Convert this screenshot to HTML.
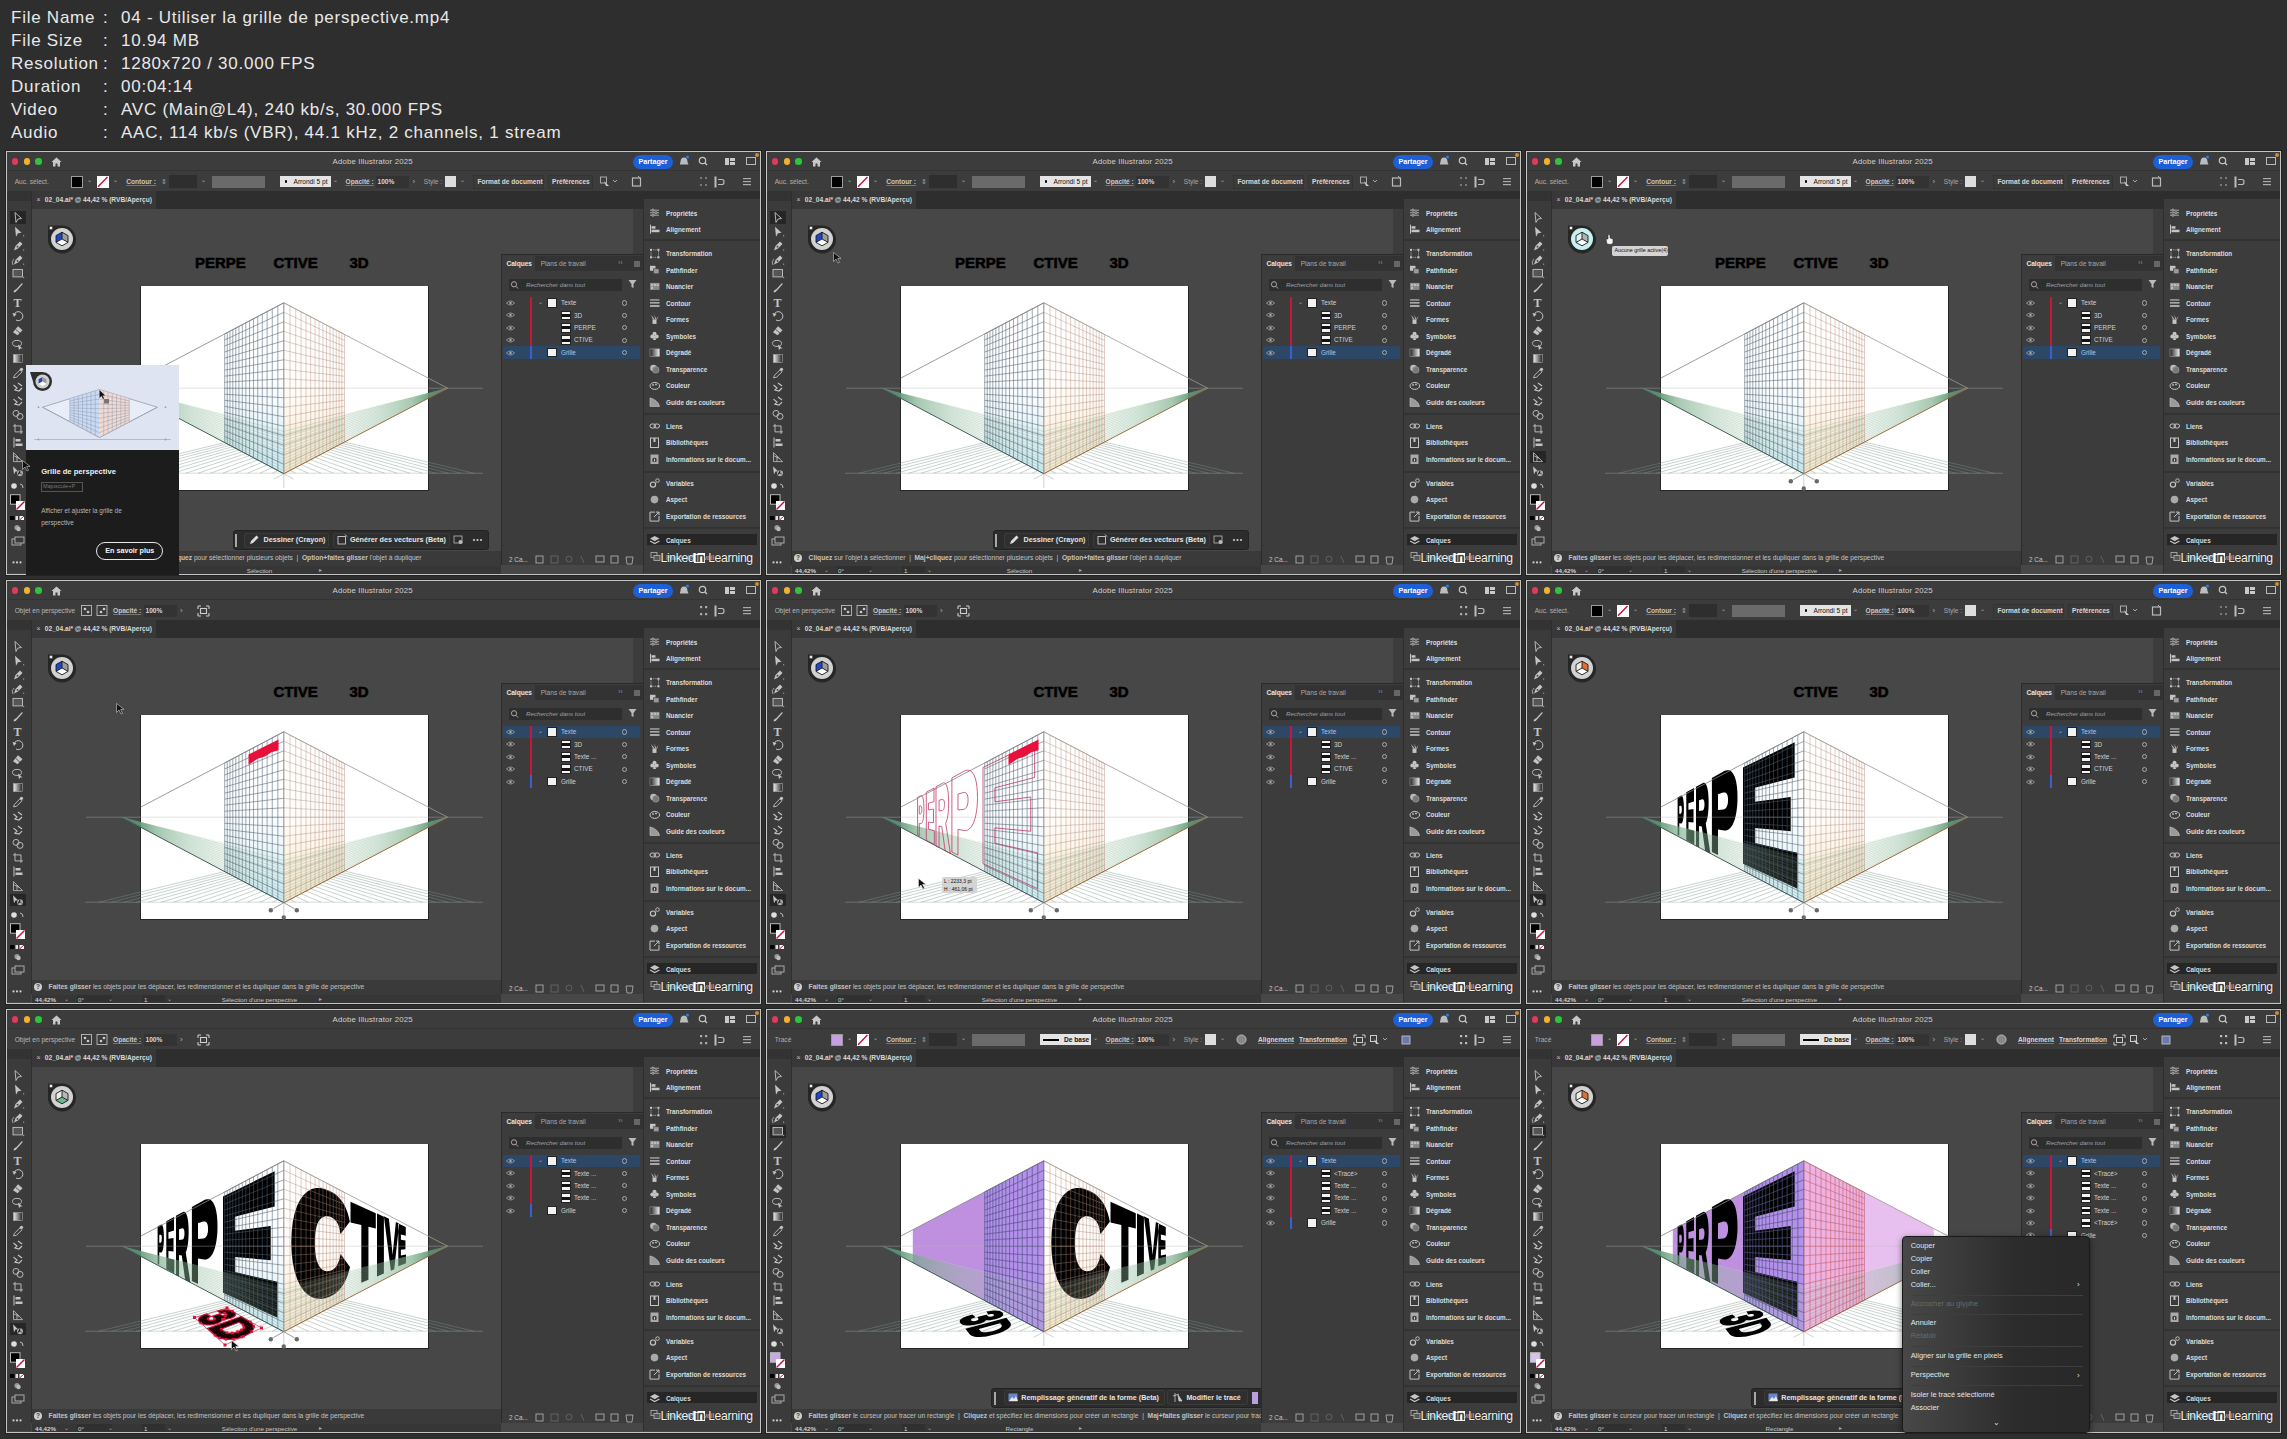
<!DOCTYPE html><html><head><meta charset="utf-8"><style>*{margin:0;padding:0}body{width:2287px;height:1439px;background:#2e2e2e;position:relative;overflow:hidden;font-family:"Liberation Sans", sans-serif}div,svg{position:absolute}.tile{width:755px;height:424px;background:#c4c4c4;overflow:hidden;box-shadow:0 0 0 1px #222}.tile div,.tile svg{position:absolute}.t{white-space:nowrap}.hd{color:#e8e8e8;font-size:17px;line-height:20px;white-space:nowrap;letter-spacing:0.75px}</style></head><body><div class="hd" style="left:11px;top:7.5px">File Name</div><div class="hd" style="left:103px;top:7.5px">:</div><div class="hd" style="left:121px;top:7.5px">04 - Utiliser la grille de perspective.mp4</div><div class="hd" style="left:11px;top:30.5px">File Size</div><div class="hd" style="left:103px;top:30.5px">:</div><div class="hd" style="left:121px;top:30.5px">10.94 MB</div><div class="hd" style="left:11px;top:53.5px">Resolution</div><div class="hd" style="left:103px;top:53.5px">:</div><div class="hd" style="left:121px;top:53.5px">1280x720 / 30.000 FPS</div><div class="hd" style="left:11px;top:76.5px">Duration</div><div class="hd" style="left:103px;top:76.5px">:</div><div class="hd" style="left:121px;top:76.5px">00:04:14</div><div class="hd" style="left:11px;top:99.5px">Video</div><div class="hd" style="left:103px;top:99.5px">:</div><div class="hd" style="left:121px;top:99.5px">AVC (Main@L4), 240 kb/s, 30.000 FPS</div><div class="hd" style="left:11px;top:122.5px">Audio</div><div class="hd" style="left:103px;top:122.5px">:</div><div class="hd" style="left:121px;top:122.5px">AAC, 114 kb/s (VBR), 44.1 kHz, 2 channels, 1 stream</div><div class="tile" style="left:6px;top:151px"><div style="left:1px;top:1px;width:753px;height:422px;background:#474747;"></div><div style="left:1px;top:1px;width:753px;height:19px;background:#3c3c3c;"></div><div style="left:1px;top:19px;width:753px;height:1px;background:#333;"></div><div style="left:5.7px;top:7.4px;width:6.6px;height:6.6px;border-radius:50%;background:#e0395a"></div><div style="left:17.5px;top:7.4px;width:6.6px;height:6.6px;border-radius:50%;background:#f0b030"></div><div style="left:29.3px;top:7.4px;width:6.6px;height:6.6px;border-radius:50%;background:#2ec43c"></div><svg style="left:45px;top:6px" width="11" height="10" viewBox="0 0 11 10"><path d="M5.5 0.5 L10.5 5 L9 5 L9 9.5 L6.5 9.5 L6.5 6.5 L4.5 6.5 L4.5 9.5 L2 9.5 L2 5 L0.5 5 Z" fill="#c8c8c8"/></svg><div class="t" style="left:326.5px;top:6.32px;font-size:7.8px;line-height:9.36px;color:#d0d0d0;font-weight:normal;letter-spacing:0.18px">Adobe Illustrator 2025</div><div class="t" style="left:627px;top:3.9px;width:40px;height:13.9px;border-radius:7px;background:#1d5fd6;color:#fff;font-size:7.2px;line-height:13.9px;text-align:center;font-weight:bold">Partager</div><svg style="left:674px;top:4px" width="40" height="13" viewBox="0 0 40 13"><path d="M4 2.5 Q7.5 2.5 7.5 7 L8.5 9.5 L-0.5 9.5 L0.5 7 Q0.5 2.5 4 2.5Z" fill="#bcbcbc"/><circle cx="7.5" cy="2" r="1.6" fill="#2a7de0"/><circle cx="22.5" cy="5.5" r="3.2" fill="none" stroke="#c8c8c8" stroke-width="1.2"/><path d="M24.8 7.8 L27 10" stroke="#c8c8c8" stroke-width="1.3"/></svg><div style="left:718.5px;top:6.5px;width:10px;height:7px;background:#c8c8c8;"></div><div style="left:723px;top:6.5px;width:1px;height:7px;background:#3c3c3c;"></div><div style="left:723px;top:9.5px;width:6px;height:1px;background:#3c3c3c;"></div><div style="left:739.5px;top:6px;width:10px;height:8px;background:transparent;border:1px solid #b8b8b8;box-sizing:border-box"></div><div style="left:749px;top:1.5px;width:4px;height:4px;border-radius:50%;background:#d08a30"></div><div style="left:1px;top:20px;width:753px;height:20px;background:#3c3c3c;"></div><div class="t" style="left:8.7px;top:26.54px;font-size:6.6px;line-height:7.92px;color:#b0b0b0;font-weight:normal;">Auc. sélect.</div><div style="left:65.3px;top:24.9px;width:11.8px;height:11.7px;background:#000;border:1px solid #9a9a9a;box-sizing:border-box"></div><div class="t" style="left:81px;top:26.4px;font-size:6px;line-height:7.2px;color:#b0b0b0;font-weight:normal;">⌄</div><div style="left:91.3px;top:24.9px;width:11.5px;height:11.7px;background:#fff;"></div><svg style="left:91.3px;top:24.9px" width="11.5" height="11.7"><path d="M1 10.7 L10.5 1" stroke="#c0103a" stroke-width="1.4"/></svg><div class="t" style="left:107px;top:26.4px;font-size:6px;line-height:7.2px;color:#b0b0b0;font-weight:normal;">⌄</div><div class="t" style="left:120.2px;top:27.04px;font-size:6.6px;line-height:7.92px;color:#c8c8c8;font-weight:bold;text-decoration:underline;text-decoration-color:#777">Contour :</div><div class="t" style="left:155px;top:26.8px;font-size:7px;line-height:8.4px;color:#a0a0a0;font-weight:normal;">⇕</div><div style="left:162.9px;top:24px;width:28.5px;height:12.5px;background:#2e2e2e;"></div><div class="t" style="left:195px;top:26.4px;font-size:6px;line-height:7.2px;color:#b0b0b0;font-weight:normal;">⌄</div><div style="left:206px;top:24.5px;width:53.3px;height:12px;background:#6a6a6a;"></div><div style="left:273.8px;top:24.9px;width:51.1px;height:11.1px;background:#e4e4e4;"></div><div style="left:278.5px;top:29.3px;width:2.4px;height:2.4px;border-radius:50%;background:#000"></div><div class="t" style="left:287.5px;top:26.54px;font-size:6.6px;line-height:7.92px;color:#111;font-weight:normal;">Arrondi 5 pt</div><div class="t" style="left:327px;top:26.4px;font-size:6px;line-height:7.2px;color:#b0b0b0;font-weight:normal;">⌄</div><div class="t" style="left:339.6px;top:26.54px;font-size:6.6px;line-height:7.92px;color:#c8c8c8;font-weight:bold;text-decoration:underline;text-decoration-color:#777">Opacité :</div><div style="left:370px;top:24.5px;width:32.5px;height:12px;background:#333;"></div><div class="t" style="left:371.5px;top:26.54px;font-size:6.6px;line-height:7.92px;color:#d8d8d8;font-weight:bold;">100%</div><div class="t" style="left:406.5px;top:25.7px;font-size:8px;line-height:9.6px;color:#b0b0b0;font-weight:normal;">›</div><div class="t" style="left:417.8px;top:27.04px;font-size:6.6px;line-height:7.92px;color:#a8a8a8;font-weight:normal;">Style :</div><div style="left:438.9px;top:24.9px;width:11.1px;height:11.1px;background:#dedede;"></div><div class="t" style="left:454px;top:26.4px;font-size:6px;line-height:7.2px;color:#b0b0b0;font-weight:normal;">⌄</div><div style="left:467px;top:23.5px;width:71px;height:14px;background:#3a3a3a;border:1px solid #333;box-sizing:border-box"></div><div class="t" style="left:471.5px;top:26.54px;font-size:6.6px;line-height:7.92px;color:#d8d8d8;font-weight:bold;">Format de document</div><div style="left:541.5px;top:23.5px;width:45px;height:14px;background:#3a3a3a;border:1px solid #333;box-sizing:border-box"></div><div class="t" style="left:546px;top:26.54px;font-size:6.6px;line-height:7.92px;color:#d8d8d8;font-weight:bold;">Préférences</div><svg style="left:592px;top:24px" width="160" height="14" viewBox="0 0 160 14"><rect x="2.5" y="2" width="6" height="6" fill="none" stroke="#aaa" stroke-width="1"/><path d="M6 6 L11 11 L8 11Z" fill="#ccc"/><path d="M15 5 L17 7 L19 5" stroke="#aaa" fill="none"/><rect x="34.5" y="3" width="8" height="8" fill="none" stroke="#bbb" stroke-width="1.2"/><path d="M40 1 L42 3" stroke="#bbb"/><g fill="#777"><rect x="102" y="2" width="2" height="2"/><rect x="107" y="2" width="2" height="2"/><rect x="102" y="9" width="2" height="2"/><rect x="107" y="9" width="2" height="2"/></g><rect x="116.5" y="1.5" width="2" height="11" fill="#bbb"/><path d="M120 4.5 L124 4.5 Q126 4.5 126 7 Q126 9.5 124 9.5 L120 9.5" stroke="#bbb" fill="none" stroke-width="1.2"/><g fill="#aaa"><rect x="145" y="3" width="8" height="1.2"/><rect x="145" y="6" width="8" height="1.2"/><rect x="145" y="9" width="8" height="1.2"/></g></svg><div style="left:1px;top:40px;width:753px;height:18px;background:#2e2e2e;"></div><div style="left:25.7px;top:40px;width:124.3px;height:18px;background:#383838;"></div><div class="t" style="left:30.5px;top:44.8px;font-size:7px;line-height:8.4px;color:#c0c0c0;font-weight:normal;">×</div><div class="t" style="left:38.8px;top:45.04px;font-size:6.6px;line-height:7.92px;color:#d8d8d8;font-weight:bold;">02_04.ai* @ 44,42 % (RVB/Aperçu)</div><div style="left:627px;top:58px;width:10px;height:45px;background:#3c3c3c;"></div><div style="left:627px;top:103px;width:1px;height:0px;background:#333;"></div><div style="left:134.3px;top:134.5px;width:288.3px;height:205.2px;background:#262626"></div><div style="left:134.8px;top:135px;width:286.8px;height:203.7px;background:#fff"></div><svg style="left:0;top:0" width="755" height="424"><defs><linearGradient id="wl" x1="115.6" y1="0" x2="278" y2="0" gradientUnits="userSpaceOnUse"><stop offset="0" stop-color="#1f7a48" stop-opacity="1"/><stop offset="0.12" stop-color="#5aac72" stop-opacity="0.75"/><stop offset="0.22" stop-color="#86c690" stop-opacity="0.5"/><stop offset="0.45" stop-color="#aedcb4" stop-opacity="0.3"/><stop offset="0.65" stop-color="#c4e6c8" stop-opacity="0.2"/><stop offset="1" stop-color="#c8e8d0" stop-opacity="0.1"/></linearGradient><linearGradient id="wr" x1="441.6" y1="0" x2="278" y2="0" gradientUnits="userSpaceOnUse"><stop offset="0" stop-color="#1f7a48" stop-opacity="1"/><stop offset="0.12" stop-color="#5aac72" stop-opacity="0.75"/><stop offset="0.22" stop-color="#86c690" stop-opacity="0.5"/><stop offset="0.45" stop-color="#aedcb4" stop-opacity="0.3"/><stop offset="0.65" stop-color="#c4e6c8" stop-opacity="0.2"/><stop offset="1" stop-color="#c8e8d0" stop-opacity="0.1"/></linearGradient><linearGradient id="pl" x1="0" y1="150" x2="0" y2="323" gradientUnits="userSpaceOnUse"><stop offset="0" stop-color="#ffffff" stop-opacity="0"/><stop offset="0.5" stop-color="#eef6fb" stop-opacity="0.3"/><stop offset="0.75" stop-color="#d8eef6" stop-opacity="0.7"/><stop offset="1" stop-color="#c4e8f2" stop-opacity="0.9"/></linearGradient><linearGradient id="pr" x1="0" y1="150" x2="0" y2="323" gradientUnits="userSpaceOnUse"><stop offset="0" stop-color="#ffffff" stop-opacity="0"/><stop offset="0.5" stop-color="#fdf4ea" stop-opacity="0.3"/><stop offset="0.75" stop-color="#f8ecd4" stop-opacity="0.7"/><stop offset="1" stop-color="#f4e2c4" stop-opacity="0.9"/></linearGradient><clipPath id="cv"><rect x="25" y="58" width="602" height="341"/></clipPath></defs><g clip-path="url(#cv)"><path d="M277.8 151.8 L218.7 182.92 L218.7 291.55 L277.8 322.7Z" fill="url(#pl)"/><path d="M277.8 151.8 L338.5 183.45 L338.5 291.02 L277.8 322.7Z" fill="url(#pr)"/><path d="M271.83 319.55L266.37 322.2M266.28 316.63L253.99 322.2M261.12 313.91L241.6 322.2M256.29 311.36L229.22 322.2M251.78 308.98L216.83 322.2M247.55 306.75L204.45 322.2M243.57 304.66L192.06 322.2M239.82 302.68L179.68 322.2M236.29 300.82L167.29 322.2M232.95 299.06L154.9 322.2M229.8 297.4L142.52 322.2M226.8 295.82L130.13 322.2M223.96 294.32L117.75 322.2M221.27 292.9L105.36 322.2M218.7 291.55L92.98 322.2M283.99 319.47L289.57 322.2M289.72 316.48L302.29 322.2M295.06 313.69L315.01 322.2M300.03 311.1L327.73 322.2M304.67 308.67L340.45 322.2M309.02 306.4L353.18 322.2M313.1 304.27L365.9 322.2M316.94 302.27L378.62 322.2M320.56 300.38L391.34 322.2M323.97 298.6L404.06 322.2M327.19 296.92L416.78 322.2M330.25 295.32L429.5 322.2M333.14 293.81L442.22 322.2M335.89 292.38L454.94 322.2M338.5 291.02L467.66 322.2" stroke="#7a9488" stroke-opacity="0.7" stroke-width="0.6" fill="none"/><path d="M115.6 237.2 L277.8 322.7 L277.8 277.5 Z" fill="url(#wl)"/><path d="M441.6 237.2 L277.8 322.7 L277.8 277.5 Z" fill="url(#wr)"/><path d="M115.6 237.2L277.8 280.51M441.6 237.2L277.8 280.51M115.6 237.2L277.8 283.53M441.6 237.2L277.8 283.53M115.6 237.2L277.8 286.54M441.6 237.2L277.8 286.54M115.6 237.2L277.8 289.55M441.6 237.2L277.8 289.55M115.6 237.2L277.8 292.57M441.6 237.2L277.8 292.57M115.6 237.2L277.8 295.58M441.6 237.2L277.8 295.58M115.6 237.2L277.8 298.59M441.6 237.2L277.8 298.59M115.6 237.2L277.8 301.61M441.6 237.2L277.8 301.61M115.6 237.2L277.8 304.62M441.6 237.2L277.8 304.62M115.6 237.2L277.8 307.63M441.6 237.2L277.8 307.63M115.6 237.2L277.8 310.65M441.6 237.2L277.8 310.65M115.6 237.2L277.8 313.66M441.6 237.2L277.8 313.66M115.6 237.2L277.8 316.67M441.6 237.2L277.8 316.67M115.6 237.2L277.8 319.69M441.6 237.2L277.8 319.69" stroke="#6a9080" stroke-opacity="0.45" stroke-width="0.5" fill="none"/><path d="M80 237.2 L477 237.2" stroke="#b8b8b8" stroke-opacity="0.55" stroke-width="0.7"/><path d="M79 322.2 L477 322.2" stroke="#a0aea6" stroke-opacity="0.6" stroke-width="0.7"/><path d="M277.8 151.8L218.7 182.92M277.8 161.29L218.7 188.95M277.8 170.79L218.7 194.99M277.8 180.28L218.7 201.02M277.8 189.78L218.7 207.06M277.8 199.27L218.7 213.09M277.8 208.77L218.7 219.13M277.8 218.26L218.7 225.16M277.8 227.76L218.7 231.2M277.8 237.25L218.7 237.23M277.8 246.74L218.7 243.27M277.8 256.24L218.7 249.3M277.8 265.73L218.7 255.34M277.8 275.23L218.7 261.37M277.8 284.72L218.7 267.41M277.8 294.22L218.7 273.44M277.8 303.71L218.7 279.48M277.8 313.21L218.7 285.51M277.8 322.7L218.7 291.55M277.8 151.8L277.8 322.7M271.83 154.94L271.83 319.55M266.28 157.86L266.28 316.63M261.12 160.58L261.12 313.91M256.29 163.12L256.29 311.36M251.78 165.5L251.78 308.98M247.55 167.73L247.55 306.75M243.57 169.82L243.57 304.66M239.82 171.8L239.82 302.68M236.29 173.66L236.29 300.82M232.95 175.41L232.95 299.06M229.8 177.07L229.8 297.4M226.8 178.65L226.8 295.82M223.96 180.14L223.96 294.32M221.27 181.57L221.27 292.9M218.7 182.92L218.7 291.55" stroke="#4c5e70" stroke-opacity="0.9" stroke-width="0.6" fill="none"/><path d="M277.8 151.8L338.5 183.45M277.8 161.29L338.5 189.42M277.8 170.79L338.5 195.4M277.8 180.28L338.5 201.38M277.8 189.78L338.5 207.35M277.8 199.27L338.5 213.33M277.8 208.77L338.5 219.3M277.8 218.26L338.5 225.28M277.8 227.76L338.5 231.26M277.8 237.25L338.5 237.23M277.8 246.74L338.5 243.21M277.8 256.24L338.5 249.18M277.8 265.73L338.5 255.16M277.8 275.23L338.5 261.14M277.8 284.72L338.5 267.11M277.8 294.22L338.5 273.09M277.8 303.71L338.5 279.06M277.8 313.21L338.5 285.04M277.8 322.7L338.5 291.02M277.8 151.8L277.8 322.7M283.99 155.03L283.99 319.47M289.72 158.02L289.72 316.48M295.06 160.8L295.06 313.69M300.03 163.39L300.03 311.1M304.67 165.81L304.67 308.67M309.02 168.08L309.02 306.4M313.1 170.21L313.1 304.27M316.94 172.21L316.94 302.27M320.56 174.09L320.56 300.38M323.97 175.87L323.97 298.6M327.19 177.55L327.19 296.92M330.25 179.14L330.25 295.32M333.14 180.65L333.14 293.81M335.89 182.09L335.89 292.38M338.5 183.45L338.5 291.02" stroke="#b08472" stroke-opacity="0.75" stroke-width="0.55" fill="none"/><path d="M277.8 151.8 L134.8 227.09" stroke="#808080" stroke-width="0.8"/><path d="M277.8 151.8 L441.6 237.2" stroke="#a09890" stroke-width="0.8"/><path d="M115.6 237.2 L277.8 322.7" stroke="#3f5a5a" stroke-width="1"/><path d="M441.6 237.2 L277.8 322.7" stroke="#9a6a40" stroke-width="1"/><path d="M277.8 322.7 L277.8 337 M267.8 328.2 L277.8 322.7 L287.8 328.2" stroke="#b0b0b0" stroke-width="0.6" fill="none"/></g></svg><div style="left:1px;top:40px;width:23.5px;height:382px;background:#3b3b3b;"></div><div style="left:24.5px;top:58px;width:1px;height:356px;background:#2f2f2f;"></div><div style="left:1px;top:40px;width:23.5px;height:10px;background:#333;"></div><div style="left:4.4px;top:60.1px;width:15.3px;height:12.7px;background:#262626;"></div><svg style="left:1px;top:0" width="24" height="424" viewBox="1 0 24 424"><defs><linearGradient id="tg"><stop offset="0" stop-color="#eee"/><stop offset="1" stop-color="#222"/></linearGradient></defs><path d="M9 61.5 L15.5 67.5 L12 68 L10 71.5 Z" fill="none" stroke="#c4c4c4" stroke-width="0.9"/><path d="M9 75.7 L15.5 81.7 L12 82.2 L10 85.7 Z" fill="#c4c4c4"/><rect x="17" y="84.2" width="1.2" height="1.2" fill="#999"/><path d="M8 99.4 L9.5 94.9 L14 90.4 L16.5 92.9 L12 97.4 Z" fill="#c4c4c4"/><circle cx="11.5" cy="95.7" r="0.9" fill="#3b3b3b"/><rect x="17" y="98.4" width="1.2" height="1.2" fill="#999"/><path d="M8 113.6 L9.5 109.1 L14 104.6 L16.5 107.1 L12 111.6 Z" fill="#c4c4c4"/><circle cx="11.5" cy="109.9" r="0.9" fill="#3b3b3b"/><rect x="17" y="112.6" width="1.2" height="1.2" fill="#999"/><path d="M7 114.1 Q5 110.1 8 108.1" stroke="#c4c4c4" fill="none" stroke-width="0.8"/><rect x="7" y="118.4" width="9.5" height="7.5" fill="#555" stroke="#c4c4c4" stroke-width="0.9"/><rect x="17" y="125.9" width="1.2" height="1.2" fill="#999"/><path d="M7.5 141.6 Q8 138.6 10 138.6 L16 132.1 L16.8 132.9 L11 139.6 Q10 141.6 7.5 141.6Z" fill="#c4c4c4"/><text x="7.5" y="155.6" font-family="Liberation Serif" font-weight="bold" font-size="12" fill="#c4c4c4">T</text><path d="M8 164 A4.5 4.5 0 1 1 10 169" stroke="#c4c4c4" fill="none" stroke-width="1"/><path d="M6.5 162 L8 166 L10.5 163Z" fill="#c4c4c4"/><path d="M7 181.2 L12 175.2 L16.5 179.2 L11.5 184.2 Z" fill="#c4c4c4"/><path d="M9.5 178.2 L14 182.2" stroke="#3b3b3b" stroke-width="0.8"/><ellipse cx="11" cy="192.4" rx="4.5" ry="3" fill="none" stroke="#c4c4c4" stroke-width="0.9"/><path d="M12 193.4 L16.5 197.4 L14 197.6 L13 199.4Z" fill="#c4c4c4"/><rect x="7.5" y="203.6" width="9" height="8" fill="url(#tg)" stroke="#aaa" stroke-width="0.6"/><path d="M7.5 226.8 L8.5 224.3 L14 218.8 L16 220.8 L10.5 226.3Z" fill="none" stroke="#c4c4c4" stroke-width="0.9"/><circle cx="15.5" cy="218.3" r="1.6" fill="#c4c4c4"/><path d="M7.5 234 L11 237 L9 239 L13 240 L16 237" stroke="#c4c4c4" fill="none" stroke-width="1.2"/><path d="M12 232 L16 235" stroke="#c4c4c4" stroke-width="1.2"/><path d="M7.5 248.1 L11 251.1 L9 253.1 L13 254.1 L16 251.1" stroke="#c4c4c4" fill="none" stroke-width="1.2"/><path d="M12 246.1 L16 249.1" stroke="#c4c4c4" stroke-width="1.2"/><circle cx="10" cy="262.4" r="3" fill="none" stroke="#c4c4c4" stroke-width="0.9"/><circle cx="14" cy="265.4" r="3" fill="none" stroke="#c4c4c4" stroke-width="0.9"/><path d="M9 272.9 L9 280.9 L17 280.9 M7 274.9 L15 274.9 L15 282.9" stroke="#c4c4c4" fill="none" stroke-width="0.9"/><rect x="7.5" y="286.5" width="1" height="10" fill="#c4c4c4"/><rect x="9.5" y="288" width="5" height="2.5" fill="#c4c4c4"/><rect x="9.5" y="292.5" width="7" height="2.5" fill="#c4c4c4"/><path d="M7.5 301.6 L7.5 310.6 L16.5 310.6 Z M7.5 304.6 L13.5 307.6 M11 305.1 L11 310.6" stroke="#c4c4c4" fill="none" stroke-width="0.8"/><path d="M7 315.2 L12 320.2 L9.5 320.5 L8 323.2Z" fill="#c4c4c4"/><circle cx="14" cy="322.2" r="3" fill="#aaa"/><path d="M14 319.2 L14 322.2 L11.5 323.7 M14 322.2 L16.5 323.7" stroke="#3b3b3b" stroke-width="0.6"/><circle cx="8" cy="335" r="2.8" fill="#ddd"/><path d="M14 333 Q17 333 17 337" stroke="#bbb" fill="none"/><rect x="4.5" y="343.7" width="9.5" height="9.5" fill="#000" stroke="#bbb" stroke-width="1"/><rect x="10" y="350" width="9" height="9" fill="#fff"/><path d="M10.5 358.5 L18.5 350.5" stroke="#c0103a" stroke-width="1.4"/><rect x="4" y="365" width="4.5" height="4" fill="#000"/><rect x="9.5" y="365" width="2.5" height="4" fill="#ddd"/><rect x="13.5" y="365" width="4.5" height="4" fill="#fff"/><path d="M13.5 369 L18 365" stroke="#c0103a"/><circle cx="11" cy="376.5" r="2.6" fill="#999"/><circle cx="12.5" cy="378" r="2.2" fill="#bbb"/><rect x="6" y="388" width="9" height="6" fill="none" stroke="#aaa"/><rect x="9" y="386" width="9" height="6" fill="#3b3b3b" stroke="#aaa"/><g fill="#ccc"><circle cx="7.5" cy="411.4" r="1.1"/><circle cx="11" cy="411.4" r="1.1"/><circle cx="14.5" cy="411.4" r="1.1"/></g></svg><svg style="left:40.6px;top:73.3px" width="30" height="30" viewBox="-15 -15 30 30"><path d="M-14 -13.5 L0 -13.5 A14 14 0 1 1 -14 0 Z" fill="#262626"/><circle r="11" fill="#d2d2d2"/><path d="M0 -6.8 L0 0 L-6 3.4 L-6 -3.4Z" fill="#1f45c8"/><path d="M0 -6.8 L6 -3.4 L6 3.4 L0 0Z" fill="#9a9a9a"/><path d="M0 0 L6 3.4 L0 6.8 L-6 3.4Z" fill="#ffffff"/><path d="M0 -6.8 L6 -3.4 L6 3.4 L0 6.8 L-6 3.4 L-6 -3.4Z M0 0 L0 -6.8 M0 0 L-6 3.4 M0 0 L6 3.4" fill="none" stroke="#1a1a1a" stroke-width="0.9"/><rect x="-12.3" y="-12.3" width="2.6" height="2.6" fill="#eee"/></svg><div class="t" style="left:189px;top:102.5px;font-size:15px;line-height:18px;color:#000;font-weight:bold;-webkit-text-stroke:0.55px #000">PERPE</div><div class="t" style="left:267.5px;top:102.5px;font-size:15px;line-height:18px;color:#000;font-weight:bold;-webkit-text-stroke:0.55px #000">CTIVE</div><div class="t" style="left:343.5px;top:102.5px;font-size:15px;line-height:18px;color:#000;font-weight:bold;-webkit-text-stroke:0.55px #000">3D</div><div style="left:25.5px;top:399.5px;width:469px;height:15px;background:#3a3a3a;"></div><div style="left:25.5px;top:414.5px;width:469px;height:8px;background:#363636;"></div><div class="t" style="left:28px;top:403.2px;width:8px;height:8px;border-radius:50%;background:#cfcfcf;color:#3a3a3a;font-size:6.5px;line-height:8px;text-align:center;font-weight:bold">?</div><div class="t" style="left:42.6px;top:403.31px;font-size:6.65px;line-height:7.98px;color:#c4c4c4;font-weight:normal;"><b>Cliquez</b> sur l'objet à sélectionner&nbsp; |&nbsp; <b>Maj+cliquez</b> pour sélectionner plusieurs objets&nbsp; |&nbsp; <b>Option+faites glisser</b> l'objet à dupliquer</div><div class="t" style="left:29px;top:416.08px;font-size:6.2px;line-height:7.44px;color:#d0d0d0;font-weight:bold;">44,42%</div><div class="t" style="left:58px;top:416px;font-size:5.5px;line-height:6.6px;color:#aaa;font-weight:normal;">⌄</div><div style="left:71px;top:415px;width:35px;height:7px;background:#303030;"></div><div class="t" style="left:72px;top:416.08px;font-size:6.2px;line-height:7.44px;color:#d0d0d0;font-weight:normal;">0°</div><div class="t" style="left:102px;top:416px;font-size:5.5px;line-height:6.6px;color:#aaa;font-weight:normal;">⌄</div><div style="left:136px;top:415px;width:23px;height:7px;background:#303030;"></div><div class="t" style="left:138px;top:416.08px;font-size:6.2px;line-height:7.44px;color:#d0d0d0;font-weight:normal;">1</div><div class="t" style="left:161px;top:416px;font-size:5.5px;line-height:6.6px;color:#aaa;font-weight:normal;">⌄</div><div class="t" style="left:183.5px;top:416.08px;font-size:6.2px;line-height:7.44px;color:#c8c8c8;font-weight:normal;width:140px;text-align:center">Sélection</div><div class="t" style="left:313px;top:416.2px;font-size:6px;line-height:7.2px;color:#aaa;font-weight:normal;">▸</div><div style="left:226.5px;top:379px;width:256.2px;height:19.8px;background:#2c2c2c;border:1px solid #222;border-radius:3px;box-sizing:border-box"></div><div style="left:229px;top:382.5px;width:1.6px;height:13px;background:#a8a8a8;"></div><div style="left:238.4px;top:381.5px;width:84.5px;height:15px;background:#2f2f2f;border:1px solid #3a3a3a;box-sizing:border-box;border-radius:2px"></div><svg style="left:243px;top:384px" width="10" height="10"><path d="M1 9 L2 6 L7.5 0.5 L9.5 2.5 L4 8 Z" fill="#ddd"/></svg><div class="t" style="left:257.5px;top:384.68px;font-size:7.2px;line-height:8.64px;color:#e4e4e4;font-weight:bold;">Dessiner (Crayon)</div><div style="left:326.8px;top:381.5px;width:117.2px;height:15px;background:#2f2f2f;border:1px solid #3a3a3a;box-sizing:border-box;border-radius:2px"></div><svg style="left:331px;top:383px" width="11" height="11"><rect x="1" y="2.5" width="7.5" height="7.5" fill="none" stroke="#ccc" stroke-width="0.9"/><path d="M8 0.5 L10 2.5" stroke="#ccc"/></svg><div class="t" style="left:344px;top:384.68px;font-size:7.2px;line-height:8.64px;color:#e4e4e4;font-weight:bold;">Générer des vecteurs (Beta)</div><svg style="left:447px;top:384px" width="34" height="10"><rect x="1" y="1" width="8" height="7" fill="none" stroke="#bbb" stroke-width="0.8"/><circle cx="7.5" cy="7" r="2" fill="#bbb"/><g fill="#ccc"><circle cx="21" cy="5" r="1.1"/><circle cx="24.5" cy="5" r="1.1"/><circle cx="28" cy="5" r="1.1"/></g></svg><div style="left:494.5px;top:103px;width:142px;height:311px;background:#3c3c3c;border-left:1px solid #2a2a2a;border-top:1px solid #2a2a2a;box-sizing:border-box"></div><div style="left:495.5px;top:105px;width:141px;height:15.3px;background:#333;"></div><div style="left:495.5px;top:105px;width:33.5px;height:15.3px;background:#3c3c3c;"></div><div class="t" style="left:500.4px;top:108.54px;font-size:6.6px;line-height:7.92px;color:#e6e6e6;font-weight:bold;">Calques</div><div class="t" style="left:534.7px;top:108.54px;font-size:6.6px;line-height:7.92px;color:#a8a8a8;font-weight:normal;">Plans de travail</div><div class="t" style="left:612px;top:108.3px;font-size:7px;line-height:8.4px;color:#888;font-weight:normal;">››</div><div style="left:628px;top:109.5px;width:6px;height:6px;background:#666;"></div><div style="left:503px;top:128px;width:113px;height:11.8px;background:#2e2e2e;"></div><svg style="left:504px;top:129px" width="10" height="10"><circle cx="4" cy="4.3" r="2.6" fill="none" stroke="#aaa" stroke-width="1"/><path d="M6 6.3 L8 8.5" stroke="#aaa"/></svg><div class="t" style="left:520px;top:130.28px;font-size:6.2px;line-height:7.44px;color:#a0a0a0;font-weight:normal;"><i>Rechercher dans tout</i></div><svg style="left:622px;top:128px" width="10" height="10"><path d="M0.5 1 L8.5 1 L5.5 5 L5.5 9 L3.5 8 L3.5 5 Z" fill="#bbb"/></svg><svg style="left:500px;top:149px" width="9" height="6"><path d="M0.5 3 Q4.5 -1 8.5 3 Q4.5 7 0.5 3Z" fill="none" stroke="#aaa" stroke-width="0.8"/><circle cx="4.5" cy="3" r="1.2" fill="#aaa"/></svg><div style="left:523.5px;top:145.8px;width:2.5px;height:12.4px;background:#c8153c;"></div><div class="t" style="left:531.5px;top:148.4px;font-size:6px;line-height:7.2px;color:#aaa;font-weight:normal;">⌄</div><div style="left:541px;top:147.2px;width:10.4px;height:9.6px;background:#f2f2f2;border:0.6px solid #222;box-sizing:border-box"></div><div class="t" style="left:555px;top:148.16px;font-size:6.4px;line-height:7.68px;color:#d0d0d0;font-weight:normal;">Texte</div><div style="left:616px;top:149.4px;width:5.2px;height:5.2px;border-radius:50%;border:0.8px solid #aaa;box-sizing:border-box"></div><svg style="left:500px;top:161.4px" width="9" height="6"><path d="M0.5 3 Q4.5 -1 8.5 3 Q4.5 7 0.5 3Z" fill="none" stroke="#aaa" stroke-width="0.8"/><circle cx="4.5" cy="3" r="1.2" fill="#aaa"/></svg><div style="left:523.5px;top:158.2px;width:2.5px;height:12.4px;background:#c8153c;"></div><div style="left:555px;top:159.6px;width:10px;height:9.6px;background:#f2f2f2;border:0.6px solid #222;box-sizing:border-box"></div><div style="left:556px;top:162.9px;width:8px;height:3px;background:#111;"></div><div class="t" style="left:568px;top:160.56px;font-size:6.4px;line-height:7.68px;color:#d0d0d0;font-weight:normal;">3D</div><div style="left:616px;top:161.8px;width:5.2px;height:5.2px;border-radius:50%;border:0.8px solid #aaa;box-sizing:border-box"></div><svg style="left:500px;top:173.8px" width="9" height="6"><path d="M0.5 3 Q4.5 -1 8.5 3 Q4.5 7 0.5 3Z" fill="none" stroke="#aaa" stroke-width="0.8"/><circle cx="4.5" cy="3" r="1.2" fill="#aaa"/></svg><div style="left:523.5px;top:170.6px;width:2.5px;height:12.4px;background:#c8153c;"></div><div style="left:555px;top:172px;width:10px;height:9.6px;background:#f2f2f2;border:0.6px solid #222;box-sizing:border-box"></div><div style="left:556px;top:175.3px;width:8px;height:3px;background:#111;"></div><div class="t" style="left:568px;top:172.96px;font-size:6.4px;line-height:7.68px;color:#d0d0d0;font-weight:normal;">PERPE</div><div style="left:616px;top:174.2px;width:5.2px;height:5.2px;border-radius:50%;border:0.8px solid #aaa;box-sizing:border-box"></div><svg style="left:500px;top:186.2px" width="9" height="6"><path d="M0.5 3 Q4.5 -1 8.5 3 Q4.5 7 0.5 3Z" fill="none" stroke="#aaa" stroke-width="0.8"/><circle cx="4.5" cy="3" r="1.2" fill="#aaa"/></svg><div style="left:523.5px;top:183px;width:2.5px;height:12.4px;background:#c8153c;"></div><div style="left:555px;top:184.4px;width:10px;height:9.6px;background:#f2f2f2;border:0.6px solid #222;box-sizing:border-box"></div><div style="left:556px;top:187.7px;width:8px;height:3px;background:#111;"></div><div class="t" style="left:568px;top:185.36px;font-size:6.4px;line-height:7.68px;color:#d0d0d0;font-weight:normal;">CTIVE</div><div style="left:616px;top:186.6px;width:5.2px;height:5.2px;border-radius:50%;border:0.8px solid #aaa;box-sizing:border-box"></div><div style="left:496.5px;top:195.4px;width:137px;height:12.4px;background:#2d4766;"></div><svg style="left:500px;top:198.6px" width="9" height="6"><path d="M0.5 3 Q4.5 -1 8.5 3 Q4.5 7 0.5 3Z" fill="none" stroke="#aaa" stroke-width="0.8"/><circle cx="4.5" cy="3" r="1.2" fill="#aaa"/></svg><div style="left:523.5px;top:195.4px;width:2.5px;height:12.4px;background:#3a5fd0;"></div><div style="left:541px;top:196.8px;width:10.4px;height:9.6px;background:#f2f2f2;border:0.6px solid #222;box-sizing:border-box"></div><div class="t" style="left:555px;top:197.76px;font-size:6.4px;line-height:7.68px;color:#a8c8f0;font-weight:normal;">Grille</div><div style="left:616px;top:199px;width:5.2px;height:5.2px;border-radius:50%;border:0.8px solid #aaa;box-sizing:border-box"></div><div style="left:495.5px;top:401px;width:141px;height:13px;background:#3c3c3c;"></div><div class="t" style="left:503px;top:404.96px;font-size:6.4px;line-height:7.68px;color:#c8c8c8;font-weight:normal;">2 Ca...</div><svg style="left:520px;top:403px" width="115" height="11"><g fill="none" stroke="#aaa" stroke-width="0.9"><rect x="10" y="2" width="7" height="7"/><rect x="70" y="2" width="8" height="6"/><rect x="85" y="2" width="7" height="7"/><path d="M100 3 L107 3 L106 10 L101 10Z"/></g><g fill="none" stroke="#666" stroke-width="0.9"><rect x="25" y="2" width="7" height="7"/><circle cx="43" cy="5" r="3"/><path d="M55 2 L58 9"/></g></svg><div style="left:637px;top:40px;width:117px;height:382px;background:#2e2e2e;"></div><div style="left:638px;top:48px;width:116px;height:374px;background:#3c3c3c;"></div><div style="left:638px;top:88px;width:116px;height:2px;background:#333;"></div><div style="left:638px;top:262px;width:116px;height:2px;background:#333;"></div><div style="left:638px;top:320px;width:116px;height:2px;background:#333;"></div><div style="left:638px;top:376px;width:116px;height:2px;background:#333;"></div><div style="left:641px;top:382.7px;width:110px;height:11.7px;background:#262626;"></div><div class="t" style="left:660px;top:58.59px;font-size:6.35px;line-height:7.62px;color:#dcdcdc;font-weight:bold;">Propriétés</div><div class="t" style="left:660px;top:75.09px;font-size:6.35px;line-height:7.62px;color:#dcdcdc;font-weight:bold;">Alignement</div><div class="t" style="left:660px;top:99.19px;font-size:6.35px;line-height:7.62px;color:#dcdcdc;font-weight:bold;">Transformation</div><div class="t" style="left:660px;top:115.69px;font-size:6.35px;line-height:7.62px;color:#dcdcdc;font-weight:bold;">Pathfinder</div><div class="t" style="left:660px;top:132.29px;font-size:6.35px;line-height:7.62px;color:#dcdcdc;font-weight:bold;">Nuancier</div><div class="t" style="left:660px;top:148.79px;font-size:6.35px;line-height:7.62px;color:#dcdcdc;font-weight:bold;">Contour</div><div class="t" style="left:660px;top:165.29px;font-size:6.35px;line-height:7.62px;color:#dcdcdc;font-weight:bold;">Formes</div><div class="t" style="left:660px;top:181.79px;font-size:6.35px;line-height:7.62px;color:#dcdcdc;font-weight:bold;">Symboles</div><div class="t" style="left:660px;top:198.29px;font-size:6.35px;line-height:7.62px;color:#dcdcdc;font-weight:bold;">Dégradé</div><div class="t" style="left:660px;top:214.79px;font-size:6.35px;line-height:7.62px;color:#dcdcdc;font-weight:bold;">Transparence</div><div class="t" style="left:660px;top:231.29px;font-size:6.35px;line-height:7.62px;color:#dcdcdc;font-weight:bold;">Couleur</div><div class="t" style="left:660px;top:247.79px;font-size:6.35px;line-height:7.62px;color:#dcdcdc;font-weight:bold;">Guide des couleurs</div><div class="t" style="left:660px;top:271.89px;font-size:6.35px;line-height:7.62px;color:#dcdcdc;font-weight:bold;">Liens</div><div class="t" style="left:660px;top:288.39px;font-size:6.35px;line-height:7.62px;color:#dcdcdc;font-weight:bold;">Bibliothèques</div><div class="t" style="left:660px;top:304.89px;font-size:6.35px;line-height:7.62px;color:#dcdcdc;font-weight:bold;">Informations sur le docum...</div><div class="t" style="left:660px;top:328.99px;font-size:6.35px;line-height:7.62px;color:#dcdcdc;font-weight:bold;">Variables</div><div class="t" style="left:660px;top:345.49px;font-size:6.35px;line-height:7.62px;color:#dcdcdc;font-weight:bold;">Aspect</div><div class="t" style="left:660px;top:361.99px;font-size:6.35px;line-height:7.62px;color:#dcdcdc;font-weight:bold;">Exportation de ressources</div><div class="t" style="left:660px;top:385.79px;font-size:6.35px;line-height:7.62px;color:#dcdcdc;font-weight:bold;">Calques</div><div class="t" style="left:660px;top:402.54px;font-size:6.6px;line-height:7.92px;color:#9a9a9a;font-weight:bold;">Plans de travail</div><svg style="left:0;top:0" width="755" height="424"><g stroke="#c4c4c4" stroke-width="0.8" fill="none"><path d="M644 59.2h9M644 61.7h9M644 64.2h9"/><circle cx="647" cy="59.2" r="1.1" fill="#3c3c3c"/><circle cx="650" cy="61.7" r="1.1" fill="#3c3c3c"/><circle cx="647" cy="64.2" r="1.1" fill="#3c3c3c"/></g><g fill="#c4c4c4"><rect x="644" y="73.7" width="1" height="9"/><rect x="645.5" y="75.2" width="4" height="2.5"/><rect x="645.5" y="78.7" width="8" height="2.5"/></g><g fill="none" stroke="#c4c4c4" stroke-width="0.8" stroke-dasharray="1.2 1"><rect x="645" y="98.8" width="7.5" height="7.5"/></g><g fill="#c4c4c4"><rect x="644" y="97.8" width="2" height="2"/><rect x="651.5" y="97.8" width="2" height="2"/><rect x="644" y="105.3" width="2" height="2"/><rect x="651.5" y="105.3" width="2" height="2"/></g><rect x="644" y="114.8" width="5.5" height="5" fill="#c4c4c4"/><rect x="647.5" y="117.8" width="5.5" height="5" fill="#999" stroke="#3c3c3c" stroke-width="0.6"/><rect x="644" y="131.9" width="9.5" height="7" fill="#888"/><g fill="#bbb"><rect x="645" y="132.70000000000002" width="2.2" height="2.4"/><rect x="647.8" y="132.70000000000002" width="2.2" height="2.4"/><rect x="650.6" y="132.70000000000002" width="2.2" height="2.4"/><rect x="645" y="135.9" width="2.2" height="2.4"/></g><g fill="#c4c4c4"><rect x="644" y="148.4" width="9.5" height="1.1"/><rect x="644" y="151.20000000000002" width="9.5" height="1.3"/><rect x="644" y="154.20000000000002" width="9.5" height="1.6"/></g><g fill="#c4c4c4"><rect x="646.5" y="168.4" width="4" height="4.5"/><path d="M647 168.4 L645 163.9 L648 167.4Z M649 168.4 L648.5 163.4 L650 167.9Z M650 168.4 L652.5 164.9 L651 168.4Z"/></g><g fill="#c4c4c4"><circle cx="648.5" cy="182.70000000000002" r="2"/><circle cx="646.3" cy="185.4" r="2"/><circle cx="650.7" cy="185.4" r="2"/><path d="M648 184.9 L647 188.9 L650 188.9 L649 184.9Z"/></g><defs><linearGradient id="gd"><stop offset="0" stop-color="#222"/><stop offset="1" stop-color="#eee"/></linearGradient></defs><rect x="644" y="197.9" width="9.5" height="7.5" fill="url(#gd)" stroke="#aaa" stroke-width="0.5"/><circle cx="647.5" cy="217.1" r="3.3" fill="#bbb"/><circle cx="649.8" cy="218.9" r="3.3" fill="#777" stroke="#aaa" stroke-width="0.5"/><ellipse cx="648.8" cy="234.9" rx="4.8" ry="3.5" fill="none" stroke="#c4c4c4" stroke-width="1"/><g fill="#c4c4c4"><circle cx="647" cy="233.9" r="0.9"/><circle cx="650" cy="233.4" r="0.9"/></g><path d="M644 255.4 L644 246.9 Q652 248.9 653.5 255.4Z" fill="#999" stroke="#ccc" stroke-width="0.6"/><g fill="none" stroke="#c4c4c4" stroke-width="1"><rect x="644" y="273" width="5.5" height="4" rx="2"/><rect x="648" y="273" width="5.5" height="4" rx="2"/></g><rect x="644.5" y="287.0" width="8" height="9.5" fill="none" stroke="#c4c4c4" stroke-width="1"/><rect x="647.5" y="287.0" width="2" height="4" fill="#c4c4c4"/><rect x="644.5" y="303.5" width="8" height="9.5" fill="#aaa"/><circle cx="648.5" cy="309" r="2.3" fill="#3c3c3c"/><rect x="648" y="308" width="1" height="2.5" fill="#ccc"/><circle cx="647" cy="333.6" r="2.6" fill="none" stroke="#c4c4c4" stroke-width="1.2"/><circle cx="651.5" cy="329.6" r="1.8" fill="none" stroke="#c4c4c4" stroke-width="0.9"/><circle cx="648.5" cy="348.6" r="3.8" fill="#aaa"/><path d="M649 361.1 L644 361.1 L644 370.1 L653 370.1 L653 365.1" fill="none" stroke="#c4c4c4" stroke-width="1"/><path d="M648 366.1 L653 361.1 M650 361.1 L653 361.1 L653 364.1" stroke="#c4c4c4" stroke-width="1" fill="none"/><path d="M648.7 384.9 L653.5 387.59999999999997 L648.7 390.29999999999995 L644 387.59999999999997Z" fill="#c4c4c4"/><path d="M644 389.9 L648.7 392.59999999999997 L653.5 389.9" fill="none" stroke="#c4c4c4" stroke-width="1.2"/><rect x="645" y="401.5" width="6" height="5" fill="none" stroke="#aaa" stroke-width="0.9"/><rect x="648" y="404.5" width="6" height="5" fill="#555" stroke="#aaa" stroke-width="0.9"/></svg><div class="t" style="left:654.5px;top:399.68px;font-size:12.2px;line-height:14.64px;color:#f4f4f4;font-weight:normal;letter-spacing:-0.35px;text-shadow:0 0 1px #000">Linked<span style="display:inline-block;background:#fff;color:#3c3c3c;padding:0 1px;line-height:10px">in</span> Learning</div><div style="left:20.3px;top:213.9px;width:152.5px;height:210px;background:#1c1c1c;"></div><div style="left:20.3px;top:213.9px;width:152.5px;height:85.2px;background:#dfe4f2;"></div><svg style="left:20.3px;top:213.9px" width="152.5" height="85.2"><path d="M16.5 42.2 L73.5 24.5 L131.4 42.2 L73.5 72.5 Z" fill="#e8eef8" stroke="#8a90a0" stroke-width="0.7"/><path d="M73.5 24.5 L43.8 33.72 L43.8 56.71 L73.5 72.5Z" fill="#c0d4f0" fill-opacity="0.8"/><path d="M73.5 24.5 L103.3 33.61 L103.3 56.91 L73.5 72.5Z" fill="#f4d4c8" fill-opacity="0.8"/><path d="M69.26 25.82L69.26 70.24M77.76 25.8L77.76 70.27M65.01 27.14L65.01 67.99M82.01 27.1L82.01 68.04M60.77 28.45L60.77 65.73M86.27 28.4L86.27 65.82M56.53 29.77L56.53 63.48M90.53 29.71L90.53 63.59M52.29 31.09L52.29 61.22M94.79 31.01L94.79 61.36M48.04 32.41L48.04 58.97M99.04 32.31L99.04 59.13M43.8 33.72L43.8 56.71M103.3 33.61L103.3 56.91M73.5 29.3L43.8 36.02M73.5 29.3L103.3 35.94M73.5 34.1L43.8 38.32M73.5 34.1L103.3 38.27M73.5 38.9L43.8 40.62M73.5 38.9L103.3 40.6M73.5 43.7L43.8 42.92M73.5 43.7L103.3 42.93M73.5 48.5L43.8 45.22M73.5 48.5L103.3 45.26M73.5 53.3L43.8 47.52M73.5 53.3L103.3 47.59M73.5 58.1L43.8 49.82M73.5 58.1L103.3 49.92M73.5 62.9L43.8 52.11M73.5 62.9L103.3 52.25M73.5 67.7L43.8 54.41M73.5 67.7L103.3 54.58" stroke="#8a96ac" stroke-width="0.45" fill="none"/><path d="M16.5 42.2 L73.5 72.5 L131.4 42.2 M8 74.5 L145 74.5" stroke="#9aa0b0" stroke-width="0.6" fill="none"/><g fill="#9aa0b0"><circle cx="12.5" cy="42.2" r="0.9"/><circle cx="139.5" cy="42.2" r="0.9"/><circle cx="12.5" cy="74.5" r="0.9"/><circle cx="139.5" cy="74.5" r="0.9"/></g><path d="M4 7 L16.5 7 A9.5 9.5 0 1 1 7 16.5 Z" fill="#2e2e2e"/><circle cx="16.5" cy="16.5" r="7" fill="#d0d0d0"/><path d="M16.5 12 L16.5 16.5 L12.6 18.7 L12.6 14.2Z" fill="#1f45c8"/><path d="M16.5 12 L20.4 14.2 L20.4 18.7 L16.5 16.5Z" fill="#999"/><path d="M16.5 16.5 L20.4 18.7 L16.5 21 L12.6 18.7Z" fill="#fff"/><path d="M73.5 25 L73.5 33 L75.5 31 L77 34 L78 33.5 L76.5 30.5 L79 30.5Z" fill="#111"/><rect x="78" y="34" width="5" height="4.5" fill="#777"/></svg><div class="t" style="left:35.2px;top:315.94px;font-size:7.6px;line-height:9.12px;color:#f0f0f0;font-weight:bold;">Grille de perspective</div><div style="left:35px;top:330.5px;width:41.6px;height:10px;background:transparent;border:0.8px solid #555;box-sizing:border-box"></div><div class="t" style="left:37px;top:332.34px;font-size:5.6px;line-height:6.72px;color:#777;font-weight:normal;">Majuscule+P</div><div class="t" style="left:35.2px;top:355.66px;font-size:6.4px;line-height:7.68px;color:#b8b8b8;font-weight:normal;">Afficher et ajuster la grille de</div><div class="t" style="left:35.2px;top:368.16px;font-size:6.4px;line-height:7.68px;color:#b8b8b8;font-weight:normal;">perspective</div><div class="t" style="left:90.4px;top:391.4px;width:66.8px;height:18px;border:1.2px solid #e8e8e8;border-radius:9px;box-sizing:border-box;color:#f4f4f4;font-size:7.2px;line-height:15.6px;text-align:center;font-weight:bold">En savoir plus</div><svg style="left:16px;top:309px" width="10" height="12"><path d="M0.5 0.5 L0.5 9.5 L3 7 L5 11 L6.5 10.3 L4.6 6.4 L8 6.4 Z" fill="#111" stroke="#eee" stroke-width="0.5"/></svg></div><div class="tile" style="left:766px;top:151px"><div style="left:1px;top:1px;width:753px;height:422px;background:#474747;"></div><div style="left:1px;top:1px;width:753px;height:19px;background:#3c3c3c;"></div><div style="left:1px;top:19px;width:753px;height:1px;background:#333;"></div><div style="left:5.7px;top:7.4px;width:6.6px;height:6.6px;border-radius:50%;background:#e0395a"></div><div style="left:17.5px;top:7.4px;width:6.6px;height:6.6px;border-radius:50%;background:#f0b030"></div><div style="left:29.3px;top:7.4px;width:6.6px;height:6.6px;border-radius:50%;background:#2ec43c"></div><svg style="left:45px;top:6px" width="11" height="10" viewBox="0 0 11 10"><path d="M5.5 0.5 L10.5 5 L9 5 L9 9.5 L6.5 9.5 L6.5 6.5 L4.5 6.5 L4.5 9.5 L2 9.5 L2 5 L0.5 5 Z" fill="#c8c8c8"/></svg><div class="t" style="left:326.5px;top:6.32px;font-size:7.8px;line-height:9.36px;color:#d0d0d0;font-weight:normal;letter-spacing:0.18px">Adobe Illustrator 2025</div><div class="t" style="left:627px;top:3.9px;width:40px;height:13.9px;border-radius:7px;background:#1d5fd6;color:#fff;font-size:7.2px;line-height:13.9px;text-align:center;font-weight:bold">Partager</div><svg style="left:674px;top:4px" width="40" height="13" viewBox="0 0 40 13"><path d="M4 2.5 Q7.5 2.5 7.5 7 L8.5 9.5 L-0.5 9.5 L0.5 7 Q0.5 2.5 4 2.5Z" fill="#bcbcbc"/><circle cx="7.5" cy="2" r="1.6" fill="#2a7de0"/><circle cx="22.5" cy="5.5" r="3.2" fill="none" stroke="#c8c8c8" stroke-width="1.2"/><path d="M24.8 7.8 L27 10" stroke="#c8c8c8" stroke-width="1.3"/></svg><div style="left:718.5px;top:6.5px;width:10px;height:7px;background:#c8c8c8;"></div><div style="left:723px;top:6.5px;width:1px;height:7px;background:#3c3c3c;"></div><div style="left:723px;top:9.5px;width:6px;height:1px;background:#3c3c3c;"></div><div style="left:739.5px;top:6px;width:10px;height:8px;background:transparent;border:1px solid #b8b8b8;box-sizing:border-box"></div><div style="left:749px;top:1.5px;width:4px;height:4px;border-radius:50%;background:#d08a30"></div><div style="left:1px;top:20px;width:753px;height:20px;background:#3c3c3c;"></div><div class="t" style="left:8.7px;top:26.54px;font-size:6.6px;line-height:7.92px;color:#b0b0b0;font-weight:normal;">Auc. sélect.</div><div style="left:65.3px;top:24.9px;width:11.8px;height:11.7px;background:#000;border:1px solid #9a9a9a;box-sizing:border-box"></div><div class="t" style="left:81px;top:26.4px;font-size:6px;line-height:7.2px;color:#b0b0b0;font-weight:normal;">⌄</div><div style="left:91.3px;top:24.9px;width:11.5px;height:11.7px;background:#fff;"></div><svg style="left:91.3px;top:24.9px" width="11.5" height="11.7"><path d="M1 10.7 L10.5 1" stroke="#c0103a" stroke-width="1.4"/></svg><div class="t" style="left:107px;top:26.4px;font-size:6px;line-height:7.2px;color:#b0b0b0;font-weight:normal;">⌄</div><div class="t" style="left:120.2px;top:27.04px;font-size:6.6px;line-height:7.92px;color:#c8c8c8;font-weight:bold;text-decoration:underline;text-decoration-color:#777">Contour :</div><div class="t" style="left:155px;top:26.8px;font-size:7px;line-height:8.4px;color:#a0a0a0;font-weight:normal;">⇕</div><div style="left:162.9px;top:24px;width:28.5px;height:12.5px;background:#2e2e2e;"></div><div class="t" style="left:195px;top:26.4px;font-size:6px;line-height:7.2px;color:#b0b0b0;font-weight:normal;">⌄</div><div style="left:206px;top:24.5px;width:53.3px;height:12px;background:#6a6a6a;"></div><div style="left:273.8px;top:24.9px;width:51.1px;height:11.1px;background:#e4e4e4;"></div><div style="left:278.5px;top:29.3px;width:2.4px;height:2.4px;border-radius:50%;background:#000"></div><div class="t" style="left:287.5px;top:26.54px;font-size:6.6px;line-height:7.92px;color:#111;font-weight:normal;">Arrondi 5 pt</div><div class="t" style="left:327px;top:26.4px;font-size:6px;line-height:7.2px;color:#b0b0b0;font-weight:normal;">⌄</div><div class="t" style="left:339.6px;top:26.54px;font-size:6.6px;line-height:7.92px;color:#c8c8c8;font-weight:bold;text-decoration:underline;text-decoration-color:#777">Opacité :</div><div style="left:370px;top:24.5px;width:32.5px;height:12px;background:#333;"></div><div class="t" style="left:371.5px;top:26.54px;font-size:6.6px;line-height:7.92px;color:#d8d8d8;font-weight:bold;">100%</div><div class="t" style="left:406.5px;top:25.7px;font-size:8px;line-height:9.6px;color:#b0b0b0;font-weight:normal;">›</div><div class="t" style="left:417.8px;top:27.04px;font-size:6.6px;line-height:7.92px;color:#a8a8a8;font-weight:normal;">Style :</div><div style="left:438.9px;top:24.9px;width:11.1px;height:11.1px;background:#dedede;"></div><div class="t" style="left:454px;top:26.4px;font-size:6px;line-height:7.2px;color:#b0b0b0;font-weight:normal;">⌄</div><div style="left:467px;top:23.5px;width:71px;height:14px;background:#3a3a3a;border:1px solid #333;box-sizing:border-box"></div><div class="t" style="left:471.5px;top:26.54px;font-size:6.6px;line-height:7.92px;color:#d8d8d8;font-weight:bold;">Format de document</div><div style="left:541.5px;top:23.5px;width:45px;height:14px;background:#3a3a3a;border:1px solid #333;box-sizing:border-box"></div><div class="t" style="left:546px;top:26.54px;font-size:6.6px;line-height:7.92px;color:#d8d8d8;font-weight:bold;">Préférences</div><svg style="left:592px;top:24px" width="160" height="14" viewBox="0 0 160 14"><rect x="2.5" y="2" width="6" height="6" fill="none" stroke="#aaa" stroke-width="1"/><path d="M6 6 L11 11 L8 11Z" fill="#ccc"/><path d="M15 5 L17 7 L19 5" stroke="#aaa" fill="none"/><rect x="34.5" y="3" width="8" height="8" fill="none" stroke="#bbb" stroke-width="1.2"/><path d="M40 1 L42 3" stroke="#bbb"/><g fill="#777"><rect x="102" y="2" width="2" height="2"/><rect x="107" y="2" width="2" height="2"/><rect x="102" y="9" width="2" height="2"/><rect x="107" y="9" width="2" height="2"/></g><rect x="116.5" y="1.5" width="2" height="11" fill="#bbb"/><path d="M120 4.5 L124 4.5 Q126 4.5 126 7 Q126 9.5 124 9.5 L120 9.5" stroke="#bbb" fill="none" stroke-width="1.2"/><g fill="#aaa"><rect x="145" y="3" width="8" height="1.2"/><rect x="145" y="6" width="8" height="1.2"/><rect x="145" y="9" width="8" height="1.2"/></g></svg><div style="left:1px;top:40px;width:753px;height:18px;background:#2e2e2e;"></div><div style="left:25.7px;top:40px;width:124.3px;height:18px;background:#383838;"></div><div class="t" style="left:30.5px;top:44.8px;font-size:7px;line-height:8.4px;color:#c0c0c0;font-weight:normal;">×</div><div class="t" style="left:38.8px;top:45.04px;font-size:6.6px;line-height:7.92px;color:#d8d8d8;font-weight:bold;">02_04.ai* @ 44,42 % (RVB/Aperçu)</div><div style="left:627px;top:58px;width:10px;height:45px;background:#3c3c3c;"></div><div style="left:627px;top:103px;width:1px;height:0px;background:#333;"></div><div style="left:134.3px;top:134.5px;width:288.3px;height:205.2px;background:#262626"></div><div style="left:134.8px;top:135px;width:286.8px;height:203.7px;background:#fff"></div><svg style="left:0;top:0" width="755" height="424"><defs><linearGradient id="wl" x1="115.6" y1="0" x2="278" y2="0" gradientUnits="userSpaceOnUse"><stop offset="0" stop-color="#1f7a48" stop-opacity="1"/><stop offset="0.12" stop-color="#5aac72" stop-opacity="0.75"/><stop offset="0.22" stop-color="#86c690" stop-opacity="0.5"/><stop offset="0.45" stop-color="#aedcb4" stop-opacity="0.3"/><stop offset="0.65" stop-color="#c4e6c8" stop-opacity="0.2"/><stop offset="1" stop-color="#c8e8d0" stop-opacity="0.1"/></linearGradient><linearGradient id="wr" x1="441.6" y1="0" x2="278" y2="0" gradientUnits="userSpaceOnUse"><stop offset="0" stop-color="#1f7a48" stop-opacity="1"/><stop offset="0.12" stop-color="#5aac72" stop-opacity="0.75"/><stop offset="0.22" stop-color="#86c690" stop-opacity="0.5"/><stop offset="0.45" stop-color="#aedcb4" stop-opacity="0.3"/><stop offset="0.65" stop-color="#c4e6c8" stop-opacity="0.2"/><stop offset="1" stop-color="#c8e8d0" stop-opacity="0.1"/></linearGradient><linearGradient id="pl" x1="0" y1="150" x2="0" y2="323" gradientUnits="userSpaceOnUse"><stop offset="0" stop-color="#ffffff" stop-opacity="0"/><stop offset="0.5" stop-color="#eef6fb" stop-opacity="0.3"/><stop offset="0.75" stop-color="#d8eef6" stop-opacity="0.7"/><stop offset="1" stop-color="#c4e8f2" stop-opacity="0.9"/></linearGradient><linearGradient id="pr" x1="0" y1="150" x2="0" y2="323" gradientUnits="userSpaceOnUse"><stop offset="0" stop-color="#ffffff" stop-opacity="0"/><stop offset="0.5" stop-color="#fdf4ea" stop-opacity="0.3"/><stop offset="0.75" stop-color="#f8ecd4" stop-opacity="0.7"/><stop offset="1" stop-color="#f4e2c4" stop-opacity="0.9"/></linearGradient><clipPath id="cv"><rect x="25" y="58" width="602" height="341"/></clipPath></defs><g clip-path="url(#cv)"><path d="M277.8 151.8 L218.7 182.92 L218.7 291.55 L277.8 322.7Z" fill="url(#pl)"/><path d="M277.8 151.8 L338.5 183.45 L338.5 291.02 L277.8 322.7Z" fill="url(#pr)"/><path d="M271.83 319.55L266.37 322.2M266.28 316.63L253.99 322.2M261.12 313.91L241.6 322.2M256.29 311.36L229.22 322.2M251.78 308.98L216.83 322.2M247.55 306.75L204.45 322.2M243.57 304.66L192.06 322.2M239.82 302.68L179.68 322.2M236.29 300.82L167.29 322.2M232.95 299.06L154.9 322.2M229.8 297.4L142.52 322.2M226.8 295.82L130.13 322.2M223.96 294.32L117.75 322.2M221.27 292.9L105.36 322.2M218.7 291.55L92.98 322.2M283.99 319.47L289.57 322.2M289.72 316.48L302.29 322.2M295.06 313.69L315.01 322.2M300.03 311.1L327.73 322.2M304.67 308.67L340.45 322.2M309.02 306.4L353.18 322.2M313.1 304.27L365.9 322.2M316.94 302.27L378.62 322.2M320.56 300.38L391.34 322.2M323.97 298.6L404.06 322.2M327.19 296.92L416.78 322.2M330.25 295.32L429.5 322.2M333.14 293.81L442.22 322.2M335.89 292.38L454.94 322.2M338.5 291.02L467.66 322.2" stroke="#7a9488" stroke-opacity="0.7" stroke-width="0.6" fill="none"/><path d="M115.6 237.2 L277.8 322.7 L277.8 277.5 Z" fill="url(#wl)"/><path d="M441.6 237.2 L277.8 322.7 L277.8 277.5 Z" fill="url(#wr)"/><path d="M115.6 237.2L277.8 280.51M441.6 237.2L277.8 280.51M115.6 237.2L277.8 283.53M441.6 237.2L277.8 283.53M115.6 237.2L277.8 286.54M441.6 237.2L277.8 286.54M115.6 237.2L277.8 289.55M441.6 237.2L277.8 289.55M115.6 237.2L277.8 292.57M441.6 237.2L277.8 292.57M115.6 237.2L277.8 295.58M441.6 237.2L277.8 295.58M115.6 237.2L277.8 298.59M441.6 237.2L277.8 298.59M115.6 237.2L277.8 301.61M441.6 237.2L277.8 301.61M115.6 237.2L277.8 304.62M441.6 237.2L277.8 304.62M115.6 237.2L277.8 307.63M441.6 237.2L277.8 307.63M115.6 237.2L277.8 310.65M441.6 237.2L277.8 310.65M115.6 237.2L277.8 313.66M441.6 237.2L277.8 313.66M115.6 237.2L277.8 316.67M441.6 237.2L277.8 316.67M115.6 237.2L277.8 319.69M441.6 237.2L277.8 319.69" stroke="#6a9080" stroke-opacity="0.45" stroke-width="0.5" fill="none"/><path d="M80 237.2 L477 237.2" stroke="#b8b8b8" stroke-opacity="0.55" stroke-width="0.7"/><path d="M79 322.2 L477 322.2" stroke="#a0aea6" stroke-opacity="0.6" stroke-width="0.7"/><path d="M277.8 151.8L218.7 182.92M277.8 161.29L218.7 188.95M277.8 170.79L218.7 194.99M277.8 180.28L218.7 201.02M277.8 189.78L218.7 207.06M277.8 199.27L218.7 213.09M277.8 208.77L218.7 219.13M277.8 218.26L218.7 225.16M277.8 227.76L218.7 231.2M277.8 237.25L218.7 237.23M277.8 246.74L218.7 243.27M277.8 256.24L218.7 249.3M277.8 265.73L218.7 255.34M277.8 275.23L218.7 261.37M277.8 284.72L218.7 267.41M277.8 294.22L218.7 273.44M277.8 303.71L218.7 279.48M277.8 313.21L218.7 285.51M277.8 322.7L218.7 291.55M277.8 151.8L277.8 322.7M271.83 154.94L271.83 319.55M266.28 157.86L266.28 316.63M261.12 160.58L261.12 313.91M256.29 163.12L256.29 311.36M251.78 165.5L251.78 308.98M247.55 167.73L247.55 306.75M243.57 169.82L243.57 304.66M239.82 171.8L239.82 302.68M236.29 173.66L236.29 300.82M232.95 175.41L232.95 299.06M229.8 177.07L229.8 297.4M226.8 178.65L226.8 295.82M223.96 180.14L223.96 294.32M221.27 181.57L221.27 292.9M218.7 182.92L218.7 291.55" stroke="#4c5e70" stroke-opacity="0.9" stroke-width="0.6" fill="none"/><path d="M277.8 151.8L338.5 183.45M277.8 161.29L338.5 189.42M277.8 170.79L338.5 195.4M277.8 180.28L338.5 201.38M277.8 189.78L338.5 207.35M277.8 199.27L338.5 213.33M277.8 208.77L338.5 219.3M277.8 218.26L338.5 225.28M277.8 227.76L338.5 231.26M277.8 237.25L338.5 237.23M277.8 246.74L338.5 243.21M277.8 256.24L338.5 249.18M277.8 265.73L338.5 255.16M277.8 275.23L338.5 261.14M277.8 284.72L338.5 267.11M277.8 294.22L338.5 273.09M277.8 303.71L338.5 279.06M277.8 313.21L338.5 285.04M277.8 322.7L338.5 291.02M277.8 151.8L277.8 322.7M283.99 155.03L283.99 319.47M289.72 158.02L289.72 316.48M295.06 160.8L295.06 313.69M300.03 163.39L300.03 311.1M304.67 165.81L304.67 308.67M309.02 168.08L309.02 306.4M313.1 170.21L313.1 304.27M316.94 172.21L316.94 302.27M320.56 174.09L320.56 300.38M323.97 175.87L323.97 298.6M327.19 177.55L327.19 296.92M330.25 179.14L330.25 295.32M333.14 180.65L333.14 293.81M335.89 182.09L335.89 292.38M338.5 183.45L338.5 291.02" stroke="#b08472" stroke-opacity="0.75" stroke-width="0.55" fill="none"/><path d="M277.8 151.8 L134.8 227.09" stroke="#808080" stroke-width="0.8"/><path d="M277.8 151.8 L441.6 237.2" stroke="#a09890" stroke-width="0.8"/><path d="M115.6 237.2 L277.8 322.7" stroke="#3f5a5a" stroke-width="1"/><path d="M441.6 237.2 L277.8 322.7" stroke="#9a6a40" stroke-width="1"/><path d="M277.8 322.7 L277.8 337 M267.8 328.2 L277.8 322.7 L287.8 328.2" stroke="#b0b0b0" stroke-width="0.6" fill="none"/></g></svg><div style="left:1px;top:40px;width:23.5px;height:382px;background:#3b3b3b;"></div><div style="left:24.5px;top:58px;width:1px;height:356px;background:#2f2f2f;"></div><div style="left:1px;top:40px;width:23.5px;height:10px;background:#333;"></div><div style="left:4.4px;top:60.1px;width:15.3px;height:12.7px;background:#262626;"></div><svg style="left:1px;top:0" width="24" height="424" viewBox="1 0 24 424"><defs><linearGradient id="tg"><stop offset="0" stop-color="#eee"/><stop offset="1" stop-color="#222"/></linearGradient></defs><path d="M9 61.5 L15.5 67.5 L12 68 L10 71.5 Z" fill="none" stroke="#c4c4c4" stroke-width="0.9"/><path d="M9 75.7 L15.5 81.7 L12 82.2 L10 85.7 Z" fill="#c4c4c4"/><rect x="17" y="84.2" width="1.2" height="1.2" fill="#999"/><path d="M8 99.4 L9.5 94.9 L14 90.4 L16.5 92.9 L12 97.4 Z" fill="#c4c4c4"/><circle cx="11.5" cy="95.7" r="0.9" fill="#3b3b3b"/><rect x="17" y="98.4" width="1.2" height="1.2" fill="#999"/><path d="M8 113.6 L9.5 109.1 L14 104.6 L16.5 107.1 L12 111.6 Z" fill="#c4c4c4"/><circle cx="11.5" cy="109.9" r="0.9" fill="#3b3b3b"/><rect x="17" y="112.6" width="1.2" height="1.2" fill="#999"/><path d="M7 114.1 Q5 110.1 8 108.1" stroke="#c4c4c4" fill="none" stroke-width="0.8"/><rect x="7" y="118.4" width="9.5" height="7.5" fill="#555" stroke="#c4c4c4" stroke-width="0.9"/><rect x="17" y="125.9" width="1.2" height="1.2" fill="#999"/><path d="M7.5 141.6 Q8 138.6 10 138.6 L16 132.1 L16.8 132.9 L11 139.6 Q10 141.6 7.5 141.6Z" fill="#c4c4c4"/><text x="7.5" y="155.6" font-family="Liberation Serif" font-weight="bold" font-size="12" fill="#c4c4c4">T</text><path d="M8 164 A4.5 4.5 0 1 1 10 169" stroke="#c4c4c4" fill="none" stroke-width="1"/><path d="M6.5 162 L8 166 L10.5 163Z" fill="#c4c4c4"/><path d="M7 181.2 L12 175.2 L16.5 179.2 L11.5 184.2 Z" fill="#c4c4c4"/><path d="M9.5 178.2 L14 182.2" stroke="#3b3b3b" stroke-width="0.8"/><ellipse cx="11" cy="192.4" rx="4.5" ry="3" fill="none" stroke="#c4c4c4" stroke-width="0.9"/><path d="M12 193.4 L16.5 197.4 L14 197.6 L13 199.4Z" fill="#c4c4c4"/><rect x="7.5" y="203.6" width="9" height="8" fill="url(#tg)" stroke="#aaa" stroke-width="0.6"/><path d="M7.5 226.8 L8.5 224.3 L14 218.8 L16 220.8 L10.5 226.3Z" fill="none" stroke="#c4c4c4" stroke-width="0.9"/><circle cx="15.5" cy="218.3" r="1.6" fill="#c4c4c4"/><path d="M7.5 234 L11 237 L9 239 L13 240 L16 237" stroke="#c4c4c4" fill="none" stroke-width="1.2"/><path d="M12 232 L16 235" stroke="#c4c4c4" stroke-width="1.2"/><path d="M7.5 248.1 L11 251.1 L9 253.1 L13 254.1 L16 251.1" stroke="#c4c4c4" fill="none" stroke-width="1.2"/><path d="M12 246.1 L16 249.1" stroke="#c4c4c4" stroke-width="1.2"/><circle cx="10" cy="262.4" r="3" fill="none" stroke="#c4c4c4" stroke-width="0.9"/><circle cx="14" cy="265.4" r="3" fill="none" stroke="#c4c4c4" stroke-width="0.9"/><path d="M9 272.9 L9 280.9 L17 280.9 M7 274.9 L15 274.9 L15 282.9" stroke="#c4c4c4" fill="none" stroke-width="0.9"/><rect x="7.5" y="286.5" width="1" height="10" fill="#c4c4c4"/><rect x="9.5" y="288" width="5" height="2.5" fill="#c4c4c4"/><rect x="9.5" y="292.5" width="7" height="2.5" fill="#c4c4c4"/><path d="M7.5 301.6 L7.5 310.6 L16.5 310.6 Z M7.5 304.6 L13.5 307.6 M11 305.1 L11 310.6" stroke="#c4c4c4" fill="none" stroke-width="0.8"/><path d="M7 315.2 L12 320.2 L9.5 320.5 L8 323.2Z" fill="#c4c4c4"/><circle cx="14" cy="322.2" r="3" fill="#aaa"/><path d="M14 319.2 L14 322.2 L11.5 323.7 M14 322.2 L16.5 323.7" stroke="#3b3b3b" stroke-width="0.6"/><circle cx="8" cy="335" r="2.8" fill="#ddd"/><path d="M14 333 Q17 333 17 337" stroke="#bbb" fill="none"/><rect x="4.5" y="343.7" width="9.5" height="9.5" fill="#000" stroke="#bbb" stroke-width="1"/><rect x="10" y="350" width="9" height="9" fill="#fff"/><path d="M10.5 358.5 L18.5 350.5" stroke="#c0103a" stroke-width="1.4"/><rect x="4" y="365" width="4.5" height="4" fill="#000"/><rect x="9.5" y="365" width="2.5" height="4" fill="#ddd"/><rect x="13.5" y="365" width="4.5" height="4" fill="#fff"/><path d="M13.5 369 L18 365" stroke="#c0103a"/><circle cx="11" cy="376.5" r="2.6" fill="#999"/><circle cx="12.5" cy="378" r="2.2" fill="#bbb"/><rect x="6" y="388" width="9" height="6" fill="none" stroke="#aaa"/><rect x="9" y="386" width="9" height="6" fill="#3b3b3b" stroke="#aaa"/><g fill="#ccc"><circle cx="7.5" cy="411.4" r="1.1"/><circle cx="11" cy="411.4" r="1.1"/><circle cx="14.5" cy="411.4" r="1.1"/></g></svg><svg style="left:40.6px;top:73.3px" width="30" height="30" viewBox="-15 -15 30 30"><path d="M-14 -13.5 L0 -13.5 A14 14 0 1 1 -14 0 Z" fill="#262626"/><circle r="11" fill="#d2d2d2"/><path d="M0 -6.8 L0 0 L-6 3.4 L-6 -3.4Z" fill="#1f45c8"/><path d="M0 -6.8 L6 -3.4 L6 3.4 L0 0Z" fill="#9a9a9a"/><path d="M0 0 L6 3.4 L0 6.8 L-6 3.4Z" fill="#ffffff"/><path d="M0 -6.8 L6 -3.4 L6 3.4 L0 6.8 L-6 3.4 L-6 -3.4Z M0 0 L0 -6.8 M0 0 L-6 3.4 M0 0 L6 3.4" fill="none" stroke="#1a1a1a" stroke-width="0.9"/><rect x="-12.3" y="-12.3" width="2.6" height="2.6" fill="#eee"/></svg><div class="t" style="left:189px;top:102.5px;font-size:15px;line-height:18px;color:#000;font-weight:bold;-webkit-text-stroke:0.55px #000">PERPE</div><div class="t" style="left:267.5px;top:102.5px;font-size:15px;line-height:18px;color:#000;font-weight:bold;-webkit-text-stroke:0.55px #000">CTIVE</div><div class="t" style="left:343.5px;top:102.5px;font-size:15px;line-height:18px;color:#000;font-weight:bold;-webkit-text-stroke:0.55px #000">3D</div><div style="left:25.5px;top:399.5px;width:469px;height:15px;background:#3a3a3a;"></div><div style="left:25.5px;top:414.5px;width:469px;height:8px;background:#363636;"></div><div class="t" style="left:28px;top:403.2px;width:8px;height:8px;border-radius:50%;background:#cfcfcf;color:#3a3a3a;font-size:6.5px;line-height:8px;text-align:center;font-weight:bold">?</div><div class="t" style="left:42.6px;top:403.31px;font-size:6.65px;line-height:7.98px;color:#c4c4c4;font-weight:normal;"><b>Cliquez</b> sur l'objet à sélectionner&nbsp; |&nbsp; <b>Maj+cliquez</b> pour sélectionner plusieurs objets&nbsp; |&nbsp; <b>Option+faites glisser</b> l'objet à dupliquer</div><div class="t" style="left:29px;top:416.08px;font-size:6.2px;line-height:7.44px;color:#d0d0d0;font-weight:bold;">44,42%</div><div class="t" style="left:58px;top:416px;font-size:5.5px;line-height:6.6px;color:#aaa;font-weight:normal;">⌄</div><div style="left:71px;top:415px;width:35px;height:7px;background:#303030;"></div><div class="t" style="left:72px;top:416.08px;font-size:6.2px;line-height:7.44px;color:#d0d0d0;font-weight:normal;">0°</div><div class="t" style="left:102px;top:416px;font-size:5.5px;line-height:6.6px;color:#aaa;font-weight:normal;">⌄</div><div style="left:136px;top:415px;width:23px;height:7px;background:#303030;"></div><div class="t" style="left:138px;top:416.08px;font-size:6.2px;line-height:7.44px;color:#d0d0d0;font-weight:normal;">1</div><div class="t" style="left:161px;top:416px;font-size:5.5px;line-height:6.6px;color:#aaa;font-weight:normal;">⌄</div><div class="t" style="left:183.5px;top:416.08px;font-size:6.2px;line-height:7.44px;color:#c8c8c8;font-weight:normal;width:140px;text-align:center">Sélection</div><div class="t" style="left:313px;top:416.2px;font-size:6px;line-height:7.2px;color:#aaa;font-weight:normal;">▸</div><div style="left:226.5px;top:379px;width:256.2px;height:19.8px;background:#2c2c2c;border:1px solid #222;border-radius:3px;box-sizing:border-box"></div><div style="left:229px;top:382.5px;width:1.6px;height:13px;background:#a8a8a8;"></div><div style="left:238.4px;top:381.5px;width:84.5px;height:15px;background:#2f2f2f;border:1px solid #3a3a3a;box-sizing:border-box;border-radius:2px"></div><svg style="left:243px;top:384px" width="10" height="10"><path d="M1 9 L2 6 L7.5 0.5 L9.5 2.5 L4 8 Z" fill="#ddd"/></svg><div class="t" style="left:257.5px;top:384.68px;font-size:7.2px;line-height:8.64px;color:#e4e4e4;font-weight:bold;">Dessiner (Crayon)</div><div style="left:326.8px;top:381.5px;width:117.2px;height:15px;background:#2f2f2f;border:1px solid #3a3a3a;box-sizing:border-box;border-radius:2px"></div><svg style="left:331px;top:383px" width="11" height="11"><rect x="1" y="2.5" width="7.5" height="7.5" fill="none" stroke="#ccc" stroke-width="0.9"/><path d="M8 0.5 L10 2.5" stroke="#ccc"/></svg><div class="t" style="left:344px;top:384.68px;font-size:7.2px;line-height:8.64px;color:#e4e4e4;font-weight:bold;">Générer des vecteurs (Beta)</div><svg style="left:447px;top:384px" width="34" height="10"><rect x="1" y="1" width="8" height="7" fill="none" stroke="#bbb" stroke-width="0.8"/><circle cx="7.5" cy="7" r="2" fill="#bbb"/><g fill="#ccc"><circle cx="21" cy="5" r="1.1"/><circle cx="24.5" cy="5" r="1.1"/><circle cx="28" cy="5" r="1.1"/></g></svg><div style="left:494.5px;top:103px;width:142px;height:311px;background:#3c3c3c;border-left:1px solid #2a2a2a;border-top:1px solid #2a2a2a;box-sizing:border-box"></div><div style="left:495.5px;top:105px;width:141px;height:15.3px;background:#333;"></div><div style="left:495.5px;top:105px;width:33.5px;height:15.3px;background:#3c3c3c;"></div><div class="t" style="left:500.4px;top:108.54px;font-size:6.6px;line-height:7.92px;color:#e6e6e6;font-weight:bold;">Calques</div><div class="t" style="left:534.7px;top:108.54px;font-size:6.6px;line-height:7.92px;color:#a8a8a8;font-weight:normal;">Plans de travail</div><div class="t" style="left:612px;top:108.3px;font-size:7px;line-height:8.4px;color:#888;font-weight:normal;">››</div><div style="left:628px;top:109.5px;width:6px;height:6px;background:#666;"></div><div style="left:503px;top:128px;width:113px;height:11.8px;background:#2e2e2e;"></div><svg style="left:504px;top:129px" width="10" height="10"><circle cx="4" cy="4.3" r="2.6" fill="none" stroke="#aaa" stroke-width="1"/><path d="M6 6.3 L8 8.5" stroke="#aaa"/></svg><div class="t" style="left:520px;top:130.28px;font-size:6.2px;line-height:7.44px;color:#a0a0a0;font-weight:normal;"><i>Rechercher dans tout</i></div><svg style="left:622px;top:128px" width="10" height="10"><path d="M0.5 1 L8.5 1 L5.5 5 L5.5 9 L3.5 8 L3.5 5 Z" fill="#bbb"/></svg><svg style="left:500px;top:149px" width="9" height="6"><path d="M0.5 3 Q4.5 -1 8.5 3 Q4.5 7 0.5 3Z" fill="none" stroke="#aaa" stroke-width="0.8"/><circle cx="4.5" cy="3" r="1.2" fill="#aaa"/></svg><div style="left:523.5px;top:145.8px;width:2.5px;height:12.4px;background:#c8153c;"></div><div class="t" style="left:531.5px;top:148.4px;font-size:6px;line-height:7.2px;color:#aaa;font-weight:normal;">⌄</div><div style="left:541px;top:147.2px;width:10.4px;height:9.6px;background:#f2f2f2;border:0.6px solid #222;box-sizing:border-box"></div><div class="t" style="left:555px;top:148.16px;font-size:6.4px;line-height:7.68px;color:#d0d0d0;font-weight:normal;">Texte</div><div style="left:616px;top:149.4px;width:5.2px;height:5.2px;border-radius:50%;border:0.8px solid #aaa;box-sizing:border-box"></div><svg style="left:500px;top:161.4px" width="9" height="6"><path d="M0.5 3 Q4.5 -1 8.5 3 Q4.5 7 0.5 3Z" fill="none" stroke="#aaa" stroke-width="0.8"/><circle cx="4.5" cy="3" r="1.2" fill="#aaa"/></svg><div style="left:523.5px;top:158.2px;width:2.5px;height:12.4px;background:#c8153c;"></div><div style="left:555px;top:159.6px;width:10px;height:9.6px;background:#f2f2f2;border:0.6px solid #222;box-sizing:border-box"></div><div style="left:556px;top:162.9px;width:8px;height:3px;background:#111;"></div><div class="t" style="left:568px;top:160.56px;font-size:6.4px;line-height:7.68px;color:#d0d0d0;font-weight:normal;">3D</div><div style="left:616px;top:161.8px;width:5.2px;height:5.2px;border-radius:50%;border:0.8px solid #aaa;box-sizing:border-box"></div><svg style="left:500px;top:173.8px" width="9" height="6"><path d="M0.5 3 Q4.5 -1 8.5 3 Q4.5 7 0.5 3Z" fill="none" stroke="#aaa" stroke-width="0.8"/><circle cx="4.5" cy="3" r="1.2" fill="#aaa"/></svg><div style="left:523.5px;top:170.6px;width:2.5px;height:12.4px;background:#c8153c;"></div><div style="left:555px;top:172px;width:10px;height:9.6px;background:#f2f2f2;border:0.6px solid #222;box-sizing:border-box"></div><div style="left:556px;top:175.3px;width:8px;height:3px;background:#111;"></div><div class="t" style="left:568px;top:172.96px;font-size:6.4px;line-height:7.68px;color:#d0d0d0;font-weight:normal;">PERPE</div><div style="left:616px;top:174.2px;width:5.2px;height:5.2px;border-radius:50%;border:0.8px solid #aaa;box-sizing:border-box"></div><svg style="left:500px;top:186.2px" width="9" height="6"><path d="M0.5 3 Q4.5 -1 8.5 3 Q4.5 7 0.5 3Z" fill="none" stroke="#aaa" stroke-width="0.8"/><circle cx="4.5" cy="3" r="1.2" fill="#aaa"/></svg><div style="left:523.5px;top:183px;width:2.5px;height:12.4px;background:#c8153c;"></div><div style="left:555px;top:184.4px;width:10px;height:9.6px;background:#f2f2f2;border:0.6px solid #222;box-sizing:border-box"></div><div style="left:556px;top:187.7px;width:8px;height:3px;background:#111;"></div><div class="t" style="left:568px;top:185.36px;font-size:6.4px;line-height:7.68px;color:#d0d0d0;font-weight:normal;">CTIVE</div><div style="left:616px;top:186.6px;width:5.2px;height:5.2px;border-radius:50%;border:0.8px solid #aaa;box-sizing:border-box"></div><div style="left:496.5px;top:195.4px;width:137px;height:12.4px;background:#2d4766;"></div><svg style="left:500px;top:198.6px" width="9" height="6"><path d="M0.5 3 Q4.5 -1 8.5 3 Q4.5 7 0.5 3Z" fill="none" stroke="#aaa" stroke-width="0.8"/><circle cx="4.5" cy="3" r="1.2" fill="#aaa"/></svg><div style="left:523.5px;top:195.4px;width:2.5px;height:12.4px;background:#3a5fd0;"></div><div style="left:541px;top:196.8px;width:10.4px;height:9.6px;background:#f2f2f2;border:0.6px solid #222;box-sizing:border-box"></div><div class="t" style="left:555px;top:197.76px;font-size:6.4px;line-height:7.68px;color:#a8c8f0;font-weight:normal;">Grille</div><div style="left:616px;top:199px;width:5.2px;height:5.2px;border-radius:50%;border:0.8px solid #aaa;box-sizing:border-box"></div><div style="left:495.5px;top:401px;width:141px;height:13px;background:#3c3c3c;"></div><div class="t" style="left:503px;top:404.96px;font-size:6.4px;line-height:7.68px;color:#c8c8c8;font-weight:normal;">2 Ca...</div><svg style="left:520px;top:403px" width="115" height="11"><g fill="none" stroke="#aaa" stroke-width="0.9"><rect x="10" y="2" width="7" height="7"/><rect x="70" y="2" width="8" height="6"/><rect x="85" y="2" width="7" height="7"/><path d="M100 3 L107 3 L106 10 L101 10Z"/></g><g fill="none" stroke="#666" stroke-width="0.9"><rect x="25" y="2" width="7" height="7"/><circle cx="43" cy="5" r="3"/><path d="M55 2 L58 9"/></g></svg><div style="left:637px;top:40px;width:117px;height:382px;background:#2e2e2e;"></div><div style="left:638px;top:48px;width:116px;height:374px;background:#3c3c3c;"></div><div style="left:638px;top:88px;width:116px;height:2px;background:#333;"></div><div style="left:638px;top:262px;width:116px;height:2px;background:#333;"></div><div style="left:638px;top:320px;width:116px;height:2px;background:#333;"></div><div style="left:638px;top:376px;width:116px;height:2px;background:#333;"></div><div style="left:641px;top:382.7px;width:110px;height:11.7px;background:#262626;"></div><div class="t" style="left:660px;top:58.59px;font-size:6.35px;line-height:7.62px;color:#dcdcdc;font-weight:bold;">Propriétés</div><div class="t" style="left:660px;top:75.09px;font-size:6.35px;line-height:7.62px;color:#dcdcdc;font-weight:bold;">Alignement</div><div class="t" style="left:660px;top:99.19px;font-size:6.35px;line-height:7.62px;color:#dcdcdc;font-weight:bold;">Transformation</div><div class="t" style="left:660px;top:115.69px;font-size:6.35px;line-height:7.62px;color:#dcdcdc;font-weight:bold;">Pathfinder</div><div class="t" style="left:660px;top:132.29px;font-size:6.35px;line-height:7.62px;color:#dcdcdc;font-weight:bold;">Nuancier</div><div class="t" style="left:660px;top:148.79px;font-size:6.35px;line-height:7.62px;color:#dcdcdc;font-weight:bold;">Contour</div><div class="t" style="left:660px;top:165.29px;font-size:6.35px;line-height:7.62px;color:#dcdcdc;font-weight:bold;">Formes</div><div class="t" style="left:660px;top:181.79px;font-size:6.35px;line-height:7.62px;color:#dcdcdc;font-weight:bold;">Symboles</div><div class="t" style="left:660px;top:198.29px;font-size:6.35px;line-height:7.62px;color:#dcdcdc;font-weight:bold;">Dégradé</div><div class="t" style="left:660px;top:214.79px;font-size:6.35px;line-height:7.62px;color:#dcdcdc;font-weight:bold;">Transparence</div><div class="t" style="left:660px;top:231.29px;font-size:6.35px;line-height:7.62px;color:#dcdcdc;font-weight:bold;">Couleur</div><div class="t" style="left:660px;top:247.79px;font-size:6.35px;line-height:7.62px;color:#dcdcdc;font-weight:bold;">Guide des couleurs</div><div class="t" style="left:660px;top:271.89px;font-size:6.35px;line-height:7.62px;color:#dcdcdc;font-weight:bold;">Liens</div><div class="t" style="left:660px;top:288.39px;font-size:6.35px;line-height:7.62px;color:#dcdcdc;font-weight:bold;">Bibliothèques</div><div class="t" style="left:660px;top:304.89px;font-size:6.35px;line-height:7.62px;color:#dcdcdc;font-weight:bold;">Informations sur le docum...</div><div class="t" style="left:660px;top:328.99px;font-size:6.35px;line-height:7.62px;color:#dcdcdc;font-weight:bold;">Variables</div><div class="t" style="left:660px;top:345.49px;font-size:6.35px;line-height:7.62px;color:#dcdcdc;font-weight:bold;">Aspect</div><div class="t" style="left:660px;top:361.99px;font-size:6.35px;line-height:7.62px;color:#dcdcdc;font-weight:bold;">Exportation de ressources</div><div class="t" style="left:660px;top:385.79px;font-size:6.35px;line-height:7.62px;color:#dcdcdc;font-weight:bold;">Calques</div><div class="t" style="left:660px;top:402.54px;font-size:6.6px;line-height:7.92px;color:#9a9a9a;font-weight:bold;">Plans de travail</div><svg style="left:0;top:0" width="755" height="424"><g stroke="#c4c4c4" stroke-width="0.8" fill="none"><path d="M644 59.2h9M644 61.7h9M644 64.2h9"/><circle cx="647" cy="59.2" r="1.1" fill="#3c3c3c"/><circle cx="650" cy="61.7" r="1.1" fill="#3c3c3c"/><circle cx="647" cy="64.2" r="1.1" fill="#3c3c3c"/></g><g fill="#c4c4c4"><rect x="644" y="73.7" width="1" height="9"/><rect x="645.5" y="75.2" width="4" height="2.5"/><rect x="645.5" y="78.7" width="8" height="2.5"/></g><g fill="none" stroke="#c4c4c4" stroke-width="0.8" stroke-dasharray="1.2 1"><rect x="645" y="98.8" width="7.5" height="7.5"/></g><g fill="#c4c4c4"><rect x="644" y="97.8" width="2" height="2"/><rect x="651.5" y="97.8" width="2" height="2"/><rect x="644" y="105.3" width="2" height="2"/><rect x="651.5" y="105.3" width="2" height="2"/></g><rect x="644" y="114.8" width="5.5" height="5" fill="#c4c4c4"/><rect x="647.5" y="117.8" width="5.5" height="5" fill="#999" stroke="#3c3c3c" stroke-width="0.6"/><rect x="644" y="131.9" width="9.5" height="7" fill="#888"/><g fill="#bbb"><rect x="645" y="132.70000000000002" width="2.2" height="2.4"/><rect x="647.8" y="132.70000000000002" width="2.2" height="2.4"/><rect x="650.6" y="132.70000000000002" width="2.2" height="2.4"/><rect x="645" y="135.9" width="2.2" height="2.4"/></g><g fill="#c4c4c4"><rect x="644" y="148.4" width="9.5" height="1.1"/><rect x="644" y="151.20000000000002" width="9.5" height="1.3"/><rect x="644" y="154.20000000000002" width="9.5" height="1.6"/></g><g fill="#c4c4c4"><rect x="646.5" y="168.4" width="4" height="4.5"/><path d="M647 168.4 L645 163.9 L648 167.4Z M649 168.4 L648.5 163.4 L650 167.9Z M650 168.4 L652.5 164.9 L651 168.4Z"/></g><g fill="#c4c4c4"><circle cx="648.5" cy="182.70000000000002" r="2"/><circle cx="646.3" cy="185.4" r="2"/><circle cx="650.7" cy="185.4" r="2"/><path d="M648 184.9 L647 188.9 L650 188.9 L649 184.9Z"/></g><defs><linearGradient id="gd"><stop offset="0" stop-color="#222"/><stop offset="1" stop-color="#eee"/></linearGradient></defs><rect x="644" y="197.9" width="9.5" height="7.5" fill="url(#gd)" stroke="#aaa" stroke-width="0.5"/><circle cx="647.5" cy="217.1" r="3.3" fill="#bbb"/><circle cx="649.8" cy="218.9" r="3.3" fill="#777" stroke="#aaa" stroke-width="0.5"/><ellipse cx="648.8" cy="234.9" rx="4.8" ry="3.5" fill="none" stroke="#c4c4c4" stroke-width="1"/><g fill="#c4c4c4"><circle cx="647" cy="233.9" r="0.9"/><circle cx="650" cy="233.4" r="0.9"/></g><path d="M644 255.4 L644 246.9 Q652 248.9 653.5 255.4Z" fill="#999" stroke="#ccc" stroke-width="0.6"/><g fill="none" stroke="#c4c4c4" stroke-width="1"><rect x="644" y="273" width="5.5" height="4" rx="2"/><rect x="648" y="273" width="5.5" height="4" rx="2"/></g><rect x="644.5" y="287.0" width="8" height="9.5" fill="none" stroke="#c4c4c4" stroke-width="1"/><rect x="647.5" y="287.0" width="2" height="4" fill="#c4c4c4"/><rect x="644.5" y="303.5" width="8" height="9.5" fill="#aaa"/><circle cx="648.5" cy="309" r="2.3" fill="#3c3c3c"/><rect x="648" y="308" width="1" height="2.5" fill="#ccc"/><circle cx="647" cy="333.6" r="2.6" fill="none" stroke="#c4c4c4" stroke-width="1.2"/><circle cx="651.5" cy="329.6" r="1.8" fill="none" stroke="#c4c4c4" stroke-width="0.9"/><circle cx="648.5" cy="348.6" r="3.8" fill="#aaa"/><path d="M649 361.1 L644 361.1 L644 370.1 L653 370.1 L653 365.1" fill="none" stroke="#c4c4c4" stroke-width="1"/><path d="M648 366.1 L653 361.1 M650 361.1 L653 361.1 L653 364.1" stroke="#c4c4c4" stroke-width="1" fill="none"/><path d="M648.7 384.9 L653.5 387.59999999999997 L648.7 390.29999999999995 L644 387.59999999999997Z" fill="#c4c4c4"/><path d="M644 389.9 L648.7 392.59999999999997 L653.5 389.9" fill="none" stroke="#c4c4c4" stroke-width="1.2"/><rect x="645" y="401.5" width="6" height="5" fill="none" stroke="#aaa" stroke-width="0.9"/><rect x="648" y="404.5" width="6" height="5" fill="#555" stroke="#aaa" stroke-width="0.9"/></svg><div class="t" style="left:654.5px;top:399.68px;font-size:12.2px;line-height:14.64px;color:#f4f4f4;font-weight:normal;letter-spacing:-0.35px;text-shadow:0 0 1px #000">Linked<span style="display:inline-block;background:#fff;color:#3c3c3c;padding:0 1px;line-height:10px">in</span> Learning</div><svg style="left:67px;top:101px" width="10" height="12"><path d="M0.5 0.5 L0.5 9.5 L3 7 L5 11 L6.5 10.3 L4.6 6.4 L8 6.4 Z" fill="#111" stroke="#eee" stroke-width="0.5"/></svg></div><div class="tile" style="left:1526px;top:151px"><div style="left:1px;top:1px;width:753px;height:422px;background:#474747;"></div><div style="left:1px;top:1px;width:753px;height:19px;background:#3c3c3c;"></div><div style="left:1px;top:19px;width:753px;height:1px;background:#333;"></div><div style="left:5.7px;top:7.4px;width:6.6px;height:6.6px;border-radius:50%;background:#e0395a"></div><div style="left:17.5px;top:7.4px;width:6.6px;height:6.6px;border-radius:50%;background:#f0b030"></div><div style="left:29.3px;top:7.4px;width:6.6px;height:6.6px;border-radius:50%;background:#2ec43c"></div><svg style="left:45px;top:6px" width="11" height="10" viewBox="0 0 11 10"><path d="M5.5 0.5 L10.5 5 L9 5 L9 9.5 L6.5 9.5 L6.5 6.5 L4.5 6.5 L4.5 9.5 L2 9.5 L2 5 L0.5 5 Z" fill="#c8c8c8"/></svg><div class="t" style="left:326.5px;top:6.32px;font-size:7.8px;line-height:9.36px;color:#d0d0d0;font-weight:normal;letter-spacing:0.18px">Adobe Illustrator 2025</div><div class="t" style="left:627px;top:3.9px;width:40px;height:13.9px;border-radius:7px;background:#1d5fd6;color:#fff;font-size:7.2px;line-height:13.9px;text-align:center;font-weight:bold">Partager</div><svg style="left:674px;top:4px" width="40" height="13" viewBox="0 0 40 13"><path d="M4 2.5 Q7.5 2.5 7.5 7 L8.5 9.5 L-0.5 9.5 L0.5 7 Q0.5 2.5 4 2.5Z" fill="#bcbcbc"/><circle cx="7.5" cy="2" r="1.6" fill="#2a7de0"/><circle cx="22.5" cy="5.5" r="3.2" fill="none" stroke="#c8c8c8" stroke-width="1.2"/><path d="M24.8 7.8 L27 10" stroke="#c8c8c8" stroke-width="1.3"/></svg><div style="left:718.5px;top:6.5px;width:10px;height:7px;background:#c8c8c8;"></div><div style="left:723px;top:6.5px;width:1px;height:7px;background:#3c3c3c;"></div><div style="left:723px;top:9.5px;width:6px;height:1px;background:#3c3c3c;"></div><div style="left:739.5px;top:6px;width:10px;height:8px;background:transparent;border:1px solid #b8b8b8;box-sizing:border-box"></div><div style="left:749px;top:1.5px;width:4px;height:4px;border-radius:50%;background:#d08a30"></div><div style="left:1px;top:20px;width:753px;height:20px;background:#3c3c3c;"></div><div class="t" style="left:8.7px;top:26.54px;font-size:6.6px;line-height:7.92px;color:#b0b0b0;font-weight:normal;">Auc. sélect.</div><div style="left:65.3px;top:24.9px;width:11.8px;height:11.7px;background:#000;border:1px solid #9a9a9a;box-sizing:border-box"></div><div class="t" style="left:81px;top:26.4px;font-size:6px;line-height:7.2px;color:#b0b0b0;font-weight:normal;">⌄</div><div style="left:91.3px;top:24.9px;width:11.5px;height:11.7px;background:#fff;"></div><svg style="left:91.3px;top:24.9px" width="11.5" height="11.7"><path d="M1 10.7 L10.5 1" stroke="#c0103a" stroke-width="1.4"/></svg><div class="t" style="left:107px;top:26.4px;font-size:6px;line-height:7.2px;color:#b0b0b0;font-weight:normal;">⌄</div><div class="t" style="left:120.2px;top:27.04px;font-size:6.6px;line-height:7.92px;color:#c8c8c8;font-weight:bold;text-decoration:underline;text-decoration-color:#777">Contour :</div><div class="t" style="left:155px;top:26.8px;font-size:7px;line-height:8.4px;color:#a0a0a0;font-weight:normal;">⇕</div><div style="left:162.9px;top:24px;width:28.5px;height:12.5px;background:#2e2e2e;"></div><div class="t" style="left:195px;top:26.4px;font-size:6px;line-height:7.2px;color:#b0b0b0;font-weight:normal;">⌄</div><div style="left:206px;top:24.5px;width:53.3px;height:12px;background:#6a6a6a;"></div><div style="left:273.8px;top:24.9px;width:51.1px;height:11.1px;background:#e4e4e4;"></div><div style="left:278.5px;top:29.3px;width:2.4px;height:2.4px;border-radius:50%;background:#000"></div><div class="t" style="left:287.5px;top:26.54px;font-size:6.6px;line-height:7.92px;color:#111;font-weight:normal;">Arrondi 5 pt</div><div class="t" style="left:327px;top:26.4px;font-size:6px;line-height:7.2px;color:#b0b0b0;font-weight:normal;">⌄</div><div class="t" style="left:339.6px;top:26.54px;font-size:6.6px;line-height:7.92px;color:#c8c8c8;font-weight:bold;text-decoration:underline;text-decoration-color:#777">Opacité :</div><div style="left:370px;top:24.5px;width:32.5px;height:12px;background:#333;"></div><div class="t" style="left:371.5px;top:26.54px;font-size:6.6px;line-height:7.92px;color:#d8d8d8;font-weight:bold;">100%</div><div class="t" style="left:406.5px;top:25.7px;font-size:8px;line-height:9.6px;color:#b0b0b0;font-weight:normal;">›</div><div class="t" style="left:417.8px;top:27.04px;font-size:6.6px;line-height:7.92px;color:#a8a8a8;font-weight:normal;">Style :</div><div style="left:438.9px;top:24.9px;width:11.1px;height:11.1px;background:#dedede;"></div><div class="t" style="left:454px;top:26.4px;font-size:6px;line-height:7.2px;color:#b0b0b0;font-weight:normal;">⌄</div><div style="left:467px;top:23.5px;width:71px;height:14px;background:#3a3a3a;border:1px solid #333;box-sizing:border-box"></div><div class="t" style="left:471.5px;top:26.54px;font-size:6.6px;line-height:7.92px;color:#d8d8d8;font-weight:bold;">Format de document</div><div style="left:541.5px;top:23.5px;width:45px;height:14px;background:#3a3a3a;border:1px solid #333;box-sizing:border-box"></div><div class="t" style="left:546px;top:26.54px;font-size:6.6px;line-height:7.92px;color:#d8d8d8;font-weight:bold;">Préférences</div><svg style="left:592px;top:24px" width="160" height="14" viewBox="0 0 160 14"><rect x="2.5" y="2" width="6" height="6" fill="none" stroke="#aaa" stroke-width="1"/><path d="M6 6 L11 11 L8 11Z" fill="#ccc"/><path d="M15 5 L17 7 L19 5" stroke="#aaa" fill="none"/><rect x="34.5" y="3" width="8" height="8" fill="none" stroke="#bbb" stroke-width="1.2"/><path d="M40 1 L42 3" stroke="#bbb"/><g fill="#777"><rect x="102" y="2" width="2" height="2"/><rect x="107" y="2" width="2" height="2"/><rect x="102" y="9" width="2" height="2"/><rect x="107" y="9" width="2" height="2"/></g><rect x="116.5" y="1.5" width="2" height="11" fill="#bbb"/><path d="M120 4.5 L124 4.5 Q126 4.5 126 7 Q126 9.5 124 9.5 L120 9.5" stroke="#bbb" fill="none" stroke-width="1.2"/><g fill="#aaa"><rect x="145" y="3" width="8" height="1.2"/><rect x="145" y="6" width="8" height="1.2"/><rect x="145" y="9" width="8" height="1.2"/></g></svg><div style="left:1px;top:40px;width:753px;height:18px;background:#2e2e2e;"></div><div style="left:25.7px;top:40px;width:124.3px;height:18px;background:#383838;"></div><div class="t" style="left:30.5px;top:44.8px;font-size:7px;line-height:8.4px;color:#c0c0c0;font-weight:normal;">×</div><div class="t" style="left:38.8px;top:45.04px;font-size:6.6px;line-height:7.92px;color:#d8d8d8;font-weight:bold;">02_04.ai* @ 44,42 % (RVB/Aperçu)</div><div style="left:627px;top:58px;width:10px;height:45px;background:#3c3c3c;"></div><div style="left:627px;top:103px;width:1px;height:0px;background:#333;"></div><div style="left:134.3px;top:134.5px;width:288.3px;height:205.2px;background:#262626"></div><div style="left:134.8px;top:135px;width:286.8px;height:203.7px;background:#fff"></div><svg style="left:0;top:0" width="755" height="424"><defs><linearGradient id="wl" x1="115.6" y1="0" x2="278" y2="0" gradientUnits="userSpaceOnUse"><stop offset="0" stop-color="#1f7a48" stop-opacity="1"/><stop offset="0.12" stop-color="#5aac72" stop-opacity="0.75"/><stop offset="0.22" stop-color="#86c690" stop-opacity="0.5"/><stop offset="0.45" stop-color="#aedcb4" stop-opacity="0.3"/><stop offset="0.65" stop-color="#c4e6c8" stop-opacity="0.2"/><stop offset="1" stop-color="#c8e8d0" stop-opacity="0.1"/></linearGradient><linearGradient id="wr" x1="441.6" y1="0" x2="278" y2="0" gradientUnits="userSpaceOnUse"><stop offset="0" stop-color="#1f7a48" stop-opacity="1"/><stop offset="0.12" stop-color="#5aac72" stop-opacity="0.75"/><stop offset="0.22" stop-color="#86c690" stop-opacity="0.5"/><stop offset="0.45" stop-color="#aedcb4" stop-opacity="0.3"/><stop offset="0.65" stop-color="#c4e6c8" stop-opacity="0.2"/><stop offset="1" stop-color="#c8e8d0" stop-opacity="0.1"/></linearGradient><linearGradient id="pl" x1="0" y1="150" x2="0" y2="323" gradientUnits="userSpaceOnUse"><stop offset="0" stop-color="#ffffff" stop-opacity="0"/><stop offset="0.5" stop-color="#eef6fb" stop-opacity="0.3"/><stop offset="0.75" stop-color="#d8eef6" stop-opacity="0.7"/><stop offset="1" stop-color="#c4e8f2" stop-opacity="0.9"/></linearGradient><linearGradient id="pr" x1="0" y1="150" x2="0" y2="323" gradientUnits="userSpaceOnUse"><stop offset="0" stop-color="#ffffff" stop-opacity="0"/><stop offset="0.5" stop-color="#fdf4ea" stop-opacity="0.3"/><stop offset="0.75" stop-color="#f8ecd4" stop-opacity="0.7"/><stop offset="1" stop-color="#f4e2c4" stop-opacity="0.9"/></linearGradient><clipPath id="cv"><rect x="25" y="58" width="602" height="341"/></clipPath></defs><g clip-path="url(#cv)"><path d="M277.8 151.8 L218.7 182.92 L218.7 291.55 L277.8 322.7Z" fill="url(#pl)"/><path d="M277.8 151.8 L338.5 183.45 L338.5 291.02 L277.8 322.7Z" fill="url(#pr)"/><path d="M271.83 319.55L266.37 322.2M266.28 316.63L253.99 322.2M261.12 313.91L241.6 322.2M256.29 311.36L229.22 322.2M251.78 308.98L216.83 322.2M247.55 306.75L204.45 322.2M243.57 304.66L192.06 322.2M239.82 302.68L179.68 322.2M236.29 300.82L167.29 322.2M232.95 299.06L154.9 322.2M229.8 297.4L142.52 322.2M226.8 295.82L130.13 322.2M223.96 294.32L117.75 322.2M221.27 292.9L105.36 322.2M218.7 291.55L92.98 322.2M283.99 319.47L289.57 322.2M289.72 316.48L302.29 322.2M295.06 313.69L315.01 322.2M300.03 311.1L327.73 322.2M304.67 308.67L340.45 322.2M309.02 306.4L353.18 322.2M313.1 304.27L365.9 322.2M316.94 302.27L378.62 322.2M320.56 300.38L391.34 322.2M323.97 298.6L404.06 322.2M327.19 296.92L416.78 322.2M330.25 295.32L429.5 322.2M333.14 293.81L442.22 322.2M335.89 292.38L454.94 322.2M338.5 291.02L467.66 322.2" stroke="#7a9488" stroke-opacity="0.7" stroke-width="0.6" fill="none"/><path d="M115.6 237.2 L277.8 322.7 L277.8 277.5 Z" fill="url(#wl)"/><path d="M441.6 237.2 L277.8 322.7 L277.8 277.5 Z" fill="url(#wr)"/><path d="M115.6 237.2L277.8 280.51M441.6 237.2L277.8 280.51M115.6 237.2L277.8 283.53M441.6 237.2L277.8 283.53M115.6 237.2L277.8 286.54M441.6 237.2L277.8 286.54M115.6 237.2L277.8 289.55M441.6 237.2L277.8 289.55M115.6 237.2L277.8 292.57M441.6 237.2L277.8 292.57M115.6 237.2L277.8 295.58M441.6 237.2L277.8 295.58M115.6 237.2L277.8 298.59M441.6 237.2L277.8 298.59M115.6 237.2L277.8 301.61M441.6 237.2L277.8 301.61M115.6 237.2L277.8 304.62M441.6 237.2L277.8 304.62M115.6 237.2L277.8 307.63M441.6 237.2L277.8 307.63M115.6 237.2L277.8 310.65M441.6 237.2L277.8 310.65M115.6 237.2L277.8 313.66M441.6 237.2L277.8 313.66M115.6 237.2L277.8 316.67M441.6 237.2L277.8 316.67M115.6 237.2L277.8 319.69M441.6 237.2L277.8 319.69" stroke="#6a9080" stroke-opacity="0.45" stroke-width="0.5" fill="none"/><path d="M80 237.2 L477 237.2" stroke="#b8b8b8" stroke-opacity="0.55" stroke-width="0.7"/><path d="M79 322.2 L477 322.2" stroke="#a0aea6" stroke-opacity="0.6" stroke-width="0.7"/><path d="M277.8 151.8L218.7 182.92M277.8 161.29L218.7 188.95M277.8 170.79L218.7 194.99M277.8 180.28L218.7 201.02M277.8 189.78L218.7 207.06M277.8 199.27L218.7 213.09M277.8 208.77L218.7 219.13M277.8 218.26L218.7 225.16M277.8 227.76L218.7 231.2M277.8 237.25L218.7 237.23M277.8 246.74L218.7 243.27M277.8 256.24L218.7 249.3M277.8 265.73L218.7 255.34M277.8 275.23L218.7 261.37M277.8 284.72L218.7 267.41M277.8 294.22L218.7 273.44M277.8 303.71L218.7 279.48M277.8 313.21L218.7 285.51M277.8 322.7L218.7 291.55M277.8 151.8L277.8 322.7M271.83 154.94L271.83 319.55M266.28 157.86L266.28 316.63M261.12 160.58L261.12 313.91M256.29 163.12L256.29 311.36M251.78 165.5L251.78 308.98M247.55 167.73L247.55 306.75M243.57 169.82L243.57 304.66M239.82 171.8L239.82 302.68M236.29 173.66L236.29 300.82M232.95 175.41L232.95 299.06M229.8 177.07L229.8 297.4M226.8 178.65L226.8 295.82M223.96 180.14L223.96 294.32M221.27 181.57L221.27 292.9M218.7 182.92L218.7 291.55" stroke="#4c5e70" stroke-opacity="0.9" stroke-width="0.6" fill="none"/><path d="M277.8 151.8L338.5 183.45M277.8 161.29L338.5 189.42M277.8 170.79L338.5 195.4M277.8 180.28L338.5 201.38M277.8 189.78L338.5 207.35M277.8 199.27L338.5 213.33M277.8 208.77L338.5 219.3M277.8 218.26L338.5 225.28M277.8 227.76L338.5 231.26M277.8 237.25L338.5 237.23M277.8 246.74L338.5 243.21M277.8 256.24L338.5 249.18M277.8 265.73L338.5 255.16M277.8 275.23L338.5 261.14M277.8 284.72L338.5 267.11M277.8 294.22L338.5 273.09M277.8 303.71L338.5 279.06M277.8 313.21L338.5 285.04M277.8 322.7L338.5 291.02M277.8 151.8L277.8 322.7M283.99 155.03L283.99 319.47M289.72 158.02L289.72 316.48M295.06 160.8L295.06 313.69M300.03 163.39L300.03 311.1M304.67 165.81L304.67 308.67M309.02 168.08L309.02 306.4M313.1 170.21L313.1 304.27M316.94 172.21L316.94 302.27M320.56 174.09L320.56 300.38M323.97 175.87L323.97 298.6M327.19 177.55L327.19 296.92M330.25 179.14L330.25 295.32M333.14 180.65L333.14 293.81M335.89 182.09L335.89 292.38M338.5 183.45L338.5 291.02" stroke="#b08472" stroke-opacity="0.75" stroke-width="0.55" fill="none"/><path d="M277.8 151.8 L134.8 227.09" stroke="#808080" stroke-width="0.8"/><path d="M277.8 151.8 L441.6 237.2" stroke="#a09890" stroke-width="0.8"/><path d="M115.6 237.2 L277.8 322.7" stroke="#3f5a5a" stroke-width="1"/><path d="M441.6 237.2 L277.8 322.7" stroke="#9a6a40" stroke-width="1"/><path d="M277.8 322.7 L277.8 337 M267.8 328.2 L277.8 322.7 L287.8 328.2" stroke="#b0b0b0" stroke-width="0.6" fill="none"/><path d="M264.8 330.2 L277.8 322.7 L290.8 330.2" stroke="#888" stroke-width="0.6" fill="none"/><circle cx="264.8" cy="330.2" r="2.2" fill="#6a6a6a"/><circle cx="290.8" cy="330.2" r="2.2" fill="#6a6a6a"/><circle cx="277.8" cy="337.5" r="2.2" fill="#6a6a6a"/></g></svg><div style="left:1px;top:40px;width:23.5px;height:382px;background:#3b3b3b;"></div><div style="left:24.5px;top:58px;width:1px;height:356px;background:#2f2f2f;"></div><div style="left:1px;top:40px;width:23.5px;height:10px;background:#333;"></div><div style="left:4.4px;top:299.7px;width:15.3px;height:12.7px;background:#262626;"></div><svg style="left:1px;top:0" width="24" height="424" viewBox="1 0 24 424"><defs><linearGradient id="tg"><stop offset="0" stop-color="#eee"/><stop offset="1" stop-color="#222"/></linearGradient></defs><path d="M9 61.5 L15.5 67.5 L12 68 L10 71.5 Z" fill="none" stroke="#c4c4c4" stroke-width="0.9"/><path d="M9 75.7 L15.5 81.7 L12 82.2 L10 85.7 Z" fill="#c4c4c4"/><rect x="17" y="84.2" width="1.2" height="1.2" fill="#999"/><path d="M8 99.4 L9.5 94.9 L14 90.4 L16.5 92.9 L12 97.4 Z" fill="#c4c4c4"/><circle cx="11.5" cy="95.7" r="0.9" fill="#3b3b3b"/><rect x="17" y="98.4" width="1.2" height="1.2" fill="#999"/><path d="M8 113.6 L9.5 109.1 L14 104.6 L16.5 107.1 L12 111.6 Z" fill="#c4c4c4"/><circle cx="11.5" cy="109.9" r="0.9" fill="#3b3b3b"/><rect x="17" y="112.6" width="1.2" height="1.2" fill="#999"/><path d="M7 114.1 Q5 110.1 8 108.1" stroke="#c4c4c4" fill="none" stroke-width="0.8"/><rect x="7" y="118.4" width="9.5" height="7.5" fill="#555" stroke="#c4c4c4" stroke-width="0.9"/><rect x="17" y="125.9" width="1.2" height="1.2" fill="#999"/><path d="M7.5 141.6 Q8 138.6 10 138.6 L16 132.1 L16.8 132.9 L11 139.6 Q10 141.6 7.5 141.6Z" fill="#c4c4c4"/><text x="7.5" y="155.6" font-family="Liberation Serif" font-weight="bold" font-size="12" fill="#c4c4c4">T</text><path d="M8 164 A4.5 4.5 0 1 1 10 169" stroke="#c4c4c4" fill="none" stroke-width="1"/><path d="M6.5 162 L8 166 L10.5 163Z" fill="#c4c4c4"/><path d="M7 181.2 L12 175.2 L16.5 179.2 L11.5 184.2 Z" fill="#c4c4c4"/><path d="M9.5 178.2 L14 182.2" stroke="#3b3b3b" stroke-width="0.8"/><ellipse cx="11" cy="192.4" rx="4.5" ry="3" fill="none" stroke="#c4c4c4" stroke-width="0.9"/><path d="M12 193.4 L16.5 197.4 L14 197.6 L13 199.4Z" fill="#c4c4c4"/><rect x="7.5" y="203.6" width="9" height="8" fill="url(#tg)" stroke="#aaa" stroke-width="0.6"/><path d="M7.5 226.8 L8.5 224.3 L14 218.8 L16 220.8 L10.5 226.3Z" fill="none" stroke="#c4c4c4" stroke-width="0.9"/><circle cx="15.5" cy="218.3" r="1.6" fill="#c4c4c4"/><path d="M7.5 234 L11 237 L9 239 L13 240 L16 237" stroke="#c4c4c4" fill="none" stroke-width="1.2"/><path d="M12 232 L16 235" stroke="#c4c4c4" stroke-width="1.2"/><path d="M7.5 248.1 L11 251.1 L9 253.1 L13 254.1 L16 251.1" stroke="#c4c4c4" fill="none" stroke-width="1.2"/><path d="M12 246.1 L16 249.1" stroke="#c4c4c4" stroke-width="1.2"/><circle cx="10" cy="262.4" r="3" fill="none" stroke="#c4c4c4" stroke-width="0.9"/><circle cx="14" cy="265.4" r="3" fill="none" stroke="#c4c4c4" stroke-width="0.9"/><path d="M9 272.9 L9 280.9 L17 280.9 M7 274.9 L15 274.9 L15 282.9" stroke="#c4c4c4" fill="none" stroke-width="0.9"/><rect x="7.5" y="286.5" width="1" height="10" fill="#c4c4c4"/><rect x="9.5" y="288" width="5" height="2.5" fill="#c4c4c4"/><rect x="9.5" y="292.5" width="7" height="2.5" fill="#c4c4c4"/><path d="M7.5 301.6 L7.5 310.6 L16.5 310.6 Z M7.5 304.6 L13.5 307.6 M11 305.1 L11 310.6" stroke="#c4c4c4" fill="none" stroke-width="0.8"/><path d="M7 315.2 L12 320.2 L9.5 320.5 L8 323.2Z" fill="#c4c4c4"/><circle cx="14" cy="322.2" r="3" fill="#aaa"/><path d="M14 319.2 L14 322.2 L11.5 323.7 M14 322.2 L16.5 323.7" stroke="#3b3b3b" stroke-width="0.6"/><circle cx="8" cy="335" r="2.8" fill="#ddd"/><path d="M14 333 Q17 333 17 337" stroke="#bbb" fill="none"/><rect x="4.5" y="343.7" width="9.5" height="9.5" fill="#000" stroke="#bbb" stroke-width="1"/><rect x="10" y="350" width="9" height="9" fill="#fff"/><path d="M10.5 358.5 L18.5 350.5" stroke="#c0103a" stroke-width="1.4"/><rect x="4" y="365" width="4.5" height="4" fill="#000"/><rect x="9.5" y="365" width="2.5" height="4" fill="#ddd"/><rect x="13.5" y="365" width="4.5" height="4" fill="#fff"/><path d="M13.5 369 L18 365" stroke="#c0103a"/><circle cx="11" cy="376.5" r="2.6" fill="#999"/><circle cx="12.5" cy="378" r="2.2" fill="#bbb"/><rect x="6" y="388" width="9" height="6" fill="none" stroke="#aaa"/><rect x="9" y="386" width="9" height="6" fill="#3b3b3b" stroke="#aaa"/><g fill="#ccc"><circle cx="7.5" cy="411.4" r="1.1"/><circle cx="11" cy="411.4" r="1.1"/><circle cx="14.5" cy="411.4" r="1.1"/></g></svg><svg style="left:40.6px;top:73.3px" width="30" height="30" viewBox="-15 -15 30 30"><path d="M-14 -13.5 L0 -13.5 A14 14 0 1 1 -14 0 Z" fill="#262626"/><circle r="11" fill="#c8f0ee"/><path d="M0 -6.8 L0 0 L-6 3.4 L-6 -3.4Z" fill="#e6f2f2"/><path d="M0 -6.8 L6 -3.4 L6 3.4 L0 0Z" fill="#a8b4b4"/><path d="M0 0 L6 3.4 L0 6.8 L-6 3.4Z" fill="#ffffff"/><path d="M0 -6.8 L6 -3.4 L6 3.4 L0 6.8 L-6 3.4 L-6 -3.4Z M0 0 L0 -6.8 M0 0 L-6 3.4 M0 0 L6 3.4" fill="none" stroke="#1a1a1a" stroke-width="0.9"/><rect x="-12.3" y="-12.3" width="2.6" height="2.6" fill="#eee"/></svg><div class="t" style="left:189px;top:102.5px;font-size:15px;line-height:18px;color:#000;font-weight:bold;-webkit-text-stroke:0.55px #000">PERPE</div><div class="t" style="left:267.5px;top:102.5px;font-size:15px;line-height:18px;color:#000;font-weight:bold;-webkit-text-stroke:0.55px #000">CTIVE</div><div class="t" style="left:343.5px;top:102.5px;font-size:15px;line-height:18px;color:#000;font-weight:bold;-webkit-text-stroke:0.55px #000">3D</div><div style="left:25.5px;top:399.5px;width:469px;height:15px;background:#3a3a3a;"></div><div style="left:25.5px;top:414.5px;width:469px;height:8px;background:#363636;"></div><div class="t" style="left:28px;top:403.2px;width:8px;height:8px;border-radius:50%;background:#cfcfcf;color:#3a3a3a;font-size:6.5px;line-height:8px;text-align:center;font-weight:bold">?</div><div class="t" style="left:42.6px;top:403.31px;font-size:6.65px;line-height:7.98px;color:#c4c4c4;font-weight:normal;"><b>Faites glisser</b> les objets pour les déplacer, les redimensionner et les dupliquer dans la grille de perspective</div><div class="t" style="left:29px;top:416.08px;font-size:6.2px;line-height:7.44px;color:#d0d0d0;font-weight:bold;">44,42%</div><div class="t" style="left:58px;top:416px;font-size:5.5px;line-height:6.6px;color:#aaa;font-weight:normal;">⌄</div><div style="left:71px;top:415px;width:35px;height:7px;background:#303030;"></div><div class="t" style="left:72px;top:416.08px;font-size:6.2px;line-height:7.44px;color:#d0d0d0;font-weight:normal;">0°</div><div class="t" style="left:102px;top:416px;font-size:5.5px;line-height:6.6px;color:#aaa;font-weight:normal;">⌄</div><div style="left:136px;top:415px;width:23px;height:7px;background:#303030;"></div><div class="t" style="left:138px;top:416.08px;font-size:6.2px;line-height:7.44px;color:#d0d0d0;font-weight:normal;">1</div><div class="t" style="left:161px;top:416px;font-size:5.5px;line-height:6.6px;color:#aaa;font-weight:normal;">⌄</div><div class="t" style="left:183.5px;top:416.08px;font-size:6.2px;line-height:7.44px;color:#c8c8c8;font-weight:normal;width:140px;text-align:center">Sélection d'une perspective</div><div class="t" style="left:313px;top:416.2px;font-size:6px;line-height:7.2px;color:#aaa;font-weight:normal;">▸</div><div style="left:494.5px;top:103px;width:142px;height:311px;background:#3c3c3c;border-left:1px solid #2a2a2a;border-top:1px solid #2a2a2a;box-sizing:border-box"></div><div style="left:495.5px;top:105px;width:141px;height:15.3px;background:#333;"></div><div style="left:495.5px;top:105px;width:33.5px;height:15.3px;background:#3c3c3c;"></div><div class="t" style="left:500.4px;top:108.54px;font-size:6.6px;line-height:7.92px;color:#e6e6e6;font-weight:bold;">Calques</div><div class="t" style="left:534.7px;top:108.54px;font-size:6.6px;line-height:7.92px;color:#a8a8a8;font-weight:normal;">Plans de travail</div><div class="t" style="left:612px;top:108.3px;font-size:7px;line-height:8.4px;color:#888;font-weight:normal;">››</div><div style="left:628px;top:109.5px;width:6px;height:6px;background:#666;"></div><div style="left:503px;top:128px;width:113px;height:11.8px;background:#2e2e2e;"></div><svg style="left:504px;top:129px" width="10" height="10"><circle cx="4" cy="4.3" r="2.6" fill="none" stroke="#aaa" stroke-width="1"/><path d="M6 6.3 L8 8.5" stroke="#aaa"/></svg><div class="t" style="left:520px;top:130.28px;font-size:6.2px;line-height:7.44px;color:#a0a0a0;font-weight:normal;"><i>Rechercher dans tout</i></div><svg style="left:622px;top:128px" width="10" height="10"><path d="M0.5 1 L8.5 1 L5.5 5 L5.5 9 L3.5 8 L3.5 5 Z" fill="#bbb"/></svg><svg style="left:500px;top:149px" width="9" height="6"><path d="M0.5 3 Q4.5 -1 8.5 3 Q4.5 7 0.5 3Z" fill="none" stroke="#aaa" stroke-width="0.8"/><circle cx="4.5" cy="3" r="1.2" fill="#aaa"/></svg><div style="left:523.5px;top:145.8px;width:2.5px;height:12.4px;background:#c8153c;"></div><div class="t" style="left:531.5px;top:148.4px;font-size:6px;line-height:7.2px;color:#aaa;font-weight:normal;">⌄</div><div style="left:541px;top:147.2px;width:10.4px;height:9.6px;background:#f2f2f2;border:0.6px solid #222;box-sizing:border-box"></div><div class="t" style="left:555px;top:148.16px;font-size:6.4px;line-height:7.68px;color:#d0d0d0;font-weight:normal;">Texte</div><div style="left:616px;top:149.4px;width:5.2px;height:5.2px;border-radius:50%;border:0.8px solid #aaa;box-sizing:border-box"></div><svg style="left:500px;top:161.4px" width="9" height="6"><path d="M0.5 3 Q4.5 -1 8.5 3 Q4.5 7 0.5 3Z" fill="none" stroke="#aaa" stroke-width="0.8"/><circle cx="4.5" cy="3" r="1.2" fill="#aaa"/></svg><div style="left:523.5px;top:158.2px;width:2.5px;height:12.4px;background:#c8153c;"></div><div style="left:555px;top:159.6px;width:10px;height:9.6px;background:#f2f2f2;border:0.6px solid #222;box-sizing:border-box"></div><div style="left:556px;top:162.9px;width:8px;height:3px;background:#111;"></div><div class="t" style="left:568px;top:160.56px;font-size:6.4px;line-height:7.68px;color:#d0d0d0;font-weight:normal;">3D</div><div style="left:616px;top:161.8px;width:5.2px;height:5.2px;border-radius:50%;border:0.8px solid #aaa;box-sizing:border-box"></div><svg style="left:500px;top:173.8px" width="9" height="6"><path d="M0.5 3 Q4.5 -1 8.5 3 Q4.5 7 0.5 3Z" fill="none" stroke="#aaa" stroke-width="0.8"/><circle cx="4.5" cy="3" r="1.2" fill="#aaa"/></svg><div style="left:523.5px;top:170.6px;width:2.5px;height:12.4px;background:#c8153c;"></div><div style="left:555px;top:172px;width:10px;height:9.6px;background:#f2f2f2;border:0.6px solid #222;box-sizing:border-box"></div><div style="left:556px;top:175.3px;width:8px;height:3px;background:#111;"></div><div class="t" style="left:568px;top:172.96px;font-size:6.4px;line-height:7.68px;color:#d0d0d0;font-weight:normal;">PERPE</div><div style="left:616px;top:174.2px;width:5.2px;height:5.2px;border-radius:50%;border:0.8px solid #aaa;box-sizing:border-box"></div><svg style="left:500px;top:186.2px" width="9" height="6"><path d="M0.5 3 Q4.5 -1 8.5 3 Q4.5 7 0.5 3Z" fill="none" stroke="#aaa" stroke-width="0.8"/><circle cx="4.5" cy="3" r="1.2" fill="#aaa"/></svg><div style="left:523.5px;top:183px;width:2.5px;height:12.4px;background:#c8153c;"></div><div style="left:555px;top:184.4px;width:10px;height:9.6px;background:#f2f2f2;border:0.6px solid #222;box-sizing:border-box"></div><div style="left:556px;top:187.7px;width:8px;height:3px;background:#111;"></div><div class="t" style="left:568px;top:185.36px;font-size:6.4px;line-height:7.68px;color:#d0d0d0;font-weight:normal;">CTIVE</div><div style="left:616px;top:186.6px;width:5.2px;height:5.2px;border-radius:50%;border:0.8px solid #aaa;box-sizing:border-box"></div><div style="left:496.5px;top:195.4px;width:137px;height:12.4px;background:#2d4766;"></div><svg style="left:500px;top:198.6px" width="9" height="6"><path d="M0.5 3 Q4.5 -1 8.5 3 Q4.5 7 0.5 3Z" fill="none" stroke="#aaa" stroke-width="0.8"/><circle cx="4.5" cy="3" r="1.2" fill="#aaa"/></svg><div style="left:523.5px;top:195.4px;width:2.5px;height:12.4px;background:#3a5fd0;"></div><div style="left:541px;top:196.8px;width:10.4px;height:9.6px;background:#f2f2f2;border:0.6px solid #222;box-sizing:border-box"></div><div class="t" style="left:555px;top:197.76px;font-size:6.4px;line-height:7.68px;color:#a8c8f0;font-weight:normal;">Grille</div><div style="left:616px;top:199px;width:5.2px;height:5.2px;border-radius:50%;border:0.8px solid #aaa;box-sizing:border-box"></div><div style="left:495.5px;top:401px;width:141px;height:13px;background:#3c3c3c;"></div><div class="t" style="left:503px;top:404.96px;font-size:6.4px;line-height:7.68px;color:#c8c8c8;font-weight:normal;">2 Ca...</div><svg style="left:520px;top:403px" width="115" height="11"><g fill="none" stroke="#aaa" stroke-width="0.9"><rect x="10" y="2" width="7" height="7"/><rect x="70" y="2" width="8" height="6"/><rect x="85" y="2" width="7" height="7"/><path d="M100 3 L107 3 L106 10 L101 10Z"/></g><g fill="none" stroke="#666" stroke-width="0.9"><rect x="25" y="2" width="7" height="7"/><circle cx="43" cy="5" r="3"/><path d="M55 2 L58 9"/></g></svg><div style="left:637px;top:40px;width:117px;height:382px;background:#2e2e2e;"></div><div style="left:638px;top:48px;width:116px;height:374px;background:#3c3c3c;"></div><div style="left:638px;top:88px;width:116px;height:2px;background:#333;"></div><div style="left:638px;top:262px;width:116px;height:2px;background:#333;"></div><div style="left:638px;top:320px;width:116px;height:2px;background:#333;"></div><div style="left:638px;top:376px;width:116px;height:2px;background:#333;"></div><div style="left:641px;top:382.7px;width:110px;height:11.7px;background:#262626;"></div><div class="t" style="left:660px;top:58.59px;font-size:6.35px;line-height:7.62px;color:#dcdcdc;font-weight:bold;">Propriétés</div><div class="t" style="left:660px;top:75.09px;font-size:6.35px;line-height:7.62px;color:#dcdcdc;font-weight:bold;">Alignement</div><div class="t" style="left:660px;top:99.19px;font-size:6.35px;line-height:7.62px;color:#dcdcdc;font-weight:bold;">Transformation</div><div class="t" style="left:660px;top:115.69px;font-size:6.35px;line-height:7.62px;color:#dcdcdc;font-weight:bold;">Pathfinder</div><div class="t" style="left:660px;top:132.29px;font-size:6.35px;line-height:7.62px;color:#dcdcdc;font-weight:bold;">Nuancier</div><div class="t" style="left:660px;top:148.79px;font-size:6.35px;line-height:7.62px;color:#dcdcdc;font-weight:bold;">Contour</div><div class="t" style="left:660px;top:165.29px;font-size:6.35px;line-height:7.62px;color:#dcdcdc;font-weight:bold;">Formes</div><div class="t" style="left:660px;top:181.79px;font-size:6.35px;line-height:7.62px;color:#dcdcdc;font-weight:bold;">Symboles</div><div class="t" style="left:660px;top:198.29px;font-size:6.35px;line-height:7.62px;color:#dcdcdc;font-weight:bold;">Dégradé</div><div class="t" style="left:660px;top:214.79px;font-size:6.35px;line-height:7.62px;color:#dcdcdc;font-weight:bold;">Transparence</div><div class="t" style="left:660px;top:231.29px;font-size:6.35px;line-height:7.62px;color:#dcdcdc;font-weight:bold;">Couleur</div><div class="t" style="left:660px;top:247.79px;font-size:6.35px;line-height:7.62px;color:#dcdcdc;font-weight:bold;">Guide des couleurs</div><div class="t" style="left:660px;top:271.89px;font-size:6.35px;line-height:7.62px;color:#dcdcdc;font-weight:bold;">Liens</div><div class="t" style="left:660px;top:288.39px;font-size:6.35px;line-height:7.62px;color:#dcdcdc;font-weight:bold;">Bibliothèques</div><div class="t" style="left:660px;top:304.89px;font-size:6.35px;line-height:7.62px;color:#dcdcdc;font-weight:bold;">Informations sur le docum...</div><div class="t" style="left:660px;top:328.99px;font-size:6.35px;line-height:7.62px;color:#dcdcdc;font-weight:bold;">Variables</div><div class="t" style="left:660px;top:345.49px;font-size:6.35px;line-height:7.62px;color:#dcdcdc;font-weight:bold;">Aspect</div><div class="t" style="left:660px;top:361.99px;font-size:6.35px;line-height:7.62px;color:#dcdcdc;font-weight:bold;">Exportation de ressources</div><div class="t" style="left:660px;top:385.79px;font-size:6.35px;line-height:7.62px;color:#dcdcdc;font-weight:bold;">Calques</div><div class="t" style="left:660px;top:402.54px;font-size:6.6px;line-height:7.92px;color:#9a9a9a;font-weight:bold;">Plans de travail</div><svg style="left:0;top:0" width="755" height="424"><g stroke="#c4c4c4" stroke-width="0.8" fill="none"><path d="M644 59.2h9M644 61.7h9M644 64.2h9"/><circle cx="647" cy="59.2" r="1.1" fill="#3c3c3c"/><circle cx="650" cy="61.7" r="1.1" fill="#3c3c3c"/><circle cx="647" cy="64.2" r="1.1" fill="#3c3c3c"/></g><g fill="#c4c4c4"><rect x="644" y="73.7" width="1" height="9"/><rect x="645.5" y="75.2" width="4" height="2.5"/><rect x="645.5" y="78.7" width="8" height="2.5"/></g><g fill="none" stroke="#c4c4c4" stroke-width="0.8" stroke-dasharray="1.2 1"><rect x="645" y="98.8" width="7.5" height="7.5"/></g><g fill="#c4c4c4"><rect x="644" y="97.8" width="2" height="2"/><rect x="651.5" y="97.8" width="2" height="2"/><rect x="644" y="105.3" width="2" height="2"/><rect x="651.5" y="105.3" width="2" height="2"/></g><rect x="644" y="114.8" width="5.5" height="5" fill="#c4c4c4"/><rect x="647.5" y="117.8" width="5.5" height="5" fill="#999" stroke="#3c3c3c" stroke-width="0.6"/><rect x="644" y="131.9" width="9.5" height="7" fill="#888"/><g fill="#bbb"><rect x="645" y="132.70000000000002" width="2.2" height="2.4"/><rect x="647.8" y="132.70000000000002" width="2.2" height="2.4"/><rect x="650.6" y="132.70000000000002" width="2.2" height="2.4"/><rect x="645" y="135.9" width="2.2" height="2.4"/></g><g fill="#c4c4c4"><rect x="644" y="148.4" width="9.5" height="1.1"/><rect x="644" y="151.20000000000002" width="9.5" height="1.3"/><rect x="644" y="154.20000000000002" width="9.5" height="1.6"/></g><g fill="#c4c4c4"><rect x="646.5" y="168.4" width="4" height="4.5"/><path d="M647 168.4 L645 163.9 L648 167.4Z M649 168.4 L648.5 163.4 L650 167.9Z M650 168.4 L652.5 164.9 L651 168.4Z"/></g><g fill="#c4c4c4"><circle cx="648.5" cy="182.70000000000002" r="2"/><circle cx="646.3" cy="185.4" r="2"/><circle cx="650.7" cy="185.4" r="2"/><path d="M648 184.9 L647 188.9 L650 188.9 L649 184.9Z"/></g><defs><linearGradient id="gd"><stop offset="0" stop-color="#222"/><stop offset="1" stop-color="#eee"/></linearGradient></defs><rect x="644" y="197.9" width="9.5" height="7.5" fill="url(#gd)" stroke="#aaa" stroke-width="0.5"/><circle cx="647.5" cy="217.1" r="3.3" fill="#bbb"/><circle cx="649.8" cy="218.9" r="3.3" fill="#777" stroke="#aaa" stroke-width="0.5"/><ellipse cx="648.8" cy="234.9" rx="4.8" ry="3.5" fill="none" stroke="#c4c4c4" stroke-width="1"/><g fill="#c4c4c4"><circle cx="647" cy="233.9" r="0.9"/><circle cx="650" cy="233.4" r="0.9"/></g><path d="M644 255.4 L644 246.9 Q652 248.9 653.5 255.4Z" fill="#999" stroke="#ccc" stroke-width="0.6"/><g fill="none" stroke="#c4c4c4" stroke-width="1"><rect x="644" y="273" width="5.5" height="4" rx="2"/><rect x="648" y="273" width="5.5" height="4" rx="2"/></g><rect x="644.5" y="287.0" width="8" height="9.5" fill="none" stroke="#c4c4c4" stroke-width="1"/><rect x="647.5" y="287.0" width="2" height="4" fill="#c4c4c4"/><rect x="644.5" y="303.5" width="8" height="9.5" fill="#aaa"/><circle cx="648.5" cy="309" r="2.3" fill="#3c3c3c"/><rect x="648" y="308" width="1" height="2.5" fill="#ccc"/><circle cx="647" cy="333.6" r="2.6" fill="none" stroke="#c4c4c4" stroke-width="1.2"/><circle cx="651.5" cy="329.6" r="1.8" fill="none" stroke="#c4c4c4" stroke-width="0.9"/><circle cx="648.5" cy="348.6" r="3.8" fill="#aaa"/><path d="M649 361.1 L644 361.1 L644 370.1 L653 370.1 L653 365.1" fill="none" stroke="#c4c4c4" stroke-width="1"/><path d="M648 366.1 L653 361.1 M650 361.1 L653 361.1 L653 364.1" stroke="#c4c4c4" stroke-width="1" fill="none"/><path d="M648.7 384.9 L653.5 387.59999999999997 L648.7 390.29999999999995 L644 387.59999999999997Z" fill="#c4c4c4"/><path d="M644 389.9 L648.7 392.59999999999997 L653.5 389.9" fill="none" stroke="#c4c4c4" stroke-width="1.2"/><rect x="645" y="401.5" width="6" height="5" fill="none" stroke="#aaa" stroke-width="0.9"/><rect x="648" y="404.5" width="6" height="5" fill="#555" stroke="#aaa" stroke-width="0.9"/></svg><div class="t" style="left:654.5px;top:399.68px;font-size:12.2px;line-height:14.64px;color:#f4f4f4;font-weight:normal;letter-spacing:-0.35px;text-shadow:0 0 1px #000">Linked<span style="display:inline-block;background:#fff;color:#3c3c3c;padding:0 1px;line-height:10px">in</span> Learning</div><div style="left:86px;top:94.5px;width:56px;height:10px;background:#d4d4d4;border-radius:2px"></div><div class="t" style="left:88.5px;top:96.26px;font-size:5.4px;line-height:6.48px;color:#111;font-weight:normal;">Aucune grille active(4)</div><svg style="left:79px;top:83px" width="9" height="11"><path d="M2 10 L1 5 L3 5 L3 1 Q4 0 5 1 L5 4 L8 5 L8 9 L6 10.5Z" fill="#f4f4f4" stroke="#222" stroke-width="0.5"/></svg></div><div class="tile" style="left:6px;top:580px"><div style="left:1px;top:1px;width:753px;height:422px;background:#474747;"></div><div style="left:1px;top:1px;width:753px;height:19px;background:#3c3c3c;"></div><div style="left:1px;top:19px;width:753px;height:1px;background:#333;"></div><div style="left:5.7px;top:7.4px;width:6.6px;height:6.6px;border-radius:50%;background:#e0395a"></div><div style="left:17.5px;top:7.4px;width:6.6px;height:6.6px;border-radius:50%;background:#f0b030"></div><div style="left:29.3px;top:7.4px;width:6.6px;height:6.6px;border-radius:50%;background:#2ec43c"></div><svg style="left:45px;top:6px" width="11" height="10" viewBox="0 0 11 10"><path d="M5.5 0.5 L10.5 5 L9 5 L9 9.5 L6.5 9.5 L6.5 6.5 L4.5 6.5 L4.5 9.5 L2 9.5 L2 5 L0.5 5 Z" fill="#c8c8c8"/></svg><div class="t" style="left:326.5px;top:6.32px;font-size:7.8px;line-height:9.36px;color:#d0d0d0;font-weight:normal;letter-spacing:0.18px">Adobe Illustrator 2025</div><div class="t" style="left:627px;top:3.9px;width:40px;height:13.9px;border-radius:7px;background:#1d5fd6;color:#fff;font-size:7.2px;line-height:13.9px;text-align:center;font-weight:bold">Partager</div><svg style="left:674px;top:4px" width="40" height="13" viewBox="0 0 40 13"><path d="M4 2.5 Q7.5 2.5 7.5 7 L8.5 9.5 L-0.5 9.5 L0.5 7 Q0.5 2.5 4 2.5Z" fill="#bcbcbc"/><circle cx="7.5" cy="2" r="1.6" fill="#2a7de0"/><circle cx="22.5" cy="5.5" r="3.2" fill="none" stroke="#c8c8c8" stroke-width="1.2"/><path d="M24.8 7.8 L27 10" stroke="#c8c8c8" stroke-width="1.3"/></svg><div style="left:718.5px;top:6.5px;width:10px;height:7px;background:#c8c8c8;"></div><div style="left:723px;top:6.5px;width:1px;height:7px;background:#3c3c3c;"></div><div style="left:723px;top:9.5px;width:6px;height:1px;background:#3c3c3c;"></div><div style="left:739.5px;top:6px;width:10px;height:8px;background:transparent;border:1px solid #b8b8b8;box-sizing:border-box"></div><div style="left:749px;top:1.5px;width:4px;height:4px;border-radius:50%;background:#d08a30"></div><div style="left:1px;top:20px;width:753px;height:20px;background:#3c3c3c;"></div><div class="t" style="left:8.7px;top:26.54px;font-size:6.6px;line-height:7.92px;color:#b8b8b8;font-weight:normal;">Objet en perspective</div><svg style="left:74px;top:24px" width="130" height="14"><g fill="none" stroke="#bbb" stroke-width="0.9"><rect x="1.5" y="1.5" width="10" height="10"/><rect x="17" y="1.5" width="10" height="10"/></g><g fill="#ccc"><circle cx="5" cy="5" r="1.3"/><circle cx="8" cy="8" r="1.3"/><circle cx="21" cy="8" r="1.3"/><circle cx="24" cy="5" r="1.3"/></g><g stroke="#ccc" stroke-width="1.1" fill="none"><path d="M118 2 L118 5 M118 2 L121 2 M129 2 L126 2 M129 2 L129 5 M118 12 L118 9 M118 12 L121 12 M129 12 L126 12 M129 12 L129 9"/><rect x="120.5" y="4.5" width="6" height="5"/></g></svg><div class="t" style="left:107px;top:26.54px;font-size:6.6px;line-height:7.92px;color:#c8c8c8;font-weight:bold;text-decoration:underline;text-decoration-color:#777">Opacité :</div><div style="left:138px;top:24.5px;width:32.5px;height:12px;background:#333;"></div><div class="t" style="left:139.5px;top:26.54px;font-size:6.6px;line-height:7.92px;color:#d8d8d8;font-weight:bold;">100%</div><div class="t" style="left:174px;top:25.7px;font-size:8px;line-height:9.6px;color:#b0b0b0;font-weight:normal;">›</div><svg style="left:592px;top:24px" width="160" height="14" viewBox="0 0 160 14"><g fill="#aaa"><rect x="102" y="2" width="2.2" height="2.2"/><rect x="107" y="2" width="2.2" height="2.2"/><rect x="102" y="9" width="2.2" height="2.2"/><rect x="107" y="9" width="2.2" height="2.2"/></g><rect x="116.5" y="1.5" width="2" height="11" fill="#bbb"/><path d="M120 4.5 L124 4.5 Q126 4.5 126 7 Q126 9.5 124 9.5 L120 9.5" stroke="#bbb" fill="none" stroke-width="1.2"/><g fill="#aaa"><rect x="145" y="3" width="8" height="1.2"/><rect x="145" y="6" width="8" height="1.2"/><rect x="145" y="9" width="8" height="1.2"/></g></svg><div style="left:1px;top:40px;width:753px;height:18px;background:#2e2e2e;"></div><div style="left:25.7px;top:40px;width:124.3px;height:18px;background:#383838;"></div><div class="t" style="left:30.5px;top:44.8px;font-size:7px;line-height:8.4px;color:#c0c0c0;font-weight:normal;">×</div><div class="t" style="left:38.8px;top:45.04px;font-size:6.6px;line-height:7.92px;color:#d8d8d8;font-weight:bold;">02_04.ai* @ 44,42 % (RVB/Aperçu)</div><div style="left:627px;top:58px;width:10px;height:45px;background:#3c3c3c;"></div><div style="left:627px;top:103px;width:1px;height:0px;background:#333;"></div><div style="left:134.3px;top:134.5px;width:288.3px;height:205.2px;background:#262626"></div><div style="left:134.8px;top:135px;width:286.8px;height:203.7px;background:#fff"></div><svg style="left:0;top:0" width="755" height="424"><defs><linearGradient id="wl" x1="115.6" y1="0" x2="278" y2="0" gradientUnits="userSpaceOnUse"><stop offset="0" stop-color="#1f7a48" stop-opacity="1"/><stop offset="0.12" stop-color="#5aac72" stop-opacity="0.75"/><stop offset="0.22" stop-color="#86c690" stop-opacity="0.5"/><stop offset="0.45" stop-color="#aedcb4" stop-opacity="0.3"/><stop offset="0.65" stop-color="#c4e6c8" stop-opacity="0.2"/><stop offset="1" stop-color="#c8e8d0" stop-opacity="0.1"/></linearGradient><linearGradient id="wr" x1="441.6" y1="0" x2="278" y2="0" gradientUnits="userSpaceOnUse"><stop offset="0" stop-color="#1f7a48" stop-opacity="1"/><stop offset="0.12" stop-color="#5aac72" stop-opacity="0.75"/><stop offset="0.22" stop-color="#86c690" stop-opacity="0.5"/><stop offset="0.45" stop-color="#aedcb4" stop-opacity="0.3"/><stop offset="0.65" stop-color="#c4e6c8" stop-opacity="0.2"/><stop offset="1" stop-color="#c8e8d0" stop-opacity="0.1"/></linearGradient><linearGradient id="pl" x1="0" y1="150" x2="0" y2="323" gradientUnits="userSpaceOnUse"><stop offset="0" stop-color="#ffffff" stop-opacity="0"/><stop offset="0.5" stop-color="#eef6fb" stop-opacity="0.3"/><stop offset="0.75" stop-color="#d8eef6" stop-opacity="0.7"/><stop offset="1" stop-color="#c4e8f2" stop-opacity="0.9"/></linearGradient><linearGradient id="pr" x1="0" y1="150" x2="0" y2="323" gradientUnits="userSpaceOnUse"><stop offset="0" stop-color="#ffffff" stop-opacity="0"/><stop offset="0.5" stop-color="#fdf4ea" stop-opacity="0.3"/><stop offset="0.75" stop-color="#f8ecd4" stop-opacity="0.7"/><stop offset="1" stop-color="#f4e2c4" stop-opacity="0.9"/></linearGradient><clipPath id="cv"><rect x="25" y="58" width="602" height="341"/></clipPath></defs><g clip-path="url(#cv)"><path d="M277.8 151.8 L218.7 182.92 L218.7 291.55 L277.8 322.7Z" fill="url(#pl)"/><path d="M277.8 151.8 L338.5 183.45 L338.5 291.02 L277.8 322.7Z" fill="url(#pr)"/><path d="M271.83 319.55L266.37 322.2M266.28 316.63L253.99 322.2M261.12 313.91L241.6 322.2M256.29 311.36L229.22 322.2M251.78 308.98L216.83 322.2M247.55 306.75L204.45 322.2M243.57 304.66L192.06 322.2M239.82 302.68L179.68 322.2M236.29 300.82L167.29 322.2M232.95 299.06L154.9 322.2M229.8 297.4L142.52 322.2M226.8 295.82L130.13 322.2M223.96 294.32L117.75 322.2M221.27 292.9L105.36 322.2M218.7 291.55L92.98 322.2M283.99 319.47L289.57 322.2M289.72 316.48L302.29 322.2M295.06 313.69L315.01 322.2M300.03 311.1L327.73 322.2M304.67 308.67L340.45 322.2M309.02 306.4L353.18 322.2M313.1 304.27L365.9 322.2M316.94 302.27L378.62 322.2M320.56 300.38L391.34 322.2M323.97 298.6L404.06 322.2M327.19 296.92L416.78 322.2M330.25 295.32L429.5 322.2M333.14 293.81L442.22 322.2M335.89 292.38L454.94 322.2M338.5 291.02L467.66 322.2" stroke="#7a9488" stroke-opacity="0.7" stroke-width="0.6" fill="none"/><path d="M115.6 237.2 L277.8 322.7 L277.8 277.5 Z" fill="url(#wl)"/><path d="M441.6 237.2 L277.8 322.7 L277.8 277.5 Z" fill="url(#wr)"/><path d="M115.6 237.2L277.8 280.51M441.6 237.2L277.8 280.51M115.6 237.2L277.8 283.53M441.6 237.2L277.8 283.53M115.6 237.2L277.8 286.54M441.6 237.2L277.8 286.54M115.6 237.2L277.8 289.55M441.6 237.2L277.8 289.55M115.6 237.2L277.8 292.57M441.6 237.2L277.8 292.57M115.6 237.2L277.8 295.58M441.6 237.2L277.8 295.58M115.6 237.2L277.8 298.59M441.6 237.2L277.8 298.59M115.6 237.2L277.8 301.61M441.6 237.2L277.8 301.61M115.6 237.2L277.8 304.62M441.6 237.2L277.8 304.62M115.6 237.2L277.8 307.63M441.6 237.2L277.8 307.63M115.6 237.2L277.8 310.65M441.6 237.2L277.8 310.65M115.6 237.2L277.8 313.66M441.6 237.2L277.8 313.66M115.6 237.2L277.8 316.67M441.6 237.2L277.8 316.67M115.6 237.2L277.8 319.69M441.6 237.2L277.8 319.69" stroke="#6a9080" stroke-opacity="0.45" stroke-width="0.5" fill="none"/><path d="M80 237.2 L477 237.2" stroke="#b8b8b8" stroke-opacity="0.55" stroke-width="0.7"/><path d="M79 322.2 L477 322.2" stroke="#a0aea6" stroke-opacity="0.6" stroke-width="0.7"/><path d="M277.8 151.8L218.7 182.92M277.8 161.29L218.7 188.95M277.8 170.79L218.7 194.99M277.8 180.28L218.7 201.02M277.8 189.78L218.7 207.06M277.8 199.27L218.7 213.09M277.8 208.77L218.7 219.13M277.8 218.26L218.7 225.16M277.8 227.76L218.7 231.2M277.8 237.25L218.7 237.23M277.8 246.74L218.7 243.27M277.8 256.24L218.7 249.3M277.8 265.73L218.7 255.34M277.8 275.23L218.7 261.37M277.8 284.72L218.7 267.41M277.8 294.22L218.7 273.44M277.8 303.71L218.7 279.48M277.8 313.21L218.7 285.51M277.8 322.7L218.7 291.55M277.8 151.8L277.8 322.7M271.83 154.94L271.83 319.55M266.28 157.86L266.28 316.63M261.12 160.58L261.12 313.91M256.29 163.12L256.29 311.36M251.78 165.5L251.78 308.98M247.55 167.73L247.55 306.75M243.57 169.82L243.57 304.66M239.82 171.8L239.82 302.68M236.29 173.66L236.29 300.82M232.95 175.41L232.95 299.06M229.8 177.07L229.8 297.4M226.8 178.65L226.8 295.82M223.96 180.14L223.96 294.32M221.27 181.57L221.27 292.9M218.7 182.92L218.7 291.55" stroke="#4c5e70" stroke-opacity="0.9" stroke-width="0.6" fill="none"/><path d="M277.8 151.8L338.5 183.45M277.8 161.29L338.5 189.42M277.8 170.79L338.5 195.4M277.8 180.28L338.5 201.38M277.8 189.78L338.5 207.35M277.8 199.27L338.5 213.33M277.8 208.77L338.5 219.3M277.8 218.26L338.5 225.28M277.8 227.76L338.5 231.26M277.8 237.25L338.5 237.23M277.8 246.74L338.5 243.21M277.8 256.24L338.5 249.18M277.8 265.73L338.5 255.16M277.8 275.23L338.5 261.14M277.8 284.72L338.5 267.11M277.8 294.22L338.5 273.09M277.8 303.71L338.5 279.06M277.8 313.21L338.5 285.04M277.8 322.7L338.5 291.02M277.8 151.8L277.8 322.7M283.99 155.03L283.99 319.47M289.72 158.02L289.72 316.48M295.06 160.8L295.06 313.69M300.03 163.39L300.03 311.1M304.67 165.81L304.67 308.67M309.02 168.08L309.02 306.4M313.1 170.21L313.1 304.27M316.94 172.21L316.94 302.27M320.56 174.09L320.56 300.38M323.97 175.87L323.97 298.6M327.19 177.55L327.19 296.92M330.25 179.14L330.25 295.32M333.14 180.65L333.14 293.81M335.89 182.09L335.89 292.38M338.5 183.45L338.5 291.02" stroke="#b08472" stroke-opacity="0.75" stroke-width="0.55" fill="none"/><path d="M277.8 151.8 L134.8 227.09" stroke="#808080" stroke-width="0.8"/><path d="M277.8 151.8 L441.6 237.2" stroke="#a09890" stroke-width="0.8"/><path d="M115.6 237.2 L277.8 322.7" stroke="#3f5a5a" stroke-width="1"/><path d="M441.6 237.2 L277.8 322.7" stroke="#9a6a40" stroke-width="1"/><path d="M277.8 322.7 L277.8 337 M267.8 328.2 L277.8 322.7 L287.8 328.2" stroke="#b0b0b0" stroke-width="0.6" fill="none"/><path d="M242.50 174.40L272.50 159.55L272.50 170.30L265.42 172.29L258.94 176.57L251.60 178.74L242.50 184.83Z" fill="#e8103a"/><path d="M264.8 330.2 L277.8 322.7 L290.8 330.2" stroke="#888" stroke-width="0.6" fill="none"/><circle cx="264.8" cy="330.2" r="2.2" fill="#6a6a6a"/><circle cx="290.8" cy="330.2" r="2.2" fill="#6a6a6a"/><circle cx="277.8" cy="337.5" r="2.2" fill="#6a6a6a"/></g></svg><div style="left:1px;top:40px;width:23.5px;height:382px;background:#3b3b3b;"></div><div style="left:24.5px;top:58px;width:1px;height:356px;background:#2f2f2f;"></div><div style="left:1px;top:40px;width:23.5px;height:10px;background:#333;"></div><div style="left:4.4px;top:313.8px;width:15.3px;height:12.7px;background:#262626;"></div><svg style="left:1px;top:0" width="24" height="424" viewBox="1 0 24 424"><defs><linearGradient id="tg"><stop offset="0" stop-color="#eee"/><stop offset="1" stop-color="#222"/></linearGradient></defs><path d="M9 61.5 L15.5 67.5 L12 68 L10 71.5 Z" fill="none" stroke="#c4c4c4" stroke-width="0.9"/><path d="M9 75.7 L15.5 81.7 L12 82.2 L10 85.7 Z" fill="#c4c4c4"/><rect x="17" y="84.2" width="1.2" height="1.2" fill="#999"/><path d="M8 99.4 L9.5 94.9 L14 90.4 L16.5 92.9 L12 97.4 Z" fill="#c4c4c4"/><circle cx="11.5" cy="95.7" r="0.9" fill="#3b3b3b"/><rect x="17" y="98.4" width="1.2" height="1.2" fill="#999"/><path d="M8 113.6 L9.5 109.1 L14 104.6 L16.5 107.1 L12 111.6 Z" fill="#c4c4c4"/><circle cx="11.5" cy="109.9" r="0.9" fill="#3b3b3b"/><rect x="17" y="112.6" width="1.2" height="1.2" fill="#999"/><path d="M7 114.1 Q5 110.1 8 108.1" stroke="#c4c4c4" fill="none" stroke-width="0.8"/><rect x="7" y="118.4" width="9.5" height="7.5" fill="#555" stroke="#c4c4c4" stroke-width="0.9"/><rect x="17" y="125.9" width="1.2" height="1.2" fill="#999"/><path d="M7.5 141.6 Q8 138.6 10 138.6 L16 132.1 L16.8 132.9 L11 139.6 Q10 141.6 7.5 141.6Z" fill="#c4c4c4"/><text x="7.5" y="155.6" font-family="Liberation Serif" font-weight="bold" font-size="12" fill="#c4c4c4">T</text><path d="M8 164 A4.5 4.5 0 1 1 10 169" stroke="#c4c4c4" fill="none" stroke-width="1"/><path d="M6.5 162 L8 166 L10.5 163Z" fill="#c4c4c4"/><path d="M7 181.2 L12 175.2 L16.5 179.2 L11.5 184.2 Z" fill="#c4c4c4"/><path d="M9.5 178.2 L14 182.2" stroke="#3b3b3b" stroke-width="0.8"/><ellipse cx="11" cy="192.4" rx="4.5" ry="3" fill="none" stroke="#c4c4c4" stroke-width="0.9"/><path d="M12 193.4 L16.5 197.4 L14 197.6 L13 199.4Z" fill="#c4c4c4"/><rect x="7.5" y="203.6" width="9" height="8" fill="url(#tg)" stroke="#aaa" stroke-width="0.6"/><path d="M7.5 226.8 L8.5 224.3 L14 218.8 L16 220.8 L10.5 226.3Z" fill="none" stroke="#c4c4c4" stroke-width="0.9"/><circle cx="15.5" cy="218.3" r="1.6" fill="#c4c4c4"/><path d="M7.5 234 L11 237 L9 239 L13 240 L16 237" stroke="#c4c4c4" fill="none" stroke-width="1.2"/><path d="M12 232 L16 235" stroke="#c4c4c4" stroke-width="1.2"/><path d="M7.5 248.1 L11 251.1 L9 253.1 L13 254.1 L16 251.1" stroke="#c4c4c4" fill="none" stroke-width="1.2"/><path d="M12 246.1 L16 249.1" stroke="#c4c4c4" stroke-width="1.2"/><circle cx="10" cy="262.4" r="3" fill="none" stroke="#c4c4c4" stroke-width="0.9"/><circle cx="14" cy="265.4" r="3" fill="none" stroke="#c4c4c4" stroke-width="0.9"/><path d="M9 272.9 L9 280.9 L17 280.9 M7 274.9 L15 274.9 L15 282.9" stroke="#c4c4c4" fill="none" stroke-width="0.9"/><rect x="7.5" y="286.5" width="1" height="10" fill="#c4c4c4"/><rect x="9.5" y="288" width="5" height="2.5" fill="#c4c4c4"/><rect x="9.5" y="292.5" width="7" height="2.5" fill="#c4c4c4"/><path d="M7.5 301.6 L7.5 310.6 L16.5 310.6 Z M7.5 304.6 L13.5 307.6 M11 305.1 L11 310.6" stroke="#c4c4c4" fill="none" stroke-width="0.8"/><path d="M7 315.2 L12 320.2 L9.5 320.5 L8 323.2Z" fill="#c4c4c4"/><circle cx="14" cy="322.2" r="3" fill="#aaa"/><path d="M14 319.2 L14 322.2 L11.5 323.7 M14 322.2 L16.5 323.7" stroke="#3b3b3b" stroke-width="0.6"/><circle cx="8" cy="335" r="2.8" fill="#ddd"/><path d="M14 333 Q17 333 17 337" stroke="#bbb" fill="none"/><rect x="4.5" y="343.7" width="9.5" height="9.5" fill="#000" stroke="#bbb" stroke-width="1"/><rect x="10" y="350" width="9" height="9" fill="#fff"/><path d="M10.5 358.5 L18.5 350.5" stroke="#c0103a" stroke-width="1.4"/><rect x="4" y="365" width="4.5" height="4" fill="#000"/><rect x="9.5" y="365" width="2.5" height="4" fill="#ddd"/><rect x="13.5" y="365" width="4.5" height="4" fill="#fff"/><path d="M13.5 369 L18 365" stroke="#c0103a"/><circle cx="11" cy="376.5" r="2.6" fill="#999"/><circle cx="12.5" cy="378" r="2.2" fill="#bbb"/><rect x="6" y="388" width="9" height="6" fill="none" stroke="#aaa"/><rect x="9" y="386" width="9" height="6" fill="#3b3b3b" stroke="#aaa"/><g fill="#ccc"><circle cx="7.5" cy="411.4" r="1.1"/><circle cx="11" cy="411.4" r="1.1"/><circle cx="14.5" cy="411.4" r="1.1"/></g></svg><svg style="left:40.6px;top:73.3px" width="30" height="30" viewBox="-15 -15 30 30"><path d="M-14 -13.5 L0 -13.5 A14 14 0 1 1 -14 0 Z" fill="#262626"/><circle r="11" fill="#d2d2d2"/><path d="M0 -6.8 L0 0 L-6 3.4 L-6 -3.4Z" fill="#1f45c8"/><path d="M0 -6.8 L6 -3.4 L6 3.4 L0 0Z" fill="#9a9a9a"/><path d="M0 0 L6 3.4 L0 6.8 L-6 3.4Z" fill="#ffffff"/><path d="M0 -6.8 L6 -3.4 L6 3.4 L0 6.8 L-6 3.4 L-6 -3.4Z M0 0 L0 -6.8 M0 0 L-6 3.4 M0 0 L6 3.4" fill="none" stroke="#1a1a1a" stroke-width="0.9"/><rect x="-12.3" y="-12.3" width="2.6" height="2.6" fill="#eee"/></svg><div class="t" style="left:267.5px;top:102.5px;font-size:15px;line-height:18px;color:#000;font-weight:bold;-webkit-text-stroke:0.55px #000">CTIVE</div><div class="t" style="left:343.5px;top:102.5px;font-size:15px;line-height:18px;color:#000;font-weight:bold;-webkit-text-stroke:0.55px #000">3D</div><div style="left:25.5px;top:399.5px;width:469px;height:15px;background:#3a3a3a;"></div><div style="left:25.5px;top:414.5px;width:469px;height:8px;background:#363636;"></div><div class="t" style="left:28px;top:403.2px;width:8px;height:8px;border-radius:50%;background:#cfcfcf;color:#3a3a3a;font-size:6.5px;line-height:8px;text-align:center;font-weight:bold">?</div><div class="t" style="left:42.6px;top:403.31px;font-size:6.65px;line-height:7.98px;color:#c4c4c4;font-weight:normal;"><b>Faites glisser</b> les objets pour les déplacer, les redimensionner et les dupliquer dans la grille de perspective</div><div class="t" style="left:29px;top:416.08px;font-size:6.2px;line-height:7.44px;color:#d0d0d0;font-weight:bold;">44,42%</div><div class="t" style="left:58px;top:416px;font-size:5.5px;line-height:6.6px;color:#aaa;font-weight:normal;">⌄</div><div style="left:71px;top:415px;width:35px;height:7px;background:#303030;"></div><div class="t" style="left:72px;top:416.08px;font-size:6.2px;line-height:7.44px;color:#d0d0d0;font-weight:normal;">0°</div><div class="t" style="left:102px;top:416px;font-size:5.5px;line-height:6.6px;color:#aaa;font-weight:normal;">⌄</div><div style="left:136px;top:415px;width:23px;height:7px;background:#303030;"></div><div class="t" style="left:138px;top:416.08px;font-size:6.2px;line-height:7.44px;color:#d0d0d0;font-weight:normal;">1</div><div class="t" style="left:161px;top:416px;font-size:5.5px;line-height:6.6px;color:#aaa;font-weight:normal;">⌄</div><div class="t" style="left:183.5px;top:416.08px;font-size:6.2px;line-height:7.44px;color:#c8c8c8;font-weight:normal;width:140px;text-align:center">Sélection d'une perspective</div><div class="t" style="left:313px;top:416.2px;font-size:6px;line-height:7.2px;color:#aaa;font-weight:normal;">▸</div><div style="left:494.5px;top:103px;width:142px;height:311px;background:#3c3c3c;border-left:1px solid #2a2a2a;border-top:1px solid #2a2a2a;box-sizing:border-box"></div><div style="left:495.5px;top:105px;width:141px;height:15.3px;background:#333;"></div><div style="left:495.5px;top:105px;width:33.5px;height:15.3px;background:#3c3c3c;"></div><div class="t" style="left:500.4px;top:108.54px;font-size:6.6px;line-height:7.92px;color:#e6e6e6;font-weight:bold;">Calques</div><div class="t" style="left:534.7px;top:108.54px;font-size:6.6px;line-height:7.92px;color:#a8a8a8;font-weight:normal;">Plans de travail</div><div class="t" style="left:612px;top:108.3px;font-size:7px;line-height:8.4px;color:#888;font-weight:normal;">››</div><div style="left:628px;top:109.5px;width:6px;height:6px;background:#666;"></div><div style="left:503px;top:128px;width:113px;height:11.8px;background:#2e2e2e;"></div><svg style="left:504px;top:129px" width="10" height="10"><circle cx="4" cy="4.3" r="2.6" fill="none" stroke="#aaa" stroke-width="1"/><path d="M6 6.3 L8 8.5" stroke="#aaa"/></svg><div class="t" style="left:520px;top:130.28px;font-size:6.2px;line-height:7.44px;color:#a0a0a0;font-weight:normal;"><i>Rechercher dans tout</i></div><svg style="left:622px;top:128px" width="10" height="10"><path d="M0.5 1 L8.5 1 L5.5 5 L5.5 9 L3.5 8 L3.5 5 Z" fill="#bbb"/></svg><div style="left:496.5px;top:145.8px;width:137px;height:12.4px;background:#2d4766;"></div><svg style="left:500px;top:149px" width="9" height="6"><path d="M0.5 3 Q4.5 -1 8.5 3 Q4.5 7 0.5 3Z" fill="none" stroke="#aaa" stroke-width="0.8"/><circle cx="4.5" cy="3" r="1.2" fill="#aaa"/></svg><div style="left:523.5px;top:145.8px;width:2.5px;height:12.4px;background:#c8153c;"></div><div class="t" style="left:531.5px;top:148.4px;font-size:6px;line-height:7.2px;color:#aaa;font-weight:normal;">⌄</div><div style="left:541px;top:147.2px;width:10.4px;height:9.6px;background:#f2f2f2;border:0.6px solid #222;box-sizing:border-box"></div><div class="t" style="left:555px;top:148.16px;font-size:6.4px;line-height:7.68px;color:#a8c8f0;font-weight:normal;">Texte</div><div style="left:616px;top:149.4px;width:5.2px;height:5.2px;border-radius:50%;border:0.8px solid #aaa;box-sizing:border-box"></div><svg style="left:500px;top:161.4px" width="9" height="6"><path d="M0.5 3 Q4.5 -1 8.5 3 Q4.5 7 0.5 3Z" fill="none" stroke="#aaa" stroke-width="0.8"/><circle cx="4.5" cy="3" r="1.2" fill="#aaa"/></svg><div style="left:523.5px;top:158.2px;width:2.5px;height:12.4px;background:#c8153c;"></div><div style="left:555px;top:159.6px;width:10px;height:9.6px;background:#f2f2f2;border:0.6px solid #222;box-sizing:border-box"></div><div style="left:556px;top:162.9px;width:8px;height:3px;background:#111;"></div><div class="t" style="left:568px;top:160.56px;font-size:6.4px;line-height:7.68px;color:#d0d0d0;font-weight:normal;">3D</div><div style="left:616px;top:161.8px;width:5.2px;height:5.2px;border-radius:50%;border:0.8px solid #aaa;box-sizing:border-box"></div><svg style="left:500px;top:173.8px" width="9" height="6"><path d="M0.5 3 Q4.5 -1 8.5 3 Q4.5 7 0.5 3Z" fill="none" stroke="#aaa" stroke-width="0.8"/><circle cx="4.5" cy="3" r="1.2" fill="#aaa"/></svg><div style="left:523.5px;top:170.6px;width:2.5px;height:12.4px;background:#c8153c;"></div><div style="left:555px;top:172px;width:10px;height:9.6px;background:#f2f2f2;border:0.6px solid #222;box-sizing:border-box"></div><div style="left:556px;top:175.3px;width:8px;height:3px;background:#111;"></div><div class="t" style="left:568px;top:172.96px;font-size:6.4px;line-height:7.68px;color:#d0d0d0;font-weight:normal;">Texte ...</div><div style="left:616px;top:174.2px;width:5.2px;height:5.2px;border-radius:50%;border:0.8px solid #aaa;box-sizing:border-box"></div><svg style="left:500px;top:186.2px" width="9" height="6"><path d="M0.5 3 Q4.5 -1 8.5 3 Q4.5 7 0.5 3Z" fill="none" stroke="#aaa" stroke-width="0.8"/><circle cx="4.5" cy="3" r="1.2" fill="#aaa"/></svg><div style="left:523.5px;top:183px;width:2.5px;height:12.4px;background:#c8153c;"></div><div style="left:555px;top:184.4px;width:10px;height:9.6px;background:#f2f2f2;border:0.6px solid #222;box-sizing:border-box"></div><div style="left:556px;top:187.7px;width:8px;height:3px;background:#111;"></div><div class="t" style="left:568px;top:185.36px;font-size:6.4px;line-height:7.68px;color:#d0d0d0;font-weight:normal;">CTIVE</div><div style="left:616px;top:186.6px;width:5.2px;height:5.2px;border-radius:50%;border:0.8px solid #aaa;box-sizing:border-box"></div><svg style="left:500px;top:198.6px" width="9" height="6"><path d="M0.5 3 Q4.5 -1 8.5 3 Q4.5 7 0.5 3Z" fill="none" stroke="#aaa" stroke-width="0.8"/><circle cx="4.5" cy="3" r="1.2" fill="#aaa"/></svg><div style="left:523.5px;top:195.4px;width:2.5px;height:12.4px;background:#3a5fd0;"></div><div style="left:541px;top:196.8px;width:10.4px;height:9.6px;background:#f2f2f2;border:0.6px solid #222;box-sizing:border-box"></div><div class="t" style="left:555px;top:197.76px;font-size:6.4px;line-height:7.68px;color:#d0d0d0;font-weight:normal;">Grille</div><div style="left:616px;top:199px;width:5.2px;height:5.2px;border-radius:50%;border:0.8px solid #aaa;box-sizing:border-box"></div><div style="left:495.5px;top:401px;width:141px;height:13px;background:#3c3c3c;"></div><div class="t" style="left:503px;top:404.96px;font-size:6.4px;line-height:7.68px;color:#c8c8c8;font-weight:normal;">2 Ca...</div><svg style="left:520px;top:403px" width="115" height="11"><g fill="none" stroke="#aaa" stroke-width="0.9"><rect x="10" y="2" width="7" height="7"/><rect x="70" y="2" width="8" height="6"/><rect x="85" y="2" width="7" height="7"/><path d="M100 3 L107 3 L106 10 L101 10Z"/></g><g fill="none" stroke="#666" stroke-width="0.9"><rect x="25" y="2" width="7" height="7"/><circle cx="43" cy="5" r="3"/><path d="M55 2 L58 9"/></g></svg><div style="left:637px;top:40px;width:117px;height:382px;background:#2e2e2e;"></div><div style="left:638px;top:48px;width:116px;height:374px;background:#3c3c3c;"></div><div style="left:638px;top:88px;width:116px;height:2px;background:#333;"></div><div style="left:638px;top:262px;width:116px;height:2px;background:#333;"></div><div style="left:638px;top:320px;width:116px;height:2px;background:#333;"></div><div style="left:638px;top:376px;width:116px;height:2px;background:#333;"></div><div style="left:641px;top:382.7px;width:110px;height:11.7px;background:#262626;"></div><div class="t" style="left:660px;top:58.59px;font-size:6.35px;line-height:7.62px;color:#dcdcdc;font-weight:bold;">Propriétés</div><div class="t" style="left:660px;top:75.09px;font-size:6.35px;line-height:7.62px;color:#dcdcdc;font-weight:bold;">Alignement</div><div class="t" style="left:660px;top:99.19px;font-size:6.35px;line-height:7.62px;color:#dcdcdc;font-weight:bold;">Transformation</div><div class="t" style="left:660px;top:115.69px;font-size:6.35px;line-height:7.62px;color:#dcdcdc;font-weight:bold;">Pathfinder</div><div class="t" style="left:660px;top:132.29px;font-size:6.35px;line-height:7.62px;color:#dcdcdc;font-weight:bold;">Nuancier</div><div class="t" style="left:660px;top:148.79px;font-size:6.35px;line-height:7.62px;color:#dcdcdc;font-weight:bold;">Contour</div><div class="t" style="left:660px;top:165.29px;font-size:6.35px;line-height:7.62px;color:#dcdcdc;font-weight:bold;">Formes</div><div class="t" style="left:660px;top:181.79px;font-size:6.35px;line-height:7.62px;color:#dcdcdc;font-weight:bold;">Symboles</div><div class="t" style="left:660px;top:198.29px;font-size:6.35px;line-height:7.62px;color:#dcdcdc;font-weight:bold;">Dégradé</div><div class="t" style="left:660px;top:214.79px;font-size:6.35px;line-height:7.62px;color:#dcdcdc;font-weight:bold;">Transparence</div><div class="t" style="left:660px;top:231.29px;font-size:6.35px;line-height:7.62px;color:#dcdcdc;font-weight:bold;">Couleur</div><div class="t" style="left:660px;top:247.79px;font-size:6.35px;line-height:7.62px;color:#dcdcdc;font-weight:bold;">Guide des couleurs</div><div class="t" style="left:660px;top:271.89px;font-size:6.35px;line-height:7.62px;color:#dcdcdc;font-weight:bold;">Liens</div><div class="t" style="left:660px;top:288.39px;font-size:6.35px;line-height:7.62px;color:#dcdcdc;font-weight:bold;">Bibliothèques</div><div class="t" style="left:660px;top:304.89px;font-size:6.35px;line-height:7.62px;color:#dcdcdc;font-weight:bold;">Informations sur le docum...</div><div class="t" style="left:660px;top:328.99px;font-size:6.35px;line-height:7.62px;color:#dcdcdc;font-weight:bold;">Variables</div><div class="t" style="left:660px;top:345.49px;font-size:6.35px;line-height:7.62px;color:#dcdcdc;font-weight:bold;">Aspect</div><div class="t" style="left:660px;top:361.99px;font-size:6.35px;line-height:7.62px;color:#dcdcdc;font-weight:bold;">Exportation de ressources</div><div class="t" style="left:660px;top:385.79px;font-size:6.35px;line-height:7.62px;color:#dcdcdc;font-weight:bold;">Calques</div><div class="t" style="left:660px;top:402.54px;font-size:6.6px;line-height:7.92px;color:#9a9a9a;font-weight:bold;">Plans de travail</div><svg style="left:0;top:0" width="755" height="424"><g stroke="#c4c4c4" stroke-width="0.8" fill="none"><path d="M644 59.2h9M644 61.7h9M644 64.2h9"/><circle cx="647" cy="59.2" r="1.1" fill="#3c3c3c"/><circle cx="650" cy="61.7" r="1.1" fill="#3c3c3c"/><circle cx="647" cy="64.2" r="1.1" fill="#3c3c3c"/></g><g fill="#c4c4c4"><rect x="644" y="73.7" width="1" height="9"/><rect x="645.5" y="75.2" width="4" height="2.5"/><rect x="645.5" y="78.7" width="8" height="2.5"/></g><g fill="none" stroke="#c4c4c4" stroke-width="0.8" stroke-dasharray="1.2 1"><rect x="645" y="98.8" width="7.5" height="7.5"/></g><g fill="#c4c4c4"><rect x="644" y="97.8" width="2" height="2"/><rect x="651.5" y="97.8" width="2" height="2"/><rect x="644" y="105.3" width="2" height="2"/><rect x="651.5" y="105.3" width="2" height="2"/></g><rect x="644" y="114.8" width="5.5" height="5" fill="#c4c4c4"/><rect x="647.5" y="117.8" width="5.5" height="5" fill="#999" stroke="#3c3c3c" stroke-width="0.6"/><rect x="644" y="131.9" width="9.5" height="7" fill="#888"/><g fill="#bbb"><rect x="645" y="132.70000000000002" width="2.2" height="2.4"/><rect x="647.8" y="132.70000000000002" width="2.2" height="2.4"/><rect x="650.6" y="132.70000000000002" width="2.2" height="2.4"/><rect x="645" y="135.9" width="2.2" height="2.4"/></g><g fill="#c4c4c4"><rect x="644" y="148.4" width="9.5" height="1.1"/><rect x="644" y="151.20000000000002" width="9.5" height="1.3"/><rect x="644" y="154.20000000000002" width="9.5" height="1.6"/></g><g fill="#c4c4c4"><rect x="646.5" y="168.4" width="4" height="4.5"/><path d="M647 168.4 L645 163.9 L648 167.4Z M649 168.4 L648.5 163.4 L650 167.9Z M650 168.4 L652.5 164.9 L651 168.4Z"/></g><g fill="#c4c4c4"><circle cx="648.5" cy="182.70000000000002" r="2"/><circle cx="646.3" cy="185.4" r="2"/><circle cx="650.7" cy="185.4" r="2"/><path d="M648 184.9 L647 188.9 L650 188.9 L649 184.9Z"/></g><defs><linearGradient id="gd"><stop offset="0" stop-color="#222"/><stop offset="1" stop-color="#eee"/></linearGradient></defs><rect x="644" y="197.9" width="9.5" height="7.5" fill="url(#gd)" stroke="#aaa" stroke-width="0.5"/><circle cx="647.5" cy="217.1" r="3.3" fill="#bbb"/><circle cx="649.8" cy="218.9" r="3.3" fill="#777" stroke="#aaa" stroke-width="0.5"/><ellipse cx="648.8" cy="234.9" rx="4.8" ry="3.5" fill="none" stroke="#c4c4c4" stroke-width="1"/><g fill="#c4c4c4"><circle cx="647" cy="233.9" r="0.9"/><circle cx="650" cy="233.4" r="0.9"/></g><path d="M644 255.4 L644 246.9 Q652 248.9 653.5 255.4Z" fill="#999" stroke="#ccc" stroke-width="0.6"/><g fill="none" stroke="#c4c4c4" stroke-width="1"><rect x="644" y="273" width="5.5" height="4" rx="2"/><rect x="648" y="273" width="5.5" height="4" rx="2"/></g><rect x="644.5" y="287.0" width="8" height="9.5" fill="none" stroke="#c4c4c4" stroke-width="1"/><rect x="647.5" y="287.0" width="2" height="4" fill="#c4c4c4"/><rect x="644.5" y="303.5" width="8" height="9.5" fill="#aaa"/><circle cx="648.5" cy="309" r="2.3" fill="#3c3c3c"/><rect x="648" y="308" width="1" height="2.5" fill="#ccc"/><circle cx="647" cy="333.6" r="2.6" fill="none" stroke="#c4c4c4" stroke-width="1.2"/><circle cx="651.5" cy="329.6" r="1.8" fill="none" stroke="#c4c4c4" stroke-width="0.9"/><circle cx="648.5" cy="348.6" r="3.8" fill="#aaa"/><path d="M649 361.1 L644 361.1 L644 370.1 L653 370.1 L653 365.1" fill="none" stroke="#c4c4c4" stroke-width="1"/><path d="M648 366.1 L653 361.1 M650 361.1 L653 361.1 L653 364.1" stroke="#c4c4c4" stroke-width="1" fill="none"/><path d="M648.7 384.9 L653.5 387.59999999999997 L648.7 390.29999999999995 L644 387.59999999999997Z" fill="#c4c4c4"/><path d="M644 389.9 L648.7 392.59999999999997 L653.5 389.9" fill="none" stroke="#c4c4c4" stroke-width="1.2"/><rect x="645" y="401.5" width="6" height="5" fill="none" stroke="#aaa" stroke-width="0.9"/><rect x="648" y="404.5" width="6" height="5" fill="#555" stroke="#aaa" stroke-width="0.9"/></svg><div class="t" style="left:654.5px;top:399.68px;font-size:12.2px;line-height:14.64px;color:#f4f4f4;font-weight:normal;letter-spacing:-0.35px;text-shadow:0 0 1px #000">Linked<span style="display:inline-block;background:#fff;color:#3c3c3c;padding:0 1px;line-height:10px">in</span> Learning</div><svg style="left:110px;top:123px" width="10" height="12"><path d="M0.5 0.5 L0.5 9.5 L3 7 L5 11 L6.5 10.3 L4.6 6.4 L8 6.4 Z" fill="#111" stroke="#eee" stroke-width="0.5"/></svg></div><div class="tile" style="left:766px;top:580px"><div style="left:1px;top:1px;width:753px;height:422px;background:#474747;"></div><div style="left:1px;top:1px;width:753px;height:19px;background:#3c3c3c;"></div><div style="left:1px;top:19px;width:753px;height:1px;background:#333;"></div><div style="left:5.7px;top:7.4px;width:6.6px;height:6.6px;border-radius:50%;background:#e0395a"></div><div style="left:17.5px;top:7.4px;width:6.6px;height:6.6px;border-radius:50%;background:#f0b030"></div><div style="left:29.3px;top:7.4px;width:6.6px;height:6.6px;border-radius:50%;background:#2ec43c"></div><svg style="left:45px;top:6px" width="11" height="10" viewBox="0 0 11 10"><path d="M5.5 0.5 L10.5 5 L9 5 L9 9.5 L6.5 9.5 L6.5 6.5 L4.5 6.5 L4.5 9.5 L2 9.5 L2 5 L0.5 5 Z" fill="#c8c8c8"/></svg><div class="t" style="left:326.5px;top:6.32px;font-size:7.8px;line-height:9.36px;color:#d0d0d0;font-weight:normal;letter-spacing:0.18px">Adobe Illustrator 2025</div><div class="t" style="left:627px;top:3.9px;width:40px;height:13.9px;border-radius:7px;background:#1d5fd6;color:#fff;font-size:7.2px;line-height:13.9px;text-align:center;font-weight:bold">Partager</div><svg style="left:674px;top:4px" width="40" height="13" viewBox="0 0 40 13"><path d="M4 2.5 Q7.5 2.5 7.5 7 L8.5 9.5 L-0.5 9.5 L0.5 7 Q0.5 2.5 4 2.5Z" fill="#bcbcbc"/><circle cx="7.5" cy="2" r="1.6" fill="#2a7de0"/><circle cx="22.5" cy="5.5" r="3.2" fill="none" stroke="#c8c8c8" stroke-width="1.2"/><path d="M24.8 7.8 L27 10" stroke="#c8c8c8" stroke-width="1.3"/></svg><div style="left:718.5px;top:6.5px;width:10px;height:7px;background:#c8c8c8;"></div><div style="left:723px;top:6.5px;width:1px;height:7px;background:#3c3c3c;"></div><div style="left:723px;top:9.5px;width:6px;height:1px;background:#3c3c3c;"></div><div style="left:739.5px;top:6px;width:10px;height:8px;background:transparent;border:1px solid #b8b8b8;box-sizing:border-box"></div><div style="left:749px;top:1.5px;width:4px;height:4px;border-radius:50%;background:#d08a30"></div><div style="left:1px;top:20px;width:753px;height:20px;background:#3c3c3c;"></div><div class="t" style="left:8.7px;top:26.54px;font-size:6.6px;line-height:7.92px;color:#b8b8b8;font-weight:normal;">Objet en perspective</div><svg style="left:74px;top:24px" width="130" height="14"><g fill="none" stroke="#bbb" stroke-width="0.9"><rect x="1.5" y="1.5" width="10" height="10"/><rect x="17" y="1.5" width="10" height="10"/></g><g fill="#ccc"><circle cx="5" cy="5" r="1.3"/><circle cx="8" cy="8" r="1.3"/><circle cx="21" cy="8" r="1.3"/><circle cx="24" cy="5" r="1.3"/></g><g stroke="#ccc" stroke-width="1.1" fill="none"><path d="M118 2 L118 5 M118 2 L121 2 M129 2 L126 2 M129 2 L129 5 M118 12 L118 9 M118 12 L121 12 M129 12 L126 12 M129 12 L129 9"/><rect x="120.5" y="4.5" width="6" height="5"/></g></svg><div class="t" style="left:107px;top:26.54px;font-size:6.6px;line-height:7.92px;color:#c8c8c8;font-weight:bold;text-decoration:underline;text-decoration-color:#777">Opacité :</div><div style="left:138px;top:24.5px;width:32.5px;height:12px;background:#333;"></div><div class="t" style="left:139.5px;top:26.54px;font-size:6.6px;line-height:7.92px;color:#d8d8d8;font-weight:bold;">100%</div><div class="t" style="left:174px;top:25.7px;font-size:8px;line-height:9.6px;color:#b0b0b0;font-weight:normal;">›</div><svg style="left:592px;top:24px" width="160" height="14" viewBox="0 0 160 14"><g fill="#aaa"><rect x="102" y="2" width="2.2" height="2.2"/><rect x="107" y="2" width="2.2" height="2.2"/><rect x="102" y="9" width="2.2" height="2.2"/><rect x="107" y="9" width="2.2" height="2.2"/></g><rect x="116.5" y="1.5" width="2" height="11" fill="#bbb"/><path d="M120 4.5 L124 4.5 Q126 4.5 126 7 Q126 9.5 124 9.5 L120 9.5" stroke="#bbb" fill="none" stroke-width="1.2"/><g fill="#aaa"><rect x="145" y="3" width="8" height="1.2"/><rect x="145" y="6" width="8" height="1.2"/><rect x="145" y="9" width="8" height="1.2"/></g></svg><div style="left:1px;top:40px;width:753px;height:18px;background:#2e2e2e;"></div><div style="left:25.7px;top:40px;width:124.3px;height:18px;background:#383838;"></div><div class="t" style="left:30.5px;top:44.8px;font-size:7px;line-height:8.4px;color:#c0c0c0;font-weight:normal;">×</div><div class="t" style="left:38.8px;top:45.04px;font-size:6.6px;line-height:7.92px;color:#d8d8d8;font-weight:bold;">02_04.ai* @ 44,42 % (RVB/Aperçu)</div><div style="left:627px;top:58px;width:10px;height:45px;background:#3c3c3c;"></div><div style="left:627px;top:103px;width:1px;height:0px;background:#333;"></div><div style="left:134.3px;top:134.5px;width:288.3px;height:205.2px;background:#262626"></div><div style="left:134.8px;top:135px;width:286.8px;height:203.7px;background:#fff"></div><svg style="left:0;top:0" width="755" height="424"><defs><linearGradient id="wl" x1="115.6" y1="0" x2="278" y2="0" gradientUnits="userSpaceOnUse"><stop offset="0" stop-color="#1f7a48" stop-opacity="1"/><stop offset="0.12" stop-color="#5aac72" stop-opacity="0.75"/><stop offset="0.22" stop-color="#86c690" stop-opacity="0.5"/><stop offset="0.45" stop-color="#aedcb4" stop-opacity="0.3"/><stop offset="0.65" stop-color="#c4e6c8" stop-opacity="0.2"/><stop offset="1" stop-color="#c8e8d0" stop-opacity="0.1"/></linearGradient><linearGradient id="wr" x1="441.6" y1="0" x2="278" y2="0" gradientUnits="userSpaceOnUse"><stop offset="0" stop-color="#1f7a48" stop-opacity="1"/><stop offset="0.12" stop-color="#5aac72" stop-opacity="0.75"/><stop offset="0.22" stop-color="#86c690" stop-opacity="0.5"/><stop offset="0.45" stop-color="#aedcb4" stop-opacity="0.3"/><stop offset="0.65" stop-color="#c4e6c8" stop-opacity="0.2"/><stop offset="1" stop-color="#c8e8d0" stop-opacity="0.1"/></linearGradient><linearGradient id="pl" x1="0" y1="150" x2="0" y2="323" gradientUnits="userSpaceOnUse"><stop offset="0" stop-color="#ffffff" stop-opacity="0"/><stop offset="0.5" stop-color="#eef6fb" stop-opacity="0.3"/><stop offset="0.75" stop-color="#d8eef6" stop-opacity="0.7"/><stop offset="1" stop-color="#c4e8f2" stop-opacity="0.9"/></linearGradient><linearGradient id="pr" x1="0" y1="150" x2="0" y2="323" gradientUnits="userSpaceOnUse"><stop offset="0" stop-color="#ffffff" stop-opacity="0"/><stop offset="0.5" stop-color="#fdf4ea" stop-opacity="0.3"/><stop offset="0.75" stop-color="#f8ecd4" stop-opacity="0.7"/><stop offset="1" stop-color="#f4e2c4" stop-opacity="0.9"/></linearGradient><clipPath id="cv"><rect x="25" y="58" width="602" height="341"/></clipPath></defs><g clip-path="url(#cv)"><path d="M277.8 151.8 L218.7 182.92 L218.7 291.55 L277.8 322.7Z" fill="url(#pl)"/><path d="M277.8 151.8 L338.5 183.45 L338.5 291.02 L277.8 322.7Z" fill="url(#pr)"/><path d="M271.83 319.55L266.37 322.2M266.28 316.63L253.99 322.2M261.12 313.91L241.6 322.2M256.29 311.36L229.22 322.2M251.78 308.98L216.83 322.2M247.55 306.75L204.45 322.2M243.57 304.66L192.06 322.2M239.82 302.68L179.68 322.2M236.29 300.82L167.29 322.2M232.95 299.06L154.9 322.2M229.8 297.4L142.52 322.2M226.8 295.82L130.13 322.2M223.96 294.32L117.75 322.2M221.27 292.9L105.36 322.2M218.7 291.55L92.98 322.2M283.99 319.47L289.57 322.2M289.72 316.48L302.29 322.2M295.06 313.69L315.01 322.2M300.03 311.1L327.73 322.2M304.67 308.67L340.45 322.2M309.02 306.4L353.18 322.2M313.1 304.27L365.9 322.2M316.94 302.27L378.62 322.2M320.56 300.38L391.34 322.2M323.97 298.6L404.06 322.2M327.19 296.92L416.78 322.2M330.25 295.32L429.5 322.2M333.14 293.81L442.22 322.2M335.89 292.38L454.94 322.2M338.5 291.02L467.66 322.2" stroke="#7a9488" stroke-opacity="0.7" stroke-width="0.6" fill="none"/><path d="M115.6 237.2 L277.8 322.7 L277.8 277.5 Z" fill="url(#wl)"/><path d="M441.6 237.2 L277.8 322.7 L277.8 277.5 Z" fill="url(#wr)"/><path d="M115.6 237.2L277.8 280.51M441.6 237.2L277.8 280.51M115.6 237.2L277.8 283.53M441.6 237.2L277.8 283.53M115.6 237.2L277.8 286.54M441.6 237.2L277.8 286.54M115.6 237.2L277.8 289.55M441.6 237.2L277.8 289.55M115.6 237.2L277.8 292.57M441.6 237.2L277.8 292.57M115.6 237.2L277.8 295.58M441.6 237.2L277.8 295.58M115.6 237.2L277.8 298.59M441.6 237.2L277.8 298.59M115.6 237.2L277.8 301.61M441.6 237.2L277.8 301.61M115.6 237.2L277.8 304.62M441.6 237.2L277.8 304.62M115.6 237.2L277.8 307.63M441.6 237.2L277.8 307.63M115.6 237.2L277.8 310.65M441.6 237.2L277.8 310.65M115.6 237.2L277.8 313.66M441.6 237.2L277.8 313.66M115.6 237.2L277.8 316.67M441.6 237.2L277.8 316.67M115.6 237.2L277.8 319.69M441.6 237.2L277.8 319.69" stroke="#6a9080" stroke-opacity="0.45" stroke-width="0.5" fill="none"/><path d="M80 237.2 L477 237.2" stroke="#b8b8b8" stroke-opacity="0.55" stroke-width="0.7"/><path d="M79 322.2 L477 322.2" stroke="#a0aea6" stroke-opacity="0.6" stroke-width="0.7"/><path d="M277.8 151.8L218.7 182.92M277.8 161.29L218.7 188.95M277.8 170.79L218.7 194.99M277.8 180.28L218.7 201.02M277.8 189.78L218.7 207.06M277.8 199.27L218.7 213.09M277.8 208.77L218.7 219.13M277.8 218.26L218.7 225.16M277.8 227.76L218.7 231.2M277.8 237.25L218.7 237.23M277.8 246.74L218.7 243.27M277.8 256.24L218.7 249.3M277.8 265.73L218.7 255.34M277.8 275.23L218.7 261.37M277.8 284.72L218.7 267.41M277.8 294.22L218.7 273.44M277.8 303.71L218.7 279.48M277.8 313.21L218.7 285.51M277.8 322.7L218.7 291.55M277.8 151.8L277.8 322.7M271.83 154.94L271.83 319.55M266.28 157.86L266.28 316.63M261.12 160.58L261.12 313.91M256.29 163.12L256.29 311.36M251.78 165.5L251.78 308.98M247.55 167.73L247.55 306.75M243.57 169.82L243.57 304.66M239.82 171.8L239.82 302.68M236.29 173.66L236.29 300.82M232.95 175.41L232.95 299.06M229.8 177.07L229.8 297.4M226.8 178.65L226.8 295.82M223.96 180.14L223.96 294.32M221.27 181.57L221.27 292.9M218.7 182.92L218.7 291.55" stroke="#4c5e70" stroke-opacity="0.9" stroke-width="0.6" fill="none"/><path d="M277.8 151.8L338.5 183.45M277.8 161.29L338.5 189.42M277.8 170.79L338.5 195.4M277.8 180.28L338.5 201.38M277.8 189.78L338.5 207.35M277.8 199.27L338.5 213.33M277.8 208.77L338.5 219.3M277.8 218.26L338.5 225.28M277.8 227.76L338.5 231.26M277.8 237.25L338.5 237.23M277.8 246.74L338.5 243.21M277.8 256.24L338.5 249.18M277.8 265.73L338.5 255.16M277.8 275.23L338.5 261.14M277.8 284.72L338.5 267.11M277.8 294.22L338.5 273.09M277.8 303.71L338.5 279.06M277.8 313.21L338.5 285.04M277.8 322.7L338.5 291.02M277.8 151.8L277.8 322.7M283.99 155.03L283.99 319.47M289.72 158.02L289.72 316.48M295.06 160.8L295.06 313.69M300.03 163.39L300.03 311.1M304.67 165.81L304.67 308.67M309.02 168.08L309.02 306.4M313.1 170.21L313.1 304.27M316.94 172.21L316.94 302.27M320.56 174.09L320.56 300.38M323.97 175.87L323.97 298.6M327.19 177.55L327.19 296.92M330.25 179.14L330.25 295.32M333.14 180.65L333.14 293.81M335.89 182.09L335.89 292.38M338.5 183.45L338.5 291.02" stroke="#b08472" stroke-opacity="0.75" stroke-width="0.55" fill="none"/><path d="M277.8 151.8 L134.8 227.09" stroke="#808080" stroke-width="0.8"/><path d="M277.8 151.8 L441.6 237.2" stroke="#a09890" stroke-width="0.8"/><path d="M115.6 237.2 L277.8 322.7" stroke="#3f5a5a" stroke-width="1"/><path d="M441.6 237.2 L277.8 322.7" stroke="#9a6a40" stroke-width="1"/><path d="M277.8 322.7 L277.8 337 M267.8 328.2 L277.8 322.7 L287.8 328.2" stroke="#b0b0b0" stroke-width="0.6" fill="none"/><path d="M157.89 230.39L157.85 231.95L157.78 233.43L157.69 234.82L157.58 236.11L157.45 237.29L157.31 238.38L157.14 239.35L156.97 240.21L156.78 240.98L156.57 241.64L156.35 242.22L156.12 242.69L155.88 243.07L155.63 243.35L155.37 243.53L155.11 243.62L154.83 243.62L153.27 243.37L153.27 255.87L151.60 255.04L151.60 217.49L154.77 215.75L155.20 215.60L155.61 215.65L155.99 215.89L156.34 216.35L156.67 217.02L156.97 217.93L157.23 219.07L157.46 220.47L157.64 222.14L157.79 224.11L157.87 226.35L157.90 228.75L157.89 230.39ZM155.77 228.43L155.70 227.61L155.56 226.79L155.32 226.14L155.00 225.77L154.60 225.73L153.27 226.12L153.27 233.86L154.64 233.74L154.83 233.68L155.01 233.54L155.17 233.32L155.32 233.02L155.44 232.65L155.55 232.21L155.64 231.74L155.70 231.26L155.74 230.80L155.77 230.35L155.78 229.88L155.79 229.46L155.77 228.43ZM160.30 260.29L160.30 212.25L167.99 207.96L167.99 221.61L162.44 223.26L162.44 229.85L167.52 229.05L167.52 242.58L162.44 242.06L162.44 249.19L168.30 250.69L168.30 264.42L160.30 260.29ZM175.78 246.51L173.05 246.09L173.05 267.48L170.00 265.88L170.00 206.84L176.52 203.20L177.34 202.87L178.12 202.84L178.86 203.12L179.54 203.72L180.18 204.67L180.76 205.98L181.28 207.67L181.73 209.77L182.11 212.35L182.39 215.44L182.57 219.00L182.62 222.85L182.59 225.86L182.48 228.69L182.30 231.33L182.06 233.71L181.77 235.85L181.44 237.78L181.06 239.48L180.66 240.93L180.22 242.14L179.76 243.12L179.68 243.25L184.30 273.02L184.28 273.40L179.11 270.68L175.78 246.51ZM178.44 223.16L178.32 222.03L178.05 220.82L177.59 219.88L176.97 219.37L176.21 219.36L173.05 220.29L173.05 230.93L176.29 230.58L176.67 230.47L177.02 230.24L177.33 229.89L177.61 229.43L177.85 228.86L178.05 228.20L178.21 227.49L178.33 226.78L178.41 226.11L178.45 225.52L178.48 224.95L178.48 224.50L178.44 223.16ZM211.44 221.13L211.25 224.71L210.94 228.12L210.53 231.31L210.01 234.25L209.41 236.95L208.74 239.39L208.00 241.57L207.20 243.49L206.34 245.16L205.43 246.59L204.48 247.81L203.48 248.80L202.45 249.55L201.39 250.08L200.31 250.40L199.20 250.51L198.08 250.42L191.98 249.44L191.98 275.05L185.90 272.03L185.90 197.96L197.83 191.30L199.59 190.51L201.28 190.15L202.90 190.24L204.43 190.83L205.87 191.95L207.19 193.64L208.39 195.92L209.44 198.84L210.30 202.46L210.96 206.84L211.37 211.90L211.50 217.36L211.44 221.13ZM201.95 217.71L201.68 215.98L201.07 214.28L200.08 213.02L198.75 212.43L197.13 212.58L191.98 214.14L191.98 229.98L197.30 229.48L198.09 229.31L198.81 228.98L199.47 228.47L200.07 227.79L200.59 226.96L201.04 226.00L201.40 224.96L201.67 223.90L201.85 222.88L201.97 221.90L202.03 220.87L202.05 219.94L201.95 217.71ZM217.00 283.71L217.00 187.55L268.64 162.27L268.64 197.45L228.89 207.78L228.89 221.83L264.72 216.98L264.72 251.26L228.89 247.88L228.89 263.11L271.40 272.83L271.40 308.66L217.00 283.71Z" fill="none" stroke="#c03868" stroke-width="0.8" fill-rule="evenodd"/><path d="M242.50 174.40L272.50 159.55L272.50 170.30L265.42 172.29L258.94 176.57L251.60 178.74L242.50 184.83Z" fill="#e8103a"/><path d="M264.8 330.2 L277.8 322.7 L290.8 330.2" stroke="#888" stroke-width="0.6" fill="none"/><circle cx="264.8" cy="330.2" r="2.2" fill="#6a6a6a"/><circle cx="290.8" cy="330.2" r="2.2" fill="#6a6a6a"/><circle cx="277.8" cy="337.5" r="2.2" fill="#6a6a6a"/></g></svg><div style="left:1px;top:40px;width:23.5px;height:382px;background:#3b3b3b;"></div><div style="left:24.5px;top:58px;width:1px;height:356px;background:#2f2f2f;"></div><div style="left:1px;top:40px;width:23.5px;height:10px;background:#333;"></div><div style="left:4.4px;top:313.8px;width:15.3px;height:12.7px;background:#262626;"></div><svg style="left:1px;top:0" width="24" height="424" viewBox="1 0 24 424"><defs><linearGradient id="tg"><stop offset="0" stop-color="#eee"/><stop offset="1" stop-color="#222"/></linearGradient></defs><path d="M9 61.5 L15.5 67.5 L12 68 L10 71.5 Z" fill="none" stroke="#c4c4c4" stroke-width="0.9"/><path d="M9 75.7 L15.5 81.7 L12 82.2 L10 85.7 Z" fill="#c4c4c4"/><rect x="17" y="84.2" width="1.2" height="1.2" fill="#999"/><path d="M8 99.4 L9.5 94.9 L14 90.4 L16.5 92.9 L12 97.4 Z" fill="#c4c4c4"/><circle cx="11.5" cy="95.7" r="0.9" fill="#3b3b3b"/><rect x="17" y="98.4" width="1.2" height="1.2" fill="#999"/><path d="M8 113.6 L9.5 109.1 L14 104.6 L16.5 107.1 L12 111.6 Z" fill="#c4c4c4"/><circle cx="11.5" cy="109.9" r="0.9" fill="#3b3b3b"/><rect x="17" y="112.6" width="1.2" height="1.2" fill="#999"/><path d="M7 114.1 Q5 110.1 8 108.1" stroke="#c4c4c4" fill="none" stroke-width="0.8"/><rect x="7" y="118.4" width="9.5" height="7.5" fill="#555" stroke="#c4c4c4" stroke-width="0.9"/><rect x="17" y="125.9" width="1.2" height="1.2" fill="#999"/><path d="M7.5 141.6 Q8 138.6 10 138.6 L16 132.1 L16.8 132.9 L11 139.6 Q10 141.6 7.5 141.6Z" fill="#c4c4c4"/><text x="7.5" y="155.6" font-family="Liberation Serif" font-weight="bold" font-size="12" fill="#c4c4c4">T</text><path d="M8 164 A4.5 4.5 0 1 1 10 169" stroke="#c4c4c4" fill="none" stroke-width="1"/><path d="M6.5 162 L8 166 L10.5 163Z" fill="#c4c4c4"/><path d="M7 181.2 L12 175.2 L16.5 179.2 L11.5 184.2 Z" fill="#c4c4c4"/><path d="M9.5 178.2 L14 182.2" stroke="#3b3b3b" stroke-width="0.8"/><ellipse cx="11" cy="192.4" rx="4.5" ry="3" fill="none" stroke="#c4c4c4" stroke-width="0.9"/><path d="M12 193.4 L16.5 197.4 L14 197.6 L13 199.4Z" fill="#c4c4c4"/><rect x="7.5" y="203.6" width="9" height="8" fill="url(#tg)" stroke="#aaa" stroke-width="0.6"/><path d="M7.5 226.8 L8.5 224.3 L14 218.8 L16 220.8 L10.5 226.3Z" fill="none" stroke="#c4c4c4" stroke-width="0.9"/><circle cx="15.5" cy="218.3" r="1.6" fill="#c4c4c4"/><path d="M7.5 234 L11 237 L9 239 L13 240 L16 237" stroke="#c4c4c4" fill="none" stroke-width="1.2"/><path d="M12 232 L16 235" stroke="#c4c4c4" stroke-width="1.2"/><path d="M7.5 248.1 L11 251.1 L9 253.1 L13 254.1 L16 251.1" stroke="#c4c4c4" fill="none" stroke-width="1.2"/><path d="M12 246.1 L16 249.1" stroke="#c4c4c4" stroke-width="1.2"/><circle cx="10" cy="262.4" r="3" fill="none" stroke="#c4c4c4" stroke-width="0.9"/><circle cx="14" cy="265.4" r="3" fill="none" stroke="#c4c4c4" stroke-width="0.9"/><path d="M9 272.9 L9 280.9 L17 280.9 M7 274.9 L15 274.9 L15 282.9" stroke="#c4c4c4" fill="none" stroke-width="0.9"/><rect x="7.5" y="286.5" width="1" height="10" fill="#c4c4c4"/><rect x="9.5" y="288" width="5" height="2.5" fill="#c4c4c4"/><rect x="9.5" y="292.5" width="7" height="2.5" fill="#c4c4c4"/><path d="M7.5 301.6 L7.5 310.6 L16.5 310.6 Z M7.5 304.6 L13.5 307.6 M11 305.1 L11 310.6" stroke="#c4c4c4" fill="none" stroke-width="0.8"/><path d="M7 315.2 L12 320.2 L9.5 320.5 L8 323.2Z" fill="#c4c4c4"/><circle cx="14" cy="322.2" r="3" fill="#aaa"/><path d="M14 319.2 L14 322.2 L11.5 323.7 M14 322.2 L16.5 323.7" stroke="#3b3b3b" stroke-width="0.6"/><circle cx="8" cy="335" r="2.8" fill="#ddd"/><path d="M14 333 Q17 333 17 337" stroke="#bbb" fill="none"/><rect x="4.5" y="343.7" width="9.5" height="9.5" fill="#000" stroke="#bbb" stroke-width="1"/><rect x="10" y="350" width="9" height="9" fill="#fff"/><path d="M10.5 358.5 L18.5 350.5" stroke="#c0103a" stroke-width="1.4"/><rect x="4" y="365" width="4.5" height="4" fill="#000"/><rect x="9.5" y="365" width="2.5" height="4" fill="#ddd"/><rect x="13.5" y="365" width="4.5" height="4" fill="#fff"/><path d="M13.5 369 L18 365" stroke="#c0103a"/><circle cx="11" cy="376.5" r="2.6" fill="#999"/><circle cx="12.5" cy="378" r="2.2" fill="#bbb"/><rect x="6" y="388" width="9" height="6" fill="none" stroke="#aaa"/><rect x="9" y="386" width="9" height="6" fill="#3b3b3b" stroke="#aaa"/><g fill="#ccc"><circle cx="7.5" cy="411.4" r="1.1"/><circle cx="11" cy="411.4" r="1.1"/><circle cx="14.5" cy="411.4" r="1.1"/></g></svg><svg style="left:40.6px;top:73.3px" width="30" height="30" viewBox="-15 -15 30 30"><path d="M-14 -13.5 L0 -13.5 A14 14 0 1 1 -14 0 Z" fill="#262626"/><circle r="11" fill="#d2d2d2"/><path d="M0 -6.8 L0 0 L-6 3.4 L-6 -3.4Z" fill="#1f45c8"/><path d="M0 -6.8 L6 -3.4 L6 3.4 L0 0Z" fill="#9a9a9a"/><path d="M0 0 L6 3.4 L0 6.8 L-6 3.4Z" fill="#ffffff"/><path d="M0 -6.8 L6 -3.4 L6 3.4 L0 6.8 L-6 3.4 L-6 -3.4Z M0 0 L0 -6.8 M0 0 L-6 3.4 M0 0 L6 3.4" fill="none" stroke="#1a1a1a" stroke-width="0.9"/><rect x="-12.3" y="-12.3" width="2.6" height="2.6" fill="#eee"/></svg><div class="t" style="left:267.5px;top:102.5px;font-size:15px;line-height:18px;color:#000;font-weight:bold;-webkit-text-stroke:0.55px #000">CTIVE</div><div class="t" style="left:343.5px;top:102.5px;font-size:15px;line-height:18px;color:#000;font-weight:bold;-webkit-text-stroke:0.55px #000">3D</div><div style="left:25.5px;top:399.5px;width:469px;height:15px;background:#3a3a3a;"></div><div style="left:25.5px;top:414.5px;width:469px;height:8px;background:#363636;"></div><div class="t" style="left:28px;top:403.2px;width:8px;height:8px;border-radius:50%;background:#cfcfcf;color:#3a3a3a;font-size:6.5px;line-height:8px;text-align:center;font-weight:bold">?</div><div class="t" style="left:42.6px;top:403.31px;font-size:6.65px;line-height:7.98px;color:#c4c4c4;font-weight:normal;"><b>Faites glisser</b> les objets pour les déplacer, les redimensionner et les dupliquer dans la grille de perspective</div><div class="t" style="left:29px;top:416.08px;font-size:6.2px;line-height:7.44px;color:#d0d0d0;font-weight:bold;">44,42%</div><div class="t" style="left:58px;top:416px;font-size:5.5px;line-height:6.6px;color:#aaa;font-weight:normal;">⌄</div><div style="left:71px;top:415px;width:35px;height:7px;background:#303030;"></div><div class="t" style="left:72px;top:416.08px;font-size:6.2px;line-height:7.44px;color:#d0d0d0;font-weight:normal;">0°</div><div class="t" style="left:102px;top:416px;font-size:5.5px;line-height:6.6px;color:#aaa;font-weight:normal;">⌄</div><div style="left:136px;top:415px;width:23px;height:7px;background:#303030;"></div><div class="t" style="left:138px;top:416.08px;font-size:6.2px;line-height:7.44px;color:#d0d0d0;font-weight:normal;">1</div><div class="t" style="left:161px;top:416px;font-size:5.5px;line-height:6.6px;color:#aaa;font-weight:normal;">⌄</div><div class="t" style="left:183.5px;top:416.08px;font-size:6.2px;line-height:7.44px;color:#c8c8c8;font-weight:normal;width:140px;text-align:center">Sélection d'une perspective</div><div class="t" style="left:313px;top:416.2px;font-size:6px;line-height:7.2px;color:#aaa;font-weight:normal;">▸</div><div style="left:494.5px;top:103px;width:142px;height:311px;background:#3c3c3c;border-left:1px solid #2a2a2a;border-top:1px solid #2a2a2a;box-sizing:border-box"></div><div style="left:495.5px;top:105px;width:141px;height:15.3px;background:#333;"></div><div style="left:495.5px;top:105px;width:33.5px;height:15.3px;background:#3c3c3c;"></div><div class="t" style="left:500.4px;top:108.54px;font-size:6.6px;line-height:7.92px;color:#e6e6e6;font-weight:bold;">Calques</div><div class="t" style="left:534.7px;top:108.54px;font-size:6.6px;line-height:7.92px;color:#a8a8a8;font-weight:normal;">Plans de travail</div><div class="t" style="left:612px;top:108.3px;font-size:7px;line-height:8.4px;color:#888;font-weight:normal;">››</div><div style="left:628px;top:109.5px;width:6px;height:6px;background:#666;"></div><div style="left:503px;top:128px;width:113px;height:11.8px;background:#2e2e2e;"></div><svg style="left:504px;top:129px" width="10" height="10"><circle cx="4" cy="4.3" r="2.6" fill="none" stroke="#aaa" stroke-width="1"/><path d="M6 6.3 L8 8.5" stroke="#aaa"/></svg><div class="t" style="left:520px;top:130.28px;font-size:6.2px;line-height:7.44px;color:#a0a0a0;font-weight:normal;"><i>Rechercher dans tout</i></div><svg style="left:622px;top:128px" width="10" height="10"><path d="M0.5 1 L8.5 1 L5.5 5 L5.5 9 L3.5 8 L3.5 5 Z" fill="#bbb"/></svg><div style="left:496.5px;top:145.8px;width:137px;height:12.4px;background:#2d4766;"></div><svg style="left:500px;top:149px" width="9" height="6"><path d="M0.5 3 Q4.5 -1 8.5 3 Q4.5 7 0.5 3Z" fill="none" stroke="#aaa" stroke-width="0.8"/><circle cx="4.5" cy="3" r="1.2" fill="#aaa"/></svg><div style="left:523.5px;top:145.8px;width:2.5px;height:12.4px;background:#c8153c;"></div><div class="t" style="left:531.5px;top:148.4px;font-size:6px;line-height:7.2px;color:#aaa;font-weight:normal;">⌄</div><div style="left:541px;top:147.2px;width:10.4px;height:9.6px;background:#f2f2f2;border:0.6px solid #222;box-sizing:border-box"></div><div class="t" style="left:555px;top:148.16px;font-size:6.4px;line-height:7.68px;color:#a8c8f0;font-weight:normal;">Texte</div><div style="left:616px;top:149.4px;width:5.2px;height:5.2px;border-radius:50%;border:0.8px solid #aaa;box-sizing:border-box"></div><svg style="left:500px;top:161.4px" width="9" height="6"><path d="M0.5 3 Q4.5 -1 8.5 3 Q4.5 7 0.5 3Z" fill="none" stroke="#aaa" stroke-width="0.8"/><circle cx="4.5" cy="3" r="1.2" fill="#aaa"/></svg><div style="left:523.5px;top:158.2px;width:2.5px;height:12.4px;background:#c8153c;"></div><div style="left:555px;top:159.6px;width:10px;height:9.6px;background:#f2f2f2;border:0.6px solid #222;box-sizing:border-box"></div><div style="left:556px;top:162.9px;width:8px;height:3px;background:#111;"></div><div class="t" style="left:568px;top:160.56px;font-size:6.4px;line-height:7.68px;color:#d0d0d0;font-weight:normal;">3D</div><div style="left:616px;top:161.8px;width:5.2px;height:5.2px;border-radius:50%;border:0.8px solid #aaa;box-sizing:border-box"></div><svg style="left:500px;top:173.8px" width="9" height="6"><path d="M0.5 3 Q4.5 -1 8.5 3 Q4.5 7 0.5 3Z" fill="none" stroke="#aaa" stroke-width="0.8"/><circle cx="4.5" cy="3" r="1.2" fill="#aaa"/></svg><div style="left:523.5px;top:170.6px;width:2.5px;height:12.4px;background:#c8153c;"></div><div style="left:555px;top:172px;width:10px;height:9.6px;background:#f2f2f2;border:0.6px solid #222;box-sizing:border-box"></div><div style="left:556px;top:175.3px;width:8px;height:3px;background:#111;"></div><div class="t" style="left:568px;top:172.96px;font-size:6.4px;line-height:7.68px;color:#d0d0d0;font-weight:normal;">Texte ...</div><div style="left:616px;top:174.2px;width:5.2px;height:5.2px;border-radius:50%;border:0.8px solid #aaa;box-sizing:border-box"></div><svg style="left:500px;top:186.2px" width="9" height="6"><path d="M0.5 3 Q4.5 -1 8.5 3 Q4.5 7 0.5 3Z" fill="none" stroke="#aaa" stroke-width="0.8"/><circle cx="4.5" cy="3" r="1.2" fill="#aaa"/></svg><div style="left:523.5px;top:183px;width:2.5px;height:12.4px;background:#c8153c;"></div><div style="left:555px;top:184.4px;width:10px;height:9.6px;background:#f2f2f2;border:0.6px solid #222;box-sizing:border-box"></div><div style="left:556px;top:187.7px;width:8px;height:3px;background:#111;"></div><div class="t" style="left:568px;top:185.36px;font-size:6.4px;line-height:7.68px;color:#d0d0d0;font-weight:normal;">CTIVE</div><div style="left:616px;top:186.6px;width:5.2px;height:5.2px;border-radius:50%;border:0.8px solid #aaa;box-sizing:border-box"></div><svg style="left:500px;top:198.6px" width="9" height="6"><path d="M0.5 3 Q4.5 -1 8.5 3 Q4.5 7 0.5 3Z" fill="none" stroke="#aaa" stroke-width="0.8"/><circle cx="4.5" cy="3" r="1.2" fill="#aaa"/></svg><div style="left:523.5px;top:195.4px;width:2.5px;height:12.4px;background:#3a5fd0;"></div><div style="left:541px;top:196.8px;width:10.4px;height:9.6px;background:#f2f2f2;border:0.6px solid #222;box-sizing:border-box"></div><div class="t" style="left:555px;top:197.76px;font-size:6.4px;line-height:7.68px;color:#d0d0d0;font-weight:normal;">Grille</div><div style="left:616px;top:199px;width:5.2px;height:5.2px;border-radius:50%;border:0.8px solid #aaa;box-sizing:border-box"></div><div style="left:495.5px;top:401px;width:141px;height:13px;background:#3c3c3c;"></div><div class="t" style="left:503px;top:404.96px;font-size:6.4px;line-height:7.68px;color:#c8c8c8;font-weight:normal;">2 Ca...</div><svg style="left:520px;top:403px" width="115" height="11"><g fill="none" stroke="#aaa" stroke-width="0.9"><rect x="10" y="2" width="7" height="7"/><rect x="70" y="2" width="8" height="6"/><rect x="85" y="2" width="7" height="7"/><path d="M100 3 L107 3 L106 10 L101 10Z"/></g><g fill="none" stroke="#666" stroke-width="0.9"><rect x="25" y="2" width="7" height="7"/><circle cx="43" cy="5" r="3"/><path d="M55 2 L58 9"/></g></svg><div style="left:637px;top:40px;width:117px;height:382px;background:#2e2e2e;"></div><div style="left:638px;top:48px;width:116px;height:374px;background:#3c3c3c;"></div><div style="left:638px;top:88px;width:116px;height:2px;background:#333;"></div><div style="left:638px;top:262px;width:116px;height:2px;background:#333;"></div><div style="left:638px;top:320px;width:116px;height:2px;background:#333;"></div><div style="left:638px;top:376px;width:116px;height:2px;background:#333;"></div><div style="left:641px;top:382.7px;width:110px;height:11.7px;background:#262626;"></div><div class="t" style="left:660px;top:58.59px;font-size:6.35px;line-height:7.62px;color:#dcdcdc;font-weight:bold;">Propriétés</div><div class="t" style="left:660px;top:75.09px;font-size:6.35px;line-height:7.62px;color:#dcdcdc;font-weight:bold;">Alignement</div><div class="t" style="left:660px;top:99.19px;font-size:6.35px;line-height:7.62px;color:#dcdcdc;font-weight:bold;">Transformation</div><div class="t" style="left:660px;top:115.69px;font-size:6.35px;line-height:7.62px;color:#dcdcdc;font-weight:bold;">Pathfinder</div><div class="t" style="left:660px;top:132.29px;font-size:6.35px;line-height:7.62px;color:#dcdcdc;font-weight:bold;">Nuancier</div><div class="t" style="left:660px;top:148.79px;font-size:6.35px;line-height:7.62px;color:#dcdcdc;font-weight:bold;">Contour</div><div class="t" style="left:660px;top:165.29px;font-size:6.35px;line-height:7.62px;color:#dcdcdc;font-weight:bold;">Formes</div><div class="t" style="left:660px;top:181.79px;font-size:6.35px;line-height:7.62px;color:#dcdcdc;font-weight:bold;">Symboles</div><div class="t" style="left:660px;top:198.29px;font-size:6.35px;line-height:7.62px;color:#dcdcdc;font-weight:bold;">Dégradé</div><div class="t" style="left:660px;top:214.79px;font-size:6.35px;line-height:7.62px;color:#dcdcdc;font-weight:bold;">Transparence</div><div class="t" style="left:660px;top:231.29px;font-size:6.35px;line-height:7.62px;color:#dcdcdc;font-weight:bold;">Couleur</div><div class="t" style="left:660px;top:247.79px;font-size:6.35px;line-height:7.62px;color:#dcdcdc;font-weight:bold;">Guide des couleurs</div><div class="t" style="left:660px;top:271.89px;font-size:6.35px;line-height:7.62px;color:#dcdcdc;font-weight:bold;">Liens</div><div class="t" style="left:660px;top:288.39px;font-size:6.35px;line-height:7.62px;color:#dcdcdc;font-weight:bold;">Bibliothèques</div><div class="t" style="left:660px;top:304.89px;font-size:6.35px;line-height:7.62px;color:#dcdcdc;font-weight:bold;">Informations sur le docum...</div><div class="t" style="left:660px;top:328.99px;font-size:6.35px;line-height:7.62px;color:#dcdcdc;font-weight:bold;">Variables</div><div class="t" style="left:660px;top:345.49px;font-size:6.35px;line-height:7.62px;color:#dcdcdc;font-weight:bold;">Aspect</div><div class="t" style="left:660px;top:361.99px;font-size:6.35px;line-height:7.62px;color:#dcdcdc;font-weight:bold;">Exportation de ressources</div><div class="t" style="left:660px;top:385.79px;font-size:6.35px;line-height:7.62px;color:#dcdcdc;font-weight:bold;">Calques</div><div class="t" style="left:660px;top:402.54px;font-size:6.6px;line-height:7.92px;color:#9a9a9a;font-weight:bold;">Plans de travail</div><svg style="left:0;top:0" width="755" height="424"><g stroke="#c4c4c4" stroke-width="0.8" fill="none"><path d="M644 59.2h9M644 61.7h9M644 64.2h9"/><circle cx="647" cy="59.2" r="1.1" fill="#3c3c3c"/><circle cx="650" cy="61.7" r="1.1" fill="#3c3c3c"/><circle cx="647" cy="64.2" r="1.1" fill="#3c3c3c"/></g><g fill="#c4c4c4"><rect x="644" y="73.7" width="1" height="9"/><rect x="645.5" y="75.2" width="4" height="2.5"/><rect x="645.5" y="78.7" width="8" height="2.5"/></g><g fill="none" stroke="#c4c4c4" stroke-width="0.8" stroke-dasharray="1.2 1"><rect x="645" y="98.8" width="7.5" height="7.5"/></g><g fill="#c4c4c4"><rect x="644" y="97.8" width="2" height="2"/><rect x="651.5" y="97.8" width="2" height="2"/><rect x="644" y="105.3" width="2" height="2"/><rect x="651.5" y="105.3" width="2" height="2"/></g><rect x="644" y="114.8" width="5.5" height="5" fill="#c4c4c4"/><rect x="647.5" y="117.8" width="5.5" height="5" fill="#999" stroke="#3c3c3c" stroke-width="0.6"/><rect x="644" y="131.9" width="9.5" height="7" fill="#888"/><g fill="#bbb"><rect x="645" y="132.70000000000002" width="2.2" height="2.4"/><rect x="647.8" y="132.70000000000002" width="2.2" height="2.4"/><rect x="650.6" y="132.70000000000002" width="2.2" height="2.4"/><rect x="645" y="135.9" width="2.2" height="2.4"/></g><g fill="#c4c4c4"><rect x="644" y="148.4" width="9.5" height="1.1"/><rect x="644" y="151.20000000000002" width="9.5" height="1.3"/><rect x="644" y="154.20000000000002" width="9.5" height="1.6"/></g><g fill="#c4c4c4"><rect x="646.5" y="168.4" width="4" height="4.5"/><path d="M647 168.4 L645 163.9 L648 167.4Z M649 168.4 L648.5 163.4 L650 167.9Z M650 168.4 L652.5 164.9 L651 168.4Z"/></g><g fill="#c4c4c4"><circle cx="648.5" cy="182.70000000000002" r="2"/><circle cx="646.3" cy="185.4" r="2"/><circle cx="650.7" cy="185.4" r="2"/><path d="M648 184.9 L647 188.9 L650 188.9 L649 184.9Z"/></g><defs><linearGradient id="gd"><stop offset="0" stop-color="#222"/><stop offset="1" stop-color="#eee"/></linearGradient></defs><rect x="644" y="197.9" width="9.5" height="7.5" fill="url(#gd)" stroke="#aaa" stroke-width="0.5"/><circle cx="647.5" cy="217.1" r="3.3" fill="#bbb"/><circle cx="649.8" cy="218.9" r="3.3" fill="#777" stroke="#aaa" stroke-width="0.5"/><ellipse cx="648.8" cy="234.9" rx="4.8" ry="3.5" fill="none" stroke="#c4c4c4" stroke-width="1"/><g fill="#c4c4c4"><circle cx="647" cy="233.9" r="0.9"/><circle cx="650" cy="233.4" r="0.9"/></g><path d="M644 255.4 L644 246.9 Q652 248.9 653.5 255.4Z" fill="#999" stroke="#ccc" stroke-width="0.6"/><g fill="none" stroke="#c4c4c4" stroke-width="1"><rect x="644" y="273" width="5.5" height="4" rx="2"/><rect x="648" y="273" width="5.5" height="4" rx="2"/></g><rect x="644.5" y="287.0" width="8" height="9.5" fill="none" stroke="#c4c4c4" stroke-width="1"/><rect x="647.5" y="287.0" width="2" height="4" fill="#c4c4c4"/><rect x="644.5" y="303.5" width="8" height="9.5" fill="#aaa"/><circle cx="648.5" cy="309" r="2.3" fill="#3c3c3c"/><rect x="648" y="308" width="1" height="2.5" fill="#ccc"/><circle cx="647" cy="333.6" r="2.6" fill="none" stroke="#c4c4c4" stroke-width="1.2"/><circle cx="651.5" cy="329.6" r="1.8" fill="none" stroke="#c4c4c4" stroke-width="0.9"/><circle cx="648.5" cy="348.6" r="3.8" fill="#aaa"/><path d="M649 361.1 L644 361.1 L644 370.1 L653 370.1 L653 365.1" fill="none" stroke="#c4c4c4" stroke-width="1"/><path d="M648 366.1 L653 361.1 M650 361.1 L653 361.1 L653 364.1" stroke="#c4c4c4" stroke-width="1" fill="none"/><path d="M648.7 384.9 L653.5 387.59999999999997 L648.7 390.29999999999995 L644 387.59999999999997Z" fill="#c4c4c4"/><path d="M644 389.9 L648.7 392.59999999999997 L653.5 389.9" fill="none" stroke="#c4c4c4" stroke-width="1.2"/><rect x="645" y="401.5" width="6" height="5" fill="none" stroke="#aaa" stroke-width="0.9"/><rect x="648" y="404.5" width="6" height="5" fill="#555" stroke="#aaa" stroke-width="0.9"/></svg><div class="t" style="left:654.5px;top:399.68px;font-size:12.2px;line-height:14.64px;color:#f4f4f4;font-weight:normal;letter-spacing:-0.35px;text-shadow:0 0 1px #000">Linked<span style="display:inline-block;background:#fff;color:#3c3c3c;padding:0 1px;line-height:10px">in</span> Learning</div><svg style="left:152px;top:298px" width="10" height="12"><path d="M0.5 0.5 L0.5 9.5 L3 7 L5 11 L6.5 10.3 L4.6 6.4 L8 6.4 Z" fill="#111" stroke="#eee" stroke-width="0.5"/></svg><div style="left:175.5px;top:297.4px;width:35.2px;height:16px;background:#d4d4d4;border-radius:2px"></div><div class="t" style="left:178px;top:298.4px;font-size:5px;line-height:6px;color:#111;font-weight:normal;">L : 2233,3 pt</div><div class="t" style="left:178px;top:306.4px;font-size:5px;line-height:6px;color:#111;font-weight:normal;">H : 461,06 pt</div></div><div class="tile" style="left:1526px;top:580px"><div style="left:1px;top:1px;width:753px;height:422px;background:#474747;"></div><div style="left:1px;top:1px;width:753px;height:19px;background:#3c3c3c;"></div><div style="left:1px;top:19px;width:753px;height:1px;background:#333;"></div><div style="left:5.7px;top:7.4px;width:6.6px;height:6.6px;border-radius:50%;background:#e0395a"></div><div style="left:17.5px;top:7.4px;width:6.6px;height:6.6px;border-radius:50%;background:#f0b030"></div><div style="left:29.3px;top:7.4px;width:6.6px;height:6.6px;border-radius:50%;background:#2ec43c"></div><svg style="left:45px;top:6px" width="11" height="10" viewBox="0 0 11 10"><path d="M5.5 0.5 L10.5 5 L9 5 L9 9.5 L6.5 9.5 L6.5 6.5 L4.5 6.5 L4.5 9.5 L2 9.5 L2 5 L0.5 5 Z" fill="#c8c8c8"/></svg><div class="t" style="left:326.5px;top:6.32px;font-size:7.8px;line-height:9.36px;color:#d0d0d0;font-weight:normal;letter-spacing:0.18px">Adobe Illustrator 2025</div><div class="t" style="left:627px;top:3.9px;width:40px;height:13.9px;border-radius:7px;background:#1d5fd6;color:#fff;font-size:7.2px;line-height:13.9px;text-align:center;font-weight:bold">Partager</div><svg style="left:674px;top:4px" width="40" height="13" viewBox="0 0 40 13"><path d="M4 2.5 Q7.5 2.5 7.5 7 L8.5 9.5 L-0.5 9.5 L0.5 7 Q0.5 2.5 4 2.5Z" fill="#bcbcbc"/><circle cx="7.5" cy="2" r="1.6" fill="#2a7de0"/><circle cx="22.5" cy="5.5" r="3.2" fill="none" stroke="#c8c8c8" stroke-width="1.2"/><path d="M24.8 7.8 L27 10" stroke="#c8c8c8" stroke-width="1.3"/></svg><div style="left:718.5px;top:6.5px;width:10px;height:7px;background:#c8c8c8;"></div><div style="left:723px;top:6.5px;width:1px;height:7px;background:#3c3c3c;"></div><div style="left:723px;top:9.5px;width:6px;height:1px;background:#3c3c3c;"></div><div style="left:739.5px;top:6px;width:10px;height:8px;background:transparent;border:1px solid #b8b8b8;box-sizing:border-box"></div><div style="left:749px;top:1.5px;width:4px;height:4px;border-radius:50%;background:#d08a30"></div><div style="left:1px;top:20px;width:753px;height:20px;background:#3c3c3c;"></div><div class="t" style="left:8.7px;top:26.54px;font-size:6.6px;line-height:7.92px;color:#b0b0b0;font-weight:normal;">Auc. sélect.</div><div style="left:65.3px;top:24.9px;width:11.8px;height:11.7px;background:#000;border:1px solid #9a9a9a;box-sizing:border-box"></div><div class="t" style="left:81px;top:26.4px;font-size:6px;line-height:7.2px;color:#b0b0b0;font-weight:normal;">⌄</div><div style="left:91.3px;top:24.9px;width:11.5px;height:11.7px;background:#fff;"></div><svg style="left:91.3px;top:24.9px" width="11.5" height="11.7"><path d="M1 10.7 L10.5 1" stroke="#c0103a" stroke-width="1.4"/></svg><div class="t" style="left:107px;top:26.4px;font-size:6px;line-height:7.2px;color:#b0b0b0;font-weight:normal;">⌄</div><div class="t" style="left:120.2px;top:27.04px;font-size:6.6px;line-height:7.92px;color:#c8c8c8;font-weight:bold;text-decoration:underline;text-decoration-color:#777">Contour :</div><div class="t" style="left:155px;top:26.8px;font-size:7px;line-height:8.4px;color:#a0a0a0;font-weight:normal;">⇕</div><div style="left:162.9px;top:24px;width:28.5px;height:12.5px;background:#2e2e2e;"></div><div class="t" style="left:195px;top:26.4px;font-size:6px;line-height:7.2px;color:#b0b0b0;font-weight:normal;">⌄</div><div style="left:206px;top:24.5px;width:53.3px;height:12px;background:#6a6a6a;"></div><div style="left:273.8px;top:24.9px;width:51.1px;height:11.1px;background:#e4e4e4;"></div><div style="left:278.5px;top:29.3px;width:2.4px;height:2.4px;border-radius:50%;background:#000"></div><div class="t" style="left:287.5px;top:26.54px;font-size:6.6px;line-height:7.92px;color:#111;font-weight:normal;">Arrondi 5 pt</div><div class="t" style="left:327px;top:26.4px;font-size:6px;line-height:7.2px;color:#b0b0b0;font-weight:normal;">⌄</div><div class="t" style="left:339.6px;top:26.54px;font-size:6.6px;line-height:7.92px;color:#c8c8c8;font-weight:bold;text-decoration:underline;text-decoration-color:#777">Opacité :</div><div style="left:370px;top:24.5px;width:32.5px;height:12px;background:#333;"></div><div class="t" style="left:371.5px;top:26.54px;font-size:6.6px;line-height:7.92px;color:#d8d8d8;font-weight:bold;">100%</div><div class="t" style="left:406.5px;top:25.7px;font-size:8px;line-height:9.6px;color:#b0b0b0;font-weight:normal;">›</div><div class="t" style="left:417.8px;top:27.04px;font-size:6.6px;line-height:7.92px;color:#a8a8a8;font-weight:normal;">Style :</div><div style="left:438.9px;top:24.9px;width:11.1px;height:11.1px;background:#dedede;"></div><div class="t" style="left:454px;top:26.4px;font-size:6px;line-height:7.2px;color:#b0b0b0;font-weight:normal;">⌄</div><div style="left:467px;top:23.5px;width:71px;height:14px;background:#3a3a3a;border:1px solid #333;box-sizing:border-box"></div><div class="t" style="left:471.5px;top:26.54px;font-size:6.6px;line-height:7.92px;color:#d8d8d8;font-weight:bold;">Format de document</div><div style="left:541.5px;top:23.5px;width:45px;height:14px;background:#3a3a3a;border:1px solid #333;box-sizing:border-box"></div><div class="t" style="left:546px;top:26.54px;font-size:6.6px;line-height:7.92px;color:#d8d8d8;font-weight:bold;">Préférences</div><svg style="left:592px;top:24px" width="160" height="14" viewBox="0 0 160 14"><rect x="2.5" y="2" width="6" height="6" fill="none" stroke="#aaa" stroke-width="1"/><path d="M6 6 L11 11 L8 11Z" fill="#ccc"/><path d="M15 5 L17 7 L19 5" stroke="#aaa" fill="none"/><rect x="34.5" y="3" width="8" height="8" fill="none" stroke="#bbb" stroke-width="1.2"/><path d="M40 1 L42 3" stroke="#bbb"/><g fill="#777"><rect x="102" y="2" width="2" height="2"/><rect x="107" y="2" width="2" height="2"/><rect x="102" y="9" width="2" height="2"/><rect x="107" y="9" width="2" height="2"/></g><rect x="116.5" y="1.5" width="2" height="11" fill="#bbb"/><path d="M120 4.5 L124 4.5 Q126 4.5 126 7 Q126 9.5 124 9.5 L120 9.5" stroke="#bbb" fill="none" stroke-width="1.2"/><g fill="#aaa"><rect x="145" y="3" width="8" height="1.2"/><rect x="145" y="6" width="8" height="1.2"/><rect x="145" y="9" width="8" height="1.2"/></g></svg><div style="left:1px;top:40px;width:753px;height:18px;background:#2e2e2e;"></div><div style="left:25.7px;top:40px;width:124.3px;height:18px;background:#383838;"></div><div class="t" style="left:30.5px;top:44.8px;font-size:7px;line-height:8.4px;color:#c0c0c0;font-weight:normal;">×</div><div class="t" style="left:38.8px;top:45.04px;font-size:6.6px;line-height:7.92px;color:#d8d8d8;font-weight:bold;">02_04.ai* @ 44,42 % (RVB/Aperçu)</div><div style="left:627px;top:58px;width:10px;height:45px;background:#3c3c3c;"></div><div style="left:627px;top:103px;width:1px;height:0px;background:#333;"></div><div style="left:134.3px;top:134.5px;width:288.3px;height:205.2px;background:#262626"></div><div style="left:134.8px;top:135px;width:286.8px;height:203.7px;background:#fff"></div><svg style="left:0;top:0" width="755" height="424"><defs><linearGradient id="wl" x1="115.6" y1="0" x2="278" y2="0" gradientUnits="userSpaceOnUse"><stop offset="0" stop-color="#1f7a48" stop-opacity="1"/><stop offset="0.12" stop-color="#5aac72" stop-opacity="0.75"/><stop offset="0.22" stop-color="#86c690" stop-opacity="0.5"/><stop offset="0.45" stop-color="#aedcb4" stop-opacity="0.3"/><stop offset="0.65" stop-color="#c4e6c8" stop-opacity="0.2"/><stop offset="1" stop-color="#c8e8d0" stop-opacity="0.1"/></linearGradient><linearGradient id="wr" x1="441.6" y1="0" x2="278" y2="0" gradientUnits="userSpaceOnUse"><stop offset="0" stop-color="#1f7a48" stop-opacity="1"/><stop offset="0.12" stop-color="#5aac72" stop-opacity="0.75"/><stop offset="0.22" stop-color="#86c690" stop-opacity="0.5"/><stop offset="0.45" stop-color="#aedcb4" stop-opacity="0.3"/><stop offset="0.65" stop-color="#c4e6c8" stop-opacity="0.2"/><stop offset="1" stop-color="#c8e8d0" stop-opacity="0.1"/></linearGradient><linearGradient id="pl" x1="0" y1="150" x2="0" y2="323" gradientUnits="userSpaceOnUse"><stop offset="0" stop-color="#ffffff" stop-opacity="0"/><stop offset="0.5" stop-color="#eef6fb" stop-opacity="0.3"/><stop offset="0.75" stop-color="#d8eef6" stop-opacity="0.7"/><stop offset="1" stop-color="#c4e8f2" stop-opacity="0.9"/></linearGradient><linearGradient id="pr" x1="0" y1="150" x2="0" y2="323" gradientUnits="userSpaceOnUse"><stop offset="0" stop-color="#ffffff" stop-opacity="0"/><stop offset="0.5" stop-color="#fdf4ea" stop-opacity="0.3"/><stop offset="0.75" stop-color="#f8ecd4" stop-opacity="0.7"/><stop offset="1" stop-color="#f4e2c4" stop-opacity="0.9"/></linearGradient><clipPath id="cv"><rect x="25" y="58" width="602" height="341"/></clipPath></defs><g clip-path="url(#cv)"><path d="M277.8 151.8 L218.7 182.92 L218.7 291.55 L277.8 322.7Z" fill="url(#pl)"/><path d="M277.8 151.8 L338.5 183.45 L338.5 291.02 L277.8 322.7Z" fill="url(#pr)"/><path d="M157.89 230.39L157.85 231.95L157.78 233.43L157.69 234.82L157.58 236.11L157.45 237.29L157.31 238.38L157.14 239.35L156.97 240.21L156.78 240.98L156.57 241.64L156.35 242.22L156.12 242.69L155.88 243.07L155.63 243.35L155.37 243.53L155.11 243.62L154.83 243.62L153.27 243.37L153.27 255.87L151.60 255.04L151.60 217.49L154.77 215.75L155.20 215.60L155.61 215.65L155.99 215.89L156.34 216.35L156.67 217.02L156.97 217.93L157.23 219.07L157.46 220.47L157.64 222.14L157.79 224.11L157.87 226.35L157.90 228.75L157.89 230.39ZM155.77 228.43L155.70 227.61L155.56 226.79L155.32 226.14L155.00 225.77L154.60 225.73L153.27 226.12L153.27 233.86L154.64 233.74L154.83 233.68L155.01 233.54L155.17 233.32L155.32 233.02L155.44 232.65L155.55 232.21L155.64 231.74L155.70 231.26L155.74 230.80L155.77 230.35L155.78 229.88L155.79 229.46L155.77 228.43ZM160.30 260.29L160.30 212.25L167.99 207.96L167.99 221.61L162.44 223.26L162.44 229.85L167.52 229.05L167.52 242.58L162.44 242.06L162.44 249.19L168.30 250.69L168.30 264.42L160.30 260.29ZM175.78 246.51L173.05 246.09L173.05 267.48L170.00 265.88L170.00 206.84L176.52 203.20L177.34 202.87L178.12 202.84L178.86 203.12L179.54 203.72L180.18 204.67L180.76 205.98L181.28 207.67L181.73 209.77L182.11 212.35L182.39 215.44L182.57 219.00L182.62 222.85L182.59 225.86L182.48 228.69L182.30 231.33L182.06 233.71L181.77 235.85L181.44 237.78L181.06 239.48L180.66 240.93L180.22 242.14L179.76 243.12L179.68 243.25L184.30 273.02L184.28 273.40L179.11 270.68L175.78 246.51ZM178.44 223.16L178.32 222.03L178.05 220.82L177.59 219.88L176.97 219.37L176.21 219.36L173.05 220.29L173.05 230.93L176.29 230.58L176.67 230.47L177.02 230.24L177.33 229.89L177.61 229.43L177.85 228.86L178.05 228.20L178.21 227.49L178.33 226.78L178.41 226.11L178.45 225.52L178.48 224.95L178.48 224.50L178.44 223.16ZM211.44 221.13L211.25 224.71L210.94 228.12L210.53 231.31L210.01 234.25L209.41 236.95L208.74 239.39L208.00 241.57L207.20 243.49L206.34 245.16L205.43 246.59L204.48 247.81L203.48 248.80L202.45 249.55L201.39 250.08L200.31 250.40L199.20 250.51L198.08 250.42L191.98 249.44L191.98 275.05L185.90 272.03L185.90 197.96L197.83 191.30L199.59 190.51L201.28 190.15L202.90 190.24L204.43 190.83L205.87 191.95L207.19 193.64L208.39 195.92L209.44 198.84L210.30 202.46L210.96 206.84L211.37 211.90L211.50 217.36L211.44 221.13ZM201.95 217.71L201.68 215.98L201.07 214.28L200.08 213.02L198.75 212.43L197.13 212.58L191.98 214.14L191.98 229.98L197.30 229.48L198.09 229.31L198.81 228.98L199.47 228.47L200.07 227.79L200.59 226.96L201.04 226.00L201.40 224.96L201.67 223.90L201.85 222.88L201.97 221.90L202.03 220.87L202.05 219.94L201.95 217.71ZM217.00 283.71L217.00 187.55L268.64 162.27L268.64 197.45L228.89 207.78L228.89 221.83L264.72 216.98L264.72 251.26L228.89 247.88L228.89 263.11L271.40 272.83L271.40 308.66L217.00 283.71Z" fill="#000" stroke="none" stroke-width="0" fill-rule="evenodd"/><path d="M271.83 319.55L266.37 322.2M266.28 316.63L253.99 322.2M261.12 313.91L241.6 322.2M256.29 311.36L229.22 322.2M251.78 308.98L216.83 322.2M247.55 306.75L204.45 322.2M243.57 304.66L192.06 322.2M239.82 302.68L179.68 322.2M236.29 300.82L167.29 322.2M232.95 299.06L154.9 322.2M229.8 297.4L142.52 322.2M226.8 295.82L130.13 322.2M223.96 294.32L117.75 322.2M221.27 292.9L105.36 322.2M218.7 291.55L92.98 322.2M283.99 319.47L289.57 322.2M289.72 316.48L302.29 322.2M295.06 313.69L315.01 322.2M300.03 311.1L327.73 322.2M304.67 308.67L340.45 322.2M309.02 306.4L353.18 322.2M313.1 304.27L365.9 322.2M316.94 302.27L378.62 322.2M320.56 300.38L391.34 322.2M323.97 298.6L404.06 322.2M327.19 296.92L416.78 322.2M330.25 295.32L429.5 322.2M333.14 293.81L442.22 322.2M335.89 292.38L454.94 322.2M338.5 291.02L467.66 322.2" stroke="#7a9488" stroke-opacity="0.7" stroke-width="0.6" fill="none"/><path d="M115.6 237.2 L277.8 322.7 L277.8 277.5 Z" fill="url(#wl)"/><path d="M441.6 237.2 L277.8 322.7 L277.8 277.5 Z" fill="url(#wr)"/><path d="M115.6 237.2L277.8 280.51M441.6 237.2L277.8 280.51M115.6 237.2L277.8 283.53M441.6 237.2L277.8 283.53M115.6 237.2L277.8 286.54M441.6 237.2L277.8 286.54M115.6 237.2L277.8 289.55M441.6 237.2L277.8 289.55M115.6 237.2L277.8 292.57M441.6 237.2L277.8 292.57M115.6 237.2L277.8 295.58M441.6 237.2L277.8 295.58M115.6 237.2L277.8 298.59M441.6 237.2L277.8 298.59M115.6 237.2L277.8 301.61M441.6 237.2L277.8 301.61M115.6 237.2L277.8 304.62M441.6 237.2L277.8 304.62M115.6 237.2L277.8 307.63M441.6 237.2L277.8 307.63M115.6 237.2L277.8 310.65M441.6 237.2L277.8 310.65M115.6 237.2L277.8 313.66M441.6 237.2L277.8 313.66M115.6 237.2L277.8 316.67M441.6 237.2L277.8 316.67M115.6 237.2L277.8 319.69M441.6 237.2L277.8 319.69" stroke="#6a9080" stroke-opacity="0.45" stroke-width="0.5" fill="none"/><path d="M80 237.2 L477 237.2" stroke="#b8b8b8" stroke-opacity="0.55" stroke-width="0.7"/><path d="M79 322.2 L477 322.2" stroke="#a0aea6" stroke-opacity="0.6" stroke-width="0.7"/><path d="M277.8 151.8L218.7 182.92M277.8 161.29L218.7 188.95M277.8 170.79L218.7 194.99M277.8 180.28L218.7 201.02M277.8 189.78L218.7 207.06M277.8 199.27L218.7 213.09M277.8 208.77L218.7 219.13M277.8 218.26L218.7 225.16M277.8 227.76L218.7 231.2M277.8 237.25L218.7 237.23M277.8 246.74L218.7 243.27M277.8 256.24L218.7 249.3M277.8 265.73L218.7 255.34M277.8 275.23L218.7 261.37M277.8 284.72L218.7 267.41M277.8 294.22L218.7 273.44M277.8 303.71L218.7 279.48M277.8 313.21L218.7 285.51M277.8 322.7L218.7 291.55M277.8 151.8L277.8 322.7M271.83 154.94L271.83 319.55M266.28 157.86L266.28 316.63M261.12 160.58L261.12 313.91M256.29 163.12L256.29 311.36M251.78 165.5L251.78 308.98M247.55 167.73L247.55 306.75M243.57 169.82L243.57 304.66M239.82 171.8L239.82 302.68M236.29 173.66L236.29 300.82M232.95 175.41L232.95 299.06M229.8 177.07L229.8 297.4M226.8 178.65L226.8 295.82M223.96 180.14L223.96 294.32M221.27 181.57L221.27 292.9M218.7 182.92L218.7 291.55" stroke="#4c5e70" stroke-opacity="0.9" stroke-width="0.6" fill="none"/><path d="M277.8 151.8L338.5 183.45M277.8 161.29L338.5 189.42M277.8 170.79L338.5 195.4M277.8 180.28L338.5 201.38M277.8 189.78L338.5 207.35M277.8 199.27L338.5 213.33M277.8 208.77L338.5 219.3M277.8 218.26L338.5 225.28M277.8 227.76L338.5 231.26M277.8 237.25L338.5 237.23M277.8 246.74L338.5 243.21M277.8 256.24L338.5 249.18M277.8 265.73L338.5 255.16M277.8 275.23L338.5 261.14M277.8 284.72L338.5 267.11M277.8 294.22L338.5 273.09M277.8 303.71L338.5 279.06M277.8 313.21L338.5 285.04M277.8 322.7L338.5 291.02M277.8 151.8L277.8 322.7M283.99 155.03L283.99 319.47M289.72 158.02L289.72 316.48M295.06 160.8L295.06 313.69M300.03 163.39L300.03 311.1M304.67 165.81L304.67 308.67M309.02 168.08L309.02 306.4M313.1 170.21L313.1 304.27M316.94 172.21L316.94 302.27M320.56 174.09L320.56 300.38M323.97 175.87L323.97 298.6M327.19 177.55L327.19 296.92M330.25 179.14L330.25 295.32M333.14 180.65L333.14 293.81M335.89 182.09L335.89 292.38M338.5 183.45L338.5 291.02" stroke="#b08472" stroke-opacity="0.75" stroke-width="0.55" fill="none"/><path d="M277.8 151.8 L134.8 227.09" stroke="#808080" stroke-width="0.8"/><path d="M277.8 151.8 L441.6 237.2" stroke="#a09890" stroke-width="0.8"/><path d="M115.6 237.2 L277.8 322.7" stroke="#3f5a5a" stroke-width="1"/><path d="M441.6 237.2 L277.8 322.7" stroke="#9a6a40" stroke-width="1"/><path d="M277.8 322.7 L277.8 337 M267.8 328.2 L277.8 322.7 L287.8 328.2" stroke="#b0b0b0" stroke-width="0.6" fill="none"/><path d="M264.8 330.2 L277.8 322.7 L290.8 330.2" stroke="#888" stroke-width="0.6" fill="none"/><circle cx="264.8" cy="330.2" r="2.2" fill="#6a6a6a"/><circle cx="290.8" cy="330.2" r="2.2" fill="#6a6a6a"/><circle cx="277.8" cy="337.5" r="2.2" fill="#6a6a6a"/></g></svg><div style="left:1px;top:40px;width:23.5px;height:382px;background:#3b3b3b;"></div><div style="left:24.5px;top:58px;width:1px;height:356px;background:#2f2f2f;"></div><div style="left:1px;top:40px;width:23.5px;height:10px;background:#333;"></div><div style="left:4.4px;top:313.8px;width:15.3px;height:12.7px;background:#262626;"></div><svg style="left:1px;top:0" width="24" height="424" viewBox="1 0 24 424"><defs><linearGradient id="tg"><stop offset="0" stop-color="#eee"/><stop offset="1" stop-color="#222"/></linearGradient></defs><path d="M9 61.5 L15.5 67.5 L12 68 L10 71.5 Z" fill="none" stroke="#c4c4c4" stroke-width="0.9"/><path d="M9 75.7 L15.5 81.7 L12 82.2 L10 85.7 Z" fill="#c4c4c4"/><rect x="17" y="84.2" width="1.2" height="1.2" fill="#999"/><path d="M8 99.4 L9.5 94.9 L14 90.4 L16.5 92.9 L12 97.4 Z" fill="#c4c4c4"/><circle cx="11.5" cy="95.7" r="0.9" fill="#3b3b3b"/><rect x="17" y="98.4" width="1.2" height="1.2" fill="#999"/><path d="M8 113.6 L9.5 109.1 L14 104.6 L16.5 107.1 L12 111.6 Z" fill="#c4c4c4"/><circle cx="11.5" cy="109.9" r="0.9" fill="#3b3b3b"/><rect x="17" y="112.6" width="1.2" height="1.2" fill="#999"/><path d="M7 114.1 Q5 110.1 8 108.1" stroke="#c4c4c4" fill="none" stroke-width="0.8"/><rect x="7" y="118.4" width="9.5" height="7.5" fill="#555" stroke="#c4c4c4" stroke-width="0.9"/><rect x="17" y="125.9" width="1.2" height="1.2" fill="#999"/><path d="M7.5 141.6 Q8 138.6 10 138.6 L16 132.1 L16.8 132.9 L11 139.6 Q10 141.6 7.5 141.6Z" fill="#c4c4c4"/><text x="7.5" y="155.6" font-family="Liberation Serif" font-weight="bold" font-size="12" fill="#c4c4c4">T</text><path d="M8 164 A4.5 4.5 0 1 1 10 169" stroke="#c4c4c4" fill="none" stroke-width="1"/><path d="M6.5 162 L8 166 L10.5 163Z" fill="#c4c4c4"/><path d="M7 181.2 L12 175.2 L16.5 179.2 L11.5 184.2 Z" fill="#c4c4c4"/><path d="M9.5 178.2 L14 182.2" stroke="#3b3b3b" stroke-width="0.8"/><ellipse cx="11" cy="192.4" rx="4.5" ry="3" fill="none" stroke="#c4c4c4" stroke-width="0.9"/><path d="M12 193.4 L16.5 197.4 L14 197.6 L13 199.4Z" fill="#c4c4c4"/><rect x="7.5" y="203.6" width="9" height="8" fill="url(#tg)" stroke="#aaa" stroke-width="0.6"/><path d="M7.5 226.8 L8.5 224.3 L14 218.8 L16 220.8 L10.5 226.3Z" fill="none" stroke="#c4c4c4" stroke-width="0.9"/><circle cx="15.5" cy="218.3" r="1.6" fill="#c4c4c4"/><path d="M7.5 234 L11 237 L9 239 L13 240 L16 237" stroke="#c4c4c4" fill="none" stroke-width="1.2"/><path d="M12 232 L16 235" stroke="#c4c4c4" stroke-width="1.2"/><path d="M7.5 248.1 L11 251.1 L9 253.1 L13 254.1 L16 251.1" stroke="#c4c4c4" fill="none" stroke-width="1.2"/><path d="M12 246.1 L16 249.1" stroke="#c4c4c4" stroke-width="1.2"/><circle cx="10" cy="262.4" r="3" fill="none" stroke="#c4c4c4" stroke-width="0.9"/><circle cx="14" cy="265.4" r="3" fill="none" stroke="#c4c4c4" stroke-width="0.9"/><path d="M9 272.9 L9 280.9 L17 280.9 M7 274.9 L15 274.9 L15 282.9" stroke="#c4c4c4" fill="none" stroke-width="0.9"/><rect x="7.5" y="286.5" width="1" height="10" fill="#c4c4c4"/><rect x="9.5" y="288" width="5" height="2.5" fill="#c4c4c4"/><rect x="9.5" y="292.5" width="7" height="2.5" fill="#c4c4c4"/><path d="M7.5 301.6 L7.5 310.6 L16.5 310.6 Z M7.5 304.6 L13.5 307.6 M11 305.1 L11 310.6" stroke="#c4c4c4" fill="none" stroke-width="0.8"/><path d="M7 315.2 L12 320.2 L9.5 320.5 L8 323.2Z" fill="#c4c4c4"/><circle cx="14" cy="322.2" r="3" fill="#aaa"/><path d="M14 319.2 L14 322.2 L11.5 323.7 M14 322.2 L16.5 323.7" stroke="#3b3b3b" stroke-width="0.6"/><circle cx="8" cy="335" r="2.8" fill="#ddd"/><path d="M14 333 Q17 333 17 337" stroke="#bbb" fill="none"/><rect x="4.5" y="343.7" width="9.5" height="9.5" fill="#000" stroke="#bbb" stroke-width="1"/><rect x="10" y="350" width="9" height="9" fill="#fff"/><path d="M10.5 358.5 L18.5 350.5" stroke="#c0103a" stroke-width="1.4"/><rect x="4" y="365" width="4.5" height="4" fill="#000"/><rect x="9.5" y="365" width="2.5" height="4" fill="#ddd"/><rect x="13.5" y="365" width="4.5" height="4" fill="#fff"/><path d="M13.5 369 L18 365" stroke="#c0103a"/><circle cx="11" cy="376.5" r="2.6" fill="#999"/><circle cx="12.5" cy="378" r="2.2" fill="#bbb"/><rect x="6" y="388" width="9" height="6" fill="none" stroke="#aaa"/><rect x="9" y="386" width="9" height="6" fill="#3b3b3b" stroke="#aaa"/><g fill="#ccc"><circle cx="7.5" cy="411.4" r="1.1"/><circle cx="11" cy="411.4" r="1.1"/><circle cx="14.5" cy="411.4" r="1.1"/></g></svg><svg style="left:40.6px;top:73.3px" width="30" height="30" viewBox="-15 -15 30 30"><path d="M-14 -13.5 L0 -13.5 A14 14 0 1 1 -14 0 Z" fill="#262626"/><circle r="11" fill="#d2d2d2"/><path d="M0 -6.8 L0 0 L-6 3.4 L-6 -3.4Z" fill="#f2ece6"/><path d="M0 -6.8 L6 -3.4 L6 3.4 L0 0Z" fill="#e07030"/><path d="M0 0 L6 3.4 L0 6.8 L-6 3.4Z" fill="#ffffff"/><path d="M0 -6.8 L6 -3.4 L6 3.4 L0 6.8 L-6 3.4 L-6 -3.4Z M0 0 L0 -6.8 M0 0 L-6 3.4 M0 0 L6 3.4" fill="none" stroke="#1a1a1a" stroke-width="0.9"/><rect x="-12.3" y="-12.3" width="2.6" height="2.6" fill="#eee"/></svg><div class="t" style="left:267.5px;top:102.5px;font-size:15px;line-height:18px;color:#000;font-weight:bold;-webkit-text-stroke:0.55px #000">CTIVE</div><div class="t" style="left:343.5px;top:102.5px;font-size:15px;line-height:18px;color:#000;font-weight:bold;-webkit-text-stroke:0.55px #000">3D</div><div style="left:25.5px;top:399.5px;width:469px;height:15px;background:#3a3a3a;"></div><div style="left:25.5px;top:414.5px;width:469px;height:8px;background:#363636;"></div><div class="t" style="left:28px;top:403.2px;width:8px;height:8px;border-radius:50%;background:#cfcfcf;color:#3a3a3a;font-size:6.5px;line-height:8px;text-align:center;font-weight:bold">?</div><div class="t" style="left:42.6px;top:403.31px;font-size:6.65px;line-height:7.98px;color:#c4c4c4;font-weight:normal;"><b>Faites glisser</b> les objets pour les déplacer, les redimensionner et les dupliquer dans la grille de perspective</div><div class="t" style="left:29px;top:416.08px;font-size:6.2px;line-height:7.44px;color:#d0d0d0;font-weight:bold;">44,42%</div><div class="t" style="left:58px;top:416px;font-size:5.5px;line-height:6.6px;color:#aaa;font-weight:normal;">⌄</div><div style="left:71px;top:415px;width:35px;height:7px;background:#303030;"></div><div class="t" style="left:72px;top:416.08px;font-size:6.2px;line-height:7.44px;color:#d0d0d0;font-weight:normal;">0°</div><div class="t" style="left:102px;top:416px;font-size:5.5px;line-height:6.6px;color:#aaa;font-weight:normal;">⌄</div><div style="left:136px;top:415px;width:23px;height:7px;background:#303030;"></div><div class="t" style="left:138px;top:416.08px;font-size:6.2px;line-height:7.44px;color:#d0d0d0;font-weight:normal;">1</div><div class="t" style="left:161px;top:416px;font-size:5.5px;line-height:6.6px;color:#aaa;font-weight:normal;">⌄</div><div class="t" style="left:183.5px;top:416.08px;font-size:6.2px;line-height:7.44px;color:#c8c8c8;font-weight:normal;width:140px;text-align:center">Sélection d'une perspective</div><div class="t" style="left:313px;top:416.2px;font-size:6px;line-height:7.2px;color:#aaa;font-weight:normal;">▸</div><div style="left:494.5px;top:103px;width:142px;height:311px;background:#3c3c3c;border-left:1px solid #2a2a2a;border-top:1px solid #2a2a2a;box-sizing:border-box"></div><div style="left:495.5px;top:105px;width:141px;height:15.3px;background:#333;"></div><div style="left:495.5px;top:105px;width:33.5px;height:15.3px;background:#3c3c3c;"></div><div class="t" style="left:500.4px;top:108.54px;font-size:6.6px;line-height:7.92px;color:#e6e6e6;font-weight:bold;">Calques</div><div class="t" style="left:534.7px;top:108.54px;font-size:6.6px;line-height:7.92px;color:#a8a8a8;font-weight:normal;">Plans de travail</div><div class="t" style="left:612px;top:108.3px;font-size:7px;line-height:8.4px;color:#888;font-weight:normal;">››</div><div style="left:628px;top:109.5px;width:6px;height:6px;background:#666;"></div><div style="left:503px;top:128px;width:113px;height:11.8px;background:#2e2e2e;"></div><svg style="left:504px;top:129px" width="10" height="10"><circle cx="4" cy="4.3" r="2.6" fill="none" stroke="#aaa" stroke-width="1"/><path d="M6 6.3 L8 8.5" stroke="#aaa"/></svg><div class="t" style="left:520px;top:130.28px;font-size:6.2px;line-height:7.44px;color:#a0a0a0;font-weight:normal;"><i>Rechercher dans tout</i></div><svg style="left:622px;top:128px" width="10" height="10"><path d="M0.5 1 L8.5 1 L5.5 5 L5.5 9 L3.5 8 L3.5 5 Z" fill="#bbb"/></svg><div style="left:496.5px;top:145.8px;width:137px;height:12.4px;background:#2d4766;"></div><svg style="left:500px;top:149px" width="9" height="6"><path d="M0.5 3 Q4.5 -1 8.5 3 Q4.5 7 0.5 3Z" fill="none" stroke="#aaa" stroke-width="0.8"/><circle cx="4.5" cy="3" r="1.2" fill="#aaa"/></svg><div style="left:523.5px;top:145.8px;width:2.5px;height:12.4px;background:#c8153c;"></div><div class="t" style="left:531.5px;top:148.4px;font-size:6px;line-height:7.2px;color:#aaa;font-weight:normal;">⌄</div><div style="left:541px;top:147.2px;width:10.4px;height:9.6px;background:#f2f2f2;border:0.6px solid #222;box-sizing:border-box"></div><div class="t" style="left:555px;top:148.16px;font-size:6.4px;line-height:7.68px;color:#a8c8f0;font-weight:normal;">Texte</div><div style="left:616px;top:149.4px;width:5.2px;height:5.2px;border-radius:50%;border:0.8px solid #aaa;box-sizing:border-box"></div><svg style="left:500px;top:161.4px" width="9" height="6"><path d="M0.5 3 Q4.5 -1 8.5 3 Q4.5 7 0.5 3Z" fill="none" stroke="#aaa" stroke-width="0.8"/><circle cx="4.5" cy="3" r="1.2" fill="#aaa"/></svg><div style="left:523.5px;top:158.2px;width:2.5px;height:12.4px;background:#c8153c;"></div><div style="left:555px;top:159.6px;width:10px;height:9.6px;background:#f2f2f2;border:0.6px solid #222;box-sizing:border-box"></div><div style="left:556px;top:162.9px;width:8px;height:3px;background:#111;"></div><div class="t" style="left:568px;top:160.56px;font-size:6.4px;line-height:7.68px;color:#d0d0d0;font-weight:normal;">3D</div><div style="left:616px;top:161.8px;width:5.2px;height:5.2px;border-radius:50%;border:0.8px solid #aaa;box-sizing:border-box"></div><svg style="left:500px;top:173.8px" width="9" height="6"><path d="M0.5 3 Q4.5 -1 8.5 3 Q4.5 7 0.5 3Z" fill="none" stroke="#aaa" stroke-width="0.8"/><circle cx="4.5" cy="3" r="1.2" fill="#aaa"/></svg><div style="left:523.5px;top:170.6px;width:2.5px;height:12.4px;background:#c8153c;"></div><div style="left:555px;top:172px;width:10px;height:9.6px;background:#f2f2f2;border:0.6px solid #222;box-sizing:border-box"></div><div style="left:556px;top:175.3px;width:8px;height:3px;background:#111;"></div><div class="t" style="left:568px;top:172.96px;font-size:6.4px;line-height:7.68px;color:#d0d0d0;font-weight:normal;">Texte ...</div><div style="left:616px;top:174.2px;width:5.2px;height:5.2px;border-radius:50%;border:0.8px solid #aaa;box-sizing:border-box"></div><svg style="left:500px;top:186.2px" width="9" height="6"><path d="M0.5 3 Q4.5 -1 8.5 3 Q4.5 7 0.5 3Z" fill="none" stroke="#aaa" stroke-width="0.8"/><circle cx="4.5" cy="3" r="1.2" fill="#aaa"/></svg><div style="left:523.5px;top:183px;width:2.5px;height:12.4px;background:#c8153c;"></div><div style="left:555px;top:184.4px;width:10px;height:9.6px;background:#f2f2f2;border:0.6px solid #222;box-sizing:border-box"></div><div style="left:556px;top:187.7px;width:8px;height:3px;background:#111;"></div><div class="t" style="left:568px;top:185.36px;font-size:6.4px;line-height:7.68px;color:#d0d0d0;font-weight:normal;">CTIVE</div><div style="left:616px;top:186.6px;width:5.2px;height:5.2px;border-radius:50%;border:0.8px solid #aaa;box-sizing:border-box"></div><svg style="left:500px;top:198.6px" width="9" height="6"><path d="M0.5 3 Q4.5 -1 8.5 3 Q4.5 7 0.5 3Z" fill="none" stroke="#aaa" stroke-width="0.8"/><circle cx="4.5" cy="3" r="1.2" fill="#aaa"/></svg><div style="left:523.5px;top:195.4px;width:2.5px;height:12.4px;background:#3a5fd0;"></div><div style="left:541px;top:196.8px;width:10.4px;height:9.6px;background:#f2f2f2;border:0.6px solid #222;box-sizing:border-box"></div><div class="t" style="left:555px;top:197.76px;font-size:6.4px;line-height:7.68px;color:#d0d0d0;font-weight:normal;">Grille</div><div style="left:616px;top:199px;width:5.2px;height:5.2px;border-radius:50%;border:0.8px solid #aaa;box-sizing:border-box"></div><div style="left:495.5px;top:401px;width:141px;height:13px;background:#3c3c3c;"></div><div class="t" style="left:503px;top:404.96px;font-size:6.4px;line-height:7.68px;color:#c8c8c8;font-weight:normal;">2 Ca...</div><svg style="left:520px;top:403px" width="115" height="11"><g fill="none" stroke="#aaa" stroke-width="0.9"><rect x="10" y="2" width="7" height="7"/><rect x="70" y="2" width="8" height="6"/><rect x="85" y="2" width="7" height="7"/><path d="M100 3 L107 3 L106 10 L101 10Z"/></g><g fill="none" stroke="#666" stroke-width="0.9"><rect x="25" y="2" width="7" height="7"/><circle cx="43" cy="5" r="3"/><path d="M55 2 L58 9"/></g></svg><div style="left:637px;top:40px;width:117px;height:382px;background:#2e2e2e;"></div><div style="left:638px;top:48px;width:116px;height:374px;background:#3c3c3c;"></div><div style="left:638px;top:88px;width:116px;height:2px;background:#333;"></div><div style="left:638px;top:262px;width:116px;height:2px;background:#333;"></div><div style="left:638px;top:320px;width:116px;height:2px;background:#333;"></div><div style="left:638px;top:376px;width:116px;height:2px;background:#333;"></div><div style="left:641px;top:382.7px;width:110px;height:11.7px;background:#262626;"></div><div class="t" style="left:660px;top:58.59px;font-size:6.35px;line-height:7.62px;color:#dcdcdc;font-weight:bold;">Propriétés</div><div class="t" style="left:660px;top:75.09px;font-size:6.35px;line-height:7.62px;color:#dcdcdc;font-weight:bold;">Alignement</div><div class="t" style="left:660px;top:99.19px;font-size:6.35px;line-height:7.62px;color:#dcdcdc;font-weight:bold;">Transformation</div><div class="t" style="left:660px;top:115.69px;font-size:6.35px;line-height:7.62px;color:#dcdcdc;font-weight:bold;">Pathfinder</div><div class="t" style="left:660px;top:132.29px;font-size:6.35px;line-height:7.62px;color:#dcdcdc;font-weight:bold;">Nuancier</div><div class="t" style="left:660px;top:148.79px;font-size:6.35px;line-height:7.62px;color:#dcdcdc;font-weight:bold;">Contour</div><div class="t" style="left:660px;top:165.29px;font-size:6.35px;line-height:7.62px;color:#dcdcdc;font-weight:bold;">Formes</div><div class="t" style="left:660px;top:181.79px;font-size:6.35px;line-height:7.62px;color:#dcdcdc;font-weight:bold;">Symboles</div><div class="t" style="left:660px;top:198.29px;font-size:6.35px;line-height:7.62px;color:#dcdcdc;font-weight:bold;">Dégradé</div><div class="t" style="left:660px;top:214.79px;font-size:6.35px;line-height:7.62px;color:#dcdcdc;font-weight:bold;">Transparence</div><div class="t" style="left:660px;top:231.29px;font-size:6.35px;line-height:7.62px;color:#dcdcdc;font-weight:bold;">Couleur</div><div class="t" style="left:660px;top:247.79px;font-size:6.35px;line-height:7.62px;color:#dcdcdc;font-weight:bold;">Guide des couleurs</div><div class="t" style="left:660px;top:271.89px;font-size:6.35px;line-height:7.62px;color:#dcdcdc;font-weight:bold;">Liens</div><div class="t" style="left:660px;top:288.39px;font-size:6.35px;line-height:7.62px;color:#dcdcdc;font-weight:bold;">Bibliothèques</div><div class="t" style="left:660px;top:304.89px;font-size:6.35px;line-height:7.62px;color:#dcdcdc;font-weight:bold;">Informations sur le docum...</div><div class="t" style="left:660px;top:328.99px;font-size:6.35px;line-height:7.62px;color:#dcdcdc;font-weight:bold;">Variables</div><div class="t" style="left:660px;top:345.49px;font-size:6.35px;line-height:7.62px;color:#dcdcdc;font-weight:bold;">Aspect</div><div class="t" style="left:660px;top:361.99px;font-size:6.35px;line-height:7.62px;color:#dcdcdc;font-weight:bold;">Exportation de ressources</div><div class="t" style="left:660px;top:385.79px;font-size:6.35px;line-height:7.62px;color:#dcdcdc;font-weight:bold;">Calques</div><div class="t" style="left:660px;top:402.54px;font-size:6.6px;line-height:7.92px;color:#9a9a9a;font-weight:bold;">Plans de travail</div><svg style="left:0;top:0" width="755" height="424"><g stroke="#c4c4c4" stroke-width="0.8" fill="none"><path d="M644 59.2h9M644 61.7h9M644 64.2h9"/><circle cx="647" cy="59.2" r="1.1" fill="#3c3c3c"/><circle cx="650" cy="61.7" r="1.1" fill="#3c3c3c"/><circle cx="647" cy="64.2" r="1.1" fill="#3c3c3c"/></g><g fill="#c4c4c4"><rect x="644" y="73.7" width="1" height="9"/><rect x="645.5" y="75.2" width="4" height="2.5"/><rect x="645.5" y="78.7" width="8" height="2.5"/></g><g fill="none" stroke="#c4c4c4" stroke-width="0.8" stroke-dasharray="1.2 1"><rect x="645" y="98.8" width="7.5" height="7.5"/></g><g fill="#c4c4c4"><rect x="644" y="97.8" width="2" height="2"/><rect x="651.5" y="97.8" width="2" height="2"/><rect x="644" y="105.3" width="2" height="2"/><rect x="651.5" y="105.3" width="2" height="2"/></g><rect x="644" y="114.8" width="5.5" height="5" fill="#c4c4c4"/><rect x="647.5" y="117.8" width="5.5" height="5" fill="#999" stroke="#3c3c3c" stroke-width="0.6"/><rect x="644" y="131.9" width="9.5" height="7" fill="#888"/><g fill="#bbb"><rect x="645" y="132.70000000000002" width="2.2" height="2.4"/><rect x="647.8" y="132.70000000000002" width="2.2" height="2.4"/><rect x="650.6" y="132.70000000000002" width="2.2" height="2.4"/><rect x="645" y="135.9" width="2.2" height="2.4"/></g><g fill="#c4c4c4"><rect x="644" y="148.4" width="9.5" height="1.1"/><rect x="644" y="151.20000000000002" width="9.5" height="1.3"/><rect x="644" y="154.20000000000002" width="9.5" height="1.6"/></g><g fill="#c4c4c4"><rect x="646.5" y="168.4" width="4" height="4.5"/><path d="M647 168.4 L645 163.9 L648 167.4Z M649 168.4 L648.5 163.4 L650 167.9Z M650 168.4 L652.5 164.9 L651 168.4Z"/></g><g fill="#c4c4c4"><circle cx="648.5" cy="182.70000000000002" r="2"/><circle cx="646.3" cy="185.4" r="2"/><circle cx="650.7" cy="185.4" r="2"/><path d="M648 184.9 L647 188.9 L650 188.9 L649 184.9Z"/></g><defs><linearGradient id="gd"><stop offset="0" stop-color="#222"/><stop offset="1" stop-color="#eee"/></linearGradient></defs><rect x="644" y="197.9" width="9.5" height="7.5" fill="url(#gd)" stroke="#aaa" stroke-width="0.5"/><circle cx="647.5" cy="217.1" r="3.3" fill="#bbb"/><circle cx="649.8" cy="218.9" r="3.3" fill="#777" stroke="#aaa" stroke-width="0.5"/><ellipse cx="648.8" cy="234.9" rx="4.8" ry="3.5" fill="none" stroke="#c4c4c4" stroke-width="1"/><g fill="#c4c4c4"><circle cx="647" cy="233.9" r="0.9"/><circle cx="650" cy="233.4" r="0.9"/></g><path d="M644 255.4 L644 246.9 Q652 248.9 653.5 255.4Z" fill="#999" stroke="#ccc" stroke-width="0.6"/><g fill="none" stroke="#c4c4c4" stroke-width="1"><rect x="644" y="273" width="5.5" height="4" rx="2"/><rect x="648" y="273" width="5.5" height="4" rx="2"/></g><rect x="644.5" y="287.0" width="8" height="9.5" fill="none" stroke="#c4c4c4" stroke-width="1"/><rect x="647.5" y="287.0" width="2" height="4" fill="#c4c4c4"/><rect x="644.5" y="303.5" width="8" height="9.5" fill="#aaa"/><circle cx="648.5" cy="309" r="2.3" fill="#3c3c3c"/><rect x="648" y="308" width="1" height="2.5" fill="#ccc"/><circle cx="647" cy="333.6" r="2.6" fill="none" stroke="#c4c4c4" stroke-width="1.2"/><circle cx="651.5" cy="329.6" r="1.8" fill="none" stroke="#c4c4c4" stroke-width="0.9"/><circle cx="648.5" cy="348.6" r="3.8" fill="#aaa"/><path d="M649 361.1 L644 361.1 L644 370.1 L653 370.1 L653 365.1" fill="none" stroke="#c4c4c4" stroke-width="1"/><path d="M648 366.1 L653 361.1 M650 361.1 L653 361.1 L653 364.1" stroke="#c4c4c4" stroke-width="1" fill="none"/><path d="M648.7 384.9 L653.5 387.59999999999997 L648.7 390.29999999999995 L644 387.59999999999997Z" fill="#c4c4c4"/><path d="M644 389.9 L648.7 392.59999999999997 L653.5 389.9" fill="none" stroke="#c4c4c4" stroke-width="1.2"/><rect x="645" y="401.5" width="6" height="5" fill="none" stroke="#aaa" stroke-width="0.9"/><rect x="648" y="404.5" width="6" height="5" fill="#555" stroke="#aaa" stroke-width="0.9"/></svg><div class="t" style="left:654.5px;top:399.68px;font-size:12.2px;line-height:14.64px;color:#f4f4f4;font-weight:normal;letter-spacing:-0.35px;text-shadow:0 0 1px #000">Linked<span style="display:inline-block;background:#fff;color:#3c3c3c;padding:0 1px;line-height:10px">in</span> Learning</div></div><div class="tile" style="left:6px;top:1009px"><div style="left:1px;top:1px;width:753px;height:422px;background:#474747;"></div><div style="left:1px;top:1px;width:753px;height:19px;background:#3c3c3c;"></div><div style="left:1px;top:19px;width:753px;height:1px;background:#333;"></div><div style="left:5.7px;top:7.4px;width:6.6px;height:6.6px;border-radius:50%;background:#e0395a"></div><div style="left:17.5px;top:7.4px;width:6.6px;height:6.6px;border-radius:50%;background:#f0b030"></div><div style="left:29.3px;top:7.4px;width:6.6px;height:6.6px;border-radius:50%;background:#2ec43c"></div><svg style="left:45px;top:6px" width="11" height="10" viewBox="0 0 11 10"><path d="M5.5 0.5 L10.5 5 L9 5 L9 9.5 L6.5 9.5 L6.5 6.5 L4.5 6.5 L4.5 9.5 L2 9.5 L2 5 L0.5 5 Z" fill="#c8c8c8"/></svg><div class="t" style="left:326.5px;top:6.32px;font-size:7.8px;line-height:9.36px;color:#d0d0d0;font-weight:normal;letter-spacing:0.18px">Adobe Illustrator 2025</div><div class="t" style="left:627px;top:3.9px;width:40px;height:13.9px;border-radius:7px;background:#1d5fd6;color:#fff;font-size:7.2px;line-height:13.9px;text-align:center;font-weight:bold">Partager</div><svg style="left:674px;top:4px" width="40" height="13" viewBox="0 0 40 13"><path d="M4 2.5 Q7.5 2.5 7.5 7 L8.5 9.5 L-0.5 9.5 L0.5 7 Q0.5 2.5 4 2.5Z" fill="#bcbcbc"/><circle cx="7.5" cy="2" r="1.6" fill="#2a7de0"/><circle cx="22.5" cy="5.5" r="3.2" fill="none" stroke="#c8c8c8" stroke-width="1.2"/><path d="M24.8 7.8 L27 10" stroke="#c8c8c8" stroke-width="1.3"/></svg><div style="left:718.5px;top:6.5px;width:10px;height:7px;background:#c8c8c8;"></div><div style="left:723px;top:6.5px;width:1px;height:7px;background:#3c3c3c;"></div><div style="left:723px;top:9.5px;width:6px;height:1px;background:#3c3c3c;"></div><div style="left:739.5px;top:6px;width:10px;height:8px;background:transparent;border:1px solid #b8b8b8;box-sizing:border-box"></div><div style="left:749px;top:1.5px;width:4px;height:4px;border-radius:50%;background:#d08a30"></div><div style="left:1px;top:20px;width:753px;height:20px;background:#3c3c3c;"></div><div class="t" style="left:8.7px;top:26.54px;font-size:6.6px;line-height:7.92px;color:#b8b8b8;font-weight:normal;">Objet en perspective</div><svg style="left:74px;top:24px" width="130" height="14"><g fill="none" stroke="#bbb" stroke-width="0.9"><rect x="1.5" y="1.5" width="10" height="10"/><rect x="17" y="1.5" width="10" height="10"/></g><g fill="#ccc"><circle cx="5" cy="5" r="1.3"/><circle cx="8" cy="8" r="1.3"/><circle cx="21" cy="8" r="1.3"/><circle cx="24" cy="5" r="1.3"/></g><g stroke="#ccc" stroke-width="1.1" fill="none"><path d="M118 2 L118 5 M118 2 L121 2 M129 2 L126 2 M129 2 L129 5 M118 12 L118 9 M118 12 L121 12 M129 12 L126 12 M129 12 L129 9"/><rect x="120.5" y="4.5" width="6" height="5"/></g></svg><div class="t" style="left:107px;top:26.54px;font-size:6.6px;line-height:7.92px;color:#c8c8c8;font-weight:bold;text-decoration:underline;text-decoration-color:#777">Opacité :</div><div style="left:138px;top:24.5px;width:32.5px;height:12px;background:#333;"></div><div class="t" style="left:139.5px;top:26.54px;font-size:6.6px;line-height:7.92px;color:#d8d8d8;font-weight:bold;">100%</div><div class="t" style="left:174px;top:25.7px;font-size:8px;line-height:9.6px;color:#b0b0b0;font-weight:normal;">›</div><svg style="left:592px;top:24px" width="160" height="14" viewBox="0 0 160 14"><g fill="#aaa"><rect x="102" y="2" width="2.2" height="2.2"/><rect x="107" y="2" width="2.2" height="2.2"/><rect x="102" y="9" width="2.2" height="2.2"/><rect x="107" y="9" width="2.2" height="2.2"/></g><rect x="116.5" y="1.5" width="2" height="11" fill="#bbb"/><path d="M120 4.5 L124 4.5 Q126 4.5 126 7 Q126 9.5 124 9.5 L120 9.5" stroke="#bbb" fill="none" stroke-width="1.2"/><g fill="#aaa"><rect x="145" y="3" width="8" height="1.2"/><rect x="145" y="6" width="8" height="1.2"/><rect x="145" y="9" width="8" height="1.2"/></g></svg><div style="left:1px;top:40px;width:753px;height:18px;background:#2e2e2e;"></div><div style="left:25.7px;top:40px;width:124.3px;height:18px;background:#383838;"></div><div class="t" style="left:30.5px;top:44.8px;font-size:7px;line-height:8.4px;color:#c0c0c0;font-weight:normal;">×</div><div class="t" style="left:38.8px;top:45.04px;font-size:6.6px;line-height:7.92px;color:#d8d8d8;font-weight:bold;">02_04.ai* @ 44,42 % (RVB/Aperçu)</div><div style="left:627px;top:58px;width:10px;height:45px;background:#3c3c3c;"></div><div style="left:627px;top:103px;width:1px;height:0px;background:#333;"></div><div style="left:134.3px;top:134.5px;width:288.3px;height:205.2px;background:#262626"></div><div style="left:134.8px;top:135px;width:286.8px;height:203.7px;background:#fff"></div><svg style="left:0;top:0" width="755" height="424"><defs><linearGradient id="wl" x1="115.6" y1="0" x2="278" y2="0" gradientUnits="userSpaceOnUse"><stop offset="0" stop-color="#1f7a48" stop-opacity="1"/><stop offset="0.12" stop-color="#5aac72" stop-opacity="0.75"/><stop offset="0.22" stop-color="#86c690" stop-opacity="0.5"/><stop offset="0.45" stop-color="#aedcb4" stop-opacity="0.3"/><stop offset="0.65" stop-color="#c4e6c8" stop-opacity="0.2"/><stop offset="1" stop-color="#c8e8d0" stop-opacity="0.1"/></linearGradient><linearGradient id="wr" x1="441.6" y1="0" x2="278" y2="0" gradientUnits="userSpaceOnUse"><stop offset="0" stop-color="#1f7a48" stop-opacity="1"/><stop offset="0.12" stop-color="#5aac72" stop-opacity="0.75"/><stop offset="0.22" stop-color="#86c690" stop-opacity="0.5"/><stop offset="0.45" stop-color="#aedcb4" stop-opacity="0.3"/><stop offset="0.65" stop-color="#c4e6c8" stop-opacity="0.2"/><stop offset="1" stop-color="#c8e8d0" stop-opacity="0.1"/></linearGradient><linearGradient id="pl" x1="0" y1="150" x2="0" y2="323" gradientUnits="userSpaceOnUse"><stop offset="0" stop-color="#ffffff" stop-opacity="0"/><stop offset="0.5" stop-color="#eef6fb" stop-opacity="0.3"/><stop offset="0.75" stop-color="#d8eef6" stop-opacity="0.7"/><stop offset="1" stop-color="#c4e8f2" stop-opacity="0.9"/></linearGradient><linearGradient id="pr" x1="0" y1="150" x2="0" y2="323" gradientUnits="userSpaceOnUse"><stop offset="0" stop-color="#ffffff" stop-opacity="0"/><stop offset="0.5" stop-color="#fdf4ea" stop-opacity="0.3"/><stop offset="0.75" stop-color="#f8ecd4" stop-opacity="0.7"/><stop offset="1" stop-color="#f4e2c4" stop-opacity="0.9"/></linearGradient><clipPath id="cv"><rect x="25" y="58" width="602" height="341"/></clipPath></defs><g clip-path="url(#cv)"><path d="M277.8 151.8 L218.7 182.92 L218.7 291.55 L277.8 322.7Z" fill="url(#pl)"/><path d="M277.8 151.8 L338.5 183.45 L338.5 291.02 L277.8 322.7Z" fill="url(#pr)"/><path d="M157.89 230.39L157.85 231.95L157.78 233.43L157.69 234.82L157.58 236.11L157.45 237.29L157.31 238.38L157.14 239.35L156.97 240.21L156.78 240.98L156.57 241.64L156.35 242.22L156.12 242.69L155.88 243.07L155.63 243.35L155.37 243.53L155.11 243.62L154.83 243.62L153.27 243.37L153.27 255.87L151.60 255.04L151.60 217.49L154.77 215.75L155.20 215.60L155.61 215.65L155.99 215.89L156.34 216.35L156.67 217.02L156.97 217.93L157.23 219.07L157.46 220.47L157.64 222.14L157.79 224.11L157.87 226.35L157.90 228.75L157.89 230.39ZM155.77 228.43L155.70 227.61L155.56 226.79L155.32 226.14L155.00 225.77L154.60 225.73L153.27 226.12L153.27 233.86L154.64 233.74L154.83 233.68L155.01 233.54L155.17 233.32L155.32 233.02L155.44 232.65L155.55 232.21L155.64 231.74L155.70 231.26L155.74 230.80L155.77 230.35L155.78 229.88L155.79 229.46L155.77 228.43ZM160.30 260.29L160.30 212.25L167.99 207.96L167.99 221.61L162.44 223.26L162.44 229.85L167.52 229.05L167.52 242.58L162.44 242.06L162.44 249.19L168.30 250.69L168.30 264.42L160.30 260.29ZM175.78 246.51L173.05 246.09L173.05 267.48L170.00 265.88L170.00 206.84L176.52 203.20L177.34 202.87L178.12 202.84L178.86 203.12L179.54 203.72L180.18 204.67L180.76 205.98L181.28 207.67L181.73 209.77L182.11 212.35L182.39 215.44L182.57 219.00L182.62 222.85L182.59 225.86L182.48 228.69L182.30 231.33L182.06 233.71L181.77 235.85L181.44 237.78L181.06 239.48L180.66 240.93L180.22 242.14L179.76 243.12L179.68 243.25L184.30 273.02L184.28 273.40L179.11 270.68L175.78 246.51ZM178.44 223.16L178.32 222.03L178.05 220.82L177.59 219.88L176.97 219.37L176.21 219.36L173.05 220.29L173.05 230.93L176.29 230.58L176.67 230.47L177.02 230.24L177.33 229.89L177.61 229.43L177.85 228.86L178.05 228.20L178.21 227.49L178.33 226.78L178.41 226.11L178.45 225.52L178.48 224.95L178.48 224.50L178.44 223.16ZM211.44 221.13L211.25 224.71L210.94 228.12L210.53 231.31L210.01 234.25L209.41 236.95L208.74 239.39L208.00 241.57L207.20 243.49L206.34 245.16L205.43 246.59L204.48 247.81L203.48 248.80L202.45 249.55L201.39 250.08L200.31 250.40L199.20 250.51L198.08 250.42L191.98 249.44L191.98 275.05L185.90 272.03L185.90 197.96L197.83 191.30L199.59 190.51L201.28 190.15L202.90 190.24L204.43 190.83L205.87 191.95L207.19 193.64L208.39 195.92L209.44 198.84L210.30 202.46L210.96 206.84L211.37 211.90L211.50 217.36L211.44 221.13ZM201.95 217.71L201.68 215.98L201.07 214.28L200.08 213.02L198.75 212.43L197.13 212.58L191.98 214.14L191.98 229.98L197.30 229.48L198.09 229.31L198.81 228.98L199.47 228.47L200.07 227.79L200.59 226.96L201.04 226.00L201.40 224.96L201.67 223.90L201.85 222.88L201.97 221.90L202.03 220.87L202.05 219.94L201.95 217.71ZM217.00 283.71L217.00 187.55L268.64 162.27L268.64 197.45L228.89 207.78L228.89 221.83L264.72 216.98L264.72 251.26L228.89 247.88L228.89 263.11L271.40 272.83L271.40 308.66L217.00 283.71Z" fill="#000" stroke="none" stroke-width="0" fill-rule="evenodd"/><path d="M326.43 260.90L328.71 259.22L330.57 256.94L332.11 254.07L333.37 250.55L334.96 244.02L334.96 245.53L344.00 257.95L343.85 258.69L342.86 262.55L341.71 266.18L340.41 269.57L338.94 272.71L337.30 275.60L335.50 278.23L333.53 280.62L331.39 282.76L329.04 284.65L326.48 286.29L323.66 287.69L319.24 289.20L314.81 289.89L310.41 289.62L306.08 288.29L301.89 285.74L297.92 281.89L294.29 276.71L291.16 270.25L288.63 262.55L286.78 253.75L285.67 244.00L285.30 233.47L285.66 222.96L286.73 213.31L288.51 204.64L290.96 197.12L294.01 190.88L297.55 185.95L301.45 182.38L305.59 180.11L309.89 179.03L314.29 179.01L318.73 179.92L323.17 181.63L326.26 183.27L329.02 185.10L331.49 187.15L333.72 189.41L335.72 191.90L337.51 194.61L339.09 197.54L340.49 200.69L341.70 204.07L342.74 207.66L343.60 211.45L343.81 212.69L334.96 224.48L334.96 224.57L334.40 224.80L333.40 219.51L333.03 218.07L332.57 216.68L332.00 215.32L331.30 213.99L330.47 212.68L329.53 211.47L328.50 210.39L327.39 209.45L326.17 208.66L324.85 208.03L323.42 207.57L321.17 207.22L319.09 207.33L317.19 207.91L315.50 208.93L314.00 210.38L312.70 212.27L311.57 214.59L310.63 217.36L309.88 220.66L309.31 224.52L308.96 228.98L308.84 234.02L308.96 239.17L309.32 243.74L309.91 247.72L310.69 251.15L311.67 254.07L312.83 256.53L314.18 258.56L315.72 260.14L317.44 261.27L319.34 261.95L321.43 262.16L323.64 261.92L326.43 260.90ZM362.44 217.81L362.44 270.67L355.32 273.68L355.32 216.06L344.50 213.41L344.50 192.65L369.80 204.26L369.80 219.61L362.44 217.81ZM371.00 267.42L371.00 204.44L377.90 207.64L377.90 264.47L371.00 267.42ZM386.62 246.08L387.04 241.29L389.87 212.93L393.20 214.49L388.25 260.32L384.87 261.78L377.90 207.31L382.91 209.66L386.18 241.33L386.28 242.39L386.39 243.59L386.52 244.93L386.62 246.08ZM392.30 257.28L392.30 214.58L399.78 218.01L399.78 226.80L394.90 225.58L394.90 230.87L399.45 231.49L399.45 240.34L394.90 240.68L394.90 246.41L400.00 245.41L400.00 254.14L392.30 257.28Z" fill="#000" fill-rule="evenodd"/><path d="M271.83 319.55L266.37 322.2M266.28 316.63L253.99 322.2M261.12 313.91L241.6 322.2M256.29 311.36L229.22 322.2M251.78 308.98L216.83 322.2M247.55 306.75L204.45 322.2M243.57 304.66L192.06 322.2M239.82 302.68L179.68 322.2M236.29 300.82L167.29 322.2M232.95 299.06L154.9 322.2M229.8 297.4L142.52 322.2M226.8 295.82L130.13 322.2M223.96 294.32L117.75 322.2M221.27 292.9L105.36 322.2M218.7 291.55L92.98 322.2M283.99 319.47L289.57 322.2M289.72 316.48L302.29 322.2M295.06 313.69L315.01 322.2M300.03 311.1L327.73 322.2M304.67 308.67L340.45 322.2M309.02 306.4L353.18 322.2M313.1 304.27L365.9 322.2M316.94 302.27L378.62 322.2M320.56 300.38L391.34 322.2M323.97 298.6L404.06 322.2M327.19 296.92L416.78 322.2M330.25 295.32L429.5 322.2M333.14 293.81L442.22 322.2M335.89 292.38L454.94 322.2M338.5 291.02L467.66 322.2" stroke="#7a9488" stroke-opacity="0.7" stroke-width="0.6" fill="none"/><path d="M115.6 237.2 L277.8 322.7 L277.8 277.5 Z" fill="url(#wl)"/><path d="M441.6 237.2 L277.8 322.7 L277.8 277.5 Z" fill="url(#wr)"/><path d="M115.6 237.2L277.8 280.51M441.6 237.2L277.8 280.51M115.6 237.2L277.8 283.53M441.6 237.2L277.8 283.53M115.6 237.2L277.8 286.54M441.6 237.2L277.8 286.54M115.6 237.2L277.8 289.55M441.6 237.2L277.8 289.55M115.6 237.2L277.8 292.57M441.6 237.2L277.8 292.57M115.6 237.2L277.8 295.58M441.6 237.2L277.8 295.58M115.6 237.2L277.8 298.59M441.6 237.2L277.8 298.59M115.6 237.2L277.8 301.61M441.6 237.2L277.8 301.61M115.6 237.2L277.8 304.62M441.6 237.2L277.8 304.62M115.6 237.2L277.8 307.63M441.6 237.2L277.8 307.63M115.6 237.2L277.8 310.65M441.6 237.2L277.8 310.65M115.6 237.2L277.8 313.66M441.6 237.2L277.8 313.66M115.6 237.2L277.8 316.67M441.6 237.2L277.8 316.67M115.6 237.2L277.8 319.69M441.6 237.2L277.8 319.69" stroke="#6a9080" stroke-opacity="0.45" stroke-width="0.5" fill="none"/><path d="M80 237.2 L477 237.2" stroke="#b8b8b8" stroke-opacity="0.55" stroke-width="0.7"/><path d="M79 322.2 L477 322.2" stroke="#a0aea6" stroke-opacity="0.6" stroke-width="0.7"/><path d="M277.8 151.8L218.7 182.92M277.8 161.29L218.7 188.95M277.8 170.79L218.7 194.99M277.8 180.28L218.7 201.02M277.8 189.78L218.7 207.06M277.8 199.27L218.7 213.09M277.8 208.77L218.7 219.13M277.8 218.26L218.7 225.16M277.8 227.76L218.7 231.2M277.8 237.25L218.7 237.23M277.8 246.74L218.7 243.27M277.8 256.24L218.7 249.3M277.8 265.73L218.7 255.34M277.8 275.23L218.7 261.37M277.8 284.72L218.7 267.41M277.8 294.22L218.7 273.44M277.8 303.71L218.7 279.48M277.8 313.21L218.7 285.51M277.8 322.7L218.7 291.55M277.8 151.8L277.8 322.7M271.83 154.94L271.83 319.55M266.28 157.86L266.28 316.63M261.12 160.58L261.12 313.91M256.29 163.12L256.29 311.36M251.78 165.5L251.78 308.98M247.55 167.73L247.55 306.75M243.57 169.82L243.57 304.66M239.82 171.8L239.82 302.68M236.29 173.66L236.29 300.82M232.95 175.41L232.95 299.06M229.8 177.07L229.8 297.4M226.8 178.65L226.8 295.82M223.96 180.14L223.96 294.32M221.27 181.57L221.27 292.9M218.7 182.92L218.7 291.55" stroke="#4c5e70" stroke-opacity="0.9" stroke-width="0.6" fill="none"/><path d="M277.8 151.8L338.5 183.45M277.8 161.29L338.5 189.42M277.8 170.79L338.5 195.4M277.8 180.28L338.5 201.38M277.8 189.78L338.5 207.35M277.8 199.27L338.5 213.33M277.8 208.77L338.5 219.3M277.8 218.26L338.5 225.28M277.8 227.76L338.5 231.26M277.8 237.25L338.5 237.23M277.8 246.74L338.5 243.21M277.8 256.24L338.5 249.18M277.8 265.73L338.5 255.16M277.8 275.23L338.5 261.14M277.8 284.72L338.5 267.11M277.8 294.22L338.5 273.09M277.8 303.71L338.5 279.06M277.8 313.21L338.5 285.04M277.8 322.7L338.5 291.02M277.8 151.8L277.8 322.7M283.99 155.03L283.99 319.47M289.72 158.02L289.72 316.48M295.06 160.8L295.06 313.69M300.03 163.39L300.03 311.1M304.67 165.81L304.67 308.67M309.02 168.08L309.02 306.4M313.1 170.21L313.1 304.27M316.94 172.21L316.94 302.27M320.56 174.09L320.56 300.38M323.97 175.87L323.97 298.6M327.19 177.55L327.19 296.92M330.25 179.14L330.25 295.32M333.14 180.65L333.14 293.81M335.89 182.09L335.89 292.38M338.5 183.45L338.5 291.02" stroke="#b08472" stroke-opacity="0.75" stroke-width="0.55" fill="none"/><path d="M277.8 151.8 L134.8 227.09" stroke="#808080" stroke-width="0.8"/><path d="M277.8 151.8 L441.6 237.2" stroke="#a09890" stroke-width="0.8"/><path d="M115.6 237.2 L277.8 322.7" stroke="#3f5a5a" stroke-width="1"/><path d="M441.6 237.2 L277.8 322.7" stroke="#9a6a40" stroke-width="1"/><path d="M277.8 322.7 L277.8 337 M267.8 328.2 L277.8 322.7 L287.8 328.2" stroke="#b0b0b0" stroke-width="0.6" fill="none"/><path d="M216.49 310.24L216.39 310.75L216.15 311.28L215.75 311.81L215.18 312.34L214.44 312.88L213.52 313.40L212.42 313.91L211.18 314.39L209.37 314.96L207.54 315.42L205.72 315.76L203.97 315.96L202.31 316.02L200.74 315.96L199.30 315.78L197.97 315.49L196.77 315.10L195.68 314.60L194.71 314.01L193.84 313.32L193.18 312.63L192.72 311.95L192.46 311.27L192.40 310.60L192.54 309.94L192.88 309.27L193.42 308.61L194.16 307.96L195.11 307.32L196.26 306.70L197.59 306.10L200.62 304.96L205.01 307.52L203.02 308.39L202.43 308.75L202.04 309.13L201.89 309.56L202.03 310.03L202.51 310.55L202.85 310.78L203.21 310.98L203.60 311.13L204.01 311.25L204.43 311.32L204.84 311.36L205.23 311.37L205.60 311.35L205.96 311.30L206.34 311.23L206.78 311.12L207.26 310.97L207.62 310.84L207.89 310.72L208.11 310.59L208.31 310.44L208.48 310.26L208.60 310.04L208.66 309.79L208.63 309.52L208.51 309.23L208.30 308.92L207.99 308.61L207.58 308.27L206.10 307.18L213.67 304.84L215.14 305.82L215.57 306.08L216.01 306.30L216.45 306.47L216.90 306.60L217.34 306.69L217.76 306.74L218.16 306.76L218.52 306.75L218.83 306.72L219.12 306.67L219.42 306.60L219.77 306.50L220.08 306.39L220.34 306.28L220.54 306.17L220.71 306.06L220.85 305.94L220.96 305.80L221.03 305.65L221.04 305.48L220.98 305.30L220.86 305.12L220.66 304.92L220.38 304.73L220.08 304.56L219.75 304.42L219.41 304.30L219.06 304.22L218.70 304.17L218.33 304.13L217.97 304.13L217.63 304.14L217.30 304.17L216.97 304.22L216.63 304.28L214.92 304.70L211.56 301.98L214.66 301.32L216.08 301.08L217.45 300.93L218.77 300.85L220.04 300.84L221.25 300.90L222.41 301.02L223.49 301.21L224.51 301.46L225.46 301.78L226.36 302.16L227.21 302.60L228.00 303.11L228.65 303.62L229.13 304.14L229.45 304.68L229.61 305.22L229.58 305.78L229.36 306.35L228.93 306.93L228.27 307.50L227.37 308.08L226.24 308.63L224.92 309.14L223.79 309.50L222.64 309.79L221.48 310.02L220.33 310.18L219.21 310.27L218.13 310.30L217.10 310.26L216.48 310.19L216.49 310.24ZM235.51 328.10L233.56 328.74L231.58 329.28L229.58 329.72L227.57 330.06L225.58 330.29L223.65 330.41L221.78 330.42L219.98 330.32L218.26 330.12L216.61 329.81L215.06 329.42L213.63 328.93L212.31 328.37L211.10 327.73L210.01 327.01L209.05 326.23L201.49 319.47L235.02 307.49L242.64 311.93L244.25 312.96L245.59 314.03L246.63 315.13L247.36 316.27L247.76 317.46L247.81 318.70L247.48 319.97L246.73 321.28L245.55 322.61L243.90 323.94L241.80 325.27L239.27 326.56L237.41 327.37L235.51 328.10ZM235.47 320.98L236.33 320.39L236.99 319.79L237.47 319.19L237.76 318.56L237.87 317.92L237.78 317.28L237.49 316.63L236.99 315.99L236.29 315.34L235.38 314.70L233.09 313.24L215.27 320.07L217.99 322.23L218.87 322.83L219.85 323.31L220.93 323.68L222.11 323.93L223.36 324.08L224.70 324.11L226.07 324.05L227.44 323.88L228.80 323.61L230.18 323.25L231.59 322.78L233.04 322.21L234.38 321.59L235.47 320.98Z" fill="#1a0408" stroke="#e0103a" stroke-width="1.1" fill-rule="evenodd"/><path d="M221.00 299.00L255.50 319.00L219.00 336.00L188.50 308.50Z" fill="none" stroke="#a01030" stroke-width="0.6"/><rect x="215.19" y="308.94" width="2.6" height="2.6" fill="#e0103a"/><rect x="193.41" y="312.71" width="2.6" height="2.6" fill="#e0103a"/><rect x="200.73" y="308.73" width="2.6" height="2.6" fill="#e0103a"/><rect x="207.30" y="308.74" width="2.6" height="2.6" fill="#e0103a"/><rect x="217.82" y="305.37" width="2.6" height="2.6" fill="#e0103a"/><rect x="217.40" y="302.87" width="2.6" height="2.6" fill="#e0103a"/><rect x="225.06" y="300.86" width="2.6" height="2.6" fill="#e0103a"/><rect x="216.83" y="309.00" width="2.6" height="2.6" fill="#e0103a"/><rect x="234.21" y="326.80" width="2.6" height="2.6" fill="#e0103a"/><rect x="226.27" y="328.76" width="2.6" height="2.6" fill="#e0103a"/><rect x="218.68" y="329.02" width="2.6" height="2.6" fill="#e0103a"/><rect x="212.33" y="327.63" width="2.6" height="2.6" fill="#e0103a"/><rect x="207.75" y="324.93" width="2.6" height="2.6" fill="#e0103a"/><rect x="242.95" y="311.66" width="2.6" height="2.6" fill="#e0103a"/><rect x="246.46" y="316.16" width="2.6" height="2.6" fill="#e0103a"/><rect x="244.25" y="321.31" width="2.6" height="2.6" fill="#e0103a"/><rect x="236.11" y="326.07" width="2.6" height="2.6" fill="#e0103a"/><rect x="234.17" y="319.68" width="2.6" height="2.6" fill="#e0103a"/><rect x="236.46" y="317.26" width="2.6" height="2.6" fill="#e0103a"/><rect x="235.69" y="314.69" width="2.6" height="2.6" fill="#e0103a"/><rect x="213.97" y="318.77" width="2.6" height="2.6" fill="#e0103a"/><rect x="219.63" y="322.38" width="2.6" height="2.6" fill="#e0103a"/><rect x="224.77" y="322.75" width="2.6" height="2.6" fill="#e0103a"/><rect x="230.29" y="321.48" width="2.6" height="2.6" fill="#e0103a"/><rect x="219.50" y="297.50" width="3" height="3" fill="#e0103a"/><rect x="254.00" y="317.50" width="3" height="3" fill="#e0103a"/><rect x="217.50" y="334.50" width="3" height="3" fill="#e0103a"/><rect x="187.00" y="307.00" width="3" height="3" fill="#e0103a"/><path d="M264.8 330.2 L277.8 322.7 L290.8 330.2" stroke="#888" stroke-width="0.6" fill="none"/><circle cx="264.8" cy="330.2" r="2.2" fill="#6a6a6a"/><circle cx="290.8" cy="330.2" r="2.2" fill="#6a6a6a"/><circle cx="277.8" cy="337.5" r="2.2" fill="#6a6a6a"/></g></svg><div style="left:1px;top:40px;width:23.5px;height:382px;background:#3b3b3b;"></div><div style="left:24.5px;top:58px;width:1px;height:356px;background:#2f2f2f;"></div><div style="left:1px;top:40px;width:23.5px;height:10px;background:#333;"></div><div style="left:4.4px;top:313.8px;width:15.3px;height:12.7px;background:#262626;"></div><svg style="left:1px;top:0" width="24" height="424" viewBox="1 0 24 424"><defs><linearGradient id="tg"><stop offset="0" stop-color="#eee"/><stop offset="1" stop-color="#222"/></linearGradient></defs><path d="M9 61.5 L15.5 67.5 L12 68 L10 71.5 Z" fill="none" stroke="#c4c4c4" stroke-width="0.9"/><path d="M9 75.7 L15.5 81.7 L12 82.2 L10 85.7 Z" fill="#c4c4c4"/><rect x="17" y="84.2" width="1.2" height="1.2" fill="#999"/><path d="M8 99.4 L9.5 94.9 L14 90.4 L16.5 92.9 L12 97.4 Z" fill="#c4c4c4"/><circle cx="11.5" cy="95.7" r="0.9" fill="#3b3b3b"/><rect x="17" y="98.4" width="1.2" height="1.2" fill="#999"/><path d="M8 113.6 L9.5 109.1 L14 104.6 L16.5 107.1 L12 111.6 Z" fill="#c4c4c4"/><circle cx="11.5" cy="109.9" r="0.9" fill="#3b3b3b"/><rect x="17" y="112.6" width="1.2" height="1.2" fill="#999"/><path d="M7 114.1 Q5 110.1 8 108.1" stroke="#c4c4c4" fill="none" stroke-width="0.8"/><rect x="7" y="118.4" width="9.5" height="7.5" fill="#555" stroke="#c4c4c4" stroke-width="0.9"/><rect x="17" y="125.9" width="1.2" height="1.2" fill="#999"/><path d="M7.5 141.6 Q8 138.6 10 138.6 L16 132.1 L16.8 132.9 L11 139.6 Q10 141.6 7.5 141.6Z" fill="#c4c4c4"/><text x="7.5" y="155.6" font-family="Liberation Serif" font-weight="bold" font-size="12" fill="#c4c4c4">T</text><path d="M8 164 A4.5 4.5 0 1 1 10 169" stroke="#c4c4c4" fill="none" stroke-width="1"/><path d="M6.5 162 L8 166 L10.5 163Z" fill="#c4c4c4"/><path d="M7 181.2 L12 175.2 L16.5 179.2 L11.5 184.2 Z" fill="#c4c4c4"/><path d="M9.5 178.2 L14 182.2" stroke="#3b3b3b" stroke-width="0.8"/><ellipse cx="11" cy="192.4" rx="4.5" ry="3" fill="none" stroke="#c4c4c4" stroke-width="0.9"/><path d="M12 193.4 L16.5 197.4 L14 197.6 L13 199.4Z" fill="#c4c4c4"/><rect x="7.5" y="203.6" width="9" height="8" fill="url(#tg)" stroke="#aaa" stroke-width="0.6"/><path d="M7.5 226.8 L8.5 224.3 L14 218.8 L16 220.8 L10.5 226.3Z" fill="none" stroke="#c4c4c4" stroke-width="0.9"/><circle cx="15.5" cy="218.3" r="1.6" fill="#c4c4c4"/><path d="M7.5 234 L11 237 L9 239 L13 240 L16 237" stroke="#c4c4c4" fill="none" stroke-width="1.2"/><path d="M12 232 L16 235" stroke="#c4c4c4" stroke-width="1.2"/><path d="M7.5 248.1 L11 251.1 L9 253.1 L13 254.1 L16 251.1" stroke="#c4c4c4" fill="none" stroke-width="1.2"/><path d="M12 246.1 L16 249.1" stroke="#c4c4c4" stroke-width="1.2"/><circle cx="10" cy="262.4" r="3" fill="none" stroke="#c4c4c4" stroke-width="0.9"/><circle cx="14" cy="265.4" r="3" fill="none" stroke="#c4c4c4" stroke-width="0.9"/><path d="M9 272.9 L9 280.9 L17 280.9 M7 274.9 L15 274.9 L15 282.9" stroke="#c4c4c4" fill="none" stroke-width="0.9"/><rect x="7.5" y="286.5" width="1" height="10" fill="#c4c4c4"/><rect x="9.5" y="288" width="5" height="2.5" fill="#c4c4c4"/><rect x="9.5" y="292.5" width="7" height="2.5" fill="#c4c4c4"/><path d="M7.5 301.6 L7.5 310.6 L16.5 310.6 Z M7.5 304.6 L13.5 307.6 M11 305.1 L11 310.6" stroke="#c4c4c4" fill="none" stroke-width="0.8"/><path d="M7 315.2 L12 320.2 L9.5 320.5 L8 323.2Z" fill="#c4c4c4"/><circle cx="14" cy="322.2" r="3" fill="#aaa"/><path d="M14 319.2 L14 322.2 L11.5 323.7 M14 322.2 L16.5 323.7" stroke="#3b3b3b" stroke-width="0.6"/><circle cx="8" cy="335" r="2.8" fill="#ddd"/><path d="M14 333 Q17 333 17 337" stroke="#bbb" fill="none"/><rect x="4.5" y="343.7" width="9.5" height="9.5" fill="#000" stroke="#bbb" stroke-width="1"/><rect x="10" y="350" width="9" height="9" fill="#fff"/><path d="M10.5 358.5 L18.5 350.5" stroke="#c0103a" stroke-width="1.4"/><rect x="4" y="365" width="4.5" height="4" fill="#000"/><rect x="9.5" y="365" width="2.5" height="4" fill="#ddd"/><rect x="13.5" y="365" width="4.5" height="4" fill="#fff"/><path d="M13.5 369 L18 365" stroke="#c0103a"/><circle cx="11" cy="376.5" r="2.6" fill="#999"/><circle cx="12.5" cy="378" r="2.2" fill="#bbb"/><rect x="6" y="388" width="9" height="6" fill="none" stroke="#aaa"/><rect x="9" y="386" width="9" height="6" fill="#3b3b3b" stroke="#aaa"/><g fill="#ccc"><circle cx="7.5" cy="411.4" r="1.1"/><circle cx="11" cy="411.4" r="1.1"/><circle cx="14.5" cy="411.4" r="1.1"/></g></svg><svg style="left:40.6px;top:73.3px" width="30" height="30" viewBox="-15 -15 30 30"><path d="M-14 -13.5 L0 -13.5 A14 14 0 1 1 -14 0 Z" fill="#262626"/><circle r="11" fill="#d2d2d2"/><path d="M0 -6.8 L0 0 L-6 3.4 L-6 -3.4Z" fill="#e8eeea"/><path d="M0 -6.8 L6 -3.4 L6 3.4 L0 0Z" fill="#b8b8b8"/><path d="M0 0 L6 3.4 L0 6.8 L-6 3.4Z" fill="#6ab890"/><path d="M0 -6.8 L6 -3.4 L6 3.4 L0 6.8 L-6 3.4 L-6 -3.4Z M0 0 L0 -6.8 M0 0 L-6 3.4 M0 0 L6 3.4" fill="none" stroke="#1a1a1a" stroke-width="0.9"/><rect x="-12.3" y="-12.3" width="2.6" height="2.6" fill="#eee"/></svg><div style="left:25.5px;top:399.5px;width:469px;height:15px;background:#3a3a3a;"></div><div style="left:25.5px;top:414.5px;width:469px;height:8px;background:#363636;"></div><div class="t" style="left:28px;top:403.2px;width:8px;height:8px;border-radius:50%;background:#cfcfcf;color:#3a3a3a;font-size:6.5px;line-height:8px;text-align:center;font-weight:bold">?</div><div class="t" style="left:42.6px;top:403.31px;font-size:6.65px;line-height:7.98px;color:#c4c4c4;font-weight:normal;"><b>Faites glisser</b> les objets pour les déplacer, les redimensionner et les dupliquer dans la grille de perspective</div><div class="t" style="left:29px;top:416.08px;font-size:6.2px;line-height:7.44px;color:#d0d0d0;font-weight:bold;">44,42%</div><div class="t" style="left:58px;top:416px;font-size:5.5px;line-height:6.6px;color:#aaa;font-weight:normal;">⌄</div><div style="left:71px;top:415px;width:35px;height:7px;background:#303030;"></div><div class="t" style="left:72px;top:416.08px;font-size:6.2px;line-height:7.44px;color:#d0d0d0;font-weight:normal;">0°</div><div class="t" style="left:102px;top:416px;font-size:5.5px;line-height:6.6px;color:#aaa;font-weight:normal;">⌄</div><div style="left:136px;top:415px;width:23px;height:7px;background:#303030;"></div><div class="t" style="left:138px;top:416.08px;font-size:6.2px;line-height:7.44px;color:#d0d0d0;font-weight:normal;">1</div><div class="t" style="left:161px;top:416px;font-size:5.5px;line-height:6.6px;color:#aaa;font-weight:normal;">⌄</div><div class="t" style="left:183.5px;top:416.08px;font-size:6.2px;line-height:7.44px;color:#c8c8c8;font-weight:normal;width:140px;text-align:center">Sélection d'une perspective</div><div class="t" style="left:313px;top:416.2px;font-size:6px;line-height:7.2px;color:#aaa;font-weight:normal;">▸</div><div style="left:494.5px;top:103px;width:142px;height:311px;background:#3c3c3c;border-left:1px solid #2a2a2a;border-top:1px solid #2a2a2a;box-sizing:border-box"></div><div style="left:495.5px;top:105px;width:141px;height:15.3px;background:#333;"></div><div style="left:495.5px;top:105px;width:33.5px;height:15.3px;background:#3c3c3c;"></div><div class="t" style="left:500.4px;top:108.54px;font-size:6.6px;line-height:7.92px;color:#e6e6e6;font-weight:bold;">Calques</div><div class="t" style="left:534.7px;top:108.54px;font-size:6.6px;line-height:7.92px;color:#a8a8a8;font-weight:normal;">Plans de travail</div><div class="t" style="left:612px;top:108.3px;font-size:7px;line-height:8.4px;color:#888;font-weight:normal;">››</div><div style="left:628px;top:109.5px;width:6px;height:6px;background:#666;"></div><div style="left:503px;top:128px;width:113px;height:11.8px;background:#2e2e2e;"></div><svg style="left:504px;top:129px" width="10" height="10"><circle cx="4" cy="4.3" r="2.6" fill="none" stroke="#aaa" stroke-width="1"/><path d="M6 6.3 L8 8.5" stroke="#aaa"/></svg><div class="t" style="left:520px;top:130.28px;font-size:6.2px;line-height:7.44px;color:#a0a0a0;font-weight:normal;"><i>Rechercher dans tout</i></div><svg style="left:622px;top:128px" width="10" height="10"><path d="M0.5 1 L8.5 1 L5.5 5 L5.5 9 L3.5 8 L3.5 5 Z" fill="#bbb"/></svg><div style="left:496.5px;top:145.8px;width:137px;height:12.4px;background:#2d4766;"></div><svg style="left:500px;top:149px" width="9" height="6"><path d="M0.5 3 Q4.5 -1 8.5 3 Q4.5 7 0.5 3Z" fill="none" stroke="#aaa" stroke-width="0.8"/><circle cx="4.5" cy="3" r="1.2" fill="#aaa"/></svg><div style="left:523.5px;top:145.8px;width:2.5px;height:12.4px;background:#c8153c;"></div><div class="t" style="left:531.5px;top:148.4px;font-size:6px;line-height:7.2px;color:#aaa;font-weight:normal;">⌄</div><div style="left:541px;top:147.2px;width:10.4px;height:9.6px;background:#f2f2f2;border:0.6px solid #222;box-sizing:border-box"></div><div class="t" style="left:555px;top:148.16px;font-size:6.4px;line-height:7.68px;color:#a8c8f0;font-weight:normal;">Texte</div><div style="left:616px;top:149.4px;width:5.2px;height:5.2px;border-radius:50%;border:0.8px solid #aaa;box-sizing:border-box"></div><svg style="left:500px;top:161.4px" width="9" height="6"><path d="M0.5 3 Q4.5 -1 8.5 3 Q4.5 7 0.5 3Z" fill="none" stroke="#aaa" stroke-width="0.8"/><circle cx="4.5" cy="3" r="1.2" fill="#aaa"/></svg><div style="left:523.5px;top:158.2px;width:2.5px;height:12.4px;background:#c8153c;"></div><div style="left:555px;top:159.6px;width:10px;height:9.6px;background:#f2f2f2;border:0.6px solid #222;box-sizing:border-box"></div><div style="left:556px;top:162.9px;width:8px;height:3px;background:#111;"></div><div class="t" style="left:568px;top:160.56px;font-size:6.4px;line-height:7.68px;color:#d0d0d0;font-weight:normal;">Texte ...</div><div style="left:616px;top:161.8px;width:5.2px;height:5.2px;border-radius:50%;border:0.8px solid #aaa;box-sizing:border-box"></div><svg style="left:500px;top:173.8px" width="9" height="6"><path d="M0.5 3 Q4.5 -1 8.5 3 Q4.5 7 0.5 3Z" fill="none" stroke="#aaa" stroke-width="0.8"/><circle cx="4.5" cy="3" r="1.2" fill="#aaa"/></svg><div style="left:523.5px;top:170.6px;width:2.5px;height:12.4px;background:#c8153c;"></div><div style="left:555px;top:172px;width:10px;height:9.6px;background:#f2f2f2;border:0.6px solid #222;box-sizing:border-box"></div><div style="left:556px;top:175.3px;width:8px;height:3px;background:#111;"></div><div class="t" style="left:568px;top:172.96px;font-size:6.4px;line-height:7.68px;color:#d0d0d0;font-weight:normal;">Texte ...</div><div style="left:616px;top:174.2px;width:5.2px;height:5.2px;border-radius:50%;border:0.8px solid #aaa;box-sizing:border-box"></div><svg style="left:500px;top:186.2px" width="9" height="6"><path d="M0.5 3 Q4.5 -1 8.5 3 Q4.5 7 0.5 3Z" fill="none" stroke="#aaa" stroke-width="0.8"/><circle cx="4.5" cy="3" r="1.2" fill="#aaa"/></svg><div style="left:523.5px;top:183px;width:2.5px;height:12.4px;background:#c8153c;"></div><div style="left:555px;top:184.4px;width:10px;height:9.6px;background:#f2f2f2;border:0.6px solid #222;box-sizing:border-box"></div><div style="left:556px;top:187.7px;width:8px;height:3px;background:#111;"></div><div class="t" style="left:568px;top:185.36px;font-size:6.4px;line-height:7.68px;color:#d0d0d0;font-weight:normal;">Texte ...</div><div style="left:616px;top:186.6px;width:5.2px;height:5.2px;border-radius:50%;border:0.8px solid #aaa;box-sizing:border-box"></div><svg style="left:500px;top:198.6px" width="9" height="6"><path d="M0.5 3 Q4.5 -1 8.5 3 Q4.5 7 0.5 3Z" fill="none" stroke="#aaa" stroke-width="0.8"/><circle cx="4.5" cy="3" r="1.2" fill="#aaa"/></svg><div style="left:523.5px;top:195.4px;width:2.5px;height:12.4px;background:#3a5fd0;"></div><div style="left:541px;top:196.8px;width:10.4px;height:9.6px;background:#f2f2f2;border:0.6px solid #222;box-sizing:border-box"></div><div class="t" style="left:555px;top:197.76px;font-size:6.4px;line-height:7.68px;color:#d0d0d0;font-weight:normal;">Grille</div><div style="left:616px;top:199px;width:5.2px;height:5.2px;border-radius:50%;border:0.8px solid #aaa;box-sizing:border-box"></div><div style="left:495.5px;top:401px;width:141px;height:13px;background:#3c3c3c;"></div><div class="t" style="left:503px;top:404.96px;font-size:6.4px;line-height:7.68px;color:#c8c8c8;font-weight:normal;">2 Ca...</div><svg style="left:520px;top:403px" width="115" height="11"><g fill="none" stroke="#aaa" stroke-width="0.9"><rect x="10" y="2" width="7" height="7"/><rect x="70" y="2" width="8" height="6"/><rect x="85" y="2" width="7" height="7"/><path d="M100 3 L107 3 L106 10 L101 10Z"/></g><g fill="none" stroke="#666" stroke-width="0.9"><rect x="25" y="2" width="7" height="7"/><circle cx="43" cy="5" r="3"/><path d="M55 2 L58 9"/></g></svg><div style="left:637px;top:40px;width:117px;height:382px;background:#2e2e2e;"></div><div style="left:638px;top:48px;width:116px;height:374px;background:#3c3c3c;"></div><div style="left:638px;top:88px;width:116px;height:2px;background:#333;"></div><div style="left:638px;top:262px;width:116px;height:2px;background:#333;"></div><div style="left:638px;top:320px;width:116px;height:2px;background:#333;"></div><div style="left:638px;top:376px;width:116px;height:2px;background:#333;"></div><div style="left:641px;top:382.7px;width:110px;height:11.7px;background:#262626;"></div><div class="t" style="left:660px;top:58.59px;font-size:6.35px;line-height:7.62px;color:#dcdcdc;font-weight:bold;">Propriétés</div><div class="t" style="left:660px;top:75.09px;font-size:6.35px;line-height:7.62px;color:#dcdcdc;font-weight:bold;">Alignement</div><div class="t" style="left:660px;top:99.19px;font-size:6.35px;line-height:7.62px;color:#dcdcdc;font-weight:bold;">Transformation</div><div class="t" style="left:660px;top:115.69px;font-size:6.35px;line-height:7.62px;color:#dcdcdc;font-weight:bold;">Pathfinder</div><div class="t" style="left:660px;top:132.29px;font-size:6.35px;line-height:7.62px;color:#dcdcdc;font-weight:bold;">Nuancier</div><div class="t" style="left:660px;top:148.79px;font-size:6.35px;line-height:7.62px;color:#dcdcdc;font-weight:bold;">Contour</div><div class="t" style="left:660px;top:165.29px;font-size:6.35px;line-height:7.62px;color:#dcdcdc;font-weight:bold;">Formes</div><div class="t" style="left:660px;top:181.79px;font-size:6.35px;line-height:7.62px;color:#dcdcdc;font-weight:bold;">Symboles</div><div class="t" style="left:660px;top:198.29px;font-size:6.35px;line-height:7.62px;color:#dcdcdc;font-weight:bold;">Dégradé</div><div class="t" style="left:660px;top:214.79px;font-size:6.35px;line-height:7.62px;color:#dcdcdc;font-weight:bold;">Transparence</div><div class="t" style="left:660px;top:231.29px;font-size:6.35px;line-height:7.62px;color:#dcdcdc;font-weight:bold;">Couleur</div><div class="t" style="left:660px;top:247.79px;font-size:6.35px;line-height:7.62px;color:#dcdcdc;font-weight:bold;">Guide des couleurs</div><div class="t" style="left:660px;top:271.89px;font-size:6.35px;line-height:7.62px;color:#dcdcdc;font-weight:bold;">Liens</div><div class="t" style="left:660px;top:288.39px;font-size:6.35px;line-height:7.62px;color:#dcdcdc;font-weight:bold;">Bibliothèques</div><div class="t" style="left:660px;top:304.89px;font-size:6.35px;line-height:7.62px;color:#dcdcdc;font-weight:bold;">Informations sur le docum...</div><div class="t" style="left:660px;top:328.99px;font-size:6.35px;line-height:7.62px;color:#dcdcdc;font-weight:bold;">Variables</div><div class="t" style="left:660px;top:345.49px;font-size:6.35px;line-height:7.62px;color:#dcdcdc;font-weight:bold;">Aspect</div><div class="t" style="left:660px;top:361.99px;font-size:6.35px;line-height:7.62px;color:#dcdcdc;font-weight:bold;">Exportation de ressources</div><div class="t" style="left:660px;top:385.79px;font-size:6.35px;line-height:7.62px;color:#dcdcdc;font-weight:bold;">Calques</div><div class="t" style="left:660px;top:402.54px;font-size:6.6px;line-height:7.92px;color:#9a9a9a;font-weight:bold;">Plans de travail</div><svg style="left:0;top:0" width="755" height="424"><g stroke="#c4c4c4" stroke-width="0.8" fill="none"><path d="M644 59.2h9M644 61.7h9M644 64.2h9"/><circle cx="647" cy="59.2" r="1.1" fill="#3c3c3c"/><circle cx="650" cy="61.7" r="1.1" fill="#3c3c3c"/><circle cx="647" cy="64.2" r="1.1" fill="#3c3c3c"/></g><g fill="#c4c4c4"><rect x="644" y="73.7" width="1" height="9"/><rect x="645.5" y="75.2" width="4" height="2.5"/><rect x="645.5" y="78.7" width="8" height="2.5"/></g><g fill="none" stroke="#c4c4c4" stroke-width="0.8" stroke-dasharray="1.2 1"><rect x="645" y="98.8" width="7.5" height="7.5"/></g><g fill="#c4c4c4"><rect x="644" y="97.8" width="2" height="2"/><rect x="651.5" y="97.8" width="2" height="2"/><rect x="644" y="105.3" width="2" height="2"/><rect x="651.5" y="105.3" width="2" height="2"/></g><rect x="644" y="114.8" width="5.5" height="5" fill="#c4c4c4"/><rect x="647.5" y="117.8" width="5.5" height="5" fill="#999" stroke="#3c3c3c" stroke-width="0.6"/><rect x="644" y="131.9" width="9.5" height="7" fill="#888"/><g fill="#bbb"><rect x="645" y="132.70000000000002" width="2.2" height="2.4"/><rect x="647.8" y="132.70000000000002" width="2.2" height="2.4"/><rect x="650.6" y="132.70000000000002" width="2.2" height="2.4"/><rect x="645" y="135.9" width="2.2" height="2.4"/></g><g fill="#c4c4c4"><rect x="644" y="148.4" width="9.5" height="1.1"/><rect x="644" y="151.20000000000002" width="9.5" height="1.3"/><rect x="644" y="154.20000000000002" width="9.5" height="1.6"/></g><g fill="#c4c4c4"><rect x="646.5" y="168.4" width="4" height="4.5"/><path d="M647 168.4 L645 163.9 L648 167.4Z M649 168.4 L648.5 163.4 L650 167.9Z M650 168.4 L652.5 164.9 L651 168.4Z"/></g><g fill="#c4c4c4"><circle cx="648.5" cy="182.70000000000002" r="2"/><circle cx="646.3" cy="185.4" r="2"/><circle cx="650.7" cy="185.4" r="2"/><path d="M648 184.9 L647 188.9 L650 188.9 L649 184.9Z"/></g><defs><linearGradient id="gd"><stop offset="0" stop-color="#222"/><stop offset="1" stop-color="#eee"/></linearGradient></defs><rect x="644" y="197.9" width="9.5" height="7.5" fill="url(#gd)" stroke="#aaa" stroke-width="0.5"/><circle cx="647.5" cy="217.1" r="3.3" fill="#bbb"/><circle cx="649.8" cy="218.9" r="3.3" fill="#777" stroke="#aaa" stroke-width="0.5"/><ellipse cx="648.8" cy="234.9" rx="4.8" ry="3.5" fill="none" stroke="#c4c4c4" stroke-width="1"/><g fill="#c4c4c4"><circle cx="647" cy="233.9" r="0.9"/><circle cx="650" cy="233.4" r="0.9"/></g><path d="M644 255.4 L644 246.9 Q652 248.9 653.5 255.4Z" fill="#999" stroke="#ccc" stroke-width="0.6"/><g fill="none" stroke="#c4c4c4" stroke-width="1"><rect x="644" y="273" width="5.5" height="4" rx="2"/><rect x="648" y="273" width="5.5" height="4" rx="2"/></g><rect x="644.5" y="287.0" width="8" height="9.5" fill="none" stroke="#c4c4c4" stroke-width="1"/><rect x="647.5" y="287.0" width="2" height="4" fill="#c4c4c4"/><rect x="644.5" y="303.5" width="8" height="9.5" fill="#aaa"/><circle cx="648.5" cy="309" r="2.3" fill="#3c3c3c"/><rect x="648" y="308" width="1" height="2.5" fill="#ccc"/><circle cx="647" cy="333.6" r="2.6" fill="none" stroke="#c4c4c4" stroke-width="1.2"/><circle cx="651.5" cy="329.6" r="1.8" fill="none" stroke="#c4c4c4" stroke-width="0.9"/><circle cx="648.5" cy="348.6" r="3.8" fill="#aaa"/><path d="M649 361.1 L644 361.1 L644 370.1 L653 370.1 L653 365.1" fill="none" stroke="#c4c4c4" stroke-width="1"/><path d="M648 366.1 L653 361.1 M650 361.1 L653 361.1 L653 364.1" stroke="#c4c4c4" stroke-width="1" fill="none"/><path d="M648.7 384.9 L653.5 387.59999999999997 L648.7 390.29999999999995 L644 387.59999999999997Z" fill="#c4c4c4"/><path d="M644 389.9 L648.7 392.59999999999997 L653.5 389.9" fill="none" stroke="#c4c4c4" stroke-width="1.2"/><rect x="645" y="401.5" width="6" height="5" fill="none" stroke="#aaa" stroke-width="0.9"/><rect x="648" y="404.5" width="6" height="5" fill="#555" stroke="#aaa" stroke-width="0.9"/></svg><div class="t" style="left:654.5px;top:399.68px;font-size:12.2px;line-height:14.64px;color:#f4f4f4;font-weight:normal;letter-spacing:-0.35px;text-shadow:0 0 1px #000">Linked<span style="display:inline-block;background:#fff;color:#3c3c3c;padding:0 1px;line-height:10px">in</span> Learning</div><svg style="left:224.5px;top:331px" width="10" height="12"><path d="M0.5 0.5 L0.5 9.5 L3 7 L5 11 L6.5 10.3 L4.6 6.4 L8 6.4 Z" fill="#111" stroke="#eee" stroke-width="0.5"/></svg></div><div class="tile" style="left:766px;top:1009px"><div style="left:1px;top:1px;width:753px;height:422px;background:#474747;"></div><div style="left:1px;top:1px;width:753px;height:19px;background:#3c3c3c;"></div><div style="left:1px;top:19px;width:753px;height:1px;background:#333;"></div><div style="left:5.7px;top:7.4px;width:6.6px;height:6.6px;border-radius:50%;background:#e0395a"></div><div style="left:17.5px;top:7.4px;width:6.6px;height:6.6px;border-radius:50%;background:#f0b030"></div><div style="left:29.3px;top:7.4px;width:6.6px;height:6.6px;border-radius:50%;background:#2ec43c"></div><svg style="left:45px;top:6px" width="11" height="10" viewBox="0 0 11 10"><path d="M5.5 0.5 L10.5 5 L9 5 L9 9.5 L6.5 9.5 L6.5 6.5 L4.5 6.5 L4.5 9.5 L2 9.5 L2 5 L0.5 5 Z" fill="#c8c8c8"/></svg><div class="t" style="left:326.5px;top:6.32px;font-size:7.8px;line-height:9.36px;color:#d0d0d0;font-weight:normal;letter-spacing:0.18px">Adobe Illustrator 2025</div><div class="t" style="left:627px;top:3.9px;width:40px;height:13.9px;border-radius:7px;background:#1d5fd6;color:#fff;font-size:7.2px;line-height:13.9px;text-align:center;font-weight:bold">Partager</div><svg style="left:674px;top:4px" width="40" height="13" viewBox="0 0 40 13"><path d="M4 2.5 Q7.5 2.5 7.5 7 L8.5 9.5 L-0.5 9.5 L0.5 7 Q0.5 2.5 4 2.5Z" fill="#bcbcbc"/><circle cx="7.5" cy="2" r="1.6" fill="#2a7de0"/><circle cx="22.5" cy="5.5" r="3.2" fill="none" stroke="#c8c8c8" stroke-width="1.2"/><path d="M24.8 7.8 L27 10" stroke="#c8c8c8" stroke-width="1.3"/></svg><div style="left:718.5px;top:6.5px;width:10px;height:7px;background:#c8c8c8;"></div><div style="left:723px;top:6.5px;width:1px;height:7px;background:#3c3c3c;"></div><div style="left:723px;top:9.5px;width:6px;height:1px;background:#3c3c3c;"></div><div style="left:739.5px;top:6px;width:10px;height:8px;background:transparent;border:1px solid #b8b8b8;box-sizing:border-box"></div><div style="left:749px;top:1.5px;width:4px;height:4px;border-radius:50%;background:#d08a30"></div><div style="left:1px;top:20px;width:753px;height:20px;background:#3c3c3c;"></div><div class="t" style="left:8.7px;top:26.54px;font-size:6.6px;line-height:7.92px;color:#b0b0b0;font-weight:normal;">Tracé</div><div style="left:65.3px;top:24.9px;width:11.8px;height:11.7px;background:#c8a0e0;border:1px solid #9a9a9a;box-sizing:border-box"></div><div class="t" style="left:81px;top:26.4px;font-size:6px;line-height:7.2px;color:#b0b0b0;font-weight:normal;">⌄</div><div style="left:91.3px;top:24.9px;width:11.5px;height:11.7px;background:#fff;"></div><svg style="left:91.3px;top:24.9px" width="11.5" height="11.7"><path d="M1 10.7 L10.5 1" stroke="#c0103a" stroke-width="1.4"/></svg><div class="t" style="left:107px;top:26.4px;font-size:6px;line-height:7.2px;color:#b0b0b0;font-weight:normal;">⌄</div><div class="t" style="left:120.2px;top:27.04px;font-size:6.6px;line-height:7.92px;color:#c8c8c8;font-weight:bold;text-decoration:underline;text-decoration-color:#777">Contour :</div><div class="t" style="left:155px;top:26.8px;font-size:7px;line-height:8.4px;color:#a0a0a0;font-weight:normal;">⇕</div><div style="left:162.9px;top:24px;width:28.5px;height:12.5px;background:#2e2e2e;"></div><div class="t" style="left:195px;top:26.4px;font-size:6px;line-height:7.2px;color:#b0b0b0;font-weight:normal;">⌄</div><div style="left:206px;top:24.5px;width:53.3px;height:12px;background:#6a6a6a;"></div><div style="left:273.8px;top:24.9px;width:51.1px;height:11.1px;background:#e4e4e4;"></div><div style="left:277px;top:30px;width:16px;height:1.6px;background:#000;"></div><div class="t" style="left:298px;top:26.54px;font-size:6.6px;line-height:7.92px;color:#111;font-weight:bold;">De base</div><div class="t" style="left:327px;top:26.4px;font-size:6px;line-height:7.2px;color:#b0b0b0;font-weight:normal;">⌄</div><div class="t" style="left:339.6px;top:26.54px;font-size:6.6px;line-height:7.92px;color:#c8c8c8;font-weight:bold;text-decoration:underline;text-decoration-color:#777">Opacité :</div><div style="left:370px;top:24.5px;width:32.5px;height:12px;background:#333;"></div><div class="t" style="left:371.5px;top:26.54px;font-size:6.6px;line-height:7.92px;color:#d8d8d8;font-weight:bold;">100%</div><div class="t" style="left:406.5px;top:25.7px;font-size:8px;line-height:9.6px;color:#b0b0b0;font-weight:normal;">›</div><div class="t" style="left:417.8px;top:27.04px;font-size:6.6px;line-height:7.92px;color:#a8a8a8;font-weight:normal;">Style :</div><div style="left:438.9px;top:24.9px;width:11.1px;height:11.1px;background:#dedede;"></div><div class="t" style="left:454px;top:26.4px;font-size:6px;line-height:7.2px;color:#b0b0b0;font-weight:normal;">⌄</div><svg style="left:470px;top:25px" width="12" height="12"><circle cx="5.5" cy="5.5" r="4.6" fill="#888" stroke="#ccc" stroke-width="0.8"/></svg><div class="t" style="left:492px;top:26.54px;font-size:6.6px;line-height:7.92px;color:#d8d8d8;font-weight:bold;text-decoration:underline;text-decoration-color:#777">Alignement</div><div class="t" style="left:533px;top:26.54px;font-size:6.6px;line-height:7.92px;color:#d8d8d8;font-weight:bold;text-decoration:underline;text-decoration-color:#777">Transformation</div><svg style="left:586px;top:24px" width="60" height="14"><g stroke="#ccc" stroke-width="1" fill="none"><path d="M2 2 L2 5 M2 2 L5 2 M13 2 L10 2 M13 2 L13 5 M2 12 L2 9 M2 12 L5 12 M13 12 L10 12 M13 12 L13 9"/><rect x="4.5" y="4.5" width="6" height="5"/><rect x="18.5" y="2.5" width="6" height="6"/></g><path d="M22 6 L27 11 L24 11Z" fill="#ccc"/><path d="M31 5 L33 7 L35 5" stroke="#aaa" fill="none"/><rect x="50" y="3" width="8" height="8" fill="#6a7ab0" stroke="#ccc" stroke-width="0.8"/></svg><svg style="left:592px;top:24px" width="160" height="14" viewBox="0 0 160 14"><g fill="#bbb"><rect x="102" y="2" width="2.2" height="2.2"/><rect x="107" y="2" width="2.2" height="2.2"/><rect x="102" y="9" width="2.2" height="2.2"/><rect x="107" y="9" width="2.2" height="2.2"/></g><rect x="116.5" y="1.5" width="2" height="11" fill="#bbb"/><path d="M120 4.5 L124 4.5 Q126 4.5 126 7 Q126 9.5 124 9.5 L120 9.5" stroke="#bbb" fill="none" stroke-width="1.2"/><g fill="#aaa"><rect x="145" y="3" width="8" height="1.2"/><rect x="145" y="6" width="8" height="1.2"/><rect x="145" y="9" width="8" height="1.2"/></g></svg><div style="left:1px;top:40px;width:753px;height:18px;background:#2e2e2e;"></div><div style="left:25.7px;top:40px;width:124.3px;height:18px;background:#383838;"></div><div class="t" style="left:30.5px;top:44.8px;font-size:7px;line-height:8.4px;color:#c0c0c0;font-weight:normal;">×</div><div class="t" style="left:38.8px;top:45.04px;font-size:6.6px;line-height:7.92px;color:#d8d8d8;font-weight:bold;">02_04.ai* @ 44,42 % (RVB/Aperçu)</div><div style="left:627px;top:58px;width:10px;height:45px;background:#3c3c3c;"></div><div style="left:627px;top:103px;width:1px;height:0px;background:#333;"></div><div style="left:134.3px;top:134.5px;width:288.3px;height:205.2px;background:#262626"></div><div style="left:134.8px;top:135px;width:286.8px;height:203.7px;background:#fff"></div><svg style="left:0;top:0" width="755" height="424"><defs><linearGradient id="wl" x1="115.6" y1="0" x2="278" y2="0" gradientUnits="userSpaceOnUse"><stop offset="0" stop-color="#1f7a48" stop-opacity="1"/><stop offset="0.12" stop-color="#5aac72" stop-opacity="0.75"/><stop offset="0.22" stop-color="#86c690" stop-opacity="0.5"/><stop offset="0.45" stop-color="#aedcb4" stop-opacity="0.3"/><stop offset="0.65" stop-color="#c4e6c8" stop-opacity="0.2"/><stop offset="1" stop-color="#c8e8d0" stop-opacity="0.1"/></linearGradient><linearGradient id="wr" x1="441.6" y1="0" x2="278" y2="0" gradientUnits="userSpaceOnUse"><stop offset="0" stop-color="#1f7a48" stop-opacity="1"/><stop offset="0.12" stop-color="#5aac72" stop-opacity="0.75"/><stop offset="0.22" stop-color="#86c690" stop-opacity="0.5"/><stop offset="0.45" stop-color="#aedcb4" stop-opacity="0.3"/><stop offset="0.65" stop-color="#c4e6c8" stop-opacity="0.2"/><stop offset="1" stop-color="#c8e8d0" stop-opacity="0.1"/></linearGradient><linearGradient id="pl" x1="0" y1="150" x2="0" y2="323" gradientUnits="userSpaceOnUse"><stop offset="0" stop-color="#ffffff" stop-opacity="0"/><stop offset="0.5" stop-color="#eef6fb" stop-opacity="0.3"/><stop offset="0.75" stop-color="#d8eef6" stop-opacity="0.7"/><stop offset="1" stop-color="#c4e8f2" stop-opacity="0.9"/></linearGradient><linearGradient id="pr" x1="0" y1="150" x2="0" y2="323" gradientUnits="userSpaceOnUse"><stop offset="0" stop-color="#ffffff" stop-opacity="0"/><stop offset="0.5" stop-color="#fdf4ea" stop-opacity="0.3"/><stop offset="0.75" stop-color="#f8ecd4" stop-opacity="0.7"/><stop offset="1" stop-color="#f4e2c4" stop-opacity="0.9"/></linearGradient><clipPath id="cv"><rect x="25" y="58" width="602" height="341"/></clipPath></defs><g clip-path="url(#cv)"><path d="M277.8 151.8 L218.7 182.92 L218.7 291.55 L277.8 322.7Z" fill="url(#pl)"/><path d="M277.8 151.8 L338.5 183.45 L338.5 291.02 L277.8 322.7Z" fill="url(#pr)"/><path d="M277.8 151.8 L146.8 220.77 L146.8 253.65 L277.8 322.7Z" fill="#c090e0" fill-opacity="1"/><path d="M277.8 151.8 L218.7 182.92 L218.7 291.55 L277.8 322.7Z" fill="#a890f0" fill-opacity="0.55"/><path d="M326.43 260.90L328.71 259.22L330.57 256.94L332.11 254.07L333.37 250.55L334.96 244.02L334.96 245.53L344.00 257.95L343.85 258.69L342.86 262.55L341.71 266.18L340.41 269.57L338.94 272.71L337.30 275.60L335.50 278.23L333.53 280.62L331.39 282.76L329.04 284.65L326.48 286.29L323.66 287.69L319.24 289.20L314.81 289.89L310.41 289.62L306.08 288.29L301.89 285.74L297.92 281.89L294.29 276.71L291.16 270.25L288.63 262.55L286.78 253.75L285.67 244.00L285.30 233.47L285.66 222.96L286.73 213.31L288.51 204.64L290.96 197.12L294.01 190.88L297.55 185.95L301.45 182.38L305.59 180.11L309.89 179.03L314.29 179.01L318.73 179.92L323.17 181.63L326.26 183.27L329.02 185.10L331.49 187.15L333.72 189.41L335.72 191.90L337.51 194.61L339.09 197.54L340.49 200.69L341.70 204.07L342.74 207.66L343.60 211.45L343.81 212.69L334.96 224.48L334.96 224.57L334.40 224.80L333.40 219.51L333.03 218.07L332.57 216.68L332.00 215.32L331.30 213.99L330.47 212.68L329.53 211.47L328.50 210.39L327.39 209.45L326.17 208.66L324.85 208.03L323.42 207.57L321.17 207.22L319.09 207.33L317.19 207.91L315.50 208.93L314.00 210.38L312.70 212.27L311.57 214.59L310.63 217.36L309.88 220.66L309.31 224.52L308.96 228.98L308.84 234.02L308.96 239.17L309.32 243.74L309.91 247.72L310.69 251.15L311.67 254.07L312.83 256.53L314.18 258.56L315.72 260.14L317.44 261.27L319.34 261.95L321.43 262.16L323.64 261.92L326.43 260.90ZM362.44 217.81L362.44 270.67L355.32 273.68L355.32 216.06L344.50 213.41L344.50 192.65L369.80 204.26L369.80 219.61L362.44 217.81ZM371.00 267.42L371.00 204.44L377.90 207.64L377.90 264.47L371.00 267.42ZM386.62 246.08L387.04 241.29L389.87 212.93L393.20 214.49L388.25 260.32L384.87 261.78L377.90 207.31L382.91 209.66L386.18 241.33L386.28 242.39L386.39 243.59L386.52 244.93L386.62 246.08ZM392.30 257.28L392.30 214.58L399.78 218.01L399.78 226.80L394.90 225.58L394.90 230.87L399.45 231.49L399.45 240.34L394.90 240.68L394.90 246.41L400.00 245.41L400.00 254.14L392.30 257.28Z" fill="#000" fill-rule="evenodd"/><path d="M271.83 319.55L266.37 322.2M266.28 316.63L253.99 322.2M261.12 313.91L241.6 322.2M256.29 311.36L229.22 322.2M251.78 308.98L216.83 322.2M247.55 306.75L204.45 322.2M243.57 304.66L192.06 322.2M239.82 302.68L179.68 322.2M236.29 300.82L167.29 322.2M232.95 299.06L154.9 322.2M229.8 297.4L142.52 322.2M226.8 295.82L130.13 322.2M223.96 294.32L117.75 322.2M221.27 292.9L105.36 322.2M218.7 291.55L92.98 322.2M283.99 319.47L289.57 322.2M289.72 316.48L302.29 322.2M295.06 313.69L315.01 322.2M300.03 311.1L327.73 322.2M304.67 308.67L340.45 322.2M309.02 306.4L353.18 322.2M313.1 304.27L365.9 322.2M316.94 302.27L378.62 322.2M320.56 300.38L391.34 322.2M323.97 298.6L404.06 322.2M327.19 296.92L416.78 322.2M330.25 295.32L429.5 322.2M333.14 293.81L442.22 322.2M335.89 292.38L454.94 322.2M338.5 291.02L467.66 322.2" stroke="#7a9488" stroke-opacity="0.7" stroke-width="0.6" fill="none"/><path d="M115.6 237.2 L277.8 322.7 L277.8 277.5 Z" fill="url(#wl)"/><path d="M441.6 237.2 L277.8 322.7 L277.8 277.5 Z" fill="url(#wr)"/><path d="M115.6 237.2L277.8 280.51M441.6 237.2L277.8 280.51M115.6 237.2L277.8 283.53M441.6 237.2L277.8 283.53M115.6 237.2L277.8 286.54M441.6 237.2L277.8 286.54M115.6 237.2L277.8 289.55M441.6 237.2L277.8 289.55M115.6 237.2L277.8 292.57M441.6 237.2L277.8 292.57M115.6 237.2L277.8 295.58M441.6 237.2L277.8 295.58M115.6 237.2L277.8 298.59M441.6 237.2L277.8 298.59M115.6 237.2L277.8 301.61M441.6 237.2L277.8 301.61M115.6 237.2L277.8 304.62M441.6 237.2L277.8 304.62M115.6 237.2L277.8 307.63M441.6 237.2L277.8 307.63M115.6 237.2L277.8 310.65M441.6 237.2L277.8 310.65M115.6 237.2L277.8 313.66M441.6 237.2L277.8 313.66M115.6 237.2L277.8 316.67M441.6 237.2L277.8 316.67M115.6 237.2L277.8 319.69M441.6 237.2L277.8 319.69" stroke="#6a9080" stroke-opacity="0.45" stroke-width="0.5" fill="none"/><path d="M80 237.2 L477 237.2" stroke="#b8b8b8" stroke-opacity="0.55" stroke-width="0.7"/><path d="M79 322.2 L477 322.2" stroke="#a0aea6" stroke-opacity="0.6" stroke-width="0.7"/><path d="M277.8 151.8L218.7 182.92M277.8 161.29L218.7 188.95M277.8 170.79L218.7 194.99M277.8 180.28L218.7 201.02M277.8 189.78L218.7 207.06M277.8 199.27L218.7 213.09M277.8 208.77L218.7 219.13M277.8 218.26L218.7 225.16M277.8 227.76L218.7 231.2M277.8 237.25L218.7 237.23M277.8 246.74L218.7 243.27M277.8 256.24L218.7 249.3M277.8 265.73L218.7 255.34M277.8 275.23L218.7 261.37M277.8 284.72L218.7 267.41M277.8 294.22L218.7 273.44M277.8 303.71L218.7 279.48M277.8 313.21L218.7 285.51M277.8 322.7L218.7 291.55M277.8 151.8L277.8 322.7M271.83 154.94L271.83 319.55M266.28 157.86L266.28 316.63M261.12 160.58L261.12 313.91M256.29 163.12L256.29 311.36M251.78 165.5L251.78 308.98M247.55 167.73L247.55 306.75M243.57 169.82L243.57 304.66M239.82 171.8L239.82 302.68M236.29 173.66L236.29 300.82M232.95 175.41L232.95 299.06M229.8 177.07L229.8 297.4M226.8 178.65L226.8 295.82M223.96 180.14L223.96 294.32M221.27 181.57L221.27 292.9M218.7 182.92L218.7 291.55" stroke="#4c5e70" stroke-opacity="0.9" stroke-width="0.6" fill="none"/><path d="M277.8 151.8L338.5 183.45M277.8 161.29L338.5 189.42M277.8 170.79L338.5 195.4M277.8 180.28L338.5 201.38M277.8 189.78L338.5 207.35M277.8 199.27L338.5 213.33M277.8 208.77L338.5 219.3M277.8 218.26L338.5 225.28M277.8 227.76L338.5 231.26M277.8 237.25L338.5 237.23M277.8 246.74L338.5 243.21M277.8 256.24L338.5 249.18M277.8 265.73L338.5 255.16M277.8 275.23L338.5 261.14M277.8 284.72L338.5 267.11M277.8 294.22L338.5 273.09M277.8 303.71L338.5 279.06M277.8 313.21L338.5 285.04M277.8 322.7L338.5 291.02M277.8 151.8L277.8 322.7M283.99 155.03L283.99 319.47M289.72 158.02L289.72 316.48M295.06 160.8L295.06 313.69M300.03 163.39L300.03 311.1M304.67 165.81L304.67 308.67M309.02 168.08L309.02 306.4M313.1 170.21L313.1 304.27M316.94 172.21L316.94 302.27M320.56 174.09L320.56 300.38M323.97 175.87L323.97 298.6M327.19 177.55L327.19 296.92M330.25 179.14L330.25 295.32M333.14 180.65L333.14 293.81M335.89 182.09L335.89 292.38M338.5 183.45L338.5 291.02" stroke="#b08472" stroke-opacity="0.75" stroke-width="0.55" fill="none"/><path d="M277.8 151.8 L134.8 227.09" stroke="#808080" stroke-width="0.8"/><path d="M277.8 151.8 L441.6 237.2" stroke="#a09890" stroke-width="0.8"/><path d="M115.6 237.2 L277.8 322.7" stroke="#3f5a5a" stroke-width="1"/><path d="M441.6 237.2 L277.8 322.7" stroke="#9a6a40" stroke-width="1"/><path d="M277.8 322.7 L277.8 337 M267.8 328.2 L277.8 322.7 L287.8 328.2" stroke="#b0b0b0" stroke-width="0.6" fill="none"/><path d="M277.8 151.8L218.7 182.92M277.8 161.29L218.7 188.95M277.8 170.79L218.7 194.99M277.8 180.28L218.7 201.02M277.8 189.78L218.7 207.06M277.8 199.27L218.7 213.09M277.8 208.77L218.7 219.13M277.8 218.26L218.7 225.16M277.8 227.76L218.7 231.2M277.8 237.25L218.7 237.23M277.8 246.74L218.7 243.27M277.8 256.24L218.7 249.3M277.8 265.73L218.7 255.34M277.8 275.23L218.7 261.37M277.8 284.72L218.7 267.41M277.8 294.22L218.7 273.44M277.8 303.71L218.7 279.48M277.8 313.21L218.7 285.51M277.8 322.7L218.7 291.55M277.8 151.8L277.8 322.7M271.83 154.94L271.83 319.55M266.28 157.86L266.28 316.63M261.12 160.58L261.12 313.91M256.29 163.12L256.29 311.36M251.78 165.5L251.78 308.98M247.55 167.73L247.55 306.75M243.57 169.82L243.57 304.66M239.82 171.8L239.82 302.68M236.29 173.66L236.29 300.82M232.95 175.41L232.95 299.06M229.8 177.07L229.8 297.4M226.8 178.65L226.8 295.82M223.96 180.14L223.96 294.32M221.27 181.57L221.27 292.9M218.7 182.92L218.7 291.55" stroke="#6040b0" stroke-opacity="0.45" stroke-width="0.55" fill="none"/><path d="M220.02 311.20L219.59 311.69L219.00 312.20L218.25 312.70L217.34 313.20L216.26 313.69L215.00 314.18L213.58 314.64L212.04 315.07L209.87 315.59L207.74 316.01L205.69 316.31L203.77 316.49L202.01 316.55L200.40 316.49L198.96 316.33L197.70 316.05L196.61 315.68L195.67 315.21L194.90 314.63L194.28 313.97L193.87 313.29L193.68 312.61L193.72 311.93L193.97 311.25L194.46 310.57L195.17 309.89L196.12 309.21L197.31 308.53L198.73 307.88L200.37 307.24L202.22 306.63L206.34 305.46L209.65 308.29L206.96 309.15L206.11 309.51L205.47 309.89L205.07 310.32L204.95 310.80L205.18 311.32L205.41 311.56L205.69 311.76L206.02 311.92L206.39 312.03L206.79 312.11L207.21 312.16L207.62 312.17L208.03 312.15L208.43 312.11L208.88 312.04L209.41 311.94L210.00 311.80L210.46 311.68L210.81 311.57L211.12 311.44L211.42 311.30L211.72 311.11L211.98 310.90L212.19 310.65L212.33 310.39L212.38 310.09L212.34 309.79L212.21 309.46L211.98 309.12L211.06 307.96L220.75 305.68L221.62 306.74L221.89 307.02L222.20 307.26L222.54 307.45L222.91 307.59L223.31 307.69L223.71 307.75L224.11 307.78L224.49 307.77L224.83 307.75L225.16 307.71L225.52 307.64L225.95 307.55L226.36 307.44L226.70 307.33L226.98 307.23L227.23 307.12L227.47 307.00L227.69 306.86L227.87 306.70L228.00 306.53L228.07 306.35L228.08 306.15L228.02 305.95L227.88 305.73L227.69 305.55L227.46 305.39L227.19 305.27L226.88 305.17L226.55 305.10L226.18 305.06L225.81 305.04L225.44 305.04L225.07 305.06L224.69 305.11L224.28 305.17L222.18 305.56L220.48 302.51L224.36 301.88L226.07 301.67L227.67 301.54L229.14 301.50L230.50 301.53L231.73 301.64L232.85 301.82L233.83 302.07L234.69 302.38L235.42 302.75L236.04 303.18L236.54 303.68L236.93 304.24L237.16 304.80L237.23 305.35L237.12 305.91L236.84 306.47L236.37 307.03L235.70 307.60L234.84 308.16L233.75 308.72L232.44 309.26L230.91 309.78L229.23 310.25L227.86 310.58L226.51 310.85L225.19 311.06L223.93 311.20L222.75 311.27L221.65 311.28L220.64 311.23L220.04 311.16L220.02 311.20ZM226.47 326.10L224.42 326.60L222.40 327.02L220.42 327.38L218.49 327.66L216.64 327.86L214.88 327.99L213.22 328.04L211.67 328.00L210.22 327.89L208.89 327.70L207.68 327.44L206.60 327.11L205.65 326.71L204.84 326.25L204.16 325.72L203.62 325.13L199.43 319.63L240.30 308.82L243.87 313.04L244.50 313.97L244.86 314.90L244.92 315.84L244.68 316.80L244.13 317.78L243.25 318.79L242.04 319.81L240.47 320.84L238.54 321.87L236.24 322.90L233.59 323.92L230.61 324.92L228.52 325.54L226.47 326.10ZM230.92 320.68L232.08 320.20L233.06 319.72L233.90 319.22L234.59 318.71L235.13 318.18L235.51 317.65L235.70 317.10L235.72 316.55L235.54 316.00L235.17 315.44L234.11 314.15L212.81 320.07L214.19 321.82L214.68 322.30L215.33 322.68L216.12 322.96L217.05 323.14L218.12 323.24L219.32 323.26L220.60 323.19L221.93 323.04L223.31 322.82L224.76 322.52L226.31 322.14L227.96 321.67L229.56 321.17L230.92 320.68Z" fill="#000" stroke="none" stroke-width="0" fill-rule="evenodd"/></g></svg><div style="left:1px;top:40px;width:23.5px;height:382px;background:#3b3b3b;"></div><div style="left:24.5px;top:58px;width:1px;height:356px;background:#2f2f2f;"></div><div style="left:1px;top:40px;width:23.5px;height:10px;background:#333;"></div><div style="left:4.4px;top:116px;width:15.3px;height:12.7px;background:#262626;"></div><svg style="left:1px;top:0" width="24" height="424" viewBox="1 0 24 424"><defs><linearGradient id="tg"><stop offset="0" stop-color="#eee"/><stop offset="1" stop-color="#222"/></linearGradient></defs><path d="M9 61.5 L15.5 67.5 L12 68 L10 71.5 Z" fill="none" stroke="#c4c4c4" stroke-width="0.9"/><path d="M9 75.7 L15.5 81.7 L12 82.2 L10 85.7 Z" fill="#c4c4c4"/><rect x="17" y="84.2" width="1.2" height="1.2" fill="#999"/><path d="M8 99.4 L9.5 94.9 L14 90.4 L16.5 92.9 L12 97.4 Z" fill="#c4c4c4"/><circle cx="11.5" cy="95.7" r="0.9" fill="#3b3b3b"/><rect x="17" y="98.4" width="1.2" height="1.2" fill="#999"/><path d="M8 113.6 L9.5 109.1 L14 104.6 L16.5 107.1 L12 111.6 Z" fill="#c4c4c4"/><circle cx="11.5" cy="109.9" r="0.9" fill="#3b3b3b"/><rect x="17" y="112.6" width="1.2" height="1.2" fill="#999"/><path d="M7 114.1 Q5 110.1 8 108.1" stroke="#c4c4c4" fill="none" stroke-width="0.8"/><rect x="7" y="118.4" width="9.5" height="7.5" fill="#555" stroke="#c4c4c4" stroke-width="0.9"/><rect x="17" y="125.9" width="1.2" height="1.2" fill="#999"/><path d="M7.5 141.6 Q8 138.6 10 138.6 L16 132.1 L16.8 132.9 L11 139.6 Q10 141.6 7.5 141.6Z" fill="#c4c4c4"/><text x="7.5" y="155.6" font-family="Liberation Serif" font-weight="bold" font-size="12" fill="#c4c4c4">T</text><path d="M8 164 A4.5 4.5 0 1 1 10 169" stroke="#c4c4c4" fill="none" stroke-width="1"/><path d="M6.5 162 L8 166 L10.5 163Z" fill="#c4c4c4"/><path d="M7 181.2 L12 175.2 L16.5 179.2 L11.5 184.2 Z" fill="#c4c4c4"/><path d="M9.5 178.2 L14 182.2" stroke="#3b3b3b" stroke-width="0.8"/><ellipse cx="11" cy="192.4" rx="4.5" ry="3" fill="none" stroke="#c4c4c4" stroke-width="0.9"/><path d="M12 193.4 L16.5 197.4 L14 197.6 L13 199.4Z" fill="#c4c4c4"/><rect x="7.5" y="203.6" width="9" height="8" fill="url(#tg)" stroke="#aaa" stroke-width="0.6"/><path d="M7.5 226.8 L8.5 224.3 L14 218.8 L16 220.8 L10.5 226.3Z" fill="none" stroke="#c4c4c4" stroke-width="0.9"/><circle cx="15.5" cy="218.3" r="1.6" fill="#c4c4c4"/><path d="M7.5 234 L11 237 L9 239 L13 240 L16 237" stroke="#c4c4c4" fill="none" stroke-width="1.2"/><path d="M12 232 L16 235" stroke="#c4c4c4" stroke-width="1.2"/><path d="M7.5 248.1 L11 251.1 L9 253.1 L13 254.1 L16 251.1" stroke="#c4c4c4" fill="none" stroke-width="1.2"/><path d="M12 246.1 L16 249.1" stroke="#c4c4c4" stroke-width="1.2"/><circle cx="10" cy="262.4" r="3" fill="none" stroke="#c4c4c4" stroke-width="0.9"/><circle cx="14" cy="265.4" r="3" fill="none" stroke="#c4c4c4" stroke-width="0.9"/><path d="M9 272.9 L9 280.9 L17 280.9 M7 274.9 L15 274.9 L15 282.9" stroke="#c4c4c4" fill="none" stroke-width="0.9"/><rect x="7.5" y="286.5" width="1" height="10" fill="#c4c4c4"/><rect x="9.5" y="288" width="5" height="2.5" fill="#c4c4c4"/><rect x="9.5" y="292.5" width="7" height="2.5" fill="#c4c4c4"/><path d="M7.5 301.6 L7.5 310.6 L16.5 310.6 Z M7.5 304.6 L13.5 307.6 M11 305.1 L11 310.6" stroke="#c4c4c4" fill="none" stroke-width="0.8"/><path d="M7 315.2 L12 320.2 L9.5 320.5 L8 323.2Z" fill="#c4c4c4"/><circle cx="14" cy="322.2" r="3" fill="#aaa"/><path d="M14 319.2 L14 322.2 L11.5 323.7 M14 322.2 L16.5 323.7" stroke="#3b3b3b" stroke-width="0.6"/><circle cx="8" cy="335" r="2.8" fill="#ddd"/><path d="M14 333 Q17 333 17 337" stroke="#bbb" fill="none"/><rect x="4.5" y="343.7" width="9.5" height="9.5" fill="#c8a8e8" stroke="#bbb" stroke-width="1"/><rect x="10" y="350" width="9" height="9" fill="#fff"/><path d="M10.5 358.5 L18.5 350.5" stroke="#c0103a" stroke-width="1.4"/><rect x="4" y="365" width="4.5" height="4" fill="#000"/><rect x="9.5" y="365" width="2.5" height="4" fill="#ddd"/><rect x="13.5" y="365" width="4.5" height="4" fill="#fff"/><path d="M13.5 369 L18 365" stroke="#c0103a"/><circle cx="11" cy="376.5" r="2.6" fill="#999"/><circle cx="12.5" cy="378" r="2.2" fill="#bbb"/><rect x="6" y="388" width="9" height="6" fill="none" stroke="#aaa"/><rect x="9" y="386" width="9" height="6" fill="#3b3b3b" stroke="#aaa"/><g fill="#ccc"><circle cx="7.5" cy="411.4" r="1.1"/><circle cx="11" cy="411.4" r="1.1"/><circle cx="14.5" cy="411.4" r="1.1"/></g></svg><svg style="left:40.6px;top:73.3px" width="30" height="30" viewBox="-15 -15 30 30"><path d="M-14 -13.5 L0 -13.5 A14 14 0 1 1 -14 0 Z" fill="#262626"/><circle r="11" fill="#d2d2d2"/><path d="M0 -6.8 L0 0 L-6 3.4 L-6 -3.4Z" fill="#1f45c8"/><path d="M0 -6.8 L6 -3.4 L6 3.4 L0 0Z" fill="#9a9a9a"/><path d="M0 0 L6 3.4 L0 6.8 L-6 3.4Z" fill="#ffffff"/><path d="M0 -6.8 L6 -3.4 L6 3.4 L0 6.8 L-6 3.4 L-6 -3.4Z M0 0 L0 -6.8 M0 0 L-6 3.4 M0 0 L6 3.4" fill="none" stroke="#1a1a1a" stroke-width="0.9"/><rect x="-12.3" y="-12.3" width="2.6" height="2.6" fill="#eee"/></svg><div style="left:25.5px;top:399.5px;width:469px;height:15px;background:#3a3a3a;"></div><div style="left:25.5px;top:414.5px;width:469px;height:8px;background:#363636;"></div><div class="t" style="left:28px;top:403.2px;width:8px;height:8px;border-radius:50%;background:#cfcfcf;color:#3a3a3a;font-size:6.5px;line-height:8px;text-align:center;font-weight:bold">?</div><div class="t" style="left:42.6px;top:403.31px;font-size:6.65px;line-height:7.98px;color:#c4c4c4;font-weight:normal;"><b>Faites glisser</b> le curseur pour tracer un rectangle&nbsp; |&nbsp; <b>Cliquez</b> et spécifiez les dimensions pour créer un rectangle&nbsp; |&nbsp; <b>Maj+faites glisser</b> le curseur pour tracer</div><div class="t" style="left:29px;top:416.08px;font-size:6.2px;line-height:7.44px;color:#d0d0d0;font-weight:bold;">44,42%</div><div class="t" style="left:58px;top:416px;font-size:5.5px;line-height:6.6px;color:#aaa;font-weight:normal;">⌄</div><div style="left:71px;top:415px;width:35px;height:7px;background:#303030;"></div><div class="t" style="left:72px;top:416.08px;font-size:6.2px;line-height:7.44px;color:#d0d0d0;font-weight:normal;">0°</div><div class="t" style="left:102px;top:416px;font-size:5.5px;line-height:6.6px;color:#aaa;font-weight:normal;">⌄</div><div style="left:136px;top:415px;width:23px;height:7px;background:#303030;"></div><div class="t" style="left:138px;top:416.08px;font-size:6.2px;line-height:7.44px;color:#d0d0d0;font-weight:normal;">1</div><div class="t" style="left:161px;top:416px;font-size:5.5px;line-height:6.6px;color:#aaa;font-weight:normal;">⌄</div><div class="t" style="left:183.5px;top:416.08px;font-size:6.2px;line-height:7.44px;color:#c8c8c8;font-weight:normal;width:140px;text-align:center">Rectangle</div><div class="t" style="left:313px;top:416.2px;font-size:6px;line-height:7.2px;color:#aaa;font-weight:normal;">▸</div><div style="left:225px;top:378.8px;width:275px;height:20.1px;background:#2c2c2c;border:1px solid #222;border-radius:3px;box-sizing:border-box"></div><div style="left:228px;top:382.5px;width:1.6px;height:13px;background:#a8a8a8;"></div><div style="left:237.5px;top:381.3px;width:161.7px;height:15px;background:#2f2f2f;border:1px solid #3a3a3a;box-sizing:border-box;border-radius:2px"></div><svg style="left:242px;top:383px" width="11" height="11"><rect x="0.5" y="1.5" width="9" height="8" fill="#6a86c8"/><path d="M1 9 L4 5 L6 7 L8 4 L10 9Z" fill="#e8e8e8"/></svg><div class="t" style="left:255.3px;top:384.74px;font-size:7.1px;line-height:8.52px;color:#e4e4e4;font-weight:bold;">Remplissage génératif de la forme (Beta)</div><div style="left:401.4px;top:381.3px;width:80.3px;height:15px;background:#2f2f2f;border:1px solid #3a3a3a;box-sizing:border-box;border-radius:2px"></div><svg style="left:407px;top:383px" width="11" height="11"><path d="M2 1 L2 10 M0 4 L6 2 M5 3 L9 9 L6 9Z" stroke="#ccc" fill="#ccc" stroke-width="0.8"/></svg><div class="t" style="left:420.4px;top:384.74px;font-size:7.1px;line-height:8.52px;color:#e4e4e4;font-weight:bold;">Modifier le tracé</div><div style="left:486px;top:382.5px;width:6px;height:12px;background:#b8a0e0;"></div><div style="left:494.5px;top:103px;width:142px;height:311px;background:#3c3c3c;border-left:1px solid #2a2a2a;border-top:1px solid #2a2a2a;box-sizing:border-box"></div><div style="left:495.5px;top:105px;width:141px;height:15.3px;background:#333;"></div><div style="left:495.5px;top:105px;width:33.5px;height:15.3px;background:#3c3c3c;"></div><div class="t" style="left:500.4px;top:108.54px;font-size:6.6px;line-height:7.92px;color:#e6e6e6;font-weight:bold;">Calques</div><div class="t" style="left:534.7px;top:108.54px;font-size:6.6px;line-height:7.92px;color:#a8a8a8;font-weight:normal;">Plans de travail</div><div class="t" style="left:612px;top:108.3px;font-size:7px;line-height:8.4px;color:#888;font-weight:normal;">››</div><div style="left:628px;top:109.5px;width:6px;height:6px;background:#666;"></div><div style="left:503px;top:128px;width:113px;height:11.8px;background:#2e2e2e;"></div><svg style="left:504px;top:129px" width="10" height="10"><circle cx="4" cy="4.3" r="2.6" fill="none" stroke="#aaa" stroke-width="1"/><path d="M6 6.3 L8 8.5" stroke="#aaa"/></svg><div class="t" style="left:520px;top:130.28px;font-size:6.2px;line-height:7.44px;color:#a0a0a0;font-weight:normal;"><i>Rechercher dans tout</i></div><svg style="left:622px;top:128px" width="10" height="10"><path d="M0.5 1 L8.5 1 L5.5 5 L5.5 9 L3.5 8 L3.5 5 Z" fill="#bbb"/></svg><div style="left:496.5px;top:145.8px;width:137px;height:12.4px;background:#2d4766;"></div><svg style="left:500px;top:149px" width="9" height="6"><path d="M0.5 3 Q4.5 -1 8.5 3 Q4.5 7 0.5 3Z" fill="none" stroke="#aaa" stroke-width="0.8"/><circle cx="4.5" cy="3" r="1.2" fill="#aaa"/></svg><div style="left:523.5px;top:145.8px;width:2.5px;height:12.4px;background:#c8153c;"></div><div class="t" style="left:531.5px;top:148.4px;font-size:6px;line-height:7.2px;color:#aaa;font-weight:normal;">⌄</div><div style="left:541px;top:147.2px;width:10.4px;height:9.6px;background:#f2f2f2;border:0.6px solid #222;box-sizing:border-box"></div><div class="t" style="left:555px;top:148.16px;font-size:6.4px;line-height:7.68px;color:#a8c8f0;font-weight:normal;">Texte</div><div style="left:616px;top:149.4px;width:5.2px;height:5.2px;border-radius:50%;border:0.8px solid #aaa;box-sizing:border-box"></div><svg style="left:500px;top:161.4px" width="9" height="6"><path d="M0.5 3 Q4.5 -1 8.5 3 Q4.5 7 0.5 3Z" fill="none" stroke="#aaa" stroke-width="0.8"/><circle cx="4.5" cy="3" r="1.2" fill="#aaa"/></svg><div style="left:523.5px;top:158.2px;width:2.5px;height:12.4px;background:#c8153c;"></div><div style="left:555px;top:159.6px;width:10px;height:9.6px;background:#f2f2f2;border:0.6px solid #222;box-sizing:border-box"></div><div style="left:556px;top:162.9px;width:8px;height:3px;background:#111;"></div><div class="t" style="left:568px;top:160.56px;font-size:6.4px;line-height:7.68px;color:#d0d0d0;font-weight:normal;">&lt;Tracé&gt;</div><div style="left:616px;top:161.8px;width:5.2px;height:5.2px;border-radius:50%;border:0.8px solid #aaa;box-sizing:border-box"></div><svg style="left:500px;top:173.8px" width="9" height="6"><path d="M0.5 3 Q4.5 -1 8.5 3 Q4.5 7 0.5 3Z" fill="none" stroke="#aaa" stroke-width="0.8"/><circle cx="4.5" cy="3" r="1.2" fill="#aaa"/></svg><div style="left:523.5px;top:170.6px;width:2.5px;height:12.4px;background:#c8153c;"></div><div style="left:555px;top:172px;width:10px;height:9.6px;background:#f2f2f2;border:0.6px solid #222;box-sizing:border-box"></div><div style="left:556px;top:175.3px;width:8px;height:3px;background:#111;"></div><div class="t" style="left:568px;top:172.96px;font-size:6.4px;line-height:7.68px;color:#d0d0d0;font-weight:normal;">Texte ...</div><div style="left:616px;top:174.2px;width:5.2px;height:5.2px;border-radius:50%;border:0.8px solid #aaa;box-sizing:border-box"></div><svg style="left:500px;top:186.2px" width="9" height="6"><path d="M0.5 3 Q4.5 -1 8.5 3 Q4.5 7 0.5 3Z" fill="none" stroke="#aaa" stroke-width="0.8"/><circle cx="4.5" cy="3" r="1.2" fill="#aaa"/></svg><div style="left:523.5px;top:183px;width:2.5px;height:12.4px;background:#c8153c;"></div><div style="left:555px;top:184.4px;width:10px;height:9.6px;background:#f2f2f2;border:0.6px solid #222;box-sizing:border-box"></div><div style="left:556px;top:187.7px;width:8px;height:3px;background:#111;"></div><div class="t" style="left:568px;top:185.36px;font-size:6.4px;line-height:7.68px;color:#d0d0d0;font-weight:normal;">Texte ...</div><div style="left:616px;top:186.6px;width:5.2px;height:5.2px;border-radius:50%;border:0.8px solid #aaa;box-sizing:border-box"></div><svg style="left:500px;top:198.6px" width="9" height="6"><path d="M0.5 3 Q4.5 -1 8.5 3 Q4.5 7 0.5 3Z" fill="none" stroke="#aaa" stroke-width="0.8"/><circle cx="4.5" cy="3" r="1.2" fill="#aaa"/></svg><div style="left:523.5px;top:195.4px;width:2.5px;height:12.4px;background:#c8153c;"></div><div style="left:555px;top:196.8px;width:10px;height:9.6px;background:#f2f2f2;border:0.6px solid #222;box-sizing:border-box"></div><div style="left:556px;top:200.1px;width:8px;height:3px;background:#111;"></div><div class="t" style="left:568px;top:197.76px;font-size:6.4px;line-height:7.68px;color:#d0d0d0;font-weight:normal;">Texte ...</div><div style="left:616px;top:199px;width:5.2px;height:5.2px;border-radius:50%;border:0.8px solid #aaa;box-sizing:border-box"></div><svg style="left:500px;top:211px" width="9" height="6"><path d="M0.5 3 Q4.5 -1 8.5 3 Q4.5 7 0.5 3Z" fill="none" stroke="#aaa" stroke-width="0.8"/><circle cx="4.5" cy="3" r="1.2" fill="#aaa"/></svg><div style="left:523.5px;top:207.8px;width:2.5px;height:12.4px;background:#3a5fd0;"></div><div style="left:541px;top:209.2px;width:10.4px;height:9.6px;background:#f2f2f2;border:0.6px solid #222;box-sizing:border-box"></div><div class="t" style="left:555px;top:210.16px;font-size:6.4px;line-height:7.68px;color:#d0d0d0;font-weight:normal;">Grille</div><div style="left:616px;top:211.4px;width:5.2px;height:5.2px;border-radius:50%;border:0.8px solid #aaa;box-sizing:border-box"></div><div style="left:495.5px;top:401px;width:141px;height:13px;background:#3c3c3c;"></div><div class="t" style="left:503px;top:404.96px;font-size:6.4px;line-height:7.68px;color:#c8c8c8;font-weight:normal;">2 Ca...</div><svg style="left:520px;top:403px" width="115" height="11"><g fill="none" stroke="#aaa" stroke-width="0.9"><rect x="10" y="2" width="7" height="7"/><rect x="70" y="2" width="8" height="6"/><rect x="85" y="2" width="7" height="7"/><path d="M100 3 L107 3 L106 10 L101 10Z"/></g><g fill="none" stroke="#666" stroke-width="0.9"><rect x="25" y="2" width="7" height="7"/><circle cx="43" cy="5" r="3"/><path d="M55 2 L58 9"/></g></svg><div style="left:637px;top:40px;width:117px;height:382px;background:#2e2e2e;"></div><div style="left:638px;top:48px;width:116px;height:374px;background:#3c3c3c;"></div><div style="left:638px;top:88px;width:116px;height:2px;background:#333;"></div><div style="left:638px;top:262px;width:116px;height:2px;background:#333;"></div><div style="left:638px;top:320px;width:116px;height:2px;background:#333;"></div><div style="left:638px;top:376px;width:116px;height:2px;background:#333;"></div><div style="left:641px;top:382.7px;width:110px;height:11.7px;background:#262626;"></div><div class="t" style="left:660px;top:58.59px;font-size:6.35px;line-height:7.62px;color:#dcdcdc;font-weight:bold;">Propriétés</div><div class="t" style="left:660px;top:75.09px;font-size:6.35px;line-height:7.62px;color:#dcdcdc;font-weight:bold;">Alignement</div><div class="t" style="left:660px;top:99.19px;font-size:6.35px;line-height:7.62px;color:#dcdcdc;font-weight:bold;">Transformation</div><div class="t" style="left:660px;top:115.69px;font-size:6.35px;line-height:7.62px;color:#dcdcdc;font-weight:bold;">Pathfinder</div><div class="t" style="left:660px;top:132.29px;font-size:6.35px;line-height:7.62px;color:#dcdcdc;font-weight:bold;">Nuancier</div><div class="t" style="left:660px;top:148.79px;font-size:6.35px;line-height:7.62px;color:#dcdcdc;font-weight:bold;">Contour</div><div class="t" style="left:660px;top:165.29px;font-size:6.35px;line-height:7.62px;color:#dcdcdc;font-weight:bold;">Formes</div><div class="t" style="left:660px;top:181.79px;font-size:6.35px;line-height:7.62px;color:#dcdcdc;font-weight:bold;">Symboles</div><div class="t" style="left:660px;top:198.29px;font-size:6.35px;line-height:7.62px;color:#dcdcdc;font-weight:bold;">Dégradé</div><div class="t" style="left:660px;top:214.79px;font-size:6.35px;line-height:7.62px;color:#dcdcdc;font-weight:bold;">Transparence</div><div class="t" style="left:660px;top:231.29px;font-size:6.35px;line-height:7.62px;color:#dcdcdc;font-weight:bold;">Couleur</div><div class="t" style="left:660px;top:247.79px;font-size:6.35px;line-height:7.62px;color:#dcdcdc;font-weight:bold;">Guide des couleurs</div><div class="t" style="left:660px;top:271.89px;font-size:6.35px;line-height:7.62px;color:#dcdcdc;font-weight:bold;">Liens</div><div class="t" style="left:660px;top:288.39px;font-size:6.35px;line-height:7.62px;color:#dcdcdc;font-weight:bold;">Bibliothèques</div><div class="t" style="left:660px;top:304.89px;font-size:6.35px;line-height:7.62px;color:#dcdcdc;font-weight:bold;">Informations sur le docum...</div><div class="t" style="left:660px;top:328.99px;font-size:6.35px;line-height:7.62px;color:#dcdcdc;font-weight:bold;">Variables</div><div class="t" style="left:660px;top:345.49px;font-size:6.35px;line-height:7.62px;color:#dcdcdc;font-weight:bold;">Aspect</div><div class="t" style="left:660px;top:361.99px;font-size:6.35px;line-height:7.62px;color:#dcdcdc;font-weight:bold;">Exportation de ressources</div><div class="t" style="left:660px;top:385.79px;font-size:6.35px;line-height:7.62px;color:#dcdcdc;font-weight:bold;">Calques</div><div class="t" style="left:660px;top:402.54px;font-size:6.6px;line-height:7.92px;color:#9a9a9a;font-weight:bold;">Plans de travail</div><svg style="left:0;top:0" width="755" height="424"><g stroke="#c4c4c4" stroke-width="0.8" fill="none"><path d="M644 59.2h9M644 61.7h9M644 64.2h9"/><circle cx="647" cy="59.2" r="1.1" fill="#3c3c3c"/><circle cx="650" cy="61.7" r="1.1" fill="#3c3c3c"/><circle cx="647" cy="64.2" r="1.1" fill="#3c3c3c"/></g><g fill="#c4c4c4"><rect x="644" y="73.7" width="1" height="9"/><rect x="645.5" y="75.2" width="4" height="2.5"/><rect x="645.5" y="78.7" width="8" height="2.5"/></g><g fill="none" stroke="#c4c4c4" stroke-width="0.8" stroke-dasharray="1.2 1"><rect x="645" y="98.8" width="7.5" height="7.5"/></g><g fill="#c4c4c4"><rect x="644" y="97.8" width="2" height="2"/><rect x="651.5" y="97.8" width="2" height="2"/><rect x="644" y="105.3" width="2" height="2"/><rect x="651.5" y="105.3" width="2" height="2"/></g><rect x="644" y="114.8" width="5.5" height="5" fill="#c4c4c4"/><rect x="647.5" y="117.8" width="5.5" height="5" fill="#999" stroke="#3c3c3c" stroke-width="0.6"/><rect x="644" y="131.9" width="9.5" height="7" fill="#888"/><g fill="#bbb"><rect x="645" y="132.70000000000002" width="2.2" height="2.4"/><rect x="647.8" y="132.70000000000002" width="2.2" height="2.4"/><rect x="650.6" y="132.70000000000002" width="2.2" height="2.4"/><rect x="645" y="135.9" width="2.2" height="2.4"/></g><g fill="#c4c4c4"><rect x="644" y="148.4" width="9.5" height="1.1"/><rect x="644" y="151.20000000000002" width="9.5" height="1.3"/><rect x="644" y="154.20000000000002" width="9.5" height="1.6"/></g><g fill="#c4c4c4"><rect x="646.5" y="168.4" width="4" height="4.5"/><path d="M647 168.4 L645 163.9 L648 167.4Z M649 168.4 L648.5 163.4 L650 167.9Z M650 168.4 L652.5 164.9 L651 168.4Z"/></g><g fill="#c4c4c4"><circle cx="648.5" cy="182.70000000000002" r="2"/><circle cx="646.3" cy="185.4" r="2"/><circle cx="650.7" cy="185.4" r="2"/><path d="M648 184.9 L647 188.9 L650 188.9 L649 184.9Z"/></g><defs><linearGradient id="gd"><stop offset="0" stop-color="#222"/><stop offset="1" stop-color="#eee"/></linearGradient></defs><rect x="644" y="197.9" width="9.5" height="7.5" fill="url(#gd)" stroke="#aaa" stroke-width="0.5"/><circle cx="647.5" cy="217.1" r="3.3" fill="#bbb"/><circle cx="649.8" cy="218.9" r="3.3" fill="#777" stroke="#aaa" stroke-width="0.5"/><ellipse cx="648.8" cy="234.9" rx="4.8" ry="3.5" fill="none" stroke="#c4c4c4" stroke-width="1"/><g fill="#c4c4c4"><circle cx="647" cy="233.9" r="0.9"/><circle cx="650" cy="233.4" r="0.9"/></g><path d="M644 255.4 L644 246.9 Q652 248.9 653.5 255.4Z" fill="#999" stroke="#ccc" stroke-width="0.6"/><g fill="none" stroke="#c4c4c4" stroke-width="1"><rect x="644" y="273" width="5.5" height="4" rx="2"/><rect x="648" y="273" width="5.5" height="4" rx="2"/></g><rect x="644.5" y="287.0" width="8" height="9.5" fill="none" stroke="#c4c4c4" stroke-width="1"/><rect x="647.5" y="287.0" width="2" height="4" fill="#c4c4c4"/><rect x="644.5" y="303.5" width="8" height="9.5" fill="#aaa"/><circle cx="648.5" cy="309" r="2.3" fill="#3c3c3c"/><rect x="648" y="308" width="1" height="2.5" fill="#ccc"/><circle cx="647" cy="333.6" r="2.6" fill="none" stroke="#c4c4c4" stroke-width="1.2"/><circle cx="651.5" cy="329.6" r="1.8" fill="none" stroke="#c4c4c4" stroke-width="0.9"/><circle cx="648.5" cy="348.6" r="3.8" fill="#aaa"/><path d="M649 361.1 L644 361.1 L644 370.1 L653 370.1 L653 365.1" fill="none" stroke="#c4c4c4" stroke-width="1"/><path d="M648 366.1 L653 361.1 M650 361.1 L653 361.1 L653 364.1" stroke="#c4c4c4" stroke-width="1" fill="none"/><path d="M648.7 384.9 L653.5 387.59999999999997 L648.7 390.29999999999995 L644 387.59999999999997Z" fill="#c4c4c4"/><path d="M644 389.9 L648.7 392.59999999999997 L653.5 389.9" fill="none" stroke="#c4c4c4" stroke-width="1.2"/><rect x="645" y="401.5" width="6" height="5" fill="none" stroke="#aaa" stroke-width="0.9"/><rect x="648" y="404.5" width="6" height="5" fill="#555" stroke="#aaa" stroke-width="0.9"/></svg><div class="t" style="left:654.5px;top:399.68px;font-size:12.2px;line-height:14.64px;color:#f4f4f4;font-weight:normal;letter-spacing:-0.35px;text-shadow:0 0 1px #000">Linked<span style="display:inline-block;background:#fff;color:#3c3c3c;padding:0 1px;line-height:10px">in</span> Learning</div></div><div class="tile" style="left:1526px;top:1009px"><div style="left:1px;top:1px;width:753px;height:422px;background:#474747;"></div><div style="left:1px;top:1px;width:753px;height:19px;background:#3c3c3c;"></div><div style="left:1px;top:19px;width:753px;height:1px;background:#333;"></div><div style="left:5.7px;top:7.4px;width:6.6px;height:6.6px;border-radius:50%;background:#e0395a"></div><div style="left:17.5px;top:7.4px;width:6.6px;height:6.6px;border-radius:50%;background:#f0b030"></div><div style="left:29.3px;top:7.4px;width:6.6px;height:6.6px;border-radius:50%;background:#2ec43c"></div><svg style="left:45px;top:6px" width="11" height="10" viewBox="0 0 11 10"><path d="M5.5 0.5 L10.5 5 L9 5 L9 9.5 L6.5 9.5 L6.5 6.5 L4.5 6.5 L4.5 9.5 L2 9.5 L2 5 L0.5 5 Z" fill="#c8c8c8"/></svg><div class="t" style="left:326.5px;top:6.32px;font-size:7.8px;line-height:9.36px;color:#d0d0d0;font-weight:normal;letter-spacing:0.18px">Adobe Illustrator 2025</div><div class="t" style="left:627px;top:3.9px;width:40px;height:13.9px;border-radius:7px;background:#1d5fd6;color:#fff;font-size:7.2px;line-height:13.9px;text-align:center;font-weight:bold">Partager</div><svg style="left:674px;top:4px" width="40" height="13" viewBox="0 0 40 13"><path d="M4 2.5 Q7.5 2.5 7.5 7 L8.5 9.5 L-0.5 9.5 L0.5 7 Q0.5 2.5 4 2.5Z" fill="#bcbcbc"/><circle cx="7.5" cy="2" r="1.6" fill="#2a7de0"/><circle cx="22.5" cy="5.5" r="3.2" fill="none" stroke="#c8c8c8" stroke-width="1.2"/><path d="M24.8 7.8 L27 10" stroke="#c8c8c8" stroke-width="1.3"/></svg><div style="left:718.5px;top:6.5px;width:10px;height:7px;background:#c8c8c8;"></div><div style="left:723px;top:6.5px;width:1px;height:7px;background:#3c3c3c;"></div><div style="left:723px;top:9.5px;width:6px;height:1px;background:#3c3c3c;"></div><div style="left:739.5px;top:6px;width:10px;height:8px;background:transparent;border:1px solid #b8b8b8;box-sizing:border-box"></div><div style="left:749px;top:1.5px;width:4px;height:4px;border-radius:50%;background:#d08a30"></div><div style="left:1px;top:20px;width:753px;height:20px;background:#3c3c3c;"></div><div class="t" style="left:8.7px;top:26.54px;font-size:6.6px;line-height:7.92px;color:#b0b0b0;font-weight:normal;">Tracé</div><div style="left:65.3px;top:24.9px;width:11.8px;height:11.7px;background:#c8a0e0;border:1px solid #9a9a9a;box-sizing:border-box"></div><div class="t" style="left:81px;top:26.4px;font-size:6px;line-height:7.2px;color:#b0b0b0;font-weight:normal;">⌄</div><div style="left:91.3px;top:24.9px;width:11.5px;height:11.7px;background:#fff;"></div><svg style="left:91.3px;top:24.9px" width="11.5" height="11.7"><path d="M1 10.7 L10.5 1" stroke="#c0103a" stroke-width="1.4"/></svg><div class="t" style="left:107px;top:26.4px;font-size:6px;line-height:7.2px;color:#b0b0b0;font-weight:normal;">⌄</div><div class="t" style="left:120.2px;top:27.04px;font-size:6.6px;line-height:7.92px;color:#c8c8c8;font-weight:bold;text-decoration:underline;text-decoration-color:#777">Contour :</div><div class="t" style="left:155px;top:26.8px;font-size:7px;line-height:8.4px;color:#a0a0a0;font-weight:normal;">⇕</div><div style="left:162.9px;top:24px;width:28.5px;height:12.5px;background:#2e2e2e;"></div><div class="t" style="left:195px;top:26.4px;font-size:6px;line-height:7.2px;color:#b0b0b0;font-weight:normal;">⌄</div><div style="left:206px;top:24.5px;width:53.3px;height:12px;background:#6a6a6a;"></div><div style="left:273.8px;top:24.9px;width:51.1px;height:11.1px;background:#e4e4e4;"></div><div style="left:277px;top:30px;width:16px;height:1.6px;background:#000;"></div><div class="t" style="left:298px;top:26.54px;font-size:6.6px;line-height:7.92px;color:#111;font-weight:bold;">De base</div><div class="t" style="left:327px;top:26.4px;font-size:6px;line-height:7.2px;color:#b0b0b0;font-weight:normal;">⌄</div><div class="t" style="left:339.6px;top:26.54px;font-size:6.6px;line-height:7.92px;color:#c8c8c8;font-weight:bold;text-decoration:underline;text-decoration-color:#777">Opacité :</div><div style="left:370px;top:24.5px;width:32.5px;height:12px;background:#333;"></div><div class="t" style="left:371.5px;top:26.54px;font-size:6.6px;line-height:7.92px;color:#d8d8d8;font-weight:bold;">100%</div><div class="t" style="left:406.5px;top:25.7px;font-size:8px;line-height:9.6px;color:#b0b0b0;font-weight:normal;">›</div><div class="t" style="left:417.8px;top:27.04px;font-size:6.6px;line-height:7.92px;color:#a8a8a8;font-weight:normal;">Style :</div><div style="left:438.9px;top:24.9px;width:11.1px;height:11.1px;background:#dedede;"></div><div class="t" style="left:454px;top:26.4px;font-size:6px;line-height:7.2px;color:#b0b0b0;font-weight:normal;">⌄</div><svg style="left:470px;top:25px" width="12" height="12"><circle cx="5.5" cy="5.5" r="4.6" fill="#888" stroke="#ccc" stroke-width="0.8"/></svg><div class="t" style="left:492px;top:26.54px;font-size:6.6px;line-height:7.92px;color:#d8d8d8;font-weight:bold;text-decoration:underline;text-decoration-color:#777">Alignement</div><div class="t" style="left:533px;top:26.54px;font-size:6.6px;line-height:7.92px;color:#d8d8d8;font-weight:bold;text-decoration:underline;text-decoration-color:#777">Transformation</div><svg style="left:586px;top:24px" width="60" height="14"><g stroke="#ccc" stroke-width="1" fill="none"><path d="M2 2 L2 5 M2 2 L5 2 M13 2 L10 2 M13 2 L13 5 M2 12 L2 9 M2 12 L5 12 M13 12 L10 12 M13 12 L13 9"/><rect x="4.5" y="4.5" width="6" height="5"/><rect x="18.5" y="2.5" width="6" height="6"/></g><path d="M22 6 L27 11 L24 11Z" fill="#ccc"/><path d="M31 5 L33 7 L35 5" stroke="#aaa" fill="none"/><rect x="50" y="3" width="8" height="8" fill="#6a7ab0" stroke="#ccc" stroke-width="0.8"/></svg><svg style="left:592px;top:24px" width="160" height="14" viewBox="0 0 160 14"><g fill="#bbb"><rect x="102" y="2" width="2.2" height="2.2"/><rect x="107" y="2" width="2.2" height="2.2"/><rect x="102" y="9" width="2.2" height="2.2"/><rect x="107" y="9" width="2.2" height="2.2"/></g><rect x="116.5" y="1.5" width="2" height="11" fill="#bbb"/><path d="M120 4.5 L124 4.5 Q126 4.5 126 7 Q126 9.5 124 9.5 L120 9.5" stroke="#bbb" fill="none" stroke-width="1.2"/><g fill="#aaa"><rect x="145" y="3" width="8" height="1.2"/><rect x="145" y="6" width="8" height="1.2"/><rect x="145" y="9" width="8" height="1.2"/></g></svg><div style="left:1px;top:40px;width:753px;height:18px;background:#2e2e2e;"></div><div style="left:25.7px;top:40px;width:124.3px;height:18px;background:#383838;"></div><div class="t" style="left:30.5px;top:44.8px;font-size:7px;line-height:8.4px;color:#c0c0c0;font-weight:normal;">×</div><div class="t" style="left:38.8px;top:45.04px;font-size:6.6px;line-height:7.92px;color:#d8d8d8;font-weight:bold;">02_04.ai* @ 44,42 % (RVB/Aperçu)</div><div style="left:627px;top:58px;width:10px;height:45px;background:#3c3c3c;"></div><div style="left:627px;top:103px;width:1px;height:0px;background:#333;"></div><div style="left:134.3px;top:134.5px;width:288.3px;height:205.2px;background:#262626"></div><div style="left:134.8px;top:135px;width:286.8px;height:203.7px;background:#fff"></div><svg style="left:0;top:0" width="755" height="424"><defs><linearGradient id="wl" x1="115.6" y1="0" x2="278" y2="0" gradientUnits="userSpaceOnUse"><stop offset="0" stop-color="#1f7a48" stop-opacity="1"/><stop offset="0.12" stop-color="#5aac72" stop-opacity="0.75"/><stop offset="0.22" stop-color="#86c690" stop-opacity="0.5"/><stop offset="0.45" stop-color="#aedcb4" stop-opacity="0.3"/><stop offset="0.65" stop-color="#c4e6c8" stop-opacity="0.2"/><stop offset="1" stop-color="#c8e8d0" stop-opacity="0.1"/></linearGradient><linearGradient id="wr" x1="441.6" y1="0" x2="278" y2="0" gradientUnits="userSpaceOnUse"><stop offset="0" stop-color="#1f7a48" stop-opacity="1"/><stop offset="0.12" stop-color="#5aac72" stop-opacity="0.75"/><stop offset="0.22" stop-color="#86c690" stop-opacity="0.5"/><stop offset="0.45" stop-color="#aedcb4" stop-opacity="0.3"/><stop offset="0.65" stop-color="#c4e6c8" stop-opacity="0.2"/><stop offset="1" stop-color="#c8e8d0" stop-opacity="0.1"/></linearGradient><linearGradient id="pl" x1="0" y1="150" x2="0" y2="323" gradientUnits="userSpaceOnUse"><stop offset="0" stop-color="#ffffff" stop-opacity="0"/><stop offset="0.5" stop-color="#eef6fb" stop-opacity="0.3"/><stop offset="0.75" stop-color="#d8eef6" stop-opacity="0.7"/><stop offset="1" stop-color="#c4e8f2" stop-opacity="0.9"/></linearGradient><linearGradient id="pr" x1="0" y1="150" x2="0" y2="323" gradientUnits="userSpaceOnUse"><stop offset="0" stop-color="#ffffff" stop-opacity="0"/><stop offset="0.5" stop-color="#fdf4ea" stop-opacity="0.3"/><stop offset="0.75" stop-color="#f8ecd4" stop-opacity="0.7"/><stop offset="1" stop-color="#f4e2c4" stop-opacity="0.9"/></linearGradient><clipPath id="cv"><rect x="25" y="58" width="602" height="341"/></clipPath></defs><g clip-path="url(#cv)"><path d="M277.8 151.8 L218.7 182.92 L218.7 291.55 L277.8 322.7Z" fill="url(#pl)"/><path d="M277.8 151.8 L338.5 183.45 L338.5 291.02 L277.8 322.7Z" fill="url(#pr)"/><path d="M277.8 151.8 L146.8 220.77 L146.8 253.65 L277.8 322.7Z" fill="#c090e0" fill-opacity="1"/><path d="M277.8 151.8 L218.7 182.92 L218.7 291.55 L277.8 322.7Z" fill="#a890f0" fill-opacity="0.55"/><path d="M277.8 151.8 L407.8 219.58 L407.8 254.84 L277.8 322.7Z" fill="#e8c0f0" fill-opacity="1"/><path d="M277.8 151.8 L338.5 183.45 L338.5 291.02 L277.8 322.7Z" fill="#f0a8d8" fill-opacity="0.6"/><path d="M157.89 230.39L157.85 231.95L157.78 233.43L157.69 234.82L157.58 236.11L157.45 237.29L157.31 238.38L157.14 239.35L156.97 240.21L156.78 240.98L156.57 241.64L156.35 242.22L156.12 242.69L155.88 243.07L155.63 243.35L155.37 243.53L155.11 243.62L154.83 243.62L153.27 243.37L153.27 255.87L151.60 255.04L151.60 217.49L154.77 215.75L155.20 215.60L155.61 215.65L155.99 215.89L156.34 216.35L156.67 217.02L156.97 217.93L157.23 219.07L157.46 220.47L157.64 222.14L157.79 224.11L157.87 226.35L157.90 228.75L157.89 230.39ZM155.77 228.43L155.70 227.61L155.56 226.79L155.32 226.14L155.00 225.77L154.60 225.73L153.27 226.12L153.27 233.86L154.64 233.74L154.83 233.68L155.01 233.54L155.17 233.32L155.32 233.02L155.44 232.65L155.55 232.21L155.64 231.74L155.70 231.26L155.74 230.80L155.77 230.35L155.78 229.88L155.79 229.46L155.77 228.43ZM160.30 260.29L160.30 212.25L167.99 207.96L167.99 221.61L162.44 223.26L162.44 229.85L167.52 229.05L167.52 242.58L162.44 242.06L162.44 249.19L168.30 250.69L168.30 264.42L160.30 260.29ZM175.78 246.51L173.05 246.09L173.05 267.48L170.00 265.88L170.00 206.84L176.52 203.20L177.34 202.87L178.12 202.84L178.86 203.12L179.54 203.72L180.18 204.67L180.76 205.98L181.28 207.67L181.73 209.77L182.11 212.35L182.39 215.44L182.57 219.00L182.62 222.85L182.59 225.86L182.48 228.69L182.30 231.33L182.06 233.71L181.77 235.85L181.44 237.78L181.06 239.48L180.66 240.93L180.22 242.14L179.76 243.12L179.68 243.25L184.30 273.02L184.28 273.40L179.11 270.68L175.78 246.51ZM178.44 223.16L178.32 222.03L178.05 220.82L177.59 219.88L176.97 219.37L176.21 219.36L173.05 220.29L173.05 230.93L176.29 230.58L176.67 230.47L177.02 230.24L177.33 229.89L177.61 229.43L177.85 228.86L178.05 228.20L178.21 227.49L178.33 226.78L178.41 226.11L178.45 225.52L178.48 224.95L178.48 224.50L178.44 223.16ZM211.44 221.13L211.25 224.71L210.94 228.12L210.53 231.31L210.01 234.25L209.41 236.95L208.74 239.39L208.00 241.57L207.20 243.49L206.34 245.16L205.43 246.59L204.48 247.81L203.48 248.80L202.45 249.55L201.39 250.08L200.31 250.40L199.20 250.51L198.08 250.42L191.98 249.44L191.98 275.05L185.90 272.03L185.90 197.96L197.83 191.30L199.59 190.51L201.28 190.15L202.90 190.24L204.43 190.83L205.87 191.95L207.19 193.64L208.39 195.92L209.44 198.84L210.30 202.46L210.96 206.84L211.37 211.90L211.50 217.36L211.44 221.13ZM201.95 217.71L201.68 215.98L201.07 214.28L200.08 213.02L198.75 212.43L197.13 212.58L191.98 214.14L191.98 229.98L197.30 229.48L198.09 229.31L198.81 228.98L199.47 228.47L200.07 227.79L200.59 226.96L201.04 226.00L201.40 224.96L201.67 223.90L201.85 222.88L201.97 221.90L202.03 220.87L202.05 219.94L201.95 217.71ZM217.00 283.71L217.00 187.55L268.64 162.27L268.64 197.45L228.89 207.78L228.89 221.83L264.72 216.98L264.72 251.26L228.89 247.88L228.89 263.11L271.40 272.83L271.40 308.66L217.00 283.71Z" fill="#000" stroke="none" stroke-width="0" fill-rule="evenodd"/><path d="M271.83 319.55L266.37 322.2M266.28 316.63L253.99 322.2M261.12 313.91L241.6 322.2M256.29 311.36L229.22 322.2M251.78 308.98L216.83 322.2M247.55 306.75L204.45 322.2M243.57 304.66L192.06 322.2M239.82 302.68L179.68 322.2M236.29 300.82L167.29 322.2M232.95 299.06L154.9 322.2M229.8 297.4L142.52 322.2M226.8 295.82L130.13 322.2M223.96 294.32L117.75 322.2M221.27 292.9L105.36 322.2M218.7 291.55L92.98 322.2M283.99 319.47L289.57 322.2M289.72 316.48L302.29 322.2M295.06 313.69L315.01 322.2M300.03 311.1L327.73 322.2M304.67 308.67L340.45 322.2M309.02 306.4L353.18 322.2M313.1 304.27L365.9 322.2M316.94 302.27L378.62 322.2M320.56 300.38L391.34 322.2M323.97 298.6L404.06 322.2M327.19 296.92L416.78 322.2M330.25 295.32L429.5 322.2M333.14 293.81L442.22 322.2M335.89 292.38L454.94 322.2M338.5 291.02L467.66 322.2" stroke="#7a9488" stroke-opacity="0.7" stroke-width="0.6" fill="none"/><path d="M115.6 237.2 L277.8 322.7 L277.8 277.5 Z" fill="url(#wl)"/><path d="M441.6 237.2 L277.8 322.7 L277.8 277.5 Z" fill="url(#wr)"/><path d="M115.6 237.2L277.8 280.51M441.6 237.2L277.8 280.51M115.6 237.2L277.8 283.53M441.6 237.2L277.8 283.53M115.6 237.2L277.8 286.54M441.6 237.2L277.8 286.54M115.6 237.2L277.8 289.55M441.6 237.2L277.8 289.55M115.6 237.2L277.8 292.57M441.6 237.2L277.8 292.57M115.6 237.2L277.8 295.58M441.6 237.2L277.8 295.58M115.6 237.2L277.8 298.59M441.6 237.2L277.8 298.59M115.6 237.2L277.8 301.61M441.6 237.2L277.8 301.61M115.6 237.2L277.8 304.62M441.6 237.2L277.8 304.62M115.6 237.2L277.8 307.63M441.6 237.2L277.8 307.63M115.6 237.2L277.8 310.65M441.6 237.2L277.8 310.65M115.6 237.2L277.8 313.66M441.6 237.2L277.8 313.66M115.6 237.2L277.8 316.67M441.6 237.2L277.8 316.67M115.6 237.2L277.8 319.69M441.6 237.2L277.8 319.69" stroke="#6a9080" stroke-opacity="0.45" stroke-width="0.5" fill="none"/><path d="M80 237.2 L477 237.2" stroke="#b8b8b8" stroke-opacity="0.55" stroke-width="0.7"/><path d="M79 322.2 L477 322.2" stroke="#a0aea6" stroke-opacity="0.6" stroke-width="0.7"/><path d="M277.8 151.8L218.7 182.92M277.8 161.29L218.7 188.95M277.8 170.79L218.7 194.99M277.8 180.28L218.7 201.02M277.8 189.78L218.7 207.06M277.8 199.27L218.7 213.09M277.8 208.77L218.7 219.13M277.8 218.26L218.7 225.16M277.8 227.76L218.7 231.2M277.8 237.25L218.7 237.23M277.8 246.74L218.7 243.27M277.8 256.24L218.7 249.3M277.8 265.73L218.7 255.34M277.8 275.23L218.7 261.37M277.8 284.72L218.7 267.41M277.8 294.22L218.7 273.44M277.8 303.71L218.7 279.48M277.8 313.21L218.7 285.51M277.8 322.7L218.7 291.55M277.8 151.8L277.8 322.7M271.83 154.94L271.83 319.55M266.28 157.86L266.28 316.63M261.12 160.58L261.12 313.91M256.29 163.12L256.29 311.36M251.78 165.5L251.78 308.98M247.55 167.73L247.55 306.75M243.57 169.82L243.57 304.66M239.82 171.8L239.82 302.68M236.29 173.66L236.29 300.82M232.95 175.41L232.95 299.06M229.8 177.07L229.8 297.4M226.8 178.65L226.8 295.82M223.96 180.14L223.96 294.32M221.27 181.57L221.27 292.9M218.7 182.92L218.7 291.55" stroke="#4c5e70" stroke-opacity="0.9" stroke-width="0.6" fill="none"/><path d="M277.8 151.8L338.5 183.45M277.8 161.29L338.5 189.42M277.8 170.79L338.5 195.4M277.8 180.28L338.5 201.38M277.8 189.78L338.5 207.35M277.8 199.27L338.5 213.33M277.8 208.77L338.5 219.3M277.8 218.26L338.5 225.28M277.8 227.76L338.5 231.26M277.8 237.25L338.5 237.23M277.8 246.74L338.5 243.21M277.8 256.24L338.5 249.18M277.8 265.73L338.5 255.16M277.8 275.23L338.5 261.14M277.8 284.72L338.5 267.11M277.8 294.22L338.5 273.09M277.8 303.71L338.5 279.06M277.8 313.21L338.5 285.04M277.8 322.7L338.5 291.02M277.8 151.8L277.8 322.7M283.99 155.03L283.99 319.47M289.72 158.02L289.72 316.48M295.06 160.8L295.06 313.69M300.03 163.39L300.03 311.1M304.67 165.81L304.67 308.67M309.02 168.08L309.02 306.4M313.1 170.21L313.1 304.27M316.94 172.21L316.94 302.27M320.56 174.09L320.56 300.38M323.97 175.87L323.97 298.6M327.19 177.55L327.19 296.92M330.25 179.14L330.25 295.32M333.14 180.65L333.14 293.81M335.89 182.09L335.89 292.38M338.5 183.45L338.5 291.02" stroke="#b08472" stroke-opacity="0.75" stroke-width="0.55" fill="none"/><path d="M277.8 151.8 L134.8 227.09" stroke="#808080" stroke-width="0.8"/><path d="M277.8 151.8 L441.6 237.2" stroke="#a09890" stroke-width="0.8"/><path d="M115.6 237.2 L277.8 322.7" stroke="#3f5a5a" stroke-width="1"/><path d="M441.6 237.2 L277.8 322.7" stroke="#9a6a40" stroke-width="1"/><path d="M277.8 322.7 L277.8 337 M267.8 328.2 L277.8 322.7 L287.8 328.2" stroke="#b0b0b0" stroke-width="0.6" fill="none"/><path d="M277.8 151.8L218.7 182.92M277.8 161.29L218.7 188.95M277.8 170.79L218.7 194.99M277.8 180.28L218.7 201.02M277.8 189.78L218.7 207.06M277.8 199.27L218.7 213.09M277.8 208.77L218.7 219.13M277.8 218.26L218.7 225.16M277.8 227.76L218.7 231.2M277.8 237.25L218.7 237.23M277.8 246.74L218.7 243.27M277.8 256.24L218.7 249.3M277.8 265.73L218.7 255.34M277.8 275.23L218.7 261.37M277.8 284.72L218.7 267.41M277.8 294.22L218.7 273.44M277.8 303.71L218.7 279.48M277.8 313.21L218.7 285.51M277.8 322.7L218.7 291.55M277.8 151.8L277.8 322.7M271.83 154.94L271.83 319.55M266.28 157.86L266.28 316.63M261.12 160.58L261.12 313.91M256.29 163.12L256.29 311.36M251.78 165.5L251.78 308.98M247.55 167.73L247.55 306.75M243.57 169.82L243.57 304.66M239.82 171.8L239.82 302.68M236.29 173.66L236.29 300.82M232.95 175.41L232.95 299.06M229.8 177.07L229.8 297.4M226.8 178.65L226.8 295.82M223.96 180.14L223.96 294.32M221.27 181.57L221.27 292.9M218.7 182.92L218.7 291.55" stroke="#6040b0" stroke-opacity="0.4" stroke-width="0.55" fill="none"/><path d="M277.8 151.8L338.5 183.45M277.8 161.29L338.5 189.42M277.8 170.79L338.5 195.4M277.8 180.28L338.5 201.38M277.8 189.78L338.5 207.35M277.8 199.27L338.5 213.33M277.8 208.77L338.5 219.3M277.8 218.26L338.5 225.28M277.8 227.76L338.5 231.26M277.8 237.25L338.5 237.23M277.8 246.74L338.5 243.21M277.8 256.24L338.5 249.18M277.8 265.73L338.5 255.16M277.8 275.23L338.5 261.14M277.8 284.72L338.5 267.11M277.8 294.22L338.5 273.09M277.8 303.71L338.5 279.06M277.8 313.21L338.5 285.04M277.8 322.7L338.5 291.02M277.8 151.8L277.8 322.7M283.99 155.03L283.99 319.47M289.72 158.02L289.72 316.48M295.06 160.8L295.06 313.69M300.03 163.39L300.03 311.1M304.67 165.81L304.67 308.67M309.02 168.08L309.02 306.4M313.1 170.21L313.1 304.27M316.94 172.21L316.94 302.27M320.56 174.09L320.56 300.38M323.97 175.87L323.97 298.6M327.19 177.55L327.19 296.92M330.25 179.14L330.25 295.32M333.14 180.65L333.14 293.81M335.89 182.09L335.89 292.38M338.5 183.45L338.5 291.02" stroke="#e04070" stroke-opacity="0.55" stroke-width="0.55" fill="none"/><path d="M220.02 311.20L219.59 311.69L219.00 312.20L218.25 312.70L217.34 313.20L216.26 313.69L215.00 314.18L213.58 314.64L212.04 315.07L209.87 315.59L207.74 316.01L205.69 316.31L203.77 316.49L202.01 316.55L200.40 316.49L198.96 316.33L197.70 316.05L196.61 315.68L195.67 315.21L194.90 314.63L194.28 313.97L193.87 313.29L193.68 312.61L193.72 311.93L193.97 311.25L194.46 310.57L195.17 309.89L196.12 309.21L197.31 308.53L198.73 307.88L200.37 307.24L202.22 306.63L206.34 305.46L209.65 308.29L206.96 309.15L206.11 309.51L205.47 309.89L205.07 310.32L204.95 310.80L205.18 311.32L205.41 311.56L205.69 311.76L206.02 311.92L206.39 312.03L206.79 312.11L207.21 312.16L207.62 312.17L208.03 312.15L208.43 312.11L208.88 312.04L209.41 311.94L210.00 311.80L210.46 311.68L210.81 311.57L211.12 311.44L211.42 311.30L211.72 311.11L211.98 310.90L212.19 310.65L212.33 310.39L212.38 310.09L212.34 309.79L212.21 309.46L211.98 309.12L211.06 307.96L220.75 305.68L221.62 306.74L221.89 307.02L222.20 307.26L222.54 307.45L222.91 307.59L223.31 307.69L223.71 307.75L224.11 307.78L224.49 307.77L224.83 307.75L225.16 307.71L225.52 307.64L225.95 307.55L226.36 307.44L226.70 307.33L226.98 307.23L227.23 307.12L227.47 307.00L227.69 306.86L227.87 306.70L228.00 306.53L228.07 306.35L228.08 306.15L228.02 305.95L227.88 305.73L227.69 305.55L227.46 305.39L227.19 305.27L226.88 305.17L226.55 305.10L226.18 305.06L225.81 305.04L225.44 305.04L225.07 305.06L224.69 305.11L224.28 305.17L222.18 305.56L220.48 302.51L224.36 301.88L226.07 301.67L227.67 301.54L229.14 301.50L230.50 301.53L231.73 301.64L232.85 301.82L233.83 302.07L234.69 302.38L235.42 302.75L236.04 303.18L236.54 303.68L236.93 304.24L237.16 304.80L237.23 305.35L237.12 305.91L236.84 306.47L236.37 307.03L235.70 307.60L234.84 308.16L233.75 308.72L232.44 309.26L230.91 309.78L229.23 310.25L227.86 310.58L226.51 310.85L225.19 311.06L223.93 311.20L222.75 311.27L221.65 311.28L220.64 311.23L220.04 311.16L220.02 311.20ZM226.47 326.10L224.42 326.60L222.40 327.02L220.42 327.38L218.49 327.66L216.64 327.86L214.88 327.99L213.22 328.04L211.67 328.00L210.22 327.89L208.89 327.70L207.68 327.44L206.60 327.11L205.65 326.71L204.84 326.25L204.16 325.72L203.62 325.13L199.43 319.63L240.30 308.82L243.87 313.04L244.50 313.97L244.86 314.90L244.92 315.84L244.68 316.80L244.13 317.78L243.25 318.79L242.04 319.81L240.47 320.84L238.54 321.87L236.24 322.90L233.59 323.92L230.61 324.92L228.52 325.54L226.47 326.10ZM230.92 320.68L232.08 320.20L233.06 319.72L233.90 319.22L234.59 318.71L235.13 318.18L235.51 317.65L235.70 317.10L235.72 316.55L235.54 316.00L235.17 315.44L234.11 314.15L212.81 320.07L214.19 321.82L214.68 322.30L215.33 322.68L216.12 322.96L217.05 323.14L218.12 323.24L219.32 323.26L220.60 323.19L221.93 323.04L223.31 322.82L224.76 322.52L226.31 322.14L227.96 321.67L229.56 321.17L230.92 320.68Z" fill="#000" stroke="none" stroke-width="0" fill-rule="evenodd"/></g></svg><div style="left:1px;top:40px;width:23.5px;height:382px;background:#3b3b3b;"></div><div style="left:24.5px;top:58px;width:1px;height:356px;background:#2f2f2f;"></div><div style="left:1px;top:40px;width:23.5px;height:10px;background:#333;"></div><div style="left:4.4px;top:116px;width:15.3px;height:12.7px;background:#262626;"></div><svg style="left:1px;top:0" width="24" height="424" viewBox="1 0 24 424"><defs><linearGradient id="tg"><stop offset="0" stop-color="#eee"/><stop offset="1" stop-color="#222"/></linearGradient></defs><path d="M9 61.5 L15.5 67.5 L12 68 L10 71.5 Z" fill="none" stroke="#c4c4c4" stroke-width="0.9"/><path d="M9 75.7 L15.5 81.7 L12 82.2 L10 85.7 Z" fill="#c4c4c4"/><rect x="17" y="84.2" width="1.2" height="1.2" fill="#999"/><path d="M8 99.4 L9.5 94.9 L14 90.4 L16.5 92.9 L12 97.4 Z" fill="#c4c4c4"/><circle cx="11.5" cy="95.7" r="0.9" fill="#3b3b3b"/><rect x="17" y="98.4" width="1.2" height="1.2" fill="#999"/><path d="M8 113.6 L9.5 109.1 L14 104.6 L16.5 107.1 L12 111.6 Z" fill="#c4c4c4"/><circle cx="11.5" cy="109.9" r="0.9" fill="#3b3b3b"/><rect x="17" y="112.6" width="1.2" height="1.2" fill="#999"/><path d="M7 114.1 Q5 110.1 8 108.1" stroke="#c4c4c4" fill="none" stroke-width="0.8"/><rect x="7" y="118.4" width="9.5" height="7.5" fill="#555" stroke="#c4c4c4" stroke-width="0.9"/><rect x="17" y="125.9" width="1.2" height="1.2" fill="#999"/><path d="M7.5 141.6 Q8 138.6 10 138.6 L16 132.1 L16.8 132.9 L11 139.6 Q10 141.6 7.5 141.6Z" fill="#c4c4c4"/><text x="7.5" y="155.6" font-family="Liberation Serif" font-weight="bold" font-size="12" fill="#c4c4c4">T</text><path d="M8 164 A4.5 4.5 0 1 1 10 169" stroke="#c4c4c4" fill="none" stroke-width="1"/><path d="M6.5 162 L8 166 L10.5 163Z" fill="#c4c4c4"/><path d="M7 181.2 L12 175.2 L16.5 179.2 L11.5 184.2 Z" fill="#c4c4c4"/><path d="M9.5 178.2 L14 182.2" stroke="#3b3b3b" stroke-width="0.8"/><ellipse cx="11" cy="192.4" rx="4.5" ry="3" fill="none" stroke="#c4c4c4" stroke-width="0.9"/><path d="M12 193.4 L16.5 197.4 L14 197.6 L13 199.4Z" fill="#c4c4c4"/><rect x="7.5" y="203.6" width="9" height="8" fill="url(#tg)" stroke="#aaa" stroke-width="0.6"/><path d="M7.5 226.8 L8.5 224.3 L14 218.8 L16 220.8 L10.5 226.3Z" fill="none" stroke="#c4c4c4" stroke-width="0.9"/><circle cx="15.5" cy="218.3" r="1.6" fill="#c4c4c4"/><path d="M7.5 234 L11 237 L9 239 L13 240 L16 237" stroke="#c4c4c4" fill="none" stroke-width="1.2"/><path d="M12 232 L16 235" stroke="#c4c4c4" stroke-width="1.2"/><path d="M7.5 248.1 L11 251.1 L9 253.1 L13 254.1 L16 251.1" stroke="#c4c4c4" fill="none" stroke-width="1.2"/><path d="M12 246.1 L16 249.1" stroke="#c4c4c4" stroke-width="1.2"/><circle cx="10" cy="262.4" r="3" fill="none" stroke="#c4c4c4" stroke-width="0.9"/><circle cx="14" cy="265.4" r="3" fill="none" stroke="#c4c4c4" stroke-width="0.9"/><path d="M9 272.9 L9 280.9 L17 280.9 M7 274.9 L15 274.9 L15 282.9" stroke="#c4c4c4" fill="none" stroke-width="0.9"/><rect x="7.5" y="286.5" width="1" height="10" fill="#c4c4c4"/><rect x="9.5" y="288" width="5" height="2.5" fill="#c4c4c4"/><rect x="9.5" y="292.5" width="7" height="2.5" fill="#c4c4c4"/><path d="M7.5 301.6 L7.5 310.6 L16.5 310.6 Z M7.5 304.6 L13.5 307.6 M11 305.1 L11 310.6" stroke="#c4c4c4" fill="none" stroke-width="0.8"/><path d="M7 315.2 L12 320.2 L9.5 320.5 L8 323.2Z" fill="#c4c4c4"/><circle cx="14" cy="322.2" r="3" fill="#aaa"/><path d="M14 319.2 L14 322.2 L11.5 323.7 M14 322.2 L16.5 323.7" stroke="#3b3b3b" stroke-width="0.6"/><circle cx="8" cy="335" r="2.8" fill="#ddd"/><path d="M14 333 Q17 333 17 337" stroke="#bbb" fill="none"/><rect x="4.5" y="343.7" width="9.5" height="9.5" fill="#d8c0f0" stroke="#bbb" stroke-width="1"/><rect x="10" y="350" width="9" height="9" fill="#fff"/><path d="M10.5 358.5 L18.5 350.5" stroke="#c0103a" stroke-width="1.4"/><rect x="4" y="365" width="4.5" height="4" fill="#000"/><rect x="9.5" y="365" width="2.5" height="4" fill="#ddd"/><rect x="13.5" y="365" width="4.5" height="4" fill="#fff"/><path d="M13.5 369 L18 365" stroke="#c0103a"/><circle cx="11" cy="376.5" r="2.6" fill="#999"/><circle cx="12.5" cy="378" r="2.2" fill="#bbb"/><rect x="6" y="388" width="9" height="6" fill="none" stroke="#aaa"/><rect x="9" y="386" width="9" height="6" fill="#3b3b3b" stroke="#aaa"/><g fill="#ccc"><circle cx="7.5" cy="411.4" r="1.1"/><circle cx="11" cy="411.4" r="1.1"/><circle cx="14.5" cy="411.4" r="1.1"/></g></svg><svg style="left:40.6px;top:73.3px" width="30" height="30" viewBox="-15 -15 30 30"><path d="M-14 -13.5 L0 -13.5 A14 14 0 1 1 -14 0 Z" fill="#262626"/><circle r="11" fill="#d2d2d2"/><path d="M0 -6.8 L0 0 L-6 3.4 L-6 -3.4Z" fill="#f2ece6"/><path d="M0 -6.8 L6 -3.4 L6 3.4 L0 0Z" fill="#e07030"/><path d="M0 0 L6 3.4 L0 6.8 L-6 3.4Z" fill="#ffffff"/><path d="M0 -6.8 L6 -3.4 L6 3.4 L0 6.8 L-6 3.4 L-6 -3.4Z M0 0 L0 -6.8 M0 0 L-6 3.4 M0 0 L6 3.4" fill="none" stroke="#1a1a1a" stroke-width="0.9"/><rect x="-12.3" y="-12.3" width="2.6" height="2.6" fill="#eee"/></svg><div style="left:25.5px;top:399.5px;width:469px;height:15px;background:#3a3a3a;"></div><div style="left:25.5px;top:414.5px;width:469px;height:8px;background:#363636;"></div><div class="t" style="left:28px;top:403.2px;width:8px;height:8px;border-radius:50%;background:#cfcfcf;color:#3a3a3a;font-size:6.5px;line-height:8px;text-align:center;font-weight:bold">?</div><div class="t" style="left:42.6px;top:403.31px;font-size:6.65px;line-height:7.98px;color:#c4c4c4;font-weight:normal;"><b>Faites glisser</b> le curseur pour tracer un rectangle&nbsp; |&nbsp; <b>Cliquez</b> et spécifiez les dimensions pour créer un rectangle&nbsp; |&nbsp; <b>Maj+faites glisser</b> le curseur pour tracer</div><div class="t" style="left:29px;top:416.08px;font-size:6.2px;line-height:7.44px;color:#d0d0d0;font-weight:bold;">44,42%</div><div class="t" style="left:58px;top:416px;font-size:5.5px;line-height:6.6px;color:#aaa;font-weight:normal;">⌄</div><div style="left:71px;top:415px;width:35px;height:7px;background:#303030;"></div><div class="t" style="left:72px;top:416.08px;font-size:6.2px;line-height:7.44px;color:#d0d0d0;font-weight:normal;">0°</div><div class="t" style="left:102px;top:416px;font-size:5.5px;line-height:6.6px;color:#aaa;font-weight:normal;">⌄</div><div style="left:136px;top:415px;width:23px;height:7px;background:#303030;"></div><div class="t" style="left:138px;top:416.08px;font-size:6.2px;line-height:7.44px;color:#d0d0d0;font-weight:normal;">1</div><div class="t" style="left:161px;top:416px;font-size:5.5px;line-height:6.6px;color:#aaa;font-weight:normal;">⌄</div><div class="t" style="left:183.5px;top:416.08px;font-size:6.2px;line-height:7.44px;color:#c8c8c8;font-weight:normal;width:140px;text-align:center">Rectangle</div><div class="t" style="left:313px;top:416.2px;font-size:6px;line-height:7.2px;color:#aaa;font-weight:normal;">▸</div><div style="left:225px;top:378.8px;width:275px;height:20.1px;background:#2c2c2c;border:1px solid #222;border-radius:3px;box-sizing:border-box"></div><div style="left:228px;top:382.5px;width:1.6px;height:13px;background:#a8a8a8;"></div><div style="left:237.5px;top:381.3px;width:161.7px;height:15px;background:#2f2f2f;border:1px solid #3a3a3a;box-sizing:border-box;border-radius:2px"></div><svg style="left:242px;top:383px" width="11" height="11"><rect x="0.5" y="1.5" width="9" height="8" fill="#6a86c8"/><path d="M1 9 L4 5 L6 7 L8 4 L10 9Z" fill="#e8e8e8"/></svg><div class="t" style="left:255.3px;top:384.74px;font-size:7.1px;line-height:8.52px;color:#e4e4e4;font-weight:bold;">Remplissage génératif de la forme (Beta)</div><div style="left:494.5px;top:103px;width:142px;height:311px;background:#3c3c3c;border-left:1px solid #2a2a2a;border-top:1px solid #2a2a2a;box-sizing:border-box"></div><div style="left:495.5px;top:105px;width:141px;height:15.3px;background:#333;"></div><div style="left:495.5px;top:105px;width:33.5px;height:15.3px;background:#3c3c3c;"></div><div class="t" style="left:500.4px;top:108.54px;font-size:6.6px;line-height:7.92px;color:#e6e6e6;font-weight:bold;">Calques</div><div class="t" style="left:534.7px;top:108.54px;font-size:6.6px;line-height:7.92px;color:#a8a8a8;font-weight:normal;">Plans de travail</div><div class="t" style="left:612px;top:108.3px;font-size:7px;line-height:8.4px;color:#888;font-weight:normal;">››</div><div style="left:628px;top:109.5px;width:6px;height:6px;background:#666;"></div><div style="left:503px;top:128px;width:113px;height:11.8px;background:#2e2e2e;"></div><svg style="left:504px;top:129px" width="10" height="10"><circle cx="4" cy="4.3" r="2.6" fill="none" stroke="#aaa" stroke-width="1"/><path d="M6 6.3 L8 8.5" stroke="#aaa"/></svg><div class="t" style="left:520px;top:130.28px;font-size:6.2px;line-height:7.44px;color:#a0a0a0;font-weight:normal;"><i>Rechercher dans tout</i></div><svg style="left:622px;top:128px" width="10" height="10"><path d="M0.5 1 L8.5 1 L5.5 5 L5.5 9 L3.5 8 L3.5 5 Z" fill="#bbb"/></svg><div style="left:496.5px;top:145.8px;width:137px;height:12.4px;background:#2d4766;"></div><svg style="left:500px;top:149px" width="9" height="6"><path d="M0.5 3 Q4.5 -1 8.5 3 Q4.5 7 0.5 3Z" fill="none" stroke="#aaa" stroke-width="0.8"/><circle cx="4.5" cy="3" r="1.2" fill="#aaa"/></svg><div style="left:523.5px;top:145.8px;width:2.5px;height:12.4px;background:#c8153c;"></div><div class="t" style="left:531.5px;top:148.4px;font-size:6px;line-height:7.2px;color:#aaa;font-weight:normal;">⌄</div><div style="left:541px;top:147.2px;width:10.4px;height:9.6px;background:#f2f2f2;border:0.6px solid #222;box-sizing:border-box"></div><div class="t" style="left:555px;top:148.16px;font-size:6.4px;line-height:7.68px;color:#a8c8f0;font-weight:normal;">Texte</div><div style="left:616px;top:149.4px;width:5.2px;height:5.2px;border-radius:50%;border:0.8px solid #aaa;box-sizing:border-box"></div><svg style="left:500px;top:161.4px" width="9" height="6"><path d="M0.5 3 Q4.5 -1 8.5 3 Q4.5 7 0.5 3Z" fill="none" stroke="#aaa" stroke-width="0.8"/><circle cx="4.5" cy="3" r="1.2" fill="#aaa"/></svg><div style="left:523.5px;top:158.2px;width:2.5px;height:12.4px;background:#c8153c;"></div><div style="left:555px;top:159.6px;width:10px;height:9.6px;background:#f2f2f2;border:0.6px solid #222;box-sizing:border-box"></div><div style="left:556px;top:162.9px;width:8px;height:3px;background:#111;"></div><div class="t" style="left:568px;top:160.56px;font-size:6.4px;line-height:7.68px;color:#d0d0d0;font-weight:normal;">&lt;Tracé&gt;</div><div style="left:616px;top:161.8px;width:5.2px;height:5.2px;border-radius:50%;border:0.8px solid #aaa;box-sizing:border-box"></div><svg style="left:500px;top:173.8px" width="9" height="6"><path d="M0.5 3 Q4.5 -1 8.5 3 Q4.5 7 0.5 3Z" fill="none" stroke="#aaa" stroke-width="0.8"/><circle cx="4.5" cy="3" r="1.2" fill="#aaa"/></svg><div style="left:523.5px;top:170.6px;width:2.5px;height:12.4px;background:#c8153c;"></div><div style="left:555px;top:172px;width:10px;height:9.6px;background:#f2f2f2;border:0.6px solid #222;box-sizing:border-box"></div><div style="left:556px;top:175.3px;width:8px;height:3px;background:#111;"></div><div class="t" style="left:568px;top:172.96px;font-size:6.4px;line-height:7.68px;color:#d0d0d0;font-weight:normal;">Texte ...</div><div style="left:616px;top:174.2px;width:5.2px;height:5.2px;border-radius:50%;border:0.8px solid #aaa;box-sizing:border-box"></div><svg style="left:500px;top:186.2px" width="9" height="6"><path d="M0.5 3 Q4.5 -1 8.5 3 Q4.5 7 0.5 3Z" fill="none" stroke="#aaa" stroke-width="0.8"/><circle cx="4.5" cy="3" r="1.2" fill="#aaa"/></svg><div style="left:523.5px;top:183px;width:2.5px;height:12.4px;background:#c8153c;"></div><div style="left:555px;top:184.4px;width:10px;height:9.6px;background:#f2f2f2;border:0.6px solid #222;box-sizing:border-box"></div><div style="left:556px;top:187.7px;width:8px;height:3px;background:#111;"></div><div class="t" style="left:568px;top:185.36px;font-size:6.4px;line-height:7.68px;color:#d0d0d0;font-weight:normal;">Texte ...</div><div style="left:616px;top:186.6px;width:5.2px;height:5.2px;border-radius:50%;border:0.8px solid #aaa;box-sizing:border-box"></div><svg style="left:500px;top:198.6px" width="9" height="6"><path d="M0.5 3 Q4.5 -1 8.5 3 Q4.5 7 0.5 3Z" fill="none" stroke="#aaa" stroke-width="0.8"/><circle cx="4.5" cy="3" r="1.2" fill="#aaa"/></svg><div style="left:523.5px;top:195.4px;width:2.5px;height:12.4px;background:#c8153c;"></div><div style="left:555px;top:196.8px;width:10px;height:9.6px;background:#f2f2f2;border:0.6px solid #222;box-sizing:border-box"></div><div style="left:556px;top:200.1px;width:8px;height:3px;background:#111;"></div><div class="t" style="left:568px;top:197.76px;font-size:6.4px;line-height:7.68px;color:#d0d0d0;font-weight:normal;">Texte ...</div><div style="left:616px;top:199px;width:5.2px;height:5.2px;border-radius:50%;border:0.8px solid #aaa;box-sizing:border-box"></div><svg style="left:500px;top:211px" width="9" height="6"><path d="M0.5 3 Q4.5 -1 8.5 3 Q4.5 7 0.5 3Z" fill="none" stroke="#aaa" stroke-width="0.8"/><circle cx="4.5" cy="3" r="1.2" fill="#aaa"/></svg><div style="left:523.5px;top:207.8px;width:2.5px;height:12.4px;background:#c8153c;"></div><div style="left:555px;top:209.2px;width:10px;height:9.6px;background:#f2f2f2;border:0.6px solid #222;box-sizing:border-box"></div><div style="left:556px;top:212.5px;width:8px;height:3px;background:#111;"></div><div class="t" style="left:568px;top:210.16px;font-size:6.4px;line-height:7.68px;color:#d0d0d0;font-weight:normal;">&lt;Tracé&gt;</div><div style="left:616px;top:211.4px;width:5.2px;height:5.2px;border-radius:50%;border:0.8px solid #aaa;box-sizing:border-box"></div><svg style="left:500px;top:223.4px" width="9" height="6"><path d="M0.5 3 Q4.5 -1 8.5 3 Q4.5 7 0.5 3Z" fill="none" stroke="#aaa" stroke-width="0.8"/><circle cx="4.5" cy="3" r="1.2" fill="#aaa"/></svg><div style="left:523.5px;top:220.2px;width:2.5px;height:12.4px;background:#3a5fd0;"></div><div style="left:541px;top:221.6px;width:10.4px;height:9.6px;background:#f2f2f2;border:0.6px solid #222;box-sizing:border-box"></div><div class="t" style="left:555px;top:222.56px;font-size:6.4px;line-height:7.68px;color:#d0d0d0;font-weight:normal;">Grille</div><div style="left:616px;top:223.8px;width:5.2px;height:5.2px;border-radius:50%;border:0.8px solid #aaa;box-sizing:border-box"></div><div style="left:495.5px;top:401px;width:141px;height:13px;background:#3c3c3c;"></div><div class="t" style="left:503px;top:404.96px;font-size:6.4px;line-height:7.68px;color:#c8c8c8;font-weight:normal;">2 Ca...</div><svg style="left:520px;top:403px" width="115" height="11"><g fill="none" stroke="#aaa" stroke-width="0.9"><rect x="10" y="2" width="7" height="7"/><rect x="70" y="2" width="8" height="6"/><rect x="85" y="2" width="7" height="7"/><path d="M100 3 L107 3 L106 10 L101 10Z"/></g><g fill="none" stroke="#666" stroke-width="0.9"><rect x="25" y="2" width="7" height="7"/><circle cx="43" cy="5" r="3"/><path d="M55 2 L58 9"/></g></svg><div style="left:637px;top:40px;width:117px;height:382px;background:#2e2e2e;"></div><div style="left:638px;top:48px;width:116px;height:374px;background:#3c3c3c;"></div><div style="left:638px;top:88px;width:116px;height:2px;background:#333;"></div><div style="left:638px;top:262px;width:116px;height:2px;background:#333;"></div><div style="left:638px;top:320px;width:116px;height:2px;background:#333;"></div><div style="left:638px;top:376px;width:116px;height:2px;background:#333;"></div><div style="left:641px;top:382.7px;width:110px;height:11.7px;background:#262626;"></div><div class="t" style="left:660px;top:58.59px;font-size:6.35px;line-height:7.62px;color:#dcdcdc;font-weight:bold;">Propriétés</div><div class="t" style="left:660px;top:75.09px;font-size:6.35px;line-height:7.62px;color:#dcdcdc;font-weight:bold;">Alignement</div><div class="t" style="left:660px;top:99.19px;font-size:6.35px;line-height:7.62px;color:#dcdcdc;font-weight:bold;">Transformation</div><div class="t" style="left:660px;top:115.69px;font-size:6.35px;line-height:7.62px;color:#dcdcdc;font-weight:bold;">Pathfinder</div><div class="t" style="left:660px;top:132.29px;font-size:6.35px;line-height:7.62px;color:#dcdcdc;font-weight:bold;">Nuancier</div><div class="t" style="left:660px;top:148.79px;font-size:6.35px;line-height:7.62px;color:#dcdcdc;font-weight:bold;">Contour</div><div class="t" style="left:660px;top:165.29px;font-size:6.35px;line-height:7.62px;color:#dcdcdc;font-weight:bold;">Formes</div><div class="t" style="left:660px;top:181.79px;font-size:6.35px;line-height:7.62px;color:#dcdcdc;font-weight:bold;">Symboles</div><div class="t" style="left:660px;top:198.29px;font-size:6.35px;line-height:7.62px;color:#dcdcdc;font-weight:bold;">Dégradé</div><div class="t" style="left:660px;top:214.79px;font-size:6.35px;line-height:7.62px;color:#dcdcdc;font-weight:bold;">Transparence</div><div class="t" style="left:660px;top:231.29px;font-size:6.35px;line-height:7.62px;color:#dcdcdc;font-weight:bold;">Couleur</div><div class="t" style="left:660px;top:247.79px;font-size:6.35px;line-height:7.62px;color:#dcdcdc;font-weight:bold;">Guide des couleurs</div><div class="t" style="left:660px;top:271.89px;font-size:6.35px;line-height:7.62px;color:#dcdcdc;font-weight:bold;">Liens</div><div class="t" style="left:660px;top:288.39px;font-size:6.35px;line-height:7.62px;color:#dcdcdc;font-weight:bold;">Bibliothèques</div><div class="t" style="left:660px;top:304.89px;font-size:6.35px;line-height:7.62px;color:#dcdcdc;font-weight:bold;">Informations sur le docum...</div><div class="t" style="left:660px;top:328.99px;font-size:6.35px;line-height:7.62px;color:#dcdcdc;font-weight:bold;">Variables</div><div class="t" style="left:660px;top:345.49px;font-size:6.35px;line-height:7.62px;color:#dcdcdc;font-weight:bold;">Aspect</div><div class="t" style="left:660px;top:361.99px;font-size:6.35px;line-height:7.62px;color:#dcdcdc;font-weight:bold;">Exportation de ressources</div><div class="t" style="left:660px;top:385.79px;font-size:6.35px;line-height:7.62px;color:#dcdcdc;font-weight:bold;">Calques</div><div class="t" style="left:660px;top:402.54px;font-size:6.6px;line-height:7.92px;color:#9a9a9a;font-weight:bold;">Plans de travail</div><svg style="left:0;top:0" width="755" height="424"><g stroke="#c4c4c4" stroke-width="0.8" fill="none"><path d="M644 59.2h9M644 61.7h9M644 64.2h9"/><circle cx="647" cy="59.2" r="1.1" fill="#3c3c3c"/><circle cx="650" cy="61.7" r="1.1" fill="#3c3c3c"/><circle cx="647" cy="64.2" r="1.1" fill="#3c3c3c"/></g><g fill="#c4c4c4"><rect x="644" y="73.7" width="1" height="9"/><rect x="645.5" y="75.2" width="4" height="2.5"/><rect x="645.5" y="78.7" width="8" height="2.5"/></g><g fill="none" stroke="#c4c4c4" stroke-width="0.8" stroke-dasharray="1.2 1"><rect x="645" y="98.8" width="7.5" height="7.5"/></g><g fill="#c4c4c4"><rect x="644" y="97.8" width="2" height="2"/><rect x="651.5" y="97.8" width="2" height="2"/><rect x="644" y="105.3" width="2" height="2"/><rect x="651.5" y="105.3" width="2" height="2"/></g><rect x="644" y="114.8" width="5.5" height="5" fill="#c4c4c4"/><rect x="647.5" y="117.8" width="5.5" height="5" fill="#999" stroke="#3c3c3c" stroke-width="0.6"/><rect x="644" y="131.9" width="9.5" height="7" fill="#888"/><g fill="#bbb"><rect x="645" y="132.70000000000002" width="2.2" height="2.4"/><rect x="647.8" y="132.70000000000002" width="2.2" height="2.4"/><rect x="650.6" y="132.70000000000002" width="2.2" height="2.4"/><rect x="645" y="135.9" width="2.2" height="2.4"/></g><g fill="#c4c4c4"><rect x="644" y="148.4" width="9.5" height="1.1"/><rect x="644" y="151.20000000000002" width="9.5" height="1.3"/><rect x="644" y="154.20000000000002" width="9.5" height="1.6"/></g><g fill="#c4c4c4"><rect x="646.5" y="168.4" width="4" height="4.5"/><path d="M647 168.4 L645 163.9 L648 167.4Z M649 168.4 L648.5 163.4 L650 167.9Z M650 168.4 L652.5 164.9 L651 168.4Z"/></g><g fill="#c4c4c4"><circle cx="648.5" cy="182.70000000000002" r="2"/><circle cx="646.3" cy="185.4" r="2"/><circle cx="650.7" cy="185.4" r="2"/><path d="M648 184.9 L647 188.9 L650 188.9 L649 184.9Z"/></g><defs><linearGradient id="gd"><stop offset="0" stop-color="#222"/><stop offset="1" stop-color="#eee"/></linearGradient></defs><rect x="644" y="197.9" width="9.5" height="7.5" fill="url(#gd)" stroke="#aaa" stroke-width="0.5"/><circle cx="647.5" cy="217.1" r="3.3" fill="#bbb"/><circle cx="649.8" cy="218.9" r="3.3" fill="#777" stroke="#aaa" stroke-width="0.5"/><ellipse cx="648.8" cy="234.9" rx="4.8" ry="3.5" fill="none" stroke="#c4c4c4" stroke-width="1"/><g fill="#c4c4c4"><circle cx="647" cy="233.9" r="0.9"/><circle cx="650" cy="233.4" r="0.9"/></g><path d="M644 255.4 L644 246.9 Q652 248.9 653.5 255.4Z" fill="#999" stroke="#ccc" stroke-width="0.6"/><g fill="none" stroke="#c4c4c4" stroke-width="1"><rect x="644" y="273" width="5.5" height="4" rx="2"/><rect x="648" y="273" width="5.5" height="4" rx="2"/></g><rect x="644.5" y="287.0" width="8" height="9.5" fill="none" stroke="#c4c4c4" stroke-width="1"/><rect x="647.5" y="287.0" width="2" height="4" fill="#c4c4c4"/><rect x="644.5" y="303.5" width="8" height="9.5" fill="#aaa"/><circle cx="648.5" cy="309" r="2.3" fill="#3c3c3c"/><rect x="648" y="308" width="1" height="2.5" fill="#ccc"/><circle cx="647" cy="333.6" r="2.6" fill="none" stroke="#c4c4c4" stroke-width="1.2"/><circle cx="651.5" cy="329.6" r="1.8" fill="none" stroke="#c4c4c4" stroke-width="0.9"/><circle cx="648.5" cy="348.6" r="3.8" fill="#aaa"/><path d="M649 361.1 L644 361.1 L644 370.1 L653 370.1 L653 365.1" fill="none" stroke="#c4c4c4" stroke-width="1"/><path d="M648 366.1 L653 361.1 M650 361.1 L653 361.1 L653 364.1" stroke="#c4c4c4" stroke-width="1" fill="none"/><path d="M648.7 384.9 L653.5 387.59999999999997 L648.7 390.29999999999995 L644 387.59999999999997Z" fill="#c4c4c4"/><path d="M644 389.9 L648.7 392.59999999999997 L653.5 389.9" fill="none" stroke="#c4c4c4" stroke-width="1.2"/><rect x="645" y="401.5" width="6" height="5" fill="none" stroke="#aaa" stroke-width="0.9"/><rect x="648" y="404.5" width="6" height="5" fill="#555" stroke="#aaa" stroke-width="0.9"/></svg><div class="t" style="left:654.5px;top:399.68px;font-size:12.2px;line-height:14.64px;color:#f4f4f4;font-weight:normal;letter-spacing:-0.35px;text-shadow:0 0 1px #000">Linked<span style="display:inline-block;background:#fff;color:#3c3c3c;padding:0 1px;line-height:10px">in</span> Learning</div><div style="left:376.3px;top:227px;width:187.9px;height:197px;background:linear-gradient(90deg,#484848 0%,#3a3a3a 30%,#2c2c2c 60%,#282828 100%);border:1px solid #1a1a1a;border-radius:4px;box-sizing:border-box;box-shadow:0 2px 6px rgba(0,0,0,0.5)"></div><div class="t" style="left:384.7px;top:232.56px;font-size:7.4px;line-height:8.88px;color:#e6e6e6;font-weight:normal;">Couper</div><div class="t" style="left:384.7px;top:245.56px;font-size:7.4px;line-height:8.88px;color:#e6e6e6;font-weight:normal;">Copier</div><div class="t" style="left:384.7px;top:258.56px;font-size:7.4px;line-height:8.88px;color:#e6e6e6;font-weight:normal;">Coller</div><div class="t" style="left:384.7px;top:271.56px;font-size:7.4px;line-height:8.88px;color:#e6e6e6;font-weight:normal;">Coller...</div><div style="left:384.7px;top:285.7px;width:172px;height:0.8px;background:#3e3e3e;"></div><div class="t" style="left:384.7px;top:290.76px;font-size:7.4px;line-height:8.88px;color:#6a6a6a;font-weight:normal;">Accrocher au glyphe</div><div style="left:384.7px;top:304.6px;width:172px;height:0.8px;background:#3e3e3e;"></div><div class="t" style="left:384.7px;top:310.26px;font-size:7.4px;line-height:8.88px;color:#e6e6e6;font-weight:normal;">Annuler</div><div class="t" style="left:384.7px;top:323.26px;font-size:7.4px;line-height:8.88px;color:#6a6a6a;font-weight:normal;">Rétablir</div><div style="left:384.7px;top:337.2px;width:172px;height:0.8px;background:#3e3e3e;"></div><div class="t" style="left:384.7px;top:342.76px;font-size:7.4px;line-height:8.88px;color:#e6e6e6;font-weight:normal;">Aligner sur la grille en pixels</div><div style="left:384.7px;top:357px;width:172px;height:0.8px;background:#3e3e3e;"></div><div class="t" style="left:384.7px;top:362.06px;font-size:7.4px;line-height:8.88px;color:#e6e6e6;font-weight:normal;">Perspective</div><div style="left:384.7px;top:376px;width:172px;height:0.8px;background:#3e3e3e;"></div><div class="t" style="left:384.7px;top:381.56px;font-size:7.4px;line-height:8.88px;color:#e6e6e6;font-weight:normal;">Isoler le tracé sélectionné</div><div class="t" style="left:384.7px;top:394.56px;font-size:7.4px;line-height:8.88px;color:#e6e6e6;font-weight:normal;">Associer</div><div class="t" style="left:551px;top:271.2px;font-size:8px;line-height:9.6px;color:#ddd;font-weight:normal;">›</div><div class="t" style="left:551px;top:361.7px;font-size:8px;line-height:9.6px;color:#ddd;font-weight:normal;">›</div><div class="t" style="left:466.5px;top:408.7px;font-size:8px;line-height:9.6px;color:#ddd;font-weight:normal;">⌄</div></div></body></html>
